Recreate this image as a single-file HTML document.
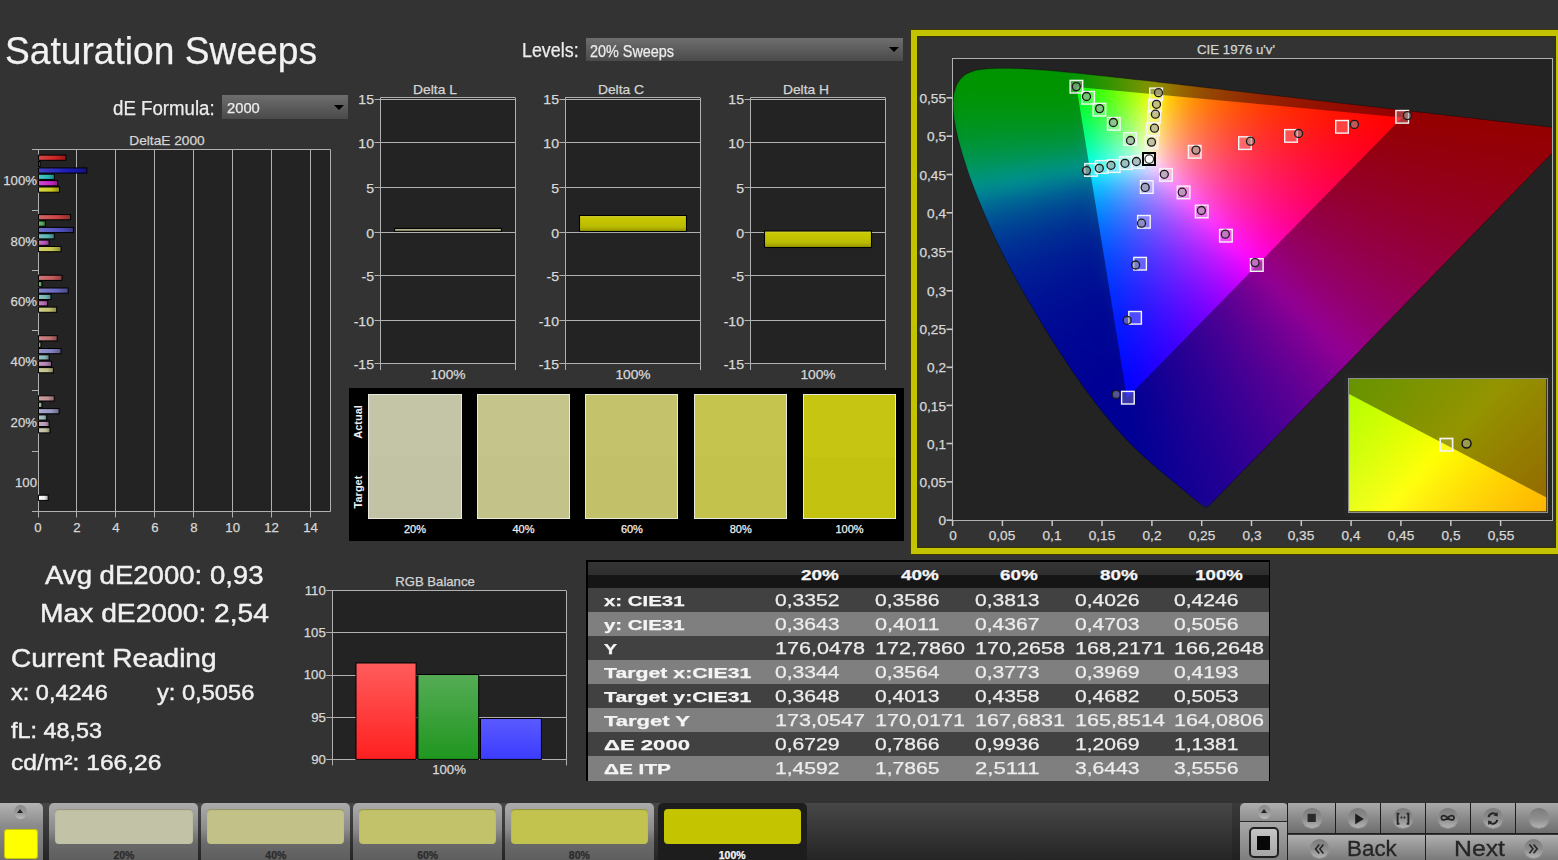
<!DOCTYPE html><html><head><meta charset="utf-8"><style>html,body{margin:0;padding:0}body{width:1558px;height:860px;position:relative;overflow:hidden;background:#333;font-family:"Liberation Sans",sans-serif}.t{position:absolute;line-height:1;white-space:nowrap;-webkit-text-stroke:0.25px currentColor}svg{overflow:visible}</style></head><body><span class="t" style="left:5.0px;top:30.6px;font-size:39.00px;color:#f2f2f2;transform:scaleX(0.9530);transform-origin:0 0;">Saturation Sweeps</span><span class="t" style="left:113.3px;top:98.8px;font-size:19.50px;color:#ececec;transform:scaleX(0.9567);transform-origin:0 0;">dE Formula:</span><div style="position:absolute;left:222.0px;top:95.0px;width:126.0px;height:24.0px;background:linear-gradient(#6e6e6e,#4a4a4a);"></div><div style="position:absolute;left:334px;top:105px;width:0;height:0;border-left:5px solid transparent;border-right:5px solid transparent;border-top:5px solid #000"></div><span class="t" style="left:226.5px;top:101.4px;font-size:14.60px;color:#ececec;transform:scaleX(1.0102);transform-origin:0 0;">2000</span><span class="t" style="left:522.2px;top:41.3px;font-size:19.50px;color:#ececec;transform:scaleX(0.9159);transform-origin:0 0;">Levels:</span><div style="position:absolute;left:586.0px;top:38.0px;width:317.0px;height:23.0px;background:linear-gradient(#6e6e6e,#4a4a4a);"></div><div style="position:absolute;left:889px;top:47px;width:0;height:0;border-left:5px solid transparent;border-right:5px solid transparent;border-top:5px solid #000"></div><span class="t" style="left:590.4px;top:42.9px;font-size:16.40px;color:#ececec;transform:scaleX(0.8780);transform-origin:0 0;">20% Sweeps</span><svg style="position:absolute;left:0;top:0" width="1558" height="860"><defs><linearGradient id="bg00" x1="0" y1="0" x2="1" y2="0"><stop offset="0" stop-color="#d84b4b"/><stop offset="0.6" stop-color="#d02424"/><stop offset="1" stop-color="#911919"/></linearGradient><linearGradient id="bg01" x1="0" y1="0" x2="1" y2="0"><stop offset="0" stop-color="#77b777"/><stop offset="0.6" stop-color="#5aa85a"/><stop offset="1" stop-color="#3e753e"/></linearGradient><linearGradient id="bg02" x1="0" y1="0" x2="1" y2="0"><stop offset="0" stop-color="#4444c4"/><stop offset="0.6" stop-color="#1c1cb8"/><stop offset="1" stop-color="#131380"/></linearGradient><linearGradient id="bg03" x1="0" y1="0" x2="1" y2="0"><stop offset="0" stop-color="#50c4c4"/><stop offset="0.6" stop-color="#2ab8b8"/><stop offset="1" stop-color="#1d8080"/></linearGradient><linearGradient id="bg04" x1="0" y1="0" x2="1" y2="0"><stop offset="0" stop-color="#d14ed1"/><stop offset="0.6" stop-color="#c828c8"/><stop offset="1" stop-color="#8c1c8c"/></linearGradient><linearGradient id="bg05" x1="0" y1="0" x2="1" y2="0"><stop offset="0" stop-color="#d5d549"/><stop offset="0.6" stop-color="#cccc22"/><stop offset="1" stop-color="#8e8e17"/></linearGradient><linearGradient id="bg10" x1="0" y1="0" x2="1" y2="0"><stop offset="0" stop-color="#d16565"/><stop offset="0.6" stop-color="#c84444"/><stop offset="1" stop-color="#8c2f2f"/></linearGradient><linearGradient id="bg11" x1="0" y1="0" x2="1" y2="0"><stop offset="0" stop-color="#71b771"/><stop offset="0.6" stop-color="#52a852"/><stop offset="1" stop-color="#397539"/></linearGradient><linearGradient id="bg12" x1="0" y1="0" x2="1" y2="0"><stop offset="0" stop-color="#6f6fcb"/><stop offset="0.6" stop-color="#5050c0"/><stop offset="1" stop-color="#383886"/></linearGradient><linearGradient id="bg13" x1="0" y1="0" x2="1" y2="0"><stop offset="0" stop-color="#79c1c1"/><stop offset="0.6" stop-color="#5cb4b4"/><stop offset="1" stop-color="#407d7d"/></linearGradient><linearGradient id="bg14" x1="0" y1="0" x2="1" y2="0"><stop offset="0" stop-color="#c472c4"/><stop offset="0.6" stop-color="#b854b8"/><stop offset="1" stop-color="#803a80"/></linearGradient><linearGradient id="bg15" x1="0" y1="0" x2="1" y2="0"><stop offset="0" stop-color="#d1d16f"/><stop offset="0.6" stop-color="#c8c850"/><stop offset="1" stop-color="#8c8c38"/></linearGradient><linearGradient id="bg20" x1="0" y1="0" x2="1" y2="0"><stop offset="0" stop-color="#ce7777"/><stop offset="0.6" stop-color="#c45a5a"/><stop offset="1" stop-color="#893e3e"/></linearGradient><linearGradient id="bg21" x1="0" y1="0" x2="1" y2="0"><stop offset="0" stop-color="#7cb77c"/><stop offset="0.6" stop-color="#60a860"/><stop offset="1" stop-color="#437543"/></linearGradient><linearGradient id="bg22" x1="0" y1="0" x2="1" y2="0"><stop offset="0" stop-color="#8383cb"/><stop offset="0.6" stop-color="#6868c0"/><stop offset="1" stop-color="#484886"/></linearGradient><linearGradient id="bg23" x1="0" y1="0" x2="1" y2="0"><stop offset="0" stop-color="#8dc1c1"/><stop offset="0.6" stop-color="#74b4b4"/><stop offset="1" stop-color="#517d7d"/></linearGradient><linearGradient id="bg24" x1="0" y1="0" x2="1" y2="0"><stop offset="0" stop-color="#c186c1"/><stop offset="0.6" stop-color="#b46cb4"/><stop offset="1" stop-color="#7d4b7d"/></linearGradient><linearGradient id="bg25" x1="0" y1="0" x2="1" y2="0"><stop offset="0" stop-color="#cece89"/><stop offset="0.6" stop-color="#c4c470"/><stop offset="1" stop-color="#89894e"/></linearGradient><linearGradient id="bg30" x1="0" y1="0" x2="1" y2="0"><stop offset="0" stop-color="#cb8989"/><stop offset="0.6" stop-color="#c07070"/><stop offset="1" stop-color="#864e4e"/></linearGradient><linearGradient id="bg31" x1="0" y1="0" x2="1" y2="0"><stop offset="0" stop-color="#8dba8d"/><stop offset="0.6" stop-color="#74ac74"/><stop offset="1" stop-color="#517851"/></linearGradient><linearGradient id="bg32" x1="0" y1="0" x2="1" y2="0"><stop offset="0" stop-color="#9696cb"/><stop offset="0.6" stop-color="#8080c0"/><stop offset="1" stop-color="#595986"/></linearGradient><linearGradient id="bg33" x1="0" y1="0" x2="1" y2="0"><stop offset="0" stop-color="#9dc1c1"/><stop offset="0.6" stop-color="#88b4b4"/><stop offset="1" stop-color="#5f7d7d"/></linearGradient><linearGradient id="bg34" x1="0" y1="0" x2="1" y2="0"><stop offset="0" stop-color="#c19ac1"/><stop offset="0.6" stop-color="#b484b4"/><stop offset="1" stop-color="#7d5c7d"/></linearGradient><linearGradient id="bg35" x1="0" y1="0" x2="1" y2="0"><stop offset="0" stop-color="#cbcb9d"/><stop offset="0.6" stop-color="#c0c088"/><stop offset="1" stop-color="#86865f"/></linearGradient><linearGradient id="bg40" x1="0" y1="0" x2="1" y2="0"><stop offset="0" stop-color="#cba3a3"/><stop offset="0.6" stop-color="#c09090"/><stop offset="1" stop-color="#866464"/></linearGradient><linearGradient id="bg41" x1="0" y1="0" x2="1" y2="0"><stop offset="0" stop-color="#a0c1a0"/><stop offset="0.6" stop-color="#8cb48c"/><stop offset="1" stop-color="#627d62"/></linearGradient><linearGradient id="bg42" x1="0" y1="0" x2="1" y2="0"><stop offset="0" stop-color="#aaaace"/><stop offset="0.6" stop-color="#9898c4"/><stop offset="1" stop-color="#6a6a89"/></linearGradient><linearGradient id="bg43" x1="0" y1="0" x2="1" y2="0"><stop offset="0" stop-color="#adc4c4"/><stop offset="0.6" stop-color="#9cb8b8"/><stop offset="1" stop-color="#6d8080"/></linearGradient><linearGradient id="bg44" x1="0" y1="0" x2="1" y2="0"><stop offset="0" stop-color="#c4adc4"/><stop offset="0.6" stop-color="#b89cb8"/><stop offset="1" stop-color="#806d80"/></linearGradient><linearGradient id="bg45" x1="0" y1="0" x2="1" y2="0"><stop offset="0" stop-color="#cbcbb1"/><stop offset="0.6" stop-color="#c0c0a0"/><stop offset="1" stop-color="#868670"/></linearGradient><linearGradient id="bgw" x1="0" y1="0" x2="1" y2="0"><stop offset="0" stop-color="#fff"/><stop offset="0.6" stop-color="#eee"/><stop offset="1" stop-color="#999"/></linearGradient></defs><rect x="38.0" y="149.7" width="292.6" height="361.8" fill="#232323"/><line x1="76.5" y1="149.7" x2="76.5" y2="517.5" stroke="#b0b0b0" stroke-width="1"/><line x1="115.5" y1="149.7" x2="115.5" y2="517.5" stroke="#b0b0b0" stroke-width="1"/><line x1="154.5" y1="149.7" x2="154.5" y2="517.5" stroke="#b0b0b0" stroke-width="1"/><line x1="193.5" y1="149.7" x2="193.5" y2="517.5" stroke="#b0b0b0" stroke-width="1"/><line x1="232.5" y1="149.7" x2="232.5" y2="517.5" stroke="#b0b0b0" stroke-width="1"/><line x1="271.5" y1="149.7" x2="271.5" y2="517.5" stroke="#b0b0b0" stroke-width="1"/><line x1="310.5" y1="149.7" x2="310.5" y2="517.5" stroke="#b0b0b0" stroke-width="1"/><line x1="38.5" y1="517.5" x2="38.5" y2="149.7" stroke="#b0b0b0" stroke-width="1"/><line x1="330.5" y1="511.5" x2="330.5" y2="149.7" stroke="#b0b0b0" stroke-width="1"/><line x1="32.0" y1="149.5" x2="330.6" y2="149.5" stroke="#b0b0b0" stroke-width="1"/><line x1="32.0" y1="511.5" x2="330.6" y2="511.5" stroke="#b0b0b0" stroke-width="1"/><line x1="32.0" y1="210.5" x2="38.0" y2="210.5" stroke="#b0b0b0" stroke-width="1"/><line x1="32.0" y1="270.5" x2="38.0" y2="270.5" stroke="#b0b0b0" stroke-width="1"/><line x1="32.0" y1="330.5" x2="38.0" y2="330.5" stroke="#b0b0b0" stroke-width="1"/><line x1="32.0" y1="390.5" x2="38.0" y2="390.5" stroke="#b0b0b0" stroke-width="1"/><line x1="32.0" y1="451.5" x2="38.0" y2="451.5" stroke="#b0b0b0" stroke-width="1"/><rect x="38.5" y="155.1" width="27.5" height="5.2" fill="url(#bg00)" stroke="#000" stroke-width="1"/><rect x="38.5" y="161.5" width="1.5" height="5.2" fill="url(#bg01)" stroke="#000" stroke-width="1"/><rect x="38.5" y="167.9" width="48.3" height="5.2" fill="url(#bg02)" stroke="#000" stroke-width="1"/><rect x="38.5" y="174.2" width="15.9" height="5.2" fill="url(#bg03)" stroke="#000" stroke-width="1"/><rect x="38.5" y="180.6" width="19.2" height="5.2" fill="url(#bg04)" stroke="#000" stroke-width="1"/><rect x="38.5" y="187.0" width="21.0" height="5.2" fill="url(#bg05)" stroke="#000" stroke-width="1"/><rect x="38.5" y="214.6" width="32.1" height="5.2" fill="url(#bg10)" stroke="#000" stroke-width="1"/><rect x="38.5" y="221.0" width="6.8" height="5.2" fill="url(#bg11)" stroke="#000" stroke-width="1"/><rect x="38.5" y="227.4" width="34.9" height="5.2" fill="url(#bg12)" stroke="#000" stroke-width="1"/><rect x="38.5" y="233.7" width="15.8" height="5.2" fill="url(#bg13)" stroke="#000" stroke-width="1"/><rect x="38.5" y="240.1" width="10.6" height="5.2" fill="url(#bg14)" stroke="#000" stroke-width="1"/><rect x="38.5" y="246.5" width="22.5" height="5.2" fill="url(#bg15)" stroke="#000" stroke-width="1"/><rect x="38.5" y="275.2" width="23.5" height="5.2" fill="url(#bg20)" stroke="#000" stroke-width="1"/><rect x="38.5" y="281.6" width="3.5" height="5.2" fill="url(#bg21)" stroke="#000" stroke-width="1"/><rect x="38.5" y="288.0" width="29.7" height="5.2" fill="url(#bg22)" stroke="#000" stroke-width="1"/><rect x="38.5" y="294.3" width="12.5" height="5.2" fill="url(#bg23)" stroke="#000" stroke-width="1"/><rect x="38.5" y="300.7" width="9.2" height="5.2" fill="url(#bg24)" stroke="#000" stroke-width="1"/><rect x="38.5" y="307.1" width="18.2" height="5.2" fill="url(#bg25)" stroke="#000" stroke-width="1"/><rect x="38.5" y="335.7" width="18.7" height="5.2" fill="url(#bg30)" stroke="#000" stroke-width="1"/><rect x="38.5" y="342.1" width="2.5" height="5.2" fill="url(#bg31)" stroke="#000" stroke-width="1"/><rect x="38.5" y="348.5" width="22.5" height="5.2" fill="url(#bg32)" stroke="#000" stroke-width="1"/><rect x="38.5" y="354.8" width="10.6" height="5.2" fill="url(#bg33)" stroke="#000" stroke-width="1"/><rect x="38.5" y="361.2" width="13.0" height="5.2" fill="url(#bg34)" stroke="#000" stroke-width="1"/><rect x="38.5" y="367.6" width="14.9" height="5.2" fill="url(#bg35)" stroke="#000" stroke-width="1"/><rect x="38.5" y="395.8" width="15.8" height="5.2" fill="url(#bg40)" stroke="#000" stroke-width="1"/><rect x="38.5" y="402.2" width="3.5" height="5.2" fill="url(#bg41)" stroke="#000" stroke-width="1"/><rect x="38.5" y="408.6" width="20.6" height="5.2" fill="url(#bg42)" stroke="#000" stroke-width="1"/><rect x="38.5" y="414.9" width="8.2" height="5.2" fill="url(#bg43)" stroke="#000" stroke-width="1"/><rect x="38.5" y="421.3" width="10.6" height="5.2" fill="url(#bg44)" stroke="#000" stroke-width="1"/><rect x="38.5" y="427.7" width="11.5" height="5.2" fill="url(#bg45)" stroke="#000" stroke-width="1"/><rect x="38.5" y="495.2" width="9.7" height="5.2" fill="url(#bgw)" stroke="#000" stroke-width="1"/></svg><span class="t" style="left:167.4px;top:133.8px;font-size:13.20px;color:#d4d4d4;transform:translateX(-50%) scaleX(1.0400);transform-origin:50% 0;">DeltaE 2000</span><span class="t" style="left:37.0px;top:174.3px;font-size:13.20px;color:#d8d8d8;transform:translateX(-100%);transform-origin:100% 0;">100%</span><span class="t" style="left:37.0px;top:234.6px;font-size:13.20px;color:#d8d8d8;transform:translateX(-100%);transform-origin:100% 0;">80%</span><span class="t" style="left:37.0px;top:295.0px;font-size:13.20px;color:#d8d8d8;transform:translateX(-100%);transform-origin:100% 0;">60%</span><span class="t" style="left:37.0px;top:355.4px;font-size:13.20px;color:#d8d8d8;transform:translateX(-100%);transform-origin:100% 0;">40%</span><span class="t" style="left:37.0px;top:415.8px;font-size:13.20px;color:#d8d8d8;transform:translateX(-100%);transform-origin:100% 0;">20%</span><span class="t" style="left:37.0px;top:475.8px;font-size:13.20px;color:#d8d8d8;transform:translateX(-100%);transform-origin:100% 0;">100</span><span class="t" style="left:38.0px;top:521.0px;font-size:13.20px;color:#d8d8d8;transform:translateX(-50%);transform-origin:50% 0;">0</span><span class="t" style="left:76.9px;top:521.0px;font-size:13.20px;color:#d8d8d8;transform:translateX(-50%);transform-origin:50% 0;">2</span><span class="t" style="left:115.9px;top:521.0px;font-size:13.20px;color:#d8d8d8;transform:translateX(-50%);transform-origin:50% 0;">4</span><span class="t" style="left:154.8px;top:521.0px;font-size:13.20px;color:#d8d8d8;transform:translateX(-50%);transform-origin:50% 0;">6</span><span class="t" style="left:193.8px;top:521.0px;font-size:13.20px;color:#d8d8d8;transform:translateX(-50%);transform-origin:50% 0;">8</span><span class="t" style="left:232.7px;top:521.0px;font-size:13.20px;color:#d8d8d8;transform:translateX(-50%);transform-origin:50% 0;">10</span><span class="t" style="left:271.6px;top:521.0px;font-size:13.20px;color:#d8d8d8;transform:translateX(-50%);transform-origin:50% 0;">12</span><span class="t" style="left:310.6px;top:521.0px;font-size:13.20px;color:#d8d8d8;transform:translateX(-50%);transform-origin:50% 0;">14</span><svg style="position:absolute;left:0;top:0" width="1558" height="860"><defs><linearGradient id="yb" x1="0" y1="0" x2="0" y2="1"><stop offset="0" stop-color="#dcdc58"/><stop offset="0.14" stop-color="#c8c800"/><stop offset="0.68" stop-color="#bcbc00"/><stop offset="1" stop-color="#949400"/></linearGradient></defs><rect x="380.5" y="98.3" width="134.7" height="265.7" fill="#232323"/><line x1="374.5" y1="99.5" x2="515.2" y2="99.5" stroke="#b0b0b0" stroke-width="1"/><line x1="374.5" y1="142.5" x2="515.2" y2="142.5" stroke="#b0b0b0" stroke-width="1"/><line x1="374.5" y1="187.5" x2="515.2" y2="187.5" stroke="#b0b0b0" stroke-width="1"/><line x1="374.5" y1="232.5" x2="515.2" y2="232.5" stroke="#b0b0b0" stroke-width="1"/><line x1="374.5" y1="275.5" x2="515.2" y2="275.5" stroke="#b0b0b0" stroke-width="1"/><line x1="374.5" y1="320.5" x2="515.2" y2="320.5" stroke="#b0b0b0" stroke-width="1"/><line x1="374.5" y1="363.5" x2="515.2" y2="363.5" stroke="#b0b0b0" stroke-width="1"/><line x1="380.5" y1="97.5" x2="515.2" y2="97.5" stroke="#b0b0b0" stroke-width="1"/><line x1="380.5" y1="97.6" x2="380.5" y2="370.0" stroke="#b0b0b0" stroke-width="1"/><line x1="515.5" y1="97.6" x2="515.5" y2="370.0" stroke="#b0b0b0" stroke-width="1"/><rect x="394.5" y="228.4" width="107.0" height="2.9" fill="#b0b088" stroke="#000" stroke-width="1.1"/></svg><span class="t" style="left:435.0px;top:83.1px;font-size:13.30px;color:#d4d4d4;transform:translateX(-50%) scaleX(1.0400);transform-origin:50% 0;">Delta L</span><span class="t" style="left:374.0px;top:92.9px;font-size:13.00px;color:#d8d8d8;transform:translateX(-100%) scaleX(1.0800);transform-origin:100% 0;">15</span><span class="t" style="left:374.0px;top:137.0px;font-size:13.00px;color:#d8d8d8;transform:translateX(-100%) scaleX(1.0800);transform-origin:100% 0;">10</span><span class="t" style="left:374.0px;top:182.1px;font-size:13.00px;color:#d8d8d8;transform:translateX(-100%) scaleX(1.0800);transform-origin:100% 0;">5</span><span class="t" style="left:374.0px;top:227.0px;font-size:13.00px;color:#d8d8d8;transform:translateX(-100%) scaleX(1.0800);transform-origin:100% 0;">0</span><span class="t" style="left:374.0px;top:269.8px;font-size:13.00px;color:#d8d8d8;transform:translateX(-100%) scaleX(1.0800);transform-origin:100% 0;">-5</span><span class="t" style="left:374.0px;top:315.1px;font-size:13.00px;color:#d8d8d8;transform:translateX(-100%) scaleX(1.0800);transform-origin:100% 0;">-10</span><span class="t" style="left:374.0px;top:358.2px;font-size:13.00px;color:#d8d8d8;transform:translateX(-100%) scaleX(1.0800);transform-origin:100% 0;">-15</span><span class="t" style="left:447.9px;top:367.8px;font-size:13.00px;color:#d8d8d8;transform:translateX(-50%) scaleX(1.0600);transform-origin:50% 0;">100%</span><svg style="position:absolute;left:0;top:0" width="1558" height="860"><defs><linearGradient id="yb" x1="0" y1="0" x2="0" y2="1"><stop offset="0" stop-color="#dcdc58"/><stop offset="0.14" stop-color="#c8c800"/><stop offset="0.68" stop-color="#bcbc00"/><stop offset="1" stop-color="#949400"/></linearGradient></defs><rect x="565.3" y="98.3" width="134.7" height="265.7" fill="#232323"/><line x1="559.3" y1="99.5" x2="700.0" y2="99.5" stroke="#b0b0b0" stroke-width="1"/><line x1="559.3" y1="142.5" x2="700.0" y2="142.5" stroke="#b0b0b0" stroke-width="1"/><line x1="559.3" y1="187.5" x2="700.0" y2="187.5" stroke="#b0b0b0" stroke-width="1"/><line x1="559.3" y1="232.5" x2="700.0" y2="232.5" stroke="#b0b0b0" stroke-width="1"/><line x1="559.3" y1="275.5" x2="700.0" y2="275.5" stroke="#b0b0b0" stroke-width="1"/><line x1="559.3" y1="320.5" x2="700.0" y2="320.5" stroke="#b0b0b0" stroke-width="1"/><line x1="559.3" y1="363.5" x2="700.0" y2="363.5" stroke="#b0b0b0" stroke-width="1"/><line x1="565.3" y1="97.5" x2="700.0" y2="97.5" stroke="#b0b0b0" stroke-width="1"/><line x1="565.5" y1="97.6" x2="565.5" y2="370.0" stroke="#b0b0b0" stroke-width="1"/><line x1="700.5" y1="97.6" x2="700.5" y2="370.0" stroke="#b0b0b0" stroke-width="1"/><rect x="579.5" y="215.5" width="107.0" height="16.0" fill="url(#yb)" stroke="#000" stroke-width="1.1"/></svg><span class="t" style="left:620.7px;top:83.1px;font-size:13.30px;color:#d4d4d4;transform:translateX(-50%) scaleX(1.0400);transform-origin:50% 0;">Delta C</span><span class="t" style="left:559.0px;top:92.9px;font-size:13.00px;color:#d8d8d8;transform:translateX(-100%) scaleX(1.0800);transform-origin:100% 0;">15</span><span class="t" style="left:559.0px;top:137.0px;font-size:13.00px;color:#d8d8d8;transform:translateX(-100%) scaleX(1.0800);transform-origin:100% 0;">10</span><span class="t" style="left:559.0px;top:182.1px;font-size:13.00px;color:#d8d8d8;transform:translateX(-100%) scaleX(1.0800);transform-origin:100% 0;">5</span><span class="t" style="left:559.0px;top:227.0px;font-size:13.00px;color:#d8d8d8;transform:translateX(-100%) scaleX(1.0800);transform-origin:100% 0;">0</span><span class="t" style="left:559.0px;top:269.8px;font-size:13.00px;color:#d8d8d8;transform:translateX(-100%) scaleX(1.0800);transform-origin:100% 0;">-5</span><span class="t" style="left:559.0px;top:315.1px;font-size:13.00px;color:#d8d8d8;transform:translateX(-100%) scaleX(1.0800);transform-origin:100% 0;">-10</span><span class="t" style="left:559.0px;top:358.2px;font-size:13.00px;color:#d8d8d8;transform:translateX(-100%) scaleX(1.0800);transform-origin:100% 0;">-15</span><span class="t" style="left:632.6px;top:367.8px;font-size:13.00px;color:#d8d8d8;transform:translateX(-50%) scaleX(1.0600);transform-origin:50% 0;">100%</span><svg style="position:absolute;left:0;top:0" width="1558" height="860"><defs><linearGradient id="yb" x1="0" y1="0" x2="0" y2="1"><stop offset="0" stop-color="#dcdc58"/><stop offset="0.14" stop-color="#c8c800"/><stop offset="0.68" stop-color="#bcbc00"/><stop offset="1" stop-color="#949400"/></linearGradient></defs><rect x="750.5" y="98.3" width="134.7" height="265.7" fill="#232323"/><line x1="744.5" y1="99.5" x2="885.2" y2="99.5" stroke="#b0b0b0" stroke-width="1"/><line x1="744.5" y1="142.5" x2="885.2" y2="142.5" stroke="#b0b0b0" stroke-width="1"/><line x1="744.5" y1="187.5" x2="885.2" y2="187.5" stroke="#b0b0b0" stroke-width="1"/><line x1="744.5" y1="232.5" x2="885.2" y2="232.5" stroke="#b0b0b0" stroke-width="1"/><line x1="744.5" y1="275.5" x2="885.2" y2="275.5" stroke="#b0b0b0" stroke-width="1"/><line x1="744.5" y1="320.5" x2="885.2" y2="320.5" stroke="#b0b0b0" stroke-width="1"/><line x1="744.5" y1="363.5" x2="885.2" y2="363.5" stroke="#b0b0b0" stroke-width="1"/><line x1="750.5" y1="97.5" x2="885.2" y2="97.5" stroke="#b0b0b0" stroke-width="1"/><line x1="750.5" y1="97.6" x2="750.5" y2="370.0" stroke="#b0b0b0" stroke-width="1"/><line x1="885.5" y1="97.6" x2="885.5" y2="370.0" stroke="#b0b0b0" stroke-width="1"/><rect x="764.5" y="231.0" width="107.0" height="16.5" fill="url(#yb)" stroke="#000" stroke-width="1.1"/></svg><span class="t" style="left:805.7px;top:83.1px;font-size:13.30px;color:#d4d4d4;transform:translateX(-50%) scaleX(1.0400);transform-origin:50% 0;">Delta H</span><span class="t" style="left:744.0px;top:92.9px;font-size:13.00px;color:#d8d8d8;transform:translateX(-100%) scaleX(1.0800);transform-origin:100% 0;">15</span><span class="t" style="left:744.0px;top:137.0px;font-size:13.00px;color:#d8d8d8;transform:translateX(-100%) scaleX(1.0800);transform-origin:100% 0;">10</span><span class="t" style="left:744.0px;top:182.1px;font-size:13.00px;color:#d8d8d8;transform:translateX(-100%) scaleX(1.0800);transform-origin:100% 0;">5</span><span class="t" style="left:744.0px;top:227.0px;font-size:13.00px;color:#d8d8d8;transform:translateX(-100%) scaleX(1.0800);transform-origin:100% 0;">0</span><span class="t" style="left:744.0px;top:269.8px;font-size:13.00px;color:#d8d8d8;transform:translateX(-100%) scaleX(1.0800);transform-origin:100% 0;">-5</span><span class="t" style="left:744.0px;top:315.1px;font-size:13.00px;color:#d8d8d8;transform:translateX(-100%) scaleX(1.0800);transform-origin:100% 0;">-10</span><span class="t" style="left:744.0px;top:358.2px;font-size:13.00px;color:#d8d8d8;transform:translateX(-100%) scaleX(1.0800);transform-origin:100% 0;">-15</span><span class="t" style="left:817.9px;top:367.8px;font-size:13.00px;color:#d8d8d8;transform:translateX(-50%) scaleX(1.0600);transform-origin:50% 0;">100%</span><div style="position:absolute;left:349.2px;top:388.0px;width:554.5px;height:152.6px;background:#000;"></div><div style="position:absolute;left:368.2px;top:393.9px;width:93.6px;height:125.1px;box-sizing:border-box;border:1.3px solid #e8e8dc;background:linear-gradient(#c4c4a6 0,#c4c4a6 50%,#c2c2a4 50%,#c2c2a4 100%);"></div><span class="t" style="left:415.0px;top:523.7px;font-size:11.00px;color:#f0f0f0;transform:translateX(-50%);transform-origin:50% 0;">20%</span><div style="position:absolute;left:477.2px;top:393.9px;width:92.6px;height:125.1px;box-sizing:border-box;border:1.3px solid #e8e8dc;background:linear-gradient(#c5c48a 0,#c5c48a 50%,#c3c288 50%,#c3c288 100%);"></div><span class="t" style="left:523.5px;top:523.7px;font-size:11.00px;color:#f0f0f0;transform:translateX(-50%);transform-origin:50% 0;">40%</span><div style="position:absolute;left:585.2px;top:393.9px;width:93.3px;height:125.1px;box-sizing:border-box;border:1.3px solid #e8e8dc;background:linear-gradient(#c4c36c 0,#c4c36c 50%,#c2c16a 50%,#c2c16a 100%);"></div><span class="t" style="left:631.9px;top:523.7px;font-size:11.00px;color:#f0f0f0;transform:translateX(-50%);transform-origin:50% 0;">60%</span><div style="position:absolute;left:694.2px;top:393.9px;width:92.9px;height:125.1px;box-sizing:border-box;border:1.3px solid #e8e8dc;background:linear-gradient(#c5c44e 0,#c5c44e 50%,#c3c24c 50%,#c3c24c 100%);"></div><span class="t" style="left:740.7px;top:523.7px;font-size:11.00px;color:#f0f0f0;transform:translateX(-50%);transform-origin:50% 0;">80%</span><div style="position:absolute;left:802.9px;top:393.9px;width:93.3px;height:125.1px;box-sizing:border-box;border:1.3px solid #e8e8dc;background:linear-gradient(#c6c512 0,#c6c512 50%,#c3c210 50%,#c3c210 100%);"></div><span class="t" style="left:849.5px;top:523.7px;font-size:11.00px;color:#f0f0f0;transform:translateX(-50%);transform-origin:50% 0;">100%</span><div style="position:absolute;left:357.6px;top:422px;transform:translate(-50%,-50%) rotate(-90deg);font-size:11px;font-weight:bold;color:#eee;line-height:1;white-space:nowrap">Actual</div><div style="position:absolute;left:357.6px;top:492px;transform:translate(-50%,-50%) rotate(-90deg);font-size:11px;font-weight:bold;color:#eee;line-height:1;white-space:nowrap">Target</div><div style="position:absolute;left:911.0px;top:30.0px;width:651.0px;height:523.7px;box-sizing:border-box;border:6.6px solid #c3c300;background:#333;box-shadow:0 0 0 1px #3c3a0a,inset 0 0 0 1.2px #35330a;"></div><div style="position:absolute;left:952.6px;top:58.5px;width:600.2px;height:461.7px;background:#232323;"></div><svg style="position:absolute;left:911px;top:30px" width="647" height="524" viewBox="911 30 647 524"><defs><clipPath id="plotclip"><rect x="953" y="59" width="599.5" height="461"/></clipPath><clipPath id="locclip"><path d="M1208.3 506.4 L1208.2 506.5 L1208.1 506.5 L1208.0 506.6 L1207.8 506.6 L1207.7 506.7 L1207.6 506.7 L1207.4 506.7 L1207.3 506.8 L1207.2 506.8 L1207.0 506.9 L1206.9 506.9 L1206.7 507.0 L1206.5 507.0 L1206.2 507.0 L1206.0 507.0 L1205.7 507.0 L1205.4 507.0 L1205.2 507.0 L1204.9 506.9 L1204.7 506.8 L1204.5 506.7 L1204.3 506.6 L1204.0 506.4 L1203.7 506.2 L1203.3 506.0 L1202.9 505.8 L1202.5 505.5 L1202.1 505.2 L1201.6 504.9 L1201.1 504.5 L1200.6 504.1 L1200.1 503.7 L1199.5 503.3 L1198.9 502.8 L1198.3 502.4 L1197.6 501.8 L1196.9 501.2 L1196.1 500.6 L1195.2 499.9 L1194.4 499.2 L1193.5 498.5 L1192.5 497.7 L1191.6 496.9 L1190.6 496.1 L1189.5 495.2 L1188.5 494.2 L1187.3 493.3 L1186.2 492.3 L1185.0 491.3 L1183.7 490.2 L1182.4 489.2 L1181.1 488.0 L1179.6 486.9 L1178.1 485.6 L1176.5 484.3 L1174.9 483.0 L1173.1 481.6 L1171.3 480.1 L1169.5 478.6 L1167.6 477.0 L1165.6 475.4 L1163.6 473.7 L1161.5 472.0 L1159.4 470.2 L1157.1 468.3 L1154.8 466.3 L1152.4 464.3 L1150.0 462.1 L1147.4 459.8 L1144.8 457.4 L1142.0 454.9 L1139.2 452.3 L1136.4 449.5 L1133.4 446.7 L1130.4 443.7 L1127.3 440.5 L1124.0 437.0 L1120.5 433.2 L1116.7 428.9 L1112.8 424.4 L1108.7 419.5 L1104.5 414.4 L1100.1 408.9 L1095.6 403.2 L1091.0 397.1 L1086.2 390.7 L1081.4 384.0 L1076.4 377.0 L1071.3 369.7 L1066.2 362.1 L1061.1 354.3 L1055.8 346.0 L1050.4 337.5 L1045.0 328.8 L1039.6 319.9 L1034.4 311.1 L1029.1 302.1 L1023.8 292.9 L1018.5 283.6 L1013.4 274.2 L1008.4 265.0 L1003.7 255.8 L999.2 246.8 L994.9 237.7 L990.8 228.7 L986.9 219.8 L983.2 211.2 L979.7 202.8 L976.5 194.8 L973.5 186.9 L970.6 179.2 L968.0 171.9 L965.7 164.8 L963.5 158.1 L961.6 151.8 L959.9 145.8 L958.4 140.2 L957.1 134.8 L956.0 129.7 L955.1 124.9 L954.3 120.4 L953.7 116.2 L953.3 112.3 L953.1 108.6 L953.0 105.1 L953.0 101.8 L953.2 98.6 L953.6 95.7 L954.0 93.0 L954.7 90.5 L955.4 88.1 L956.2 85.9 L957.2 83.8 L958.3 81.9 L959.6 80.2 L960.9 78.6 L962.4 77.1 L963.9 75.8 L965.5 74.6 L967.2 73.6 L969.0 72.7 L970.8 71.9 L972.7 71.3 L974.7 70.7 L976.7 70.1 L978.8 69.7 L980.9 69.4 L983.1 69.2 L985.4 68.9 L987.6 68.7 L989.9 68.6 L992.2 68.5 L994.5 68.4 L996.9 68.3 L999.3 68.3 L1001.6 68.3 L1004.0 68.3 L1006.4 68.3 L1008.7 68.3 L1011.1 68.3 L1013.5 68.4 L1015.9 68.5 L1018.3 68.5 L1020.8 68.6 L1023.2 68.7 L1025.7 68.9 L1028.2 69.0 L1030.8 69.2 L1033.4 69.3 L1036.0 69.5 L1038.6 69.7 L1041.3 69.9 L1044.1 70.1 L1046.8 70.3 L1049.6 70.5 L1052.5 70.8 L1055.3 71.0 L1058.3 71.3 L1061.2 71.6 L1064.2 71.9 L1067.3 72.2 L1070.4 72.5 L1073.6 72.8 L1076.8 73.1 L1080.1 73.5 L1083.4 73.8 L1086.8 74.2 L1090.2 74.5 L1093.7 74.9 L1097.3 75.3 L1100.9 75.7 L1104.6 76.1 L1108.4 76.5 L1112.2 76.9 L1116.1 77.4 L1120.0 77.8 L1124.0 78.3 L1128.1 78.7 L1132.3 79.2 L1136.5 79.7 L1140.8 80.1 L1145.1 80.6 L1149.6 81.1 L1154.1 81.6 L1158.7 82.2 L1163.3 82.7 L1168.1 83.2 L1172.8 83.8 L1177.7 84.3 L1182.7 84.9 L1187.7 85.5 L1192.8 86.1 L1197.9 86.7 L1203.1 87.3 L1208.4 87.9 L1213.8 88.5 L1219.2 89.1 L1224.8 89.8 L1230.3 90.4 L1236.0 91.1 L1241.7 91.7 L1247.4 92.4 L1253.2 93.0 L1259.1 93.7 L1265.0 94.4 L1271.0 95.1 L1277.0 95.7 L1283.0 96.4 L1289.0 97.1 L1295.1 97.8 L1301.2 98.5 L1307.4 99.3 L1313.4 100.0 L1319.5 100.7 L1325.5 101.3 L1331.4 102.0 L1337.3 102.7 L1343.2 103.4 L1349.0 104.1 L1354.9 104.7 L1360.7 105.4 L1366.5 106.1 L1372.4 106.7 L1378.1 107.4 L1383.8 108.0 L1389.3 108.7 L1394.8 109.3 L1400.1 109.9 L1405.4 110.5 L1410.5 111.1 L1415.6 111.7 L1420.5 112.2 L1425.4 112.8 L1430.2 113.3 L1434.8 113.9 L1439.4 114.4 L1443.8 114.9 L1448.1 115.4 L1452.3 115.9 L1456.4 116.4 L1460.4 116.8 L1464.2 117.3 L1468.0 117.7 L1471.6 118.1 L1475.1 118.5 L1478.5 118.9 L1481.9 119.3 L1485.1 119.7 L1488.2 120.0 L1491.2 120.4 L1494.2 120.7 L1497.1 121.0 L1499.9 121.4 L1502.6 121.7 L1505.2 122.0 L1507.8 122.3 L1510.4 122.6 L1512.9 122.9 L1515.3 123.1 L1517.7 123.4 L1520.0 123.7 L1522.2 123.9 L1524.3 124.2 L1526.2 124.4 L1528.1 124.6 L1530.0 124.8 L1532.0 125.1 L1534.3 125.3 L1537.0 125.6 L1540.0 126.0 L1543.2 126.3 L1546.3 126.7 L1549.2 127.0 L1551.8 127.3 L1554.0 127.6 L1555.8 127.8 L1557.5 128.0 L1559.1 128.2 L1560.6 128.3 L1562.2 128.5 L1563.8 128.7 L1565.5 128.9 L1567.1 129.1 L1568.6 129.3 L1570.0 129.4 L1571.2 129.6 L1572.1 129.7 L1572.9 129.8 L1573.5 129.8 L1574.0 129.9 L1574.4 129.9 L1574.7 130.0Z"/></clipPath><clipPath id="triclip"><path d="M1402.1 117.4 L1076.5 86.9 L1127.0 397.9Z"/></clipPath><filter id="bo" color-interpolation-filters="sRGB" x="-5%" y="-5%" width="110%" height="110%"><feGaussianBlur stdDeviation="8"/></filter><filter id="bt" color-interpolation-filters="sRGB" x="-5%" y="-5%" width="110%" height="110%"><feGaussianBlur stdDeviation="5.5"/></filter><style>#og rect{width:10px;height:10px}#tg rect{width:7px;height:7px}</style></defs><g clip-path="url(#plotclip)"><g clip-path="url(#locclip)"><g id="og" filter="url(#bo)"><rect x="944" y="56" width="10" height="10" fill="#009400"/><rect x="954" y="56" width="10" height="10" fill="#009400"/><rect x="964" y="56" width="10" height="10" fill="#009400"/><rect x="974" y="56" width="10" height="10" fill="#009400"/><rect x="984" y="56" width="10" height="10" fill="#009400"/><rect x="994" y="56" width="10" height="10" fill="#009400"/><rect x="1004" y="56" width="10" height="10" fill="#009400"/><rect x="1014" y="56" width="10" height="10" fill="#009400"/><rect x="1024" y="56" width="10" height="10" fill="#009400"/><rect x="1034" y="56" width="10" height="10" fill="#009400"/><rect x="1044" y="56" width="10" height="10" fill="#009400"/><rect x="1054" y="56" width="10" height="10" fill="#009400"/><rect x="1064" y="56" width="10" height="10" fill="#009400"/><rect x="1074" y="56" width="10" height="10" fill="#099400"/><rect x="1084" y="56" width="10" height="10" fill="#179400"/><rect x="1094" y="56" width="10" height="10" fill="#269400"/><rect x="1104" y="56" width="10" height="10" fill="#369400"/><rect x="1114" y="56" width="10" height="10" fill="#479400"/><rect x="1124" y="56" width="10" height="10" fill="#589400"/><rect x="1134" y="56" width="10" height="10" fill="#6b9400"/><rect x="1144" y="56" width="10" height="10" fill="#7f9400"/><rect x="1154" y="56" width="10" height="10" fill="#949300"/><rect x="944" y="66" width="10" height="10" fill="#009400"/><rect x="954" y="66" width="10" height="10" fill="#009400"/><rect x="964" y="66" width="10" height="10" fill="#009400"/><rect x="974" y="66" width="10" height="10" fill="#009400"/><rect x="984" y="66" width="10" height="10" fill="#009400"/><rect x="994" y="66" width="10" height="10" fill="#009400"/><rect x="1004" y="66" width="10" height="10" fill="#009400"/><rect x="1014" y="66" width="10" height="10" fill="#009400"/><rect x="1024" y="66" width="10" height="10" fill="#009400"/><rect x="1034" y="66" width="10" height="10" fill="#009400"/><rect x="1044" y="66" width="10" height="10" fill="#009400"/><rect x="1054" y="66" width="10" height="10" fill="#009400"/><rect x="1064" y="66" width="10" height="10" fill="#009400"/><rect x="1074" y="66" width="10" height="10" fill="#079400"/><rect x="1084" y="66" width="10" height="10" fill="#169400"/><rect x="1094" y="66" width="10" height="10" fill="#259400"/><rect x="1104" y="66" width="10" height="10" fill="#359400"/><rect x="1114" y="66" width="10" height="10" fill="#469400"/><rect x="1124" y="66" width="10" height="10" fill="#599400"/><rect x="1134" y="66" width="10" height="10" fill="#6c9400"/><rect x="1144" y="66" width="10" height="10" fill="#819400"/><rect x="1154" y="66" width="10" height="10" fill="#949100"/><rect x="1164" y="66" width="10" height="10" fill="#947d00"/><rect x="1174" y="66" width="10" height="10" fill="#946d00"/><rect x="1184" y="66" width="10" height="10" fill="#946000"/><rect x="1194" y="66" width="10" height="10" fill="#945500"/><rect x="1204" y="66" width="10" height="10" fill="#944b00"/><rect x="1214" y="66" width="10" height="10" fill="#944300"/><rect x="1224" y="66" width="10" height="10" fill="#943c00"/><rect x="1234" y="66" width="10" height="10" fill="#943600"/><rect x="1244" y="66" width="10" height="10" fill="#943000"/><rect x="944" y="76" width="10" height="10" fill="#009401"/><rect x="954" y="76" width="10" height="10" fill="#009401"/><rect x="964" y="76" width="10" height="10" fill="#009400"/><rect x="974" y="76" width="10" height="10" fill="#009400"/><rect x="984" y="76" width="10" height="10" fill="#009400"/><rect x="994" y="76" width="10" height="10" fill="#009400"/><rect x="1004" y="76" width="10" height="10" fill="#009400"/><rect x="1014" y="76" width="10" height="10" fill="#009400"/><rect x="1024" y="76" width="10" height="10" fill="#009400"/><rect x="1034" y="76" width="10" height="10" fill="#009400"/><rect x="1044" y="76" width="10" height="10" fill="#009400"/><rect x="1054" y="76" width="10" height="10" fill="#009400"/><rect x="1064" y="76" width="10" height="10" fill="#009400"/><rect x="1074" y="76" width="10" height="10" fill="#059400"/><rect x="1084" y="76" width="10" height="10" fill="#149400"/><rect x="1094" y="76" width="10" height="10" fill="#239400"/><rect x="1104" y="76" width="10" height="10" fill="#349400"/><rect x="1114" y="76" width="10" height="10" fill="#469400"/><rect x="1124" y="76" width="10" height="10" fill="#599400"/><rect x="1134" y="76" width="10" height="10" fill="#6d9400"/><rect x="1144" y="76" width="10" height="10" fill="#829400"/><rect x="1154" y="76" width="10" height="10" fill="#948f00"/><rect x="1164" y="76" width="10" height="10" fill="#947b00"/><rect x="1174" y="76" width="10" height="10" fill="#946b00"/><rect x="1184" y="76" width="10" height="10" fill="#945e00"/><rect x="1194" y="76" width="10" height="10" fill="#945300"/><rect x="1204" y="76" width="10" height="10" fill="#944900"/><rect x="1214" y="76" width="10" height="10" fill="#944100"/><rect x="1224" y="76" width="10" height="10" fill="#943a00"/><rect x="1234" y="76" width="10" height="10" fill="#943400"/><rect x="1244" y="76" width="10" height="10" fill="#942e00"/><rect x="1254" y="76" width="10" height="10" fill="#942a00"/><rect x="1264" y="76" width="10" height="10" fill="#942500"/><rect x="1274" y="76" width="10" height="10" fill="#942100"/><rect x="1284" y="76" width="10" height="10" fill="#941e00"/><rect x="1294" y="76" width="10" height="10" fill="#941b00"/><rect x="1304" y="76" width="10" height="10" fill="#941800"/><rect x="1314" y="76" width="10" height="10" fill="#941500"/><rect x="1324" y="76" width="10" height="10" fill="#941200"/><rect x="1334" y="76" width="10" height="10" fill="#941000"/><rect x="944" y="86" width="10" height="10" fill="#009404"/><rect x="954" y="86" width="10" height="10" fill="#009404"/><rect x="964" y="86" width="10" height="10" fill="#009404"/><rect x="974" y="86" width="10" height="10" fill="#009403"/><rect x="984" y="86" width="10" height="10" fill="#009403"/><rect x="994" y="86" width="10" height="10" fill="#009403"/><rect x="1004" y="86" width="10" height="10" fill="#009403"/><rect x="1014" y="86" width="10" height="10" fill="#009402"/><rect x="1024" y="86" width="10" height="10" fill="#009402"/><rect x="1034" y="86" width="10" height="10" fill="#009402"/><rect x="1044" y="86" width="10" height="10" fill="#009401"/><rect x="1054" y="86" width="10" height="10" fill="#009401"/><rect x="1064" y="86" width="10" height="10" fill="#009401"/><rect x="1074" y="86" width="10" height="10" fill="#039405"/><rect x="1084" y="86" width="10" height="10" fill="#129404"/><rect x="1094" y="86" width="10" height="10" fill="#229403"/><rect x="1104" y="86" width="10" height="10" fill="#339402"/><rect x="1114" y="86" width="10" height="10" fill="#459400"/><rect x="1124" y="86" width="10" height="10" fill="#599400"/><rect x="1134" y="86" width="10" height="10" fill="#6e9400"/><rect x="1144" y="86" width="10" height="10" fill="#849400"/><rect x="1154" y="86" width="10" height="10" fill="#948c00"/><rect x="1164" y="86" width="10" height="10" fill="#947800"/><rect x="1174" y="86" width="10" height="10" fill="#946800"/><rect x="1184" y="86" width="10" height="10" fill="#945b00"/><rect x="1194" y="86" width="10" height="10" fill="#945000"/><rect x="1204" y="86" width="10" height="10" fill="#944700"/><rect x="1214" y="86" width="10" height="10" fill="#943f00"/><rect x="1224" y="86" width="10" height="10" fill="#943800"/><rect x="1234" y="86" width="10" height="10" fill="#943200"/><rect x="1244" y="86" width="10" height="10" fill="#942c00"/><rect x="1254" y="86" width="10" height="10" fill="#942800"/><rect x="1264" y="86" width="10" height="10" fill="#942300"/><rect x="1274" y="86" width="10" height="10" fill="#942000"/><rect x="1284" y="86" width="10" height="10" fill="#941c00"/><rect x="1294" y="86" width="10" height="10" fill="#941900"/><rect x="1304" y="86" width="10" height="10" fill="#941600"/><rect x="1314" y="86" width="10" height="10" fill="#941300"/><rect x="1324" y="86" width="10" height="10" fill="#941100"/><rect x="1334" y="86" width="10" height="10" fill="#940f00"/><rect x="1344" y="86" width="10" height="10" fill="#940c00"/><rect x="1354" y="86" width="10" height="10" fill="#940a00"/><rect x="1364" y="86" width="10" height="10" fill="#940900"/><rect x="1374" y="86" width="10" height="10" fill="#940700"/><rect x="1384" y="86" width="10" height="10" fill="#940500"/><rect x="1394" y="86" width="10" height="10" fill="#940400"/><rect x="1404" y="86" width="10" height="10" fill="#940200"/><rect x="1414" y="86" width="10" height="10" fill="#940100"/><rect x="944" y="96" width="10" height="10" fill="#009409"/><rect x="954" y="96" width="10" height="10" fill="#009409"/><rect x="964" y="96" width="10" height="10" fill="#009409"/><rect x="974" y="96" width="10" height="10" fill="#009409"/><rect x="984" y="96" width="10" height="10" fill="#009408"/><rect x="994" y="96" width="10" height="10" fill="#009408"/><rect x="1004" y="96" width="10" height="10" fill="#009408"/><rect x="1014" y="96" width="10" height="10" fill="#009408"/><rect x="1024" y="96" width="10" height="10" fill="#009407"/><rect x="1034" y="96" width="10" height="10" fill="#009407"/><rect x="1044" y="96" width="10" height="10" fill="#009407"/><rect x="1054" y="96" width="10" height="10" fill="#009406"/><rect x="1064" y="96" width="10" height="10" fill="#009406"/><rect x="1074" y="96" width="10" height="10" fill="#009413"/><rect x="1084" y="96" width="10" height="10" fill="#109413"/><rect x="1094" y="96" width="10" height="10" fill="#209412"/><rect x="1104" y="96" width="10" height="10" fill="#329411"/><rect x="1114" y="96" width="10" height="10" fill="#459410"/><rect x="1124" y="96" width="10" height="10" fill="#59940f"/><rect x="1134" y="96" width="10" height="10" fill="#6e940e"/><rect x="1144" y="96" width="10" height="10" fill="#86940d"/><rect x="1154" y="96" width="10" height="10" fill="#948a0b"/><rect x="1164" y="96" width="10" height="10" fill="#947608"/><rect x="1174" y="96" width="10" height="10" fill="#946606"/><rect x="1184" y="96" width="10" height="10" fill="#945904"/><rect x="1194" y="96" width="10" height="10" fill="#944e03"/><rect x="1204" y="96" width="10" height="10" fill="#944502"/><rect x="1214" y="96" width="10" height="10" fill="#943d01"/><rect x="1224" y="96" width="10" height="10" fill="#943600"/><rect x="1234" y="96" width="10" height="10" fill="#943000"/><rect x="1244" y="96" width="10" height="10" fill="#942a00"/><rect x="1254" y="96" width="10" height="10" fill="#942600"/><rect x="1264" y="96" width="10" height="10" fill="#942100"/><rect x="1274" y="96" width="10" height="10" fill="#941e00"/><rect x="1284" y="96" width="10" height="10" fill="#941a00"/><rect x="1294" y="96" width="10" height="10" fill="#941700"/><rect x="1304" y="96" width="10" height="10" fill="#941400"/><rect x="1314" y="96" width="10" height="10" fill="#941200"/><rect x="1324" y="96" width="10" height="10" fill="#940f00"/><rect x="1334" y="96" width="10" height="10" fill="#940d00"/><rect x="1344" y="96" width="10" height="10" fill="#940b00"/><rect x="1354" y="96" width="10" height="10" fill="#940900"/><rect x="1364" y="96" width="10" height="10" fill="#940700"/><rect x="1374" y="96" width="10" height="10" fill="#940600"/><rect x="1384" y="96" width="10" height="10" fill="#940400"/><rect x="1394" y="96" width="10" height="10" fill="#940300"/><rect x="1404" y="96" width="10" height="10" fill="#940100"/><rect x="1414" y="96" width="10" height="10" fill="#940000"/><rect x="1424" y="96" width="10" height="10" fill="#940000"/><rect x="1434" y="96" width="10" height="10" fill="#940000"/><rect x="1444" y="96" width="10" height="10" fill="#940000"/><rect x="1454" y="96" width="10" height="10" fill="#940000"/><rect x="1464" y="96" width="10" height="10" fill="#940000"/><rect x="1474" y="96" width="10" height="10" fill="#940000"/><rect x="1484" y="96" width="10" height="10" fill="#940000"/><rect x="1494" y="96" width="10" height="10" fill="#940000"/><rect x="1504" y="96" width="10" height="10" fill="#940000"/><rect x="944" y="106" width="10" height="10" fill="#009410"/><rect x="954" y="106" width="10" height="10" fill="#009410"/><rect x="964" y="106" width="10" height="10" fill="#009410"/><rect x="974" y="106" width="10" height="10" fill="#009410"/><rect x="984" y="106" width="10" height="10" fill="#009410"/><rect x="994" y="106" width="10" height="10" fill="#009410"/><rect x="1004" y="106" width="10" height="10" fill="#009410"/><rect x="1014" y="106" width="10" height="10" fill="#009410"/><rect x="1024" y="106" width="10" height="10" fill="#00940f"/><rect x="1034" y="106" width="10" height="10" fill="#00940f"/><rect x="1044" y="106" width="10" height="10" fill="#00940f"/><rect x="1054" y="106" width="10" height="10" fill="#00940f"/><rect x="1064" y="106" width="10" height="10" fill="#00940f"/><rect x="1074" y="106" width="10" height="10" fill="#00940e"/><rect x="1084" y="106" width="10" height="10" fill="#0e9422"/><rect x="1094" y="106" width="10" height="10" fill="#1f9422"/><rect x="1104" y="106" width="10" height="10" fill="#319422"/><rect x="1114" y="106" width="10" height="10" fill="#449421"/><rect x="1124" y="106" width="10" height="10" fill="#599421"/><rect x="1134" y="106" width="10" height="10" fill="#6f9420"/><rect x="1144" y="106" width="10" height="10" fill="#879420"/><rect x="1154" y="106" width="10" height="10" fill="#94871d"/><rect x="1164" y="106" width="10" height="10" fill="#947318"/><rect x="1174" y="106" width="10" height="10" fill="#946314"/><rect x="1184" y="106" width="10" height="10" fill="#945611"/><rect x="1194" y="106" width="10" height="10" fill="#944b0f"/><rect x="1204" y="106" width="10" height="10" fill="#94420d"/><rect x="1214" y="106" width="10" height="10" fill="#943a0b"/><rect x="1224" y="106" width="10" height="10" fill="#943409"/><rect x="1234" y="106" width="10" height="10" fill="#942e08"/><rect x="1244" y="106" width="10" height="10" fill="#942807"/><rect x="1254" y="106" width="10" height="10" fill="#942405"/><rect x="1264" y="106" width="10" height="10" fill="#942004"/><rect x="1274" y="106" width="10" height="10" fill="#941c04"/><rect x="1284" y="106" width="10" height="10" fill="#941803"/><rect x="1294" y="106" width="10" height="10" fill="#941502"/><rect x="1304" y="106" width="10" height="10" fill="#941301"/><rect x="1314" y="106" width="10" height="10" fill="#941001"/><rect x="1324" y="106" width="10" height="10" fill="#940e00"/><rect x="1334" y="106" width="10" height="10" fill="#940b00"/><rect x="1344" y="106" width="10" height="10" fill="#940900"/><rect x="1354" y="106" width="10" height="10" fill="#940800"/><rect x="1364" y="106" width="10" height="10" fill="#940600"/><rect x="1374" y="106" width="10" height="10" fill="#940400"/><rect x="1384" y="106" width="10" height="10" fill="#940300"/><rect x="1394" y="106" width="10" height="10" fill="#940100"/><rect x="1404" y="106" width="10" height="10" fill="#940000"/><rect x="1414" y="106" width="10" height="10" fill="#940000"/><rect x="1424" y="106" width="10" height="10" fill="#940000"/><rect x="1434" y="106" width="10" height="10" fill="#940000"/><rect x="1444" y="106" width="10" height="10" fill="#940000"/><rect x="1454" y="106" width="10" height="10" fill="#940000"/><rect x="1464" y="106" width="10" height="10" fill="#940000"/><rect x="1474" y="106" width="10" height="10" fill="#940000"/><rect x="1484" y="106" width="10" height="10" fill="#940000"/><rect x="1494" y="106" width="10" height="10" fill="#940000"/><rect x="1504" y="106" width="10" height="10" fill="#940000"/><rect x="1514" y="106" width="10" height="10" fill="#940000"/><rect x="1524" y="106" width="10" height="10" fill="#940000"/><rect x="1534" y="106" width="10" height="10" fill="#940000"/><rect x="1544" y="106" width="10" height="10" fill="#940000"/><rect x="1554" y="106" width="10" height="10" fill="#940000"/><rect x="1564" y="106" width="10" height="10" fill="#940000"/><rect x="944" y="116" width="10" height="10" fill="#009419"/><rect x="954" y="116" width="10" height="10" fill="#009419"/><rect x="964" y="116" width="10" height="10" fill="#009419"/><rect x="974" y="116" width="10" height="10" fill="#009419"/><rect x="984" y="116" width="10" height="10" fill="#009419"/><rect x="994" y="116" width="10" height="10" fill="#00941a"/><rect x="1004" y="116" width="10" height="10" fill="#00941a"/><rect x="1014" y="116" width="10" height="10" fill="#00941a"/><rect x="1024" y="116" width="10" height="10" fill="#00941a"/><rect x="1034" y="116" width="10" height="10" fill="#00941a"/><rect x="1044" y="116" width="10" height="10" fill="#00941a"/><rect x="1054" y="116" width="10" height="10" fill="#00941a"/><rect x="1064" y="116" width="10" height="10" fill="#00941a"/><rect x="1074" y="116" width="10" height="10" fill="#00941b"/><rect x="1084" y="116" width="10" height="10" fill="#0b9433"/><rect x="1094" y="116" width="10" height="10" fill="#1d9433"/><rect x="1204" y="116" width="10" height="10" fill="#944018"/><rect x="1214" y="116" width="10" height="10" fill="#943815"/><rect x="1224" y="116" width="10" height="10" fill="#943113"/><rect x="1234" y="116" width="10" height="10" fill="#942b11"/><rect x="1244" y="116" width="10" height="10" fill="#94260f"/><rect x="1254" y="116" width="10" height="10" fill="#94220d"/><rect x="1264" y="116" width="10" height="10" fill="#941e0c"/><rect x="1274" y="116" width="10" height="10" fill="#941a0b"/><rect x="1284" y="116" width="10" height="10" fill="#941709"/><rect x="1294" y="116" width="10" height="10" fill="#941408"/><rect x="1304" y="116" width="10" height="10" fill="#941107"/><rect x="1314" y="116" width="10" height="10" fill="#940e07"/><rect x="1324" y="116" width="10" height="10" fill="#940c06"/><rect x="1334" y="116" width="10" height="10" fill="#940a05"/><rect x="1344" y="116" width="10" height="10" fill="#940804"/><rect x="1354" y="116" width="10" height="10" fill="#940604"/><rect x="1364" y="116" width="10" height="10" fill="#940403"/><rect x="1374" y="116" width="10" height="10" fill="#940303"/><rect x="1384" y="116" width="10" height="10" fill="#940102"/><rect x="1394" y="116" width="10" height="10" fill="#940002"/><rect x="1404" y="116" width="10" height="10" fill="#940001"/><rect x="1414" y="116" width="10" height="10" fill="#940001"/><rect x="1424" y="116" width="10" height="10" fill="#940000"/><rect x="1434" y="116" width="10" height="10" fill="#940000"/><rect x="1444" y="116" width="10" height="10" fill="#940000"/><rect x="1454" y="116" width="10" height="10" fill="#940000"/><rect x="1464" y="116" width="10" height="10" fill="#940000"/><rect x="1474" y="116" width="10" height="10" fill="#940000"/><rect x="1484" y="116" width="10" height="10" fill="#940000"/><rect x="1494" y="116" width="10" height="10" fill="#940000"/><rect x="1504" y="116" width="10" height="10" fill="#940000"/><rect x="1514" y="116" width="10" height="10" fill="#940000"/><rect x="1524" y="116" width="10" height="10" fill="#940000"/><rect x="1534" y="116" width="10" height="10" fill="#940000"/><rect x="1544" y="116" width="10" height="10" fill="#940000"/><rect x="1554" y="116" width="10" height="10" fill="#940000"/><rect x="1564" y="116" width="10" height="10" fill="#940000"/><rect x="944" y="126" width="10" height="10" fill="#009424"/><rect x="954" y="126" width="10" height="10" fill="#009424"/><rect x="964" y="126" width="10" height="10" fill="#009424"/><rect x="974" y="126" width="10" height="10" fill="#009425"/><rect x="984" y="126" width="10" height="10" fill="#009425"/><rect x="994" y="126" width="10" height="10" fill="#009426"/><rect x="1004" y="126" width="10" height="10" fill="#009426"/><rect x="1014" y="126" width="10" height="10" fill="#009427"/><rect x="1024" y="126" width="10" height="10" fill="#009427"/><rect x="1034" y="126" width="10" height="10" fill="#009428"/><rect x="1044" y="126" width="10" height="10" fill="#009428"/><rect x="1054" y="126" width="10" height="10" fill="#009429"/><rect x="1064" y="126" width="10" height="10" fill="#00942a"/><rect x="1074" y="126" width="10" height="10" fill="#00942a"/><rect x="1084" y="126" width="10" height="10" fill="#099444"/><rect x="1094" y="126" width="10" height="10" fill="#1b9445"/><rect x="1314" y="126" width="10" height="10" fill="#940d0d"/><rect x="1324" y="126" width="10" height="10" fill="#940a0b"/><rect x="1334" y="126" width="10" height="10" fill="#94080b"/><rect x="1344" y="126" width="10" height="10" fill="#94060a"/><rect x="1354" y="126" width="10" height="10" fill="#940509"/><rect x="1364" y="126" width="10" height="10" fill="#940308"/><rect x="1374" y="126" width="10" height="10" fill="#940107"/><rect x="1384" y="126" width="10" height="10" fill="#940007"/><rect x="1394" y="126" width="10" height="10" fill="#940006"/><rect x="1404" y="126" width="10" height="10" fill="#940006"/><rect x="1414" y="126" width="10" height="10" fill="#940005"/><rect x="1424" y="126" width="10" height="10" fill="#940004"/><rect x="1434" y="126" width="10" height="10" fill="#940004"/><rect x="1444" y="126" width="10" height="10" fill="#940003"/><rect x="1454" y="126" width="10" height="10" fill="#940003"/><rect x="1464" y="126" width="10" height="10" fill="#940003"/><rect x="1474" y="126" width="10" height="10" fill="#940002"/><rect x="1484" y="126" width="10" height="10" fill="#940002"/><rect x="1494" y="126" width="10" height="10" fill="#940002"/><rect x="1504" y="126" width="10" height="10" fill="#940001"/><rect x="1514" y="126" width="10" height="10" fill="#940001"/><rect x="1524" y="126" width="10" height="10" fill="#940001"/><rect x="1534" y="126" width="10" height="10" fill="#940000"/><rect x="1544" y="126" width="10" height="10" fill="#940000"/><rect x="1554" y="126" width="10" height="10" fill="#940000"/><rect x="1564" y="126" width="10" height="10" fill="#940000"/><rect x="944" y="136" width="10" height="10" fill="#009430"/><rect x="954" y="136" width="10" height="10" fill="#009431"/><rect x="964" y="136" width="10" height="10" fill="#009432"/><rect x="974" y="136" width="10" height="10" fill="#009432"/><rect x="984" y="136" width="10" height="10" fill="#009433"/><rect x="994" y="136" width="10" height="10" fill="#009434"/><rect x="1004" y="136" width="10" height="10" fill="#009435"/><rect x="1014" y="136" width="10" height="10" fill="#009436"/><rect x="1024" y="136" width="10" height="10" fill="#009437"/><rect x="1034" y="136" width="10" height="10" fill="#009438"/><rect x="1044" y="136" width="10" height="10" fill="#00943a"/><rect x="1054" y="136" width="10" height="10" fill="#00943b"/><rect x="1064" y="136" width="10" height="10" fill="#00943c"/><rect x="1074" y="136" width="10" height="10" fill="#00943e"/><rect x="1084" y="136" width="10" height="10" fill="#079457"/><rect x="1094" y="136" width="10" height="10" fill="#199459"/><rect x="1344" y="136" width="10" height="10" fill="#94050f"/><rect x="1354" y="136" width="10" height="10" fill="#94030e"/><rect x="1364" y="136" width="10" height="10" fill="#94020d"/><rect x="1374" y="136" width="10" height="10" fill="#94000c"/><rect x="1384" y="136" width="10" height="10" fill="#94000b"/><rect x="1394" y="136" width="10" height="10" fill="#94000b"/><rect x="1404" y="136" width="10" height="10" fill="#94000a"/><rect x="1414" y="136" width="10" height="10" fill="#940009"/><rect x="1424" y="136" width="10" height="10" fill="#940008"/><rect x="1434" y="136" width="10" height="10" fill="#940008"/><rect x="1444" y="136" width="10" height="10" fill="#940007"/><rect x="1454" y="136" width="10" height="10" fill="#940007"/><rect x="1464" y="136" width="10" height="10" fill="#940006"/><rect x="1474" y="136" width="10" height="10" fill="#940006"/><rect x="1484" y="136" width="10" height="10" fill="#940005"/><rect x="1494" y="136" width="10" height="10" fill="#940005"/><rect x="1504" y="136" width="10" height="10" fill="#940004"/><rect x="1514" y="136" width="10" height="10" fill="#940004"/><rect x="1524" y="136" width="10" height="10" fill="#940004"/><rect x="1534" y="136" width="10" height="10" fill="#940003"/><rect x="1544" y="136" width="10" height="10" fill="#940003"/><rect x="1554" y="136" width="10" height="10" fill="#940003"/><rect x="1564" y="136" width="10" height="10" fill="#940002"/><rect x="944" y="146" width="10" height="10" fill="#00943f"/><rect x="954" y="146" width="10" height="10" fill="#009440"/><rect x="964" y="146" width="10" height="10" fill="#009441"/><rect x="974" y="146" width="10" height="10" fill="#009442"/><rect x="984" y="146" width="10" height="10" fill="#009444"/><rect x="994" y="146" width="10" height="10" fill="#009445"/><rect x="1004" y="146" width="10" height="10" fill="#009447"/><rect x="1014" y="146" width="10" height="10" fill="#009448"/><rect x="1024" y="146" width="10" height="10" fill="#00944a"/><rect x="1034" y="146" width="10" height="10" fill="#00944c"/><rect x="1044" y="146" width="10" height="10" fill="#00944e"/><rect x="1054" y="146" width="10" height="10" fill="#009451"/><rect x="1064" y="146" width="10" height="10" fill="#009453"/><rect x="1074" y="146" width="10" height="10" fill="#009456"/><rect x="1084" y="146" width="10" height="10" fill="#04946b"/><rect x="1094" y="146" width="10" height="10" fill="#17946e"/><rect x="1104" y="146" width="10" height="10" fill="#2b9470"/><rect x="1334" y="146" width="10" height="10" fill="#940516"/><rect x="1344" y="146" width="10" height="10" fill="#940314"/><rect x="1354" y="146" width="10" height="10" fill="#940213"/><rect x="1364" y="146" width="10" height="10" fill="#940012"/><rect x="1374" y="146" width="10" height="10" fill="#940011"/><rect x="1384" y="146" width="10" height="10" fill="#940010"/><rect x="1394" y="146" width="10" height="10" fill="#94000f"/><rect x="1404" y="146" width="10" height="10" fill="#94000e"/><rect x="1414" y="146" width="10" height="10" fill="#94000d"/><rect x="1424" y="146" width="10" height="10" fill="#94000d"/><rect x="1434" y="146" width="10" height="10" fill="#94000c"/><rect x="1444" y="146" width="10" height="10" fill="#94000b"/><rect x="1454" y="146" width="10" height="10" fill="#94000a"/><rect x="1464" y="146" width="10" height="10" fill="#94000a"/><rect x="1474" y="146" width="10" height="10" fill="#940009"/><rect x="1484" y="146" width="10" height="10" fill="#940009"/><rect x="1494" y="146" width="10" height="10" fill="#940008"/><rect x="1504" y="146" width="10" height="10" fill="#940008"/><rect x="1514" y="146" width="10" height="10" fill="#940007"/><rect x="1524" y="146" width="10" height="10" fill="#940007"/><rect x="1534" y="146" width="10" height="10" fill="#940006"/><rect x="1544" y="146" width="10" height="10" fill="#940006"/><rect x="1554" y="146" width="10" height="10" fill="#940006"/><rect x="1564" y="146" width="10" height="10" fill="#940005"/><rect x="944" y="156" width="10" height="10" fill="#00944f"/><rect x="954" y="156" width="10" height="10" fill="#009451"/><rect x="964" y="156" width="10" height="10" fill="#009453"/><rect x="974" y="156" width="10" height="10" fill="#009455"/><rect x="984" y="156" width="10" height="10" fill="#009457"/><rect x="994" y="156" width="10" height="10" fill="#009459"/><rect x="1004" y="156" width="10" height="10" fill="#00945c"/><rect x="1014" y="156" width="10" height="10" fill="#00945e"/><rect x="1024" y="156" width="10" height="10" fill="#009461"/><rect x="1034" y="156" width="10" height="10" fill="#009464"/><rect x="1044" y="156" width="10" height="10" fill="#009467"/><rect x="1054" y="156" width="10" height="10" fill="#00946a"/><rect x="1064" y="156" width="10" height="10" fill="#00946e"/><rect x="1074" y="156" width="10" height="10" fill="#009472"/><rect x="1084" y="156" width="10" height="10" fill="#019481"/><rect x="1094" y="156" width="10" height="10" fill="#159484"/><rect x="1104" y="156" width="10" height="10" fill="#2a9488"/><rect x="1324" y="156" width="10" height="10" fill="#94051d"/><rect x="1334" y="156" width="10" height="10" fill="#94031b"/><rect x="1344" y="156" width="10" height="10" fill="#94021a"/><rect x="1354" y="156" width="10" height="10" fill="#940018"/><rect x="1364" y="156" width="10" height="10" fill="#940017"/><rect x="1374" y="156" width="10" height="10" fill="#940016"/><rect x="1384" y="156" width="10" height="10" fill="#940015"/><rect x="1394" y="156" width="10" height="10" fill="#940013"/><rect x="1404" y="156" width="10" height="10" fill="#940012"/><rect x="1414" y="156" width="10" height="10" fill="#940012"/><rect x="1424" y="156" width="10" height="10" fill="#940011"/><rect x="1434" y="156" width="10" height="10" fill="#940010"/><rect x="1444" y="156" width="10" height="10" fill="#94000f"/><rect x="1454" y="156" width="10" height="10" fill="#94000e"/><rect x="1464" y="156" width="10" height="10" fill="#94000e"/><rect x="1474" y="156" width="10" height="10" fill="#94000d"/><rect x="1484" y="156" width="10" height="10" fill="#94000c"/><rect x="1494" y="156" width="10" height="10" fill="#94000c"/><rect x="1504" y="156" width="10" height="10" fill="#94000b"/><rect x="1514" y="156" width="10" height="10" fill="#94000a"/><rect x="1524" y="156" width="10" height="10" fill="#94000a"/><rect x="1534" y="156" width="10" height="10" fill="#940009"/><rect x="1544" y="156" width="10" height="10" fill="#940009"/><rect x="1554" y="156" width="10" height="10" fill="#940008"/><rect x="1564" y="156" width="10" height="10" fill="#940008"/><rect x="944" y="166" width="10" height="10" fill="#009462"/><rect x="954" y="166" width="10" height="10" fill="#009465"/><rect x="964" y="166" width="10" height="10" fill="#009467"/><rect x="974" y="166" width="10" height="10" fill="#00946a"/><rect x="984" y="166" width="10" height="10" fill="#00946d"/><rect x="994" y="166" width="10" height="10" fill="#009470"/><rect x="1004" y="166" width="10" height="10" fill="#009474"/><rect x="1014" y="166" width="10" height="10" fill="#009477"/><rect x="1024" y="166" width="10" height="10" fill="#00947b"/><rect x="1034" y="166" width="10" height="10" fill="#00947f"/><rect x="1044" y="166" width="10" height="10" fill="#009484"/><rect x="1054" y="166" width="10" height="10" fill="#009489"/><rect x="1064" y="166" width="10" height="10" fill="#00948e"/><rect x="1074" y="166" width="10" height="10" fill="#009494"/><rect x="1084" y="166" width="10" height="10" fill="#008e94"/><rect x="1094" y="166" width="10" height="10" fill="#118c94"/><rect x="1104" y="166" width="10" height="10" fill="#258894"/><rect x="1314" y="166" width="10" height="10" fill="#940625"/><rect x="1324" y="166" width="10" height="10" fill="#940423"/><rect x="1334" y="166" width="10" height="10" fill="#940221"/><rect x="1344" y="166" width="10" height="10" fill="#94001f"/><rect x="1354" y="166" width="10" height="10" fill="#94001e"/><rect x="1364" y="166" width="10" height="10" fill="#94001c"/><rect x="1374" y="166" width="10" height="10" fill="#94001b"/><rect x="1384" y="166" width="10" height="10" fill="#940019"/><rect x="1394" y="166" width="10" height="10" fill="#940018"/><rect x="1404" y="166" width="10" height="10" fill="#940017"/><rect x="1414" y="166" width="10" height="10" fill="#940016"/><rect x="1424" y="166" width="10" height="10" fill="#940015"/><rect x="1434" y="166" width="10" height="10" fill="#940014"/><rect x="1444" y="166" width="10" height="10" fill="#940013"/><rect x="1454" y="166" width="10" height="10" fill="#940012"/><rect x="1464" y="166" width="10" height="10" fill="#940011"/><rect x="1474" y="166" width="10" height="10" fill="#940010"/><rect x="1484" y="166" width="10" height="10" fill="#940010"/><rect x="1494" y="166" width="10" height="10" fill="#94000f"/><rect x="1504" y="166" width="10" height="10" fill="#94000e"/><rect x="1514" y="166" width="10" height="10" fill="#94000e"/><rect x="1524" y="166" width="10" height="10" fill="#94000d"/><rect x="1534" y="166" width="10" height="10" fill="#94000d"/><rect x="1544" y="166" width="10" height="10" fill="#94000c"/><rect x="1554" y="166" width="10" height="10" fill="#94000b"/><rect x="944" y="176" width="10" height="10" fill="#009478"/><rect x="954" y="176" width="10" height="10" fill="#00947b"/><rect x="964" y="176" width="10" height="10" fill="#00947e"/><rect x="974" y="176" width="10" height="10" fill="#009482"/><rect x="984" y="176" width="10" height="10" fill="#009486"/><rect x="994" y="176" width="10" height="10" fill="#00948b"/><rect x="1004" y="176" width="10" height="10" fill="#00948f"/><rect x="1014" y="176" width="10" height="10" fill="#009494"/><rect x="1024" y="176" width="10" height="10" fill="#008e94"/><rect x="1034" y="176" width="10" height="10" fill="#008994"/><rect x="1044" y="176" width="10" height="10" fill="#008494"/><rect x="1054" y="176" width="10" height="10" fill="#007f94"/><rect x="1064" y="176" width="10" height="10" fill="#007a94"/><rect x="1074" y="176" width="10" height="10" fill="#007494"/><rect x="1084" y="176" width="10" height="10" fill="#006f94"/><rect x="1094" y="176" width="10" height="10" fill="#0c7894"/><rect x="1104" y="176" width="10" height="10" fill="#1e7494"/><rect x="1304" y="176" width="10" height="10" fill="#94062e"/><rect x="1314" y="176" width="10" height="10" fill="#94042b"/><rect x="1324" y="176" width="10" height="10" fill="#940229"/><rect x="1334" y="176" width="10" height="10" fill="#940027"/><rect x="1344" y="176" width="10" height="10" fill="#940025"/><rect x="1354" y="176" width="10" height="10" fill="#940023"/><rect x="1364" y="176" width="10" height="10" fill="#940021"/><rect x="1374" y="176" width="10" height="10" fill="#940020"/><rect x="1384" y="176" width="10" height="10" fill="#94001e"/><rect x="1394" y="176" width="10" height="10" fill="#94001d"/><rect x="1404" y="176" width="10" height="10" fill="#94001b"/><rect x="1414" y="176" width="10" height="10" fill="#94001a"/><rect x="1424" y="176" width="10" height="10" fill="#940019"/><rect x="1434" y="176" width="10" height="10" fill="#940018"/><rect x="1444" y="176" width="10" height="10" fill="#940017"/><rect x="1454" y="176" width="10" height="10" fill="#940016"/><rect x="1464" y="176" width="10" height="10" fill="#940015"/><rect x="1474" y="176" width="10" height="10" fill="#940014"/><rect x="1484" y="176" width="10" height="10" fill="#940013"/><rect x="1494" y="176" width="10" height="10" fill="#940012"/><rect x="1504" y="176" width="10" height="10" fill="#940012"/><rect x="1514" y="176" width="10" height="10" fill="#940011"/><rect x="1524" y="176" width="10" height="10" fill="#940010"/><rect x="1534" y="176" width="10" height="10" fill="#940010"/><rect x="1544" y="176" width="10" height="10" fill="#94000f"/><rect x="954" y="186" width="10" height="10" fill="#009494"/><rect x="964" y="186" width="10" height="10" fill="#008f94"/><rect x="974" y="186" width="10" height="10" fill="#008b94"/><rect x="984" y="186" width="10" height="10" fill="#008694"/><rect x="994" y="186" width="10" height="10" fill="#008294"/><rect x="1004" y="186" width="10" height="10" fill="#007d94"/><rect x="1014" y="186" width="10" height="10" fill="#007994"/><rect x="1024" y="186" width="10" height="10" fill="#007494"/><rect x="1034" y="186" width="10" height="10" fill="#006f94"/><rect x="1044" y="186" width="10" height="10" fill="#006b94"/><rect x="1054" y="186" width="10" height="10" fill="#006694"/><rect x="1064" y="186" width="10" height="10" fill="#006294"/><rect x="1074" y="186" width="10" height="10" fill="#005d94"/><rect x="1084" y="186" width="10" height="10" fill="#005894"/><rect x="1094" y="186" width="10" height="10" fill="#096894"/><rect x="1104" y="186" width="10" height="10" fill="#186494"/><rect x="1304" y="186" width="10" height="10" fill="#940435"/><rect x="1314" y="186" width="10" height="10" fill="#940232"/><rect x="1324" y="186" width="10" height="10" fill="#94002f"/><rect x="1334" y="186" width="10" height="10" fill="#94002d"/><rect x="1344" y="186" width="10" height="10" fill="#94002a"/><rect x="1354" y="186" width="10" height="10" fill="#940028"/><rect x="1364" y="186" width="10" height="10" fill="#940026"/><rect x="1374" y="186" width="10" height="10" fill="#940025"/><rect x="1384" y="186" width="10" height="10" fill="#940023"/><rect x="1394" y="186" width="10" height="10" fill="#940021"/><rect x="1404" y="186" width="10" height="10" fill="#940020"/><rect x="1414" y="186" width="10" height="10" fill="#94001e"/><rect x="1424" y="186" width="10" height="10" fill="#94001d"/><rect x="1434" y="186" width="10" height="10" fill="#94001c"/><rect x="1444" y="186" width="10" height="10" fill="#94001b"/><rect x="1454" y="186" width="10" height="10" fill="#94001a"/><rect x="1464" y="186" width="10" height="10" fill="#940019"/><rect x="1474" y="186" width="10" height="10" fill="#940018"/><rect x="1484" y="186" width="10" height="10" fill="#940017"/><rect x="1494" y="186" width="10" height="10" fill="#940016"/><rect x="1504" y="186" width="10" height="10" fill="#940015"/><rect x="1514" y="186" width="10" height="10" fill="#940014"/><rect x="1524" y="186" width="10" height="10" fill="#940014"/><rect x="1534" y="186" width="10" height="10" fill="#940013"/><rect x="954" y="196" width="10" height="10" fill="#007c94"/><rect x="964" y="196" width="10" height="10" fill="#007894"/><rect x="974" y="196" width="10" height="10" fill="#007494"/><rect x="984" y="196" width="10" height="10" fill="#007094"/><rect x="994" y="196" width="10" height="10" fill="#006c94"/><rect x="1004" y="196" width="10" height="10" fill="#006894"/><rect x="1014" y="196" width="10" height="10" fill="#006494"/><rect x="1024" y="196" width="10" height="10" fill="#005f94"/><rect x="1034" y="196" width="10" height="10" fill="#005b94"/><rect x="1044" y="196" width="10" height="10" fill="#005794"/><rect x="1054" y="196" width="10" height="10" fill="#005394"/><rect x="1064" y="196" width="10" height="10" fill="#004f94"/><rect x="1074" y="196" width="10" height="10" fill="#004b94"/><rect x="1084" y="196" width="10" height="10" fill="#004794"/><rect x="1094" y="196" width="10" height="10" fill="#065a94"/><rect x="1104" y="196" width="10" height="10" fill="#145794"/><rect x="1294" y="196" width="10" height="10" fill="#94043f"/><rect x="1304" y="196" width="10" height="10" fill="#94023b"/><rect x="1314" y="196" width="10" height="10" fill="#940038"/><rect x="1324" y="196" width="10" height="10" fill="#940035"/><rect x="1334" y="196" width="10" height="10" fill="#940033"/><rect x="1344" y="196" width="10" height="10" fill="#940030"/><rect x="1354" y="196" width="10" height="10" fill="#94002e"/><rect x="1364" y="196" width="10" height="10" fill="#94002c"/><rect x="1374" y="196" width="10" height="10" fill="#94002a"/><rect x="1384" y="196" width="10" height="10" fill="#940028"/><rect x="1394" y="196" width="10" height="10" fill="#940026"/><rect x="1404" y="196" width="10" height="10" fill="#940024"/><rect x="1414" y="196" width="10" height="10" fill="#940023"/><rect x="1424" y="196" width="10" height="10" fill="#940021"/><rect x="1434" y="196" width="10" height="10" fill="#940020"/><rect x="1444" y="196" width="10" height="10" fill="#94001f"/><rect x="1454" y="196" width="10" height="10" fill="#94001e"/><rect x="1464" y="196" width="10" height="10" fill="#94001d"/><rect x="1474" y="196" width="10" height="10" fill="#94001b"/><rect x="1484" y="196" width="10" height="10" fill="#94001a"/><rect x="1494" y="196" width="10" height="10" fill="#940019"/><rect x="1504" y="196" width="10" height="10" fill="#940019"/><rect x="1514" y="196" width="10" height="10" fill="#940018"/><rect x="1524" y="196" width="10" height="10" fill="#940017"/><rect x="964" y="206" width="10" height="10" fill="#006594"/><rect x="974" y="206" width="10" height="10" fill="#006194"/><rect x="984" y="206" width="10" height="10" fill="#005e94"/><rect x="994" y="206" width="10" height="10" fill="#005a94"/><rect x="1004" y="206" width="10" height="10" fill="#005794"/><rect x="1014" y="206" width="10" height="10" fill="#005394"/><rect x="1024" y="206" width="10" height="10" fill="#004f94"/><rect x="1034" y="206" width="10" height="10" fill="#004c94"/><rect x="1044" y="206" width="10" height="10" fill="#004894"/><rect x="1054" y="206" width="10" height="10" fill="#004594"/><rect x="1064" y="206" width="10" height="10" fill="#004194"/><rect x="1074" y="206" width="10" height="10" fill="#003e94"/><rect x="1084" y="206" width="10" height="10" fill="#003a94"/><rect x="1094" y="206" width="10" height="10" fill="#034f94"/><rect x="1104" y="206" width="10" height="10" fill="#104c94"/><rect x="1284" y="206" width="10" height="10" fill="#94054b"/><rect x="1294" y="206" width="10" height="10" fill="#940246"/><rect x="1304" y="206" width="10" height="10" fill="#940042"/><rect x="1314" y="206" width="10" height="10" fill="#94003f"/><rect x="1324" y="206" width="10" height="10" fill="#94003c"/><rect x="1334" y="206" width="10" height="10" fill="#940039"/><rect x="1344" y="206" width="10" height="10" fill="#940036"/><rect x="1354" y="206" width="10" height="10" fill="#940033"/><rect x="1364" y="206" width="10" height="10" fill="#940031"/><rect x="1374" y="206" width="10" height="10" fill="#94002f"/><rect x="1384" y="206" width="10" height="10" fill="#94002d"/><rect x="1394" y="206" width="10" height="10" fill="#94002b"/><rect x="1404" y="206" width="10" height="10" fill="#940029"/><rect x="1414" y="206" width="10" height="10" fill="#940027"/><rect x="1424" y="206" width="10" height="10" fill="#940026"/><rect x="1434" y="206" width="10" height="10" fill="#940024"/><rect x="1444" y="206" width="10" height="10" fill="#940023"/><rect x="1454" y="206" width="10" height="10" fill="#940022"/><rect x="1464" y="206" width="10" height="10" fill="#940020"/><rect x="1474" y="206" width="10" height="10" fill="#94001f"/><rect x="1484" y="206" width="10" height="10" fill="#94001e"/><rect x="1494" y="206" width="10" height="10" fill="#94001d"/><rect x="1504" y="206" width="10" height="10" fill="#94001c"/><rect x="1514" y="206" width="10" height="10" fill="#94001b"/><rect x="964" y="216" width="10" height="10" fill="#005694"/><rect x="974" y="216" width="10" height="10" fill="#005394"/><rect x="984" y="216" width="10" height="10" fill="#004f94"/><rect x="994" y="216" width="10" height="10" fill="#004c94"/><rect x="1004" y="216" width="10" height="10" fill="#004994"/><rect x="1014" y="216" width="10" height="10" fill="#004694"/><rect x="1024" y="216" width="10" height="10" fill="#004394"/><rect x="1034" y="216" width="10" height="10" fill="#003f94"/><rect x="1044" y="216" width="10" height="10" fill="#003c94"/><rect x="1054" y="216" width="10" height="10" fill="#003994"/><rect x="1064" y="216" width="10" height="10" fill="#003694"/><rect x="1074" y="216" width="10" height="10" fill="#003394"/><rect x="1084" y="216" width="10" height="10" fill="#003094"/><rect x="1094" y="216" width="10" height="10" fill="#014694"/><rect x="1104" y="216" width="10" height="10" fill="#0d4394"/><rect x="1114" y="216" width="10" height="10" fill="#194094"/><rect x="1274" y="216" width="10" height="10" fill="#940558"/><rect x="1284" y="216" width="10" height="10" fill="#940352"/><rect x="1294" y="216" width="10" height="10" fill="#94004e"/><rect x="1304" y="216" width="10" height="10" fill="#940049"/><rect x="1314" y="216" width="10" height="10" fill="#940046"/><rect x="1324" y="216" width="10" height="10" fill="#940042"/><rect x="1334" y="216" width="10" height="10" fill="#94003f"/><rect x="1344" y="216" width="10" height="10" fill="#94003c"/><rect x="1354" y="216" width="10" height="10" fill="#940039"/><rect x="1364" y="216" width="10" height="10" fill="#940036"/><rect x="1374" y="216" width="10" height="10" fill="#940034"/><rect x="1384" y="216" width="10" height="10" fill="#940032"/><rect x="1394" y="216" width="10" height="10" fill="#940030"/><rect x="1404" y="216" width="10" height="10" fill="#94002e"/><rect x="1414" y="216" width="10" height="10" fill="#94002c"/><rect x="1424" y="216" width="10" height="10" fill="#94002a"/><rect x="1434" y="216" width="10" height="10" fill="#940029"/><rect x="1444" y="216" width="10" height="10" fill="#940027"/><rect x="1454" y="216" width="10" height="10" fill="#940026"/><rect x="1464" y="216" width="10" height="10" fill="#940024"/><rect x="1474" y="216" width="10" height="10" fill="#940023"/><rect x="1484" y="216" width="10" height="10" fill="#940022"/><rect x="1494" y="216" width="10" height="10" fill="#940021"/><rect x="1504" y="216" width="10" height="10" fill="#94001f"/><rect x="964" y="226" width="10" height="10" fill="#004a94"/><rect x="974" y="226" width="10" height="10" fill="#004794"/><rect x="984" y="226" width="10" height="10" fill="#004494"/><rect x="994" y="226" width="10" height="10" fill="#004194"/><rect x="1004" y="226" width="10" height="10" fill="#003e94"/><rect x="1014" y="226" width="10" height="10" fill="#003b94"/><rect x="1024" y="226" width="10" height="10" fill="#003894"/><rect x="1034" y="226" width="10" height="10" fill="#003594"/><rect x="1044" y="226" width="10" height="10" fill="#003294"/><rect x="1054" y="226" width="10" height="10" fill="#003094"/><rect x="1064" y="226" width="10" height="10" fill="#002d94"/><rect x="1074" y="226" width="10" height="10" fill="#002a94"/><rect x="1084" y="226" width="10" height="10" fill="#002794"/><rect x="1094" y="226" width="10" height="10" fill="#002594"/><rect x="1104" y="226" width="10" height="10" fill="#0a3b94"/><rect x="1114" y="226" width="10" height="10" fill="#163894"/><rect x="1264" y="226" width="10" height="10" fill="#940567"/><rect x="1274" y="226" width="10" height="10" fill="#940360"/><rect x="1284" y="226" width="10" height="10" fill="#94005a"/><rect x="1294" y="226" width="10" height="10" fill="#940055"/><rect x="1304" y="226" width="10" height="10" fill="#940051"/><rect x="1314" y="226" width="10" height="10" fill="#94004c"/><rect x="1324" y="226" width="10" height="10" fill="#940048"/><rect x="1334" y="226" width="10" height="10" fill="#940045"/><rect x="1344" y="226" width="10" height="10" fill="#940042"/><rect x="1354" y="226" width="10" height="10" fill="#94003f"/><rect x="1364" y="226" width="10" height="10" fill="#94003c"/><rect x="1374" y="226" width="10" height="10" fill="#940039"/><rect x="1384" y="226" width="10" height="10" fill="#940037"/><rect x="1394" y="226" width="10" height="10" fill="#940034"/><rect x="1404" y="226" width="10" height="10" fill="#940032"/><rect x="1414" y="226" width="10" height="10" fill="#940030"/><rect x="1424" y="226" width="10" height="10" fill="#94002f"/><rect x="1434" y="226" width="10" height="10" fill="#94002d"/><rect x="1444" y="226" width="10" height="10" fill="#94002b"/><rect x="1454" y="226" width="10" height="10" fill="#94002a"/><rect x="1464" y="226" width="10" height="10" fill="#940028"/><rect x="1474" y="226" width="10" height="10" fill="#940027"/><rect x="1484" y="226" width="10" height="10" fill="#940025"/><rect x="1494" y="226" width="10" height="10" fill="#940024"/><rect x="974" y="236" width="10" height="10" fill="#003d94"/><rect x="984" y="236" width="10" height="10" fill="#003a94"/><rect x="994" y="236" width="10" height="10" fill="#003794"/><rect x="1004" y="236" width="10" height="10" fill="#003594"/><rect x="1014" y="236" width="10" height="10" fill="#003294"/><rect x="1024" y="236" width="10" height="10" fill="#003094"/><rect x="1034" y="236" width="10" height="10" fill="#002d94"/><rect x="1044" y="236" width="10" height="10" fill="#002a94"/><rect x="1054" y="236" width="10" height="10" fill="#002894"/><rect x="1064" y="236" width="10" height="10" fill="#002594"/><rect x="1074" y="236" width="10" height="10" fill="#002394"/><rect x="1084" y="236" width="10" height="10" fill="#002194"/><rect x="1094" y="236" width="10" height="10" fill="#001e94"/><rect x="1104" y="236" width="10" height="10" fill="#083494"/><rect x="1114" y="236" width="10" height="10" fill="#123194"/><rect x="1254" y="236" width="10" height="10" fill="#940678"/><rect x="1264" y="236" width="10" height="10" fill="#940370"/><rect x="1274" y="236" width="10" height="10" fill="#940069"/><rect x="1284" y="236" width="10" height="10" fill="#940063"/><rect x="1294" y="236" width="10" height="10" fill="#94005d"/><rect x="1304" y="236" width="10" height="10" fill="#940058"/><rect x="1314" y="236" width="10" height="10" fill="#940053"/><rect x="1324" y="236" width="10" height="10" fill="#94004f"/><rect x="1334" y="236" width="10" height="10" fill="#94004b"/><rect x="1344" y="236" width="10" height="10" fill="#940048"/><rect x="1354" y="236" width="10" height="10" fill="#940044"/><rect x="1364" y="236" width="10" height="10" fill="#940041"/><rect x="1374" y="236" width="10" height="10" fill="#94003e"/><rect x="1384" y="236" width="10" height="10" fill="#94003c"/><rect x="1394" y="236" width="10" height="10" fill="#940039"/><rect x="1404" y="236" width="10" height="10" fill="#940037"/><rect x="1414" y="236" width="10" height="10" fill="#940035"/><rect x="1424" y="236" width="10" height="10" fill="#940033"/><rect x="1434" y="236" width="10" height="10" fill="#940031"/><rect x="1444" y="236" width="10" height="10" fill="#94002f"/><rect x="1454" y="236" width="10" height="10" fill="#94002e"/><rect x="1464" y="236" width="10" height="10" fill="#94002c"/><rect x="1474" y="236" width="10" height="10" fill="#94002a"/><rect x="1484" y="236" width="10" height="10" fill="#940029"/><rect x="974" y="246" width="10" height="10" fill="#003494"/><rect x="984" y="246" width="10" height="10" fill="#003294"/><rect x="994" y="246" width="10" height="10" fill="#003094"/><rect x="1004" y="246" width="10" height="10" fill="#002d94"/><rect x="1014" y="246" width="10" height="10" fill="#002b94"/><rect x="1024" y="246" width="10" height="10" fill="#002894"/><rect x="1034" y="246" width="10" height="10" fill="#002694"/><rect x="1044" y="246" width="10" height="10" fill="#002494"/><rect x="1054" y="246" width="10" height="10" fill="#002294"/><rect x="1064" y="246" width="10" height="10" fill="#001f94"/><rect x="1074" y="246" width="10" height="10" fill="#001d94"/><rect x="1084" y="246" width="10" height="10" fill="#001b94"/><rect x="1094" y="246" width="10" height="10" fill="#001994"/><rect x="1104" y="246" width="10" height="10" fill="#062e94"/><rect x="1114" y="246" width="10" height="10" fill="#102c94"/><rect x="1244" y="246" width="10" height="10" fill="#94068c"/><rect x="1254" y="246" width="10" height="10" fill="#940382"/><rect x="1264" y="246" width="10" height="10" fill="#940179"/><rect x="1274" y="246" width="10" height="10" fill="#940072"/><rect x="1284" y="246" width="10" height="10" fill="#94006b"/><rect x="1294" y="246" width="10" height="10" fill="#940065"/><rect x="1304" y="246" width="10" height="10" fill="#94005f"/><rect x="1314" y="246" width="10" height="10" fill="#94005a"/><rect x="1324" y="246" width="10" height="10" fill="#940056"/><rect x="1334" y="246" width="10" height="10" fill="#940051"/><rect x="1344" y="246" width="10" height="10" fill="#94004e"/><rect x="1354" y="246" width="10" height="10" fill="#94004a"/><rect x="1364" y="246" width="10" height="10" fill="#940047"/><rect x="1374" y="246" width="10" height="10" fill="#940044"/><rect x="1384" y="246" width="10" height="10" fill="#940041"/><rect x="1394" y="246" width="10" height="10" fill="#94003e"/><rect x="1404" y="246" width="10" height="10" fill="#94003c"/><rect x="1414" y="246" width="10" height="10" fill="#94003a"/><rect x="1424" y="246" width="10" height="10" fill="#940037"/><rect x="1434" y="246" width="10" height="10" fill="#940035"/><rect x="1444" y="246" width="10" height="10" fill="#940033"/><rect x="1454" y="246" width="10" height="10" fill="#940032"/><rect x="1464" y="246" width="10" height="10" fill="#940030"/><rect x="1474" y="246" width="10" height="10" fill="#94002e"/><rect x="984" y="256" width="10" height="10" fill="#002b94"/><rect x="994" y="256" width="10" height="10" fill="#002994"/><rect x="1004" y="256" width="10" height="10" fill="#002794"/><rect x="1014" y="256" width="10" height="10" fill="#002594"/><rect x="1024" y="256" width="10" height="10" fill="#002394"/><rect x="1034" y="256" width="10" height="10" fill="#002094"/><rect x="1044" y="256" width="10" height="10" fill="#001e94"/><rect x="1054" y="256" width="10" height="10" fill="#001c94"/><rect x="1064" y="256" width="10" height="10" fill="#001a94"/><rect x="1074" y="256" width="10" height="10" fill="#001894"/><rect x="1084" y="256" width="10" height="10" fill="#001794"/><rect x="1094" y="256" width="10" height="10" fill="#001594"/><rect x="1104" y="256" width="10" height="10" fill="#042994"/><rect x="1114" y="256" width="10" height="10" fill="#0d2694"/><rect x="1234" y="256" width="10" height="10" fill="#860694"/><rect x="1244" y="256" width="10" height="10" fill="#910494"/><rect x="1254" y="256" width="10" height="10" fill="#94018c"/><rect x="1264" y="256" width="10" height="10" fill="#940083"/><rect x="1274" y="256" width="10" height="10" fill="#94007b"/><rect x="1284" y="256" width="10" height="10" fill="#940073"/><rect x="1294" y="256" width="10" height="10" fill="#94006d"/><rect x="1304" y="256" width="10" height="10" fill="#940067"/><rect x="1314" y="256" width="10" height="10" fill="#940061"/><rect x="1324" y="256" width="10" height="10" fill="#94005c"/><rect x="1334" y="256" width="10" height="10" fill="#940058"/><rect x="1344" y="256" width="10" height="10" fill="#940054"/><rect x="1354" y="256" width="10" height="10" fill="#940050"/><rect x="1364" y="256" width="10" height="10" fill="#94004c"/><rect x="1374" y="256" width="10" height="10" fill="#940049"/><rect x="1384" y="256" width="10" height="10" fill="#940046"/><rect x="1394" y="256" width="10" height="10" fill="#940043"/><rect x="1404" y="256" width="10" height="10" fill="#940041"/><rect x="1414" y="256" width="10" height="10" fill="#94003e"/><rect x="1424" y="256" width="10" height="10" fill="#94003c"/><rect x="1434" y="256" width="10" height="10" fill="#94003a"/><rect x="1444" y="256" width="10" height="10" fill="#940038"/><rect x="1454" y="256" width="10" height="10" fill="#940036"/><rect x="1464" y="256" width="10" height="10" fill="#940034"/><rect x="984" y="266" width="10" height="10" fill="#002594"/><rect x="994" y="266" width="10" height="10" fill="#002394"/><rect x="1004" y="266" width="10" height="10" fill="#002194"/><rect x="1014" y="266" width="10" height="10" fill="#001f94"/><rect x="1024" y="266" width="10" height="10" fill="#001e94"/><rect x="1034" y="266" width="10" height="10" fill="#001c94"/><rect x="1044" y="266" width="10" height="10" fill="#001a94"/><rect x="1054" y="266" width="10" height="10" fill="#001894"/><rect x="1064" y="266" width="10" height="10" fill="#001694"/><rect x="1074" y="266" width="10" height="10" fill="#001494"/><rect x="1084" y="266" width="10" height="10" fill="#001394"/><rect x="1094" y="266" width="10" height="10" fill="#001194"/><rect x="1104" y="266" width="10" height="10" fill="#022494"/><rect x="1114" y="266" width="10" height="10" fill="#0b2294"/><rect x="1224" y="266" width="10" height="10" fill="#730694"/><rect x="1234" y="266" width="10" height="10" fill="#7d0394"/><rect x="1244" y="266" width="10" height="10" fill="#870194"/><rect x="1254" y="266" width="10" height="10" fill="#910094"/><rect x="1264" y="266" width="10" height="10" fill="#94008d"/><rect x="1274" y="266" width="10" height="10" fill="#940084"/><rect x="1284" y="266" width="10" height="10" fill="#94007c"/><rect x="1294" y="266" width="10" height="10" fill="#940075"/><rect x="1304" y="266" width="10" height="10" fill="#94006e"/><rect x="1314" y="266" width="10" height="10" fill="#940069"/><rect x="1324" y="266" width="10" height="10" fill="#940063"/><rect x="1334" y="266" width="10" height="10" fill="#94005e"/><rect x="1344" y="266" width="10" height="10" fill="#94005a"/><rect x="1354" y="266" width="10" height="10" fill="#940056"/><rect x="1364" y="266" width="10" height="10" fill="#940052"/><rect x="1374" y="266" width="10" height="10" fill="#94004f"/><rect x="1384" y="266" width="10" height="10" fill="#94004b"/><rect x="1394" y="266" width="10" height="10" fill="#940048"/><rect x="1404" y="266" width="10" height="10" fill="#940046"/><rect x="1414" y="266" width="10" height="10" fill="#940043"/><rect x="1424" y="266" width="10" height="10" fill="#940041"/><rect x="1434" y="266" width="10" height="10" fill="#94003e"/><rect x="1444" y="266" width="10" height="10" fill="#94003c"/><rect x="1454" y="266" width="10" height="10" fill="#94003a"/><rect x="994" y="276" width="10" height="10" fill="#001f94"/><rect x="1004" y="276" width="10" height="10" fill="#001d94"/><rect x="1014" y="276" width="10" height="10" fill="#001b94"/><rect x="1024" y="276" width="10" height="10" fill="#001994"/><rect x="1034" y="276" width="10" height="10" fill="#001894"/><rect x="1044" y="276" width="10" height="10" fill="#001694"/><rect x="1054" y="276" width="10" height="10" fill="#001494"/><rect x="1064" y="276" width="10" height="10" fill="#001394"/><rect x="1074" y="276" width="10" height="10" fill="#001194"/><rect x="1084" y="276" width="10" height="10" fill="#001094"/><rect x="1094" y="276" width="10" height="10" fill="#000e94"/><rect x="1104" y="276" width="10" height="10" fill="#012094"/><rect x="1114" y="276" width="10" height="10" fill="#091e94"/><rect x="1124" y="276" width="10" height="10" fill="#121b94"/><rect x="1214" y="276" width="10" height="10" fill="#620694"/><rect x="1224" y="276" width="10" height="10" fill="#6b0394"/><rect x="1234" y="276" width="10" height="10" fill="#740194"/><rect x="1244" y="276" width="10" height="10" fill="#7e0094"/><rect x="1254" y="276" width="10" height="10" fill="#870094"/><rect x="1264" y="276" width="10" height="10" fill="#910094"/><rect x="1274" y="276" width="10" height="10" fill="#94008d"/><rect x="1284" y="276" width="10" height="10" fill="#940085"/><rect x="1294" y="276" width="10" height="10" fill="#94007d"/><rect x="1304" y="276" width="10" height="10" fill="#940076"/><rect x="1314" y="276" width="10" height="10" fill="#940070"/><rect x="1324" y="276" width="10" height="10" fill="#94006a"/><rect x="1334" y="276" width="10" height="10" fill="#940065"/><rect x="1344" y="276" width="10" height="10" fill="#940060"/><rect x="1354" y="276" width="10" height="10" fill="#94005c"/><rect x="1364" y="276" width="10" height="10" fill="#940058"/><rect x="1374" y="276" width="10" height="10" fill="#940054"/><rect x="1384" y="276" width="10" height="10" fill="#940051"/><rect x="1394" y="276" width="10" height="10" fill="#94004e"/><rect x="1404" y="276" width="10" height="10" fill="#94004b"/><rect x="1414" y="276" width="10" height="10" fill="#940048"/><rect x="1424" y="276" width="10" height="10" fill="#940045"/><rect x="1434" y="276" width="10" height="10" fill="#940043"/><rect x="1444" y="276" width="10" height="10" fill="#940040"/><rect x="994" y="286" width="10" height="10" fill="#001a94"/><rect x="1004" y="286" width="10" height="10" fill="#001994"/><rect x="1014" y="286" width="10" height="10" fill="#001794"/><rect x="1024" y="286" width="10" height="10" fill="#001694"/><rect x="1034" y="286" width="10" height="10" fill="#001494"/><rect x="1044" y="286" width="10" height="10" fill="#001394"/><rect x="1054" y="286" width="10" height="10" fill="#001194"/><rect x="1064" y="286" width="10" height="10" fill="#001094"/><rect x="1074" y="286" width="10" height="10" fill="#000e94"/><rect x="1084" y="286" width="10" height="10" fill="#000d94"/><rect x="1094" y="286" width="10" height="10" fill="#000c94"/><rect x="1104" y="286" width="10" height="10" fill="#000a94"/><rect x="1114" y="286" width="10" height="10" fill="#071a94"/><rect x="1124" y="286" width="10" height="10" fill="#0f1894"/><rect x="1204" y="286" width="10" height="10" fill="#520594"/><rect x="1214" y="286" width="10" height="10" fill="#5b0394"/><rect x="1224" y="286" width="10" height="10" fill="#640194"/><rect x="1234" y="286" width="10" height="10" fill="#6d0094"/><rect x="1244" y="286" width="10" height="10" fill="#760094"/><rect x="1254" y="286" width="10" height="10" fill="#7f0094"/><rect x="1264" y="286" width="10" height="10" fill="#880094"/><rect x="1274" y="286" width="10" height="10" fill="#910094"/><rect x="1284" y="286" width="10" height="10" fill="#94008d"/><rect x="1294" y="286" width="10" height="10" fill="#940085"/><rect x="1304" y="286" width="10" height="10" fill="#94007e"/><rect x="1314" y="286" width="10" height="10" fill="#940077"/><rect x="1324" y="286" width="10" height="10" fill="#940071"/><rect x="1334" y="286" width="10" height="10" fill="#94006c"/><rect x="1344" y="286" width="10" height="10" fill="#940067"/><rect x="1354" y="286" width="10" height="10" fill="#940062"/><rect x="1364" y="286" width="10" height="10" fill="#94005e"/><rect x="1374" y="286" width="10" height="10" fill="#94005a"/><rect x="1384" y="286" width="10" height="10" fill="#940056"/><rect x="1394" y="286" width="10" height="10" fill="#940053"/><rect x="1404" y="286" width="10" height="10" fill="#940050"/><rect x="1414" y="286" width="10" height="10" fill="#94004d"/><rect x="1424" y="286" width="10" height="10" fill="#94004a"/><rect x="1434" y="286" width="10" height="10" fill="#940047"/><rect x="1004" y="296" width="10" height="10" fill="#001594"/><rect x="1014" y="296" width="10" height="10" fill="#001494"/><rect x="1024" y="296" width="10" height="10" fill="#001394"/><rect x="1034" y="296" width="10" height="10" fill="#001194"/><rect x="1044" y="296" width="10" height="10" fill="#001094"/><rect x="1054" y="296" width="10" height="10" fill="#000e94"/><rect x="1064" y="296" width="10" height="10" fill="#000d94"/><rect x="1074" y="296" width="10" height="10" fill="#000c94"/><rect x="1084" y="296" width="10" height="10" fill="#000b94"/><rect x="1094" y="296" width="10" height="10" fill="#000994"/><rect x="1104" y="296" width="10" height="10" fill="#000894"/><rect x="1114" y="296" width="10" height="10" fill="#061694"/><rect x="1124" y="296" width="10" height="10" fill="#0d1494"/><rect x="1194" y="296" width="10" height="10" fill="#450594"/><rect x="1204" y="296" width="10" height="10" fill="#4d0394"/><rect x="1214" y="296" width="10" height="10" fill="#550194"/><rect x="1224" y="296" width="10" height="10" fill="#5e0094"/><rect x="1234" y="296" width="10" height="10" fill="#660094"/><rect x="1244" y="296" width="10" height="10" fill="#6f0094"/><rect x="1254" y="296" width="10" height="10" fill="#770094"/><rect x="1264" y="296" width="10" height="10" fill="#800094"/><rect x="1274" y="296" width="10" height="10" fill="#890094"/><rect x="1284" y="296" width="10" height="10" fill="#910094"/><rect x="1294" y="296" width="10" height="10" fill="#94008e"/><rect x="1304" y="296" width="10" height="10" fill="#940086"/><rect x="1314" y="296" width="10" height="10" fill="#94007f"/><rect x="1324" y="296" width="10" height="10" fill="#940078"/><rect x="1334" y="296" width="10" height="10" fill="#940073"/><rect x="1344" y="296" width="10" height="10" fill="#94006d"/><rect x="1354" y="296" width="10" height="10" fill="#940068"/><rect x="1364" y="296" width="10" height="10" fill="#940064"/><rect x="1374" y="296" width="10" height="10" fill="#940060"/><rect x="1384" y="296" width="10" height="10" fill="#94005c"/><rect x="1394" y="296" width="10" height="10" fill="#940058"/><rect x="1404" y="296" width="10" height="10" fill="#940055"/><rect x="1414" y="296" width="10" height="10" fill="#940051"/><rect x="1424" y="296" width="10" height="10" fill="#94004f"/><rect x="1004" y="306" width="10" height="10" fill="#001394"/><rect x="1014" y="306" width="10" height="10" fill="#001194"/><rect x="1024" y="306" width="10" height="10" fill="#001094"/><rect x="1034" y="306" width="10" height="10" fill="#000f94"/><rect x="1044" y="306" width="10" height="10" fill="#000d94"/><rect x="1054" y="306" width="10" height="10" fill="#000c94"/><rect x="1064" y="306" width="10" height="10" fill="#000b94"/><rect x="1074" y="306" width="10" height="10" fill="#000a94"/><rect x="1084" y="306" width="10" height="10" fill="#000994"/><rect x="1094" y="306" width="10" height="10" fill="#000894"/><rect x="1104" y="306" width="10" height="10" fill="#000794"/><rect x="1114" y="306" width="10" height="10" fill="#041394"/><rect x="1124" y="306" width="10" height="10" fill="#0c1194"/><rect x="1184" y="306" width="10" height="10" fill="#390594"/><rect x="1194" y="306" width="10" height="10" fill="#400394"/><rect x="1204" y="306" width="10" height="10" fill="#480194"/><rect x="1214" y="306" width="10" height="10" fill="#500094"/><rect x="1224" y="306" width="10" height="10" fill="#580094"/><rect x="1234" y="306" width="10" height="10" fill="#600094"/><rect x="1244" y="306" width="10" height="10" fill="#680094"/><rect x="1254" y="306" width="10" height="10" fill="#700094"/><rect x="1264" y="306" width="10" height="10" fill="#780094"/><rect x="1274" y="306" width="10" height="10" fill="#810094"/><rect x="1284" y="306" width="10" height="10" fill="#890094"/><rect x="1294" y="306" width="10" height="10" fill="#910094"/><rect x="1304" y="306" width="10" height="10" fill="#94008e"/><rect x="1314" y="306" width="10" height="10" fill="#940087"/><rect x="1324" y="306" width="10" height="10" fill="#940080"/><rect x="1334" y="306" width="10" height="10" fill="#94007a"/><rect x="1344" y="306" width="10" height="10" fill="#940074"/><rect x="1354" y="306" width="10" height="10" fill="#94006f"/><rect x="1364" y="306" width="10" height="10" fill="#94006a"/><rect x="1374" y="306" width="10" height="10" fill="#940065"/><rect x="1384" y="306" width="10" height="10" fill="#940061"/><rect x="1394" y="306" width="10" height="10" fill="#94005d"/><rect x="1404" y="306" width="10" height="10" fill="#94005a"/><rect x="1414" y="306" width="10" height="10" fill="#940056"/><rect x="1424" y="306" width="10" height="10" fill="#940053"/><rect x="1014" y="316" width="10" height="10" fill="#000f94"/><rect x="1024" y="316" width="10" height="10" fill="#000e94"/><rect x="1034" y="316" width="10" height="10" fill="#000c94"/><rect x="1044" y="316" width="10" height="10" fill="#000b94"/><rect x="1054" y="316" width="10" height="10" fill="#000a94"/><rect x="1064" y="316" width="10" height="10" fill="#000994"/><rect x="1074" y="316" width="10" height="10" fill="#000894"/><rect x="1084" y="316" width="10" height="10" fill="#000794"/><rect x="1094" y="316" width="10" height="10" fill="#000694"/><rect x="1104" y="316" width="10" height="10" fill="#000594"/><rect x="1114" y="316" width="10" height="10" fill="#031194"/><rect x="1124" y="316" width="10" height="10" fill="#0a0f94"/><rect x="1174" y="316" width="10" height="10" fill="#2e0594"/><rect x="1184" y="316" width="10" height="10" fill="#350394"/><rect x="1194" y="316" width="10" height="10" fill="#3c0194"/><rect x="1204" y="316" width="10" height="10" fill="#440094"/><rect x="1214" y="316" width="10" height="10" fill="#4b0094"/><rect x="1224" y="316" width="10" height="10" fill="#530094"/><rect x="1234" y="316" width="10" height="10" fill="#5a0094"/><rect x="1244" y="316" width="10" height="10" fill="#620094"/><rect x="1254" y="316" width="10" height="10" fill="#6a0094"/><rect x="1264" y="316" width="10" height="10" fill="#720094"/><rect x="1274" y="316" width="10" height="10" fill="#790094"/><rect x="1284" y="316" width="10" height="10" fill="#810094"/><rect x="1294" y="316" width="10" height="10" fill="#890094"/><rect x="1304" y="316" width="10" height="10" fill="#910094"/><rect x="1314" y="316" width="10" height="10" fill="#94008e"/><rect x="1324" y="316" width="10" height="10" fill="#940087"/><rect x="1334" y="316" width="10" height="10" fill="#940081"/><rect x="1344" y="316" width="10" height="10" fill="#94007b"/><rect x="1354" y="316" width="10" height="10" fill="#940075"/><rect x="1364" y="316" width="10" height="10" fill="#940070"/><rect x="1374" y="316" width="10" height="10" fill="#94006b"/><rect x="1384" y="316" width="10" height="10" fill="#940067"/><rect x="1394" y="316" width="10" height="10" fill="#940063"/><rect x="1404" y="316" width="10" height="10" fill="#94005f"/><rect x="1414" y="316" width="10" height="10" fill="#94005b"/><rect x="1024" y="326" width="10" height="10" fill="#000c94"/><rect x="1034" y="326" width="10" height="10" fill="#000b94"/><rect x="1044" y="326" width="10" height="10" fill="#000a94"/><rect x="1054" y="326" width="10" height="10" fill="#000994"/><rect x="1064" y="326" width="10" height="10" fill="#000894"/><rect x="1074" y="326" width="10" height="10" fill="#000794"/><rect x="1084" y="326" width="10" height="10" fill="#000694"/><rect x="1094" y="326" width="10" height="10" fill="#000594"/><rect x="1104" y="326" width="10" height="10" fill="#000494"/><rect x="1114" y="326" width="10" height="10" fill="#020e94"/><rect x="1124" y="326" width="10" height="10" fill="#090c94"/><rect x="1164" y="326" width="10" height="10" fill="#240594"/><rect x="1174" y="326" width="10" height="10" fill="#2b0394"/><rect x="1184" y="326" width="10" height="10" fill="#320194"/><rect x="1194" y="326" width="10" height="10" fill="#390094"/><rect x="1204" y="326" width="10" height="10" fill="#400094"/><rect x="1214" y="326" width="10" height="10" fill="#470094"/><rect x="1224" y="326" width="10" height="10" fill="#4e0094"/><rect x="1234" y="326" width="10" height="10" fill="#550094"/><rect x="1244" y="326" width="10" height="10" fill="#5d0094"/><rect x="1254" y="326" width="10" height="10" fill="#640094"/><rect x="1264" y="326" width="10" height="10" fill="#6b0094"/><rect x="1274" y="326" width="10" height="10" fill="#730094"/><rect x="1284" y="326" width="10" height="10" fill="#7a0094"/><rect x="1294" y="326" width="10" height="10" fill="#820094"/><rect x="1304" y="326" width="10" height="10" fill="#8a0094"/><rect x="1314" y="326" width="10" height="10" fill="#920094"/><rect x="1324" y="326" width="10" height="10" fill="#94008f"/><rect x="1334" y="326" width="10" height="10" fill="#940088"/><rect x="1344" y="326" width="10" height="10" fill="#940081"/><rect x="1354" y="326" width="10" height="10" fill="#94007b"/><rect x="1364" y="326" width="10" height="10" fill="#940076"/><rect x="1374" y="326" width="10" height="10" fill="#940071"/><rect x="1384" y="326" width="10" height="10" fill="#94006c"/><rect x="1394" y="326" width="10" height="10" fill="#940068"/><rect x="1404" y="326" width="10" height="10" fill="#940064"/><rect x="1024" y="336" width="10" height="10" fill="#000a94"/><rect x="1034" y="336" width="10" height="10" fill="#000994"/><rect x="1044" y="336" width="10" height="10" fill="#000894"/><rect x="1054" y="336" width="10" height="10" fill="#000794"/><rect x="1064" y="336" width="10" height="10" fill="#000694"/><rect x="1074" y="336" width="10" height="10" fill="#000594"/><rect x="1084" y="336" width="10" height="10" fill="#000594"/><rect x="1094" y="336" width="10" height="10" fill="#000494"/><rect x="1104" y="336" width="10" height="10" fill="#000394"/><rect x="1114" y="336" width="10" height="10" fill="#010c94"/><rect x="1124" y="336" width="10" height="10" fill="#070a94"/><rect x="1134" y="336" width="10" height="10" fill="#0e0894"/><rect x="1154" y="336" width="10" height="10" fill="#1b0494"/><rect x="1164" y="336" width="10" height="10" fill="#210394"/><rect x="1174" y="336" width="10" height="10" fill="#280194"/><rect x="1184" y="336" width="10" height="10" fill="#2e0094"/><rect x="1194" y="336" width="10" height="10" fill="#350094"/><rect x="1204" y="336" width="10" height="10" fill="#3c0094"/><rect x="1214" y="336" width="10" height="10" fill="#430094"/><rect x="1224" y="336" width="10" height="10" fill="#4a0094"/><rect x="1234" y="336" width="10" height="10" fill="#510094"/><rect x="1244" y="336" width="10" height="10" fill="#580094"/><rect x="1254" y="336" width="10" height="10" fill="#5f0094"/><rect x="1264" y="336" width="10" height="10" fill="#660094"/><rect x="1274" y="336" width="10" height="10" fill="#6d0094"/><rect x="1284" y="336" width="10" height="10" fill="#740094"/><rect x="1294" y="336" width="10" height="10" fill="#7b0094"/><rect x="1304" y="336" width="10" height="10" fill="#830094"/><rect x="1314" y="336" width="10" height="10" fill="#8a0094"/><rect x="1324" y="336" width="10" height="10" fill="#920094"/><rect x="1334" y="336" width="10" height="10" fill="#94008f"/><rect x="1344" y="336" width="10" height="10" fill="#940088"/><rect x="1354" y="336" width="10" height="10" fill="#940082"/><rect x="1364" y="336" width="10" height="10" fill="#94007c"/><rect x="1374" y="336" width="10" height="10" fill="#940077"/><rect x="1384" y="336" width="10" height="10" fill="#940072"/><rect x="1394" y="336" width="10" height="10" fill="#94006e"/><rect x="1034" y="346" width="10" height="10" fill="#000794"/><rect x="1044" y="346" width="10" height="10" fill="#000794"/><rect x="1054" y="346" width="10" height="10" fill="#000694"/><rect x="1064" y="346" width="10" height="10" fill="#000594"/><rect x="1074" y="346" width="10" height="10" fill="#000494"/><rect x="1084" y="346" width="10" height="10" fill="#000494"/><rect x="1094" y="346" width="10" height="10" fill="#000394"/><rect x="1104" y="346" width="10" height="10" fill="#000294"/><rect x="1114" y="346" width="10" height="10" fill="#000294"/><rect x="1124" y="346" width="10" height="10" fill="#060894"/><rect x="1134" y="346" width="10" height="10" fill="#0c0694"/><rect x="1144" y="346" width="10" height="10" fill="#120494"/><rect x="1154" y="346" width="10" height="10" fill="#190294"/><rect x="1164" y="346" width="10" height="10" fill="#1f0194"/><rect x="1174" y="346" width="10" height="10" fill="#250094"/><rect x="1184" y="346" width="10" height="10" fill="#2c0094"/><rect x="1194" y="346" width="10" height="10" fill="#320094"/><rect x="1204" y="346" width="10" height="10" fill="#390094"/><rect x="1214" y="346" width="10" height="10" fill="#3f0094"/><rect x="1224" y="346" width="10" height="10" fill="#460094"/><rect x="1234" y="346" width="10" height="10" fill="#4c0094"/><rect x="1244" y="346" width="10" height="10" fill="#530094"/><rect x="1254" y="346" width="10" height="10" fill="#5a0094"/><rect x="1264" y="346" width="10" height="10" fill="#610094"/><rect x="1274" y="346" width="10" height="10" fill="#670094"/><rect x="1284" y="346" width="10" height="10" fill="#6e0094"/><rect x="1294" y="346" width="10" height="10" fill="#750094"/><rect x="1304" y="346" width="10" height="10" fill="#7c0094"/><rect x="1314" y="346" width="10" height="10" fill="#830094"/><rect x="1324" y="346" width="10" height="10" fill="#8a0094"/><rect x="1334" y="346" width="10" height="10" fill="#920094"/><rect x="1344" y="346" width="10" height="10" fill="#94008f"/><rect x="1354" y="346" width="10" height="10" fill="#940089"/><rect x="1364" y="346" width="10" height="10" fill="#940083"/><rect x="1374" y="346" width="10" height="10" fill="#94007d"/><rect x="1384" y="346" width="10" height="10" fill="#940078"/><rect x="1044" y="356" width="10" height="10" fill="#000594"/><rect x="1054" y="356" width="10" height="10" fill="#000594"/><rect x="1064" y="356" width="10" height="10" fill="#000494"/><rect x="1074" y="356" width="10" height="10" fill="#000394"/><rect x="1084" y="356" width="10" height="10" fill="#000394"/><rect x="1094" y="356" width="10" height="10" fill="#000294"/><rect x="1104" y="356" width="10" height="10" fill="#000294"/><rect x="1114" y="356" width="10" height="10" fill="#000194"/><rect x="1124" y="356" width="10" height="10" fill="#050694"/><rect x="1134" y="356" width="10" height="10" fill="#0b0494"/><rect x="1144" y="356" width="10" height="10" fill="#110294"/><rect x="1154" y="356" width="10" height="10" fill="#170194"/><rect x="1164" y="356" width="10" height="10" fill="#1d0094"/><rect x="1174" y="356" width="10" height="10" fill="#230094"/><rect x="1184" y="356" width="10" height="10" fill="#290094"/><rect x="1194" y="356" width="10" height="10" fill="#2f0094"/><rect x="1204" y="356" width="10" height="10" fill="#350094"/><rect x="1214" y="356" width="10" height="10" fill="#3c0094"/><rect x="1224" y="356" width="10" height="10" fill="#420094"/><rect x="1234" y="356" width="10" height="10" fill="#480094"/><rect x="1244" y="356" width="10" height="10" fill="#4f0094"/><rect x="1254" y="356" width="10" height="10" fill="#550094"/><rect x="1264" y="356" width="10" height="10" fill="#5c0094"/><rect x="1274" y="356" width="10" height="10" fill="#620094"/><rect x="1284" y="356" width="10" height="10" fill="#690094"/><rect x="1294" y="356" width="10" height="10" fill="#700094"/><rect x="1304" y="356" width="10" height="10" fill="#760094"/><rect x="1314" y="356" width="10" height="10" fill="#7d0094"/><rect x="1324" y="356" width="10" height="10" fill="#840094"/><rect x="1334" y="356" width="10" height="10" fill="#8b0094"/><rect x="1344" y="356" width="10" height="10" fill="#920094"/><rect x="1354" y="356" width="10" height="10" fill="#94008f"/><rect x="1364" y="356" width="10" height="10" fill="#940089"/><rect x="1374" y="356" width="10" height="10" fill="#940083"/><rect x="1044" y="366" width="10" height="10" fill="#000494"/><rect x="1054" y="366" width="10" height="10" fill="#000494"/><rect x="1064" y="366" width="10" height="10" fill="#000394"/><rect x="1074" y="366" width="10" height="10" fill="#000394"/><rect x="1084" y="366" width="10" height="10" fill="#000294"/><rect x="1094" y="366" width="10" height="10" fill="#000294"/><rect x="1104" y="366" width="10" height="10" fill="#000194"/><rect x="1114" y="366" width="10" height="10" fill="#000194"/><rect x="1124" y="366" width="10" height="10" fill="#040494"/><rect x="1134" y="366" width="10" height="10" fill="#090294"/><rect x="1144" y="366" width="10" height="10" fill="#0f0194"/><rect x="1154" y="366" width="10" height="10" fill="#150094"/><rect x="1164" y="366" width="10" height="10" fill="#1b0094"/><rect x="1174" y="366" width="10" height="10" fill="#210094"/><rect x="1184" y="366" width="10" height="10" fill="#270094"/><rect x="1194" y="366" width="10" height="10" fill="#2c0094"/><rect x="1204" y="366" width="10" height="10" fill="#320094"/><rect x="1214" y="366" width="10" height="10" fill="#390094"/><rect x="1224" y="366" width="10" height="10" fill="#3f0094"/><rect x="1234" y="366" width="10" height="10" fill="#450094"/><rect x="1244" y="366" width="10" height="10" fill="#4b0094"/><rect x="1254" y="366" width="10" height="10" fill="#510094"/><rect x="1264" y="366" width="10" height="10" fill="#570094"/><rect x="1274" y="366" width="10" height="10" fill="#5e0094"/><rect x="1284" y="366" width="10" height="10" fill="#640094"/><rect x="1294" y="366" width="10" height="10" fill="#6a0094"/><rect x="1304" y="366" width="10" height="10" fill="#710094"/><rect x="1314" y="366" width="10" height="10" fill="#770094"/><rect x="1324" y="366" width="10" height="10" fill="#7e0094"/><rect x="1334" y="366" width="10" height="10" fill="#840094"/><rect x="1344" y="366" width="10" height="10" fill="#8b0094"/><rect x="1354" y="366" width="10" height="10" fill="#920094"/><rect x="1364" y="366" width="10" height="10" fill="#940090"/><rect x="1054" y="376" width="10" height="10" fill="#000394"/><rect x="1064" y="376" width="10" height="10" fill="#000394"/><rect x="1074" y="376" width="10" height="10" fill="#000294"/><rect x="1084" y="376" width="10" height="10" fill="#000294"/><rect x="1094" y="376" width="10" height="10" fill="#000194"/><rect x="1104" y="376" width="10" height="10" fill="#000194"/><rect x="1114" y="376" width="10" height="10" fill="#000094"/><rect x="1124" y="376" width="10" height="10" fill="#030294"/><rect x="1134" y="376" width="10" height="10" fill="#080194"/><rect x="1144" y="376" width="10" height="10" fill="#0e0094"/><rect x="1154" y="376" width="10" height="10" fill="#130094"/><rect x="1164" y="376" width="10" height="10" fill="#190094"/><rect x="1174" y="376" width="10" height="10" fill="#1f0094"/><rect x="1184" y="376" width="10" height="10" fill="#240094"/><rect x="1194" y="376" width="10" height="10" fill="#2a0094"/><rect x="1204" y="376" width="10" height="10" fill="#300094"/><rect x="1214" y="376" width="10" height="10" fill="#360094"/><rect x="1224" y="376" width="10" height="10" fill="#3b0094"/><rect x="1234" y="376" width="10" height="10" fill="#410094"/><rect x="1244" y="376" width="10" height="10" fill="#470094"/><rect x="1254" y="376" width="10" height="10" fill="#4d0094"/><rect x="1264" y="376" width="10" height="10" fill="#530094"/><rect x="1274" y="376" width="10" height="10" fill="#590094"/><rect x="1284" y="376" width="10" height="10" fill="#5f0094"/><rect x="1294" y="376" width="10" height="10" fill="#660094"/><rect x="1304" y="376" width="10" height="10" fill="#6c0094"/><rect x="1314" y="376" width="10" height="10" fill="#720094"/><rect x="1324" y="376" width="10" height="10" fill="#780094"/><rect x="1334" y="376" width="10" height="10" fill="#7f0094"/><rect x="1344" y="376" width="10" height="10" fill="#850094"/><rect x="1354" y="376" width="10" height="10" fill="#8b0094"/><rect x="1064" y="386" width="10" height="10" fill="#000294"/><rect x="1074" y="386" width="10" height="10" fill="#000194"/><rect x="1084" y="386" width="10" height="10" fill="#000194"/><rect x="1094" y="386" width="10" height="10" fill="#000194"/><rect x="1104" y="386" width="10" height="10" fill="#000094"/><rect x="1114" y="386" width="10" height="10" fill="#000094"/><rect x="1124" y="386" width="10" height="10" fill="#020194"/><rect x="1134" y="386" width="10" height="10" fill="#070094"/><rect x="1144" y="386" width="10" height="10" fill="#0c0094"/><rect x="1154" y="386" width="10" height="10" fill="#120094"/><rect x="1164" y="386" width="10" height="10" fill="#170094"/><rect x="1174" y="386" width="10" height="10" fill="#1d0094"/><rect x="1184" y="386" width="10" height="10" fill="#220094"/><rect x="1194" y="386" width="10" height="10" fill="#280094"/><rect x="1204" y="386" width="10" height="10" fill="#2d0094"/><rect x="1214" y="386" width="10" height="10" fill="#330094"/><rect x="1224" y="386" width="10" height="10" fill="#390094"/><rect x="1234" y="386" width="10" height="10" fill="#3e0094"/><rect x="1244" y="386" width="10" height="10" fill="#440094"/><rect x="1254" y="386" width="10" height="10" fill="#4a0094"/><rect x="1264" y="386" width="10" height="10" fill="#4f0094"/><rect x="1274" y="386" width="10" height="10" fill="#550094"/><rect x="1284" y="386" width="10" height="10" fill="#5b0094"/><rect x="1294" y="386" width="10" height="10" fill="#610094"/><rect x="1304" y="386" width="10" height="10" fill="#670094"/><rect x="1314" y="386" width="10" height="10" fill="#6d0094"/><rect x="1324" y="386" width="10" height="10" fill="#730094"/><rect x="1334" y="386" width="10" height="10" fill="#790094"/><rect x="1344" y="386" width="10" height="10" fill="#7f0094"/><rect x="1064" y="396" width="10" height="10" fill="#000194"/><rect x="1074" y="396" width="10" height="10" fill="#000194"/><rect x="1084" y="396" width="10" height="10" fill="#000194"/><rect x="1094" y="396" width="10" height="10" fill="#000094"/><rect x="1104" y="396" width="10" height="10" fill="#000094"/><rect x="1114" y="396" width="10" height="10" fill="#000094"/><rect x="1124" y="396" width="10" height="10" fill="#010094"/><rect x="1134" y="396" width="10" height="10" fill="#060094"/><rect x="1144" y="396" width="10" height="10" fill="#0b0094"/><rect x="1154" y="396" width="10" height="10" fill="#100094"/><rect x="1164" y="396" width="10" height="10" fill="#160094"/><rect x="1174" y="396" width="10" height="10" fill="#1b0094"/><rect x="1184" y="396" width="10" height="10" fill="#200094"/><rect x="1194" y="396" width="10" height="10" fill="#260094"/><rect x="1204" y="396" width="10" height="10" fill="#2b0094"/><rect x="1214" y="396" width="10" height="10" fill="#300094"/><rect x="1224" y="396" width="10" height="10" fill="#360094"/><rect x="1234" y="396" width="10" height="10" fill="#3b0094"/><rect x="1244" y="396" width="10" height="10" fill="#410094"/><rect x="1254" y="396" width="10" height="10" fill="#460094"/><rect x="1264" y="396" width="10" height="10" fill="#4c0094"/><rect x="1274" y="396" width="10" height="10" fill="#520094"/><rect x="1284" y="396" width="10" height="10" fill="#570094"/><rect x="1294" y="396" width="10" height="10" fill="#5d0094"/><rect x="1304" y="396" width="10" height="10" fill="#630094"/><rect x="1314" y="396" width="10" height="10" fill="#680094"/><rect x="1324" y="396" width="10" height="10" fill="#6e0094"/><rect x="1334" y="396" width="10" height="10" fill="#740094"/><rect x="1074" y="406" width="10" height="10" fill="#000194"/><rect x="1084" y="406" width="10" height="10" fill="#000094"/><rect x="1094" y="406" width="10" height="10" fill="#000094"/><rect x="1104" y="406" width="10" height="10" fill="#000094"/><rect x="1114" y="406" width="10" height="10" fill="#000094"/><rect x="1124" y="406" width="10" height="10" fill="#000094"/><rect x="1134" y="406" width="10" height="10" fill="#050094"/><rect x="1144" y="406" width="10" height="10" fill="#0a0094"/><rect x="1154" y="406" width="10" height="10" fill="#0f0094"/><rect x="1164" y="406" width="10" height="10" fill="#140094"/><rect x="1174" y="406" width="10" height="10" fill="#190094"/><rect x="1184" y="406" width="10" height="10" fill="#1e0094"/><rect x="1194" y="406" width="10" height="10" fill="#240094"/><rect x="1204" y="406" width="10" height="10" fill="#290094"/><rect x="1214" y="406" width="10" height="10" fill="#2e0094"/><rect x="1224" y="406" width="10" height="10" fill="#330094"/><rect x="1234" y="406" width="10" height="10" fill="#390094"/><rect x="1244" y="406" width="10" height="10" fill="#3e0094"/><rect x="1254" y="406" width="10" height="10" fill="#430094"/><rect x="1264" y="406" width="10" height="10" fill="#490094"/><rect x="1274" y="406" width="10" height="10" fill="#4e0094"/><rect x="1284" y="406" width="10" height="10" fill="#530094"/><rect x="1294" y="406" width="10" height="10" fill="#590094"/><rect x="1304" y="406" width="10" height="10" fill="#5e0094"/><rect x="1314" y="406" width="10" height="10" fill="#640094"/><rect x="1324" y="406" width="10" height="10" fill="#6a0094"/><rect x="1084" y="416" width="10" height="10" fill="#000094"/><rect x="1094" y="416" width="10" height="10" fill="#000094"/><rect x="1104" y="416" width="10" height="10" fill="#000094"/><rect x="1114" y="416" width="10" height="10" fill="#000094"/><rect x="1124" y="416" width="10" height="10" fill="#000094"/><rect x="1134" y="416" width="10" height="10" fill="#040094"/><rect x="1144" y="416" width="10" height="10" fill="#090094"/><rect x="1154" y="416" width="10" height="10" fill="#0e0094"/><rect x="1164" y="416" width="10" height="10" fill="#130094"/><rect x="1174" y="416" width="10" height="10" fill="#180094"/><rect x="1184" y="416" width="10" height="10" fill="#1d0094"/><rect x="1194" y="416" width="10" height="10" fill="#220094"/><rect x="1204" y="416" width="10" height="10" fill="#270094"/><rect x="1214" y="416" width="10" height="10" fill="#2c0094"/><rect x="1224" y="416" width="10" height="10" fill="#310094"/><rect x="1234" y="416" width="10" height="10" fill="#360094"/><rect x="1244" y="416" width="10" height="10" fill="#3b0094"/><rect x="1254" y="416" width="10" height="10" fill="#400094"/><rect x="1264" y="416" width="10" height="10" fill="#450094"/><rect x="1274" y="416" width="10" height="10" fill="#4b0094"/><rect x="1284" y="416" width="10" height="10" fill="#500094"/><rect x="1294" y="416" width="10" height="10" fill="#550094"/><rect x="1304" y="416" width="10" height="10" fill="#5b0094"/><rect x="1314" y="416" width="10" height="10" fill="#600094"/><rect x="1094" y="426" width="10" height="10" fill="#000094"/><rect x="1104" y="426" width="10" height="10" fill="#000094"/><rect x="1114" y="426" width="10" height="10" fill="#000094"/><rect x="1124" y="426" width="10" height="10" fill="#000094"/><rect x="1134" y="426" width="10" height="10" fill="#030094"/><rect x="1144" y="426" width="10" height="10" fill="#080094"/><rect x="1154" y="426" width="10" height="10" fill="#0d0094"/><rect x="1164" y="426" width="10" height="10" fill="#110094"/><rect x="1174" y="426" width="10" height="10" fill="#160094"/><rect x="1184" y="426" width="10" height="10" fill="#1b0094"/><rect x="1194" y="426" width="10" height="10" fill="#200094"/><rect x="1204" y="426" width="10" height="10" fill="#250094"/><rect x="1214" y="426" width="10" height="10" fill="#2a0094"/><rect x="1224" y="426" width="10" height="10" fill="#2f0094"/><rect x="1234" y="426" width="10" height="10" fill="#340094"/><rect x="1244" y="426" width="10" height="10" fill="#380094"/><rect x="1254" y="426" width="10" height="10" fill="#3e0094"/><rect x="1264" y="426" width="10" height="10" fill="#430094"/><rect x="1274" y="426" width="10" height="10" fill="#480094"/><rect x="1284" y="426" width="10" height="10" fill="#4d0094"/><rect x="1294" y="426" width="10" height="10" fill="#520094"/><rect x="1304" y="426" width="10" height="10" fill="#570094"/><rect x="1094" y="436" width="10" height="10" fill="#000094"/><rect x="1104" y="436" width="10" height="10" fill="#000094"/><rect x="1114" y="436" width="10" height="10" fill="#000094"/><rect x="1124" y="436" width="10" height="10" fill="#000094"/><rect x="1134" y="436" width="10" height="10" fill="#020094"/><rect x="1144" y="436" width="10" height="10" fill="#070094"/><rect x="1154" y="436" width="10" height="10" fill="#0b0094"/><rect x="1164" y="436" width="10" height="10" fill="#100094"/><rect x="1174" y="436" width="10" height="10" fill="#150094"/><rect x="1184" y="436" width="10" height="10" fill="#190094"/><rect x="1194" y="436" width="10" height="10" fill="#1e0094"/><rect x="1204" y="436" width="10" height="10" fill="#230094"/><rect x="1214" y="436" width="10" height="10" fill="#280094"/><rect x="1224" y="436" width="10" height="10" fill="#2c0094"/><rect x="1234" y="436" width="10" height="10" fill="#310094"/><rect x="1244" y="436" width="10" height="10" fill="#360094"/><rect x="1254" y="436" width="10" height="10" fill="#3b0094"/><rect x="1264" y="436" width="10" height="10" fill="#400094"/><rect x="1274" y="436" width="10" height="10" fill="#450094"/><rect x="1284" y="436" width="10" height="10" fill="#4a0094"/><rect x="1294" y="436" width="10" height="10" fill="#4f0094"/><rect x="1104" y="446" width="10" height="10" fill="#000094"/><rect x="1114" y="446" width="10" height="10" fill="#000094"/><rect x="1124" y="446" width="10" height="10" fill="#000094"/><rect x="1134" y="446" width="10" height="10" fill="#020094"/><rect x="1144" y="446" width="10" height="10" fill="#060094"/><rect x="1154" y="446" width="10" height="10" fill="#0a0094"/><rect x="1164" y="446" width="10" height="10" fill="#0f0094"/><rect x="1174" y="446" width="10" height="10" fill="#130094"/><rect x="1184" y="446" width="10" height="10" fill="#180094"/><rect x="1194" y="446" width="10" height="10" fill="#1d0094"/><rect x="1204" y="446" width="10" height="10" fill="#210094"/><rect x="1214" y="446" width="10" height="10" fill="#260094"/><rect x="1224" y="446" width="10" height="10" fill="#2a0094"/><rect x="1234" y="446" width="10" height="10" fill="#2f0094"/><rect x="1244" y="446" width="10" height="10" fill="#340094"/><rect x="1254" y="446" width="10" height="10" fill="#380094"/><rect x="1264" y="446" width="10" height="10" fill="#3d0094"/><rect x="1274" y="446" width="10" height="10" fill="#420094"/><rect x="1284" y="446" width="10" height="10" fill="#470094"/><rect x="1114" y="456" width="10" height="10" fill="#000094"/><rect x="1124" y="456" width="10" height="10" fill="#000094"/><rect x="1134" y="456" width="10" height="10" fill="#010094"/><rect x="1144" y="456" width="10" height="10" fill="#050094"/><rect x="1154" y="456" width="10" height="10" fill="#090094"/><rect x="1164" y="456" width="10" height="10" fill="#0e0094"/><rect x="1174" y="456" width="10" height="10" fill="#120094"/><rect x="1184" y="456" width="10" height="10" fill="#170094"/><rect x="1194" y="456" width="10" height="10" fill="#1b0094"/><rect x="1204" y="456" width="10" height="10" fill="#200094"/><rect x="1214" y="456" width="10" height="10" fill="#240094"/><rect x="1224" y="456" width="10" height="10" fill="#290094"/><rect x="1234" y="456" width="10" height="10" fill="#2d0094"/><rect x="1244" y="456" width="10" height="10" fill="#320094"/><rect x="1254" y="456" width="10" height="10" fill="#360094"/><rect x="1264" y="456" width="10" height="10" fill="#3b0094"/><rect x="1274" y="456" width="10" height="10" fill="#3f0094"/><rect x="1124" y="466" width="10" height="10" fill="#000094"/><rect x="1134" y="466" width="10" height="10" fill="#000094"/><rect x="1144" y="466" width="10" height="10" fill="#040094"/><rect x="1154" y="466" width="10" height="10" fill="#090094"/><rect x="1164" y="466" width="10" height="10" fill="#0d0094"/><rect x="1174" y="466" width="10" height="10" fill="#110094"/><rect x="1184" y="466" width="10" height="10" fill="#150094"/><rect x="1194" y="466" width="10" height="10" fill="#1a0094"/><rect x="1204" y="466" width="10" height="10" fill="#1e0094"/><rect x="1214" y="466" width="10" height="10" fill="#220094"/><rect x="1224" y="466" width="10" height="10" fill="#270094"/><rect x="1234" y="466" width="10" height="10" fill="#2b0094"/><rect x="1244" y="466" width="10" height="10" fill="#300094"/><rect x="1254" y="466" width="10" height="10" fill="#340094"/><rect x="1264" y="466" width="10" height="10" fill="#380094"/><rect x="1134" y="476" width="10" height="10" fill="#000094"/><rect x="1144" y="476" width="10" height="10" fill="#040094"/><rect x="1154" y="476" width="10" height="10" fill="#080094"/><rect x="1164" y="476" width="10" height="10" fill="#0c0094"/><rect x="1174" y="476" width="10" height="10" fill="#100094"/><rect x="1184" y="476" width="10" height="10" fill="#140094"/><rect x="1194" y="476" width="10" height="10" fill="#180094"/><rect x="1204" y="476" width="10" height="10" fill="#1d0094"/><rect x="1214" y="476" width="10" height="10" fill="#210094"/><rect x="1224" y="476" width="10" height="10" fill="#250094"/><rect x="1234" y="476" width="10" height="10" fill="#290094"/><rect x="1244" y="476" width="10" height="10" fill="#2e0094"/><rect x="1254" y="476" width="10" height="10" fill="#320094"/><rect x="1154" y="486" width="10" height="10" fill="#070094"/><rect x="1164" y="486" width="10" height="10" fill="#0b0094"/><rect x="1174" y="486" width="10" height="10" fill="#0f0094"/><rect x="1184" y="486" width="10" height="10" fill="#130094"/><rect x="1194" y="486" width="10" height="10" fill="#170094"/><rect x="1204" y="486" width="10" height="10" fill="#1b0094"/><rect x="1214" y="486" width="10" height="10" fill="#1f0094"/><rect x="1224" y="486" width="10" height="10" fill="#230094"/><rect x="1234" y="486" width="10" height="10" fill="#280094"/><rect x="1244" y="486" width="10" height="10" fill="#2c0094"/><rect x="1164" y="496" width="10" height="10" fill="#0a0094"/><rect x="1174" y="496" width="10" height="10" fill="#0e0094"/><rect x="1184" y="496" width="10" height="10" fill="#120094"/><rect x="1194" y="496" width="10" height="10" fill="#160094"/><rect x="1204" y="496" width="10" height="10" fill="#1a0094"/><rect x="1214" y="496" width="10" height="10" fill="#1e0094"/><rect x="1224" y="496" width="10" height="10" fill="#220094"/><rect x="1234" y="496" width="10" height="10" fill="#260094"/><rect x="1174" y="506" width="10" height="10" fill="#0d0094"/><rect x="1184" y="506" width="10" height="10" fill="#110094"/><rect x="1194" y="506" width="10" height="10" fill="#150094"/><rect x="1204" y="506" width="10" height="10" fill="#190094"/><rect x="1214" y="506" width="10" height="10" fill="#1c0094"/><rect x="1224" y="506" width="10" height="10" fill="#200094"/><rect x="1184" y="516" width="10" height="10" fill="#009400"/><rect x="1194" y="516" width="10" height="10" fill="#009400"/><rect x="1204" y="516" width="10" height="10" fill="#009400"/><rect x="1214" y="516" width="10" height="10" fill="#009400"/></g></g><g clip-path="url(#triclip)"><g id="tg" filter="url(#bt)"><rect x="1067" y="70" width="7" height="7" fill="#00ff00"/><rect x="1074" y="70" width="7" height="7" fill="#08ff00"/><rect x="1081" y="70" width="7" height="7" fill="#19ff00"/><rect x="1088" y="70" width="7" height="7" fill="#2bff00"/><rect x="1095" y="70" width="7" height="7" fill="#3eff00"/><rect x="1102" y="70" width="7" height="7" fill="#51ff00"/><rect x="1109" y="70" width="7" height="7" fill="#65ff00"/><rect x="1116" y="70" width="7" height="7" fill="#7aff00"/><rect x="1060" y="77" width="7" height="7" fill="#00ff00"/><rect x="1067" y="77" width="7" height="7" fill="#00ff00"/><rect x="1074" y="77" width="7" height="7" fill="#05ff00"/><rect x="1081" y="77" width="7" height="7" fill="#16ff00"/><rect x="1088" y="77" width="7" height="7" fill="#29ff00"/><rect x="1095" y="77" width="7" height="7" fill="#3cff00"/><rect x="1102" y="77" width="7" height="7" fill="#50ff00"/><rect x="1109" y="77" width="7" height="7" fill="#64ff00"/><rect x="1116" y="77" width="7" height="7" fill="#7aff00"/><rect x="1123" y="77" width="7" height="7" fill="#91ff00"/><rect x="1130" y="77" width="7" height="7" fill="#a8ff00"/><rect x="1137" y="77" width="7" height="7" fill="#c1ff00"/><rect x="1144" y="77" width="7" height="7" fill="#dbff00"/><rect x="1151" y="77" width="7" height="7" fill="#f6ff00"/><rect x="1158" y="77" width="7" height="7" fill="#ffed00"/><rect x="1165" y="77" width="7" height="7" fill="#ffd500"/><rect x="1172" y="77" width="7" height="7" fill="#ffc100"/><rect x="1179" y="77" width="7" height="7" fill="#ffb000"/><rect x="1186" y="77" width="7" height="7" fill="#ffa100"/><rect x="1060" y="84" width="7" height="7" fill="#00ff04"/><rect x="1067" y="84" width="7" height="7" fill="#00ff03"/><rect x="1074" y="84" width="7" height="7" fill="#02ff01"/><rect x="1081" y="84" width="7" height="7" fill="#14ff00"/><rect x="1088" y="84" width="7" height="7" fill="#27ff00"/><rect x="1095" y="84" width="7" height="7" fill="#3aff00"/><rect x="1102" y="84" width="7" height="7" fill="#4eff00"/><rect x="1109" y="84" width="7" height="7" fill="#63ff00"/><rect x="1116" y="84" width="7" height="7" fill="#79ff00"/><rect x="1123" y="84" width="7" height="7" fill="#91ff00"/><rect x="1130" y="84" width="7" height="7" fill="#a9ff00"/><rect x="1137" y="84" width="7" height="7" fill="#c2ff00"/><rect x="1144" y="84" width="7" height="7" fill="#ddff00"/><rect x="1151" y="84" width="7" height="7" fill="#f9ff00"/><rect x="1158" y="84" width="7" height="7" fill="#ffea00"/><rect x="1165" y="84" width="7" height="7" fill="#ffd300"/><rect x="1172" y="84" width="7" height="7" fill="#ffbe00"/><rect x="1179" y="84" width="7" height="7" fill="#ffad00"/><rect x="1186" y="84" width="7" height="7" fill="#ff9e00"/><rect x="1193" y="84" width="7" height="7" fill="#ff9000"/><rect x="1200" y="84" width="7" height="7" fill="#ff8400"/><rect x="1207" y="84" width="7" height="7" fill="#ff7900"/><rect x="1214" y="84" width="7" height="7" fill="#ff7000"/><rect x="1221" y="84" width="7" height="7" fill="#ff6700"/><rect x="1228" y="84" width="7" height="7" fill="#ff5f00"/><rect x="1235" y="84" width="7" height="7" fill="#ff5800"/><rect x="1242" y="84" width="7" height="7" fill="#ff5100"/><rect x="1249" y="84" width="7" height="7" fill="#ff4b00"/><rect x="1256" y="84" width="7" height="7" fill="#ff4500"/><rect x="1263" y="84" width="7" height="7" fill="#ff4000"/><rect x="1060" y="91" width="7" height="7" fill="#00ff14"/><rect x="1067" y="91" width="7" height="7" fill="#00ff13"/><rect x="1074" y="91" width="7" height="7" fill="#00ff12"/><rect x="1081" y="91" width="7" height="7" fill="#11ff11"/><rect x="1088" y="91" width="7" height="7" fill="#24ff0f"/><rect x="1095" y="91" width="7" height="7" fill="#38ff0e"/><rect x="1102" y="91" width="7" height="7" fill="#4dff0d"/><rect x="1109" y="91" width="7" height="7" fill="#62ff0b"/><rect x="1116" y="91" width="7" height="7" fill="#79ff0a"/><rect x="1123" y="91" width="7" height="7" fill="#91ff08"/><rect x="1130" y="91" width="7" height="7" fill="#a9ff06"/><rect x="1137" y="91" width="7" height="7" fill="#c3ff05"/><rect x="1144" y="91" width="7" height="7" fill="#deff03"/><rect x="1151" y="91" width="7" height="7" fill="#fbff01"/><rect x="1158" y="91" width="7" height="7" fill="#ffe700"/><rect x="1165" y="91" width="7" height="7" fill="#ffd000"/><rect x="1172" y="91" width="7" height="7" fill="#ffbc00"/><rect x="1179" y="91" width="7" height="7" fill="#ffaa00"/><rect x="1186" y="91" width="7" height="7" fill="#ff9b00"/><rect x="1193" y="91" width="7" height="7" fill="#ff8d00"/><rect x="1200" y="91" width="7" height="7" fill="#ff8100"/><rect x="1207" y="91" width="7" height="7" fill="#ff7700"/><rect x="1214" y="91" width="7" height="7" fill="#ff6d00"/><rect x="1221" y="91" width="7" height="7" fill="#ff6400"/><rect x="1228" y="91" width="7" height="7" fill="#ff5c00"/><rect x="1235" y="91" width="7" height="7" fill="#ff5500"/><rect x="1242" y="91" width="7" height="7" fill="#ff4f00"/><rect x="1249" y="91" width="7" height="7" fill="#ff4800"/><rect x="1256" y="91" width="7" height="7" fill="#ff4300"/><rect x="1263" y="91" width="7" height="7" fill="#ff3e00"/><rect x="1270" y="91" width="7" height="7" fill="#ff3900"/><rect x="1277" y="91" width="7" height="7" fill="#ff3400"/><rect x="1284" y="91" width="7" height="7" fill="#ff3000"/><rect x="1291" y="91" width="7" height="7" fill="#ff2c00"/><rect x="1298" y="91" width="7" height="7" fill="#ff2800"/><rect x="1305" y="91" width="7" height="7" fill="#ff2500"/><rect x="1312" y="91" width="7" height="7" fill="#ff2200"/><rect x="1319" y="91" width="7" height="7" fill="#ff1f00"/><rect x="1326" y="91" width="7" height="7" fill="#ff1c00"/><rect x="1333" y="91" width="7" height="7" fill="#ff1900"/><rect x="1340" y="91" width="7" height="7" fill="#ff1600"/><rect x="1060" y="98" width="7" height="7" fill="#00ff25"/><rect x="1067" y="98" width="7" height="7" fill="#00ff24"/><rect x="1074" y="98" width="7" height="7" fill="#00ff23"/><rect x="1081" y="98" width="7" height="7" fill="#0fff22"/><rect x="1088" y="98" width="7" height="7" fill="#22ff21"/><rect x="1095" y="98" width="7" height="7" fill="#36ff20"/><rect x="1102" y="98" width="7" height="7" fill="#4bff1f"/><rect x="1109" y="98" width="7" height="7" fill="#61ff1e"/><rect x="1116" y="98" width="7" height="7" fill="#78ff1d"/><rect x="1123" y="98" width="7" height="7" fill="#90ff1c"/><rect x="1130" y="98" width="7" height="7" fill="#aaff1b"/><rect x="1137" y="98" width="7" height="7" fill="#c4ff1a"/><rect x="1144" y="98" width="7" height="7" fill="#e0ff18"/><rect x="1151" y="98" width="7" height="7" fill="#feff17"/><rect x="1158" y="98" width="7" height="7" fill="#ffe413"/><rect x="1165" y="98" width="7" height="7" fill="#ffcd10"/><rect x="1172" y="98" width="7" height="7" fill="#ffb80d"/><rect x="1179" y="98" width="7" height="7" fill="#ffa70b"/><rect x="1186" y="98" width="7" height="7" fill="#ff9809"/><rect x="1193" y="98" width="7" height="7" fill="#ff8a07"/><rect x="1200" y="98" width="7" height="7" fill="#ff7e05"/><rect x="1207" y="98" width="7" height="7" fill="#ff7404"/><rect x="1214" y="98" width="7" height="7" fill="#ff6a02"/><rect x="1221" y="98" width="7" height="7" fill="#ff6201"/><rect x="1228" y="98" width="7" height="7" fill="#ff5a00"/><rect x="1235" y="98" width="7" height="7" fill="#ff5300"/><rect x="1242" y="98" width="7" height="7" fill="#ff4c00"/><rect x="1249" y="98" width="7" height="7" fill="#ff4600"/><rect x="1256" y="98" width="7" height="7" fill="#ff4000"/><rect x="1263" y="98" width="7" height="7" fill="#ff3b00"/><rect x="1270" y="98" width="7" height="7" fill="#ff3700"/><rect x="1277" y="98" width="7" height="7" fill="#ff3200"/><rect x="1284" y="98" width="7" height="7" fill="#ff2e00"/><rect x="1291" y="98" width="7" height="7" fill="#ff2a00"/><rect x="1298" y="98" width="7" height="7" fill="#ff2600"/><rect x="1305" y="98" width="7" height="7" fill="#ff2300"/><rect x="1312" y="98" width="7" height="7" fill="#ff2000"/><rect x="1319" y="98" width="7" height="7" fill="#ff1d00"/><rect x="1326" y="98" width="7" height="7" fill="#ff1a00"/><rect x="1333" y="98" width="7" height="7" fill="#ff1700"/><rect x="1340" y="98" width="7" height="7" fill="#ff1500"/><rect x="1347" y="98" width="7" height="7" fill="#ff1200"/><rect x="1354" y="98" width="7" height="7" fill="#ff1000"/><rect x="1361" y="98" width="7" height="7" fill="#ff0e00"/><rect x="1368" y="98" width="7" height="7" fill="#ff0c00"/><rect x="1375" y="98" width="7" height="7" fill="#ff0a00"/><rect x="1382" y="98" width="7" height="7" fill="#ff0800"/><rect x="1389" y="98" width="7" height="7" fill="#ff0600"/><rect x="1396" y="98" width="7" height="7" fill="#ff0400"/><rect x="1403" y="98" width="7" height="7" fill="#ff0300"/><rect x="1060" y="105" width="7" height="7" fill="#00ff36"/><rect x="1067" y="105" width="7" height="7" fill="#00ff36"/><rect x="1074" y="105" width="7" height="7" fill="#00ff35"/><rect x="1081" y="105" width="7" height="7" fill="#0cff35"/><rect x="1088" y="105" width="7" height="7" fill="#20ff34"/><rect x="1095" y="105" width="7" height="7" fill="#34ff33"/><rect x="1102" y="105" width="7" height="7" fill="#4aff33"/><rect x="1109" y="105" width="7" height="7" fill="#60ff32"/><rect x="1116" y="105" width="7" height="7" fill="#78ff32"/><rect x="1123" y="105" width="7" height="7" fill="#90ff31"/><rect x="1130" y="105" width="7" height="7" fill="#aaff30"/><rect x="1137" y="105" width="7" height="7" fill="#c6ff30"/><rect x="1144" y="105" width="7" height="7" fill="#e2ff2f"/><rect x="1151" y="105" width="7" height="7" fill="#fffd2e"/><rect x="1158" y="105" width="7" height="7" fill="#ffe128"/><rect x="1165" y="105" width="7" height="7" fill="#ffca23"/><rect x="1172" y="105" width="7" height="7" fill="#ffb51f"/><rect x="1179" y="105" width="7" height="7" fill="#ffa41b"/><rect x="1186" y="105" width="7" height="7" fill="#ff9518"/><rect x="1193" y="105" width="7" height="7" fill="#ff8715"/><rect x="1200" y="105" width="7" height="7" fill="#ff7c13"/><rect x="1207" y="105" width="7" height="7" fill="#ff7110"/><rect x="1214" y="105" width="7" height="7" fill="#ff670f"/><rect x="1221" y="105" width="7" height="7" fill="#ff5f0d"/><rect x="1228" y="105" width="7" height="7" fill="#ff570b"/><rect x="1235" y="105" width="7" height="7" fill="#ff500a"/><rect x="1242" y="105" width="7" height="7" fill="#ff4a08"/><rect x="1249" y="105" width="7" height="7" fill="#ff4407"/><rect x="1256" y="105" width="7" height="7" fill="#ff3e06"/><rect x="1263" y="105" width="7" height="7" fill="#ff3905"/><rect x="1270" y="105" width="7" height="7" fill="#ff3404"/><rect x="1277" y="105" width="7" height="7" fill="#ff3003"/><rect x="1284" y="105" width="7" height="7" fill="#ff2c02"/><rect x="1291" y="105" width="7" height="7" fill="#ff2801"/><rect x="1298" y="105" width="7" height="7" fill="#ff2401"/><rect x="1305" y="105" width="7" height="7" fill="#ff2100"/><rect x="1312" y="105" width="7" height="7" fill="#ff1e00"/><rect x="1319" y="105" width="7" height="7" fill="#ff1b00"/><rect x="1326" y="105" width="7" height="7" fill="#ff1800"/><rect x="1333" y="105" width="7" height="7" fill="#ff1500"/><rect x="1340" y="105" width="7" height="7" fill="#ff1300"/><rect x="1347" y="105" width="7" height="7" fill="#ff1000"/><rect x="1354" y="105" width="7" height="7" fill="#ff0e00"/><rect x="1361" y="105" width="7" height="7" fill="#ff0c00"/><rect x="1368" y="105" width="7" height="7" fill="#ff0a00"/><rect x="1375" y="105" width="7" height="7" fill="#ff0800"/><rect x="1382" y="105" width="7" height="7" fill="#ff0600"/><rect x="1389" y="105" width="7" height="7" fill="#ff0400"/><rect x="1396" y="105" width="7" height="7" fill="#ff0300"/><rect x="1403" y="105" width="7" height="7" fill="#ff0100"/><rect x="1410" y="105" width="7" height="7" fill="#ff0000"/><rect x="1060" y="112" width="7" height="7" fill="#00ff48"/><rect x="1067" y="112" width="7" height="7" fill="#00ff48"/><rect x="1074" y="112" width="7" height="7" fill="#00ff48"/><rect x="1081" y="112" width="7" height="7" fill="#09ff48"/><rect x="1088" y="112" width="7" height="7" fill="#1dff48"/><rect x="1095" y="112" width="7" height="7" fill="#32ff47"/><rect x="1102" y="112" width="7" height="7" fill="#48ff47"/><rect x="1109" y="112" width="7" height="7" fill="#5fff47"/><rect x="1116" y="112" width="7" height="7" fill="#77ff47"/><rect x="1123" y="112" width="7" height="7" fill="#90ff47"/><rect x="1130" y="112" width="7" height="7" fill="#abff47"/><rect x="1137" y="112" width="7" height="7" fill="#c7ff47"/><rect x="1144" y="112" width="7" height="7" fill="#e5ff46"/><rect x="1151" y="112" width="7" height="7" fill="#fffa45"/><rect x="1158" y="112" width="7" height="7" fill="#ffde3d"/><rect x="1165" y="112" width="7" height="7" fill="#ffc636"/><rect x="1172" y="112" width="7" height="7" fill="#ffb231"/><rect x="1179" y="112" width="7" height="7" fill="#ffa12c"/><rect x="1186" y="112" width="7" height="7" fill="#ff9228"/><rect x="1193" y="112" width="7" height="7" fill="#ff8424"/><rect x="1200" y="112" width="7" height="7" fill="#ff7920"/><rect x="1207" y="112" width="7" height="7" fill="#ff6e1d"/><rect x="1214" y="112" width="7" height="7" fill="#ff651b"/><rect x="1221" y="112" width="7" height="7" fill="#ff5c18"/><rect x="1228" y="112" width="7" height="7" fill="#ff5416"/><rect x="1235" y="112" width="7" height="7" fill="#ff4d14"/><rect x="1242" y="112" width="7" height="7" fill="#ff4712"/><rect x="1249" y="112" width="7" height="7" fill="#ff4111"/><rect x="1256" y="112" width="7" height="7" fill="#ff3c0f"/><rect x="1263" y="112" width="7" height="7" fill="#ff370e"/><rect x="1270" y="112" width="7" height="7" fill="#ff320d"/><rect x="1277" y="112" width="7" height="7" fill="#ff2e0b"/><rect x="1284" y="112" width="7" height="7" fill="#ff2a0a"/><rect x="1291" y="112" width="7" height="7" fill="#ff2609"/><rect x="1298" y="112" width="7" height="7" fill="#ff2208"/><rect x="1305" y="112" width="7" height="7" fill="#ff1f07"/><rect x="1312" y="112" width="7" height="7" fill="#ff1c06"/><rect x="1319" y="112" width="7" height="7" fill="#ff1905"/><rect x="1326" y="112" width="7" height="7" fill="#ff1605"/><rect x="1333" y="112" width="7" height="7" fill="#ff1304"/><rect x="1340" y="112" width="7" height="7" fill="#ff1103"/><rect x="1347" y="112" width="7" height="7" fill="#ff0f03"/><rect x="1354" y="112" width="7" height="7" fill="#ff0c02"/><rect x="1361" y="112" width="7" height="7" fill="#ff0a01"/><rect x="1368" y="112" width="7" height="7" fill="#ff0801"/><rect x="1375" y="112" width="7" height="7" fill="#ff0600"/><rect x="1382" y="112" width="7" height="7" fill="#ff0400"/><rect x="1389" y="112" width="7" height="7" fill="#ff0300"/><rect x="1396" y="112" width="7" height="7" fill="#ff0100"/><rect x="1403" y="112" width="7" height="7" fill="#ff0000"/><rect x="1410" y="112" width="7" height="7" fill="#ff0000"/><rect x="1067" y="119" width="7" height="7" fill="#00ff5b"/><rect x="1074" y="119" width="7" height="7" fill="#00ff5b"/><rect x="1081" y="119" width="7" height="7" fill="#06ff5c"/><rect x="1088" y="119" width="7" height="7" fill="#1bff5c"/><rect x="1095" y="119" width="7" height="7" fill="#30ff5c"/><rect x="1102" y="119" width="7" height="7" fill="#46ff5d"/><rect x="1109" y="119" width="7" height="7" fill="#5eff5d"/><rect x="1116" y="119" width="7" height="7" fill="#76ff5e"/><rect x="1123" y="119" width="7" height="7" fill="#90ff5e"/><rect x="1130" y="119" width="7" height="7" fill="#acff5e"/><rect x="1137" y="119" width="7" height="7" fill="#c8ff5f"/><rect x="1144" y="119" width="7" height="7" fill="#e7ff5f"/><rect x="1151" y="119" width="7" height="7" fill="#fff75d"/><rect x="1158" y="119" width="7" height="7" fill="#ffdb53"/><rect x="1165" y="119" width="7" height="7" fill="#ffc34a"/><rect x="1172" y="119" width="7" height="7" fill="#ffaf43"/><rect x="1179" y="119" width="7" height="7" fill="#ff9e3d"/><rect x="1186" y="119" width="7" height="7" fill="#ff8e37"/><rect x="1193" y="119" width="7" height="7" fill="#ff8133"/><rect x="1200" y="119" width="7" height="7" fill="#ff762e"/><rect x="1207" y="119" width="7" height="7" fill="#ff6b2b"/><rect x="1214" y="119" width="7" height="7" fill="#ff6227"/><rect x="1221" y="119" width="7" height="7" fill="#ff5924"/><rect x="1228" y="119" width="7" height="7" fill="#ff5222"/><rect x="1235" y="119" width="7" height="7" fill="#ff4b1f"/><rect x="1242" y="119" width="7" height="7" fill="#ff441d"/><rect x="1249" y="119" width="7" height="7" fill="#ff3f1b"/><rect x="1256" y="119" width="7" height="7" fill="#ff3919"/><rect x="1263" y="119" width="7" height="7" fill="#ff3417"/><rect x="1270" y="119" width="7" height="7" fill="#ff3015"/><rect x="1277" y="119" width="7" height="7" fill="#ff2b14"/><rect x="1284" y="119" width="7" height="7" fill="#ff2712"/><rect x="1291" y="119" width="7" height="7" fill="#ff2411"/><rect x="1298" y="119" width="7" height="7" fill="#ff2010"/><rect x="1305" y="119" width="7" height="7" fill="#ff1d0f"/><rect x="1312" y="119" width="7" height="7" fill="#ff1a0d"/><rect x="1319" y="119" width="7" height="7" fill="#ff170c"/><rect x="1326" y="119" width="7" height="7" fill="#ff140b"/><rect x="1333" y="119" width="7" height="7" fill="#ff120b"/><rect x="1340" y="119" width="7" height="7" fill="#ff0f0a"/><rect x="1347" y="119" width="7" height="7" fill="#ff0d09"/><rect x="1354" y="119" width="7" height="7" fill="#ff0b08"/><rect x="1361" y="119" width="7" height="7" fill="#ff0907"/><rect x="1368" y="119" width="7" height="7" fill="#ff0707"/><rect x="1375" y="119" width="7" height="7" fill="#ff0506"/><rect x="1382" y="119" width="7" height="7" fill="#ff0305"/><rect x="1389" y="119" width="7" height="7" fill="#ff0105"/><rect x="1396" y="119" width="7" height="7" fill="#ff0004"/><rect x="1403" y="119" width="7" height="7" fill="#ff0003"/><rect x="1410" y="119" width="7" height="7" fill="#ff0003"/><rect x="1067" y="126" width="7" height="7" fill="#00ff6f"/><rect x="1074" y="126" width="7" height="7" fill="#00ff70"/><rect x="1081" y="126" width="7" height="7" fill="#03ff71"/><rect x="1088" y="126" width="7" height="7" fill="#18ff71"/><rect x="1095" y="126" width="7" height="7" fill="#2eff72"/><rect x="1102" y="126" width="7" height="7" fill="#44ff73"/><rect x="1109" y="126" width="7" height="7" fill="#5cff74"/><rect x="1116" y="126" width="7" height="7" fill="#76ff75"/><rect x="1123" y="126" width="7" height="7" fill="#90ff76"/><rect x="1130" y="126" width="7" height="7" fill="#acff77"/><rect x="1137" y="126" width="7" height="7" fill="#caff79"/><rect x="1144" y="126" width="7" height="7" fill="#e9ff7a"/><rect x="1151" y="126" width="7" height="7" fill="#fff476"/><rect x="1158" y="126" width="7" height="7" fill="#ffd869"/><rect x="1165" y="126" width="7" height="7" fill="#ffc05f"/><rect x="1172" y="126" width="7" height="7" fill="#ffac56"/><rect x="1179" y="126" width="7" height="7" fill="#ff9a4e"/><rect x="1186" y="126" width="7" height="7" fill="#ff8b48"/><rect x="1193" y="126" width="7" height="7" fill="#ff7e42"/><rect x="1200" y="126" width="7" height="7" fill="#ff723d"/><rect x="1207" y="126" width="7" height="7" fill="#ff6838"/><rect x="1214" y="126" width="7" height="7" fill="#ff5f34"/><rect x="1221" y="126" width="7" height="7" fill="#ff5630"/><rect x="1228" y="126" width="7" height="7" fill="#ff4f2d"/><rect x="1235" y="126" width="7" height="7" fill="#ff482a"/><rect x="1242" y="126" width="7" height="7" fill="#ff4227"/><rect x="1249" y="126" width="7" height="7" fill="#ff3c25"/><rect x="1256" y="126" width="7" height="7" fill="#ff3722"/><rect x="1263" y="126" width="7" height="7" fill="#ff3220"/><rect x="1270" y="126" width="7" height="7" fill="#ff2d1e"/><rect x="1277" y="126" width="7" height="7" fill="#ff291c"/><rect x="1284" y="126" width="7" height="7" fill="#ff251b"/><rect x="1291" y="126" width="7" height="7" fill="#ff2119"/><rect x="1298" y="126" width="7" height="7" fill="#ff1e17"/><rect x="1305" y="126" width="7" height="7" fill="#ff1b16"/><rect x="1312" y="126" width="7" height="7" fill="#ff1815"/><rect x="1319" y="126" width="7" height="7" fill="#ff1513"/><rect x="1326" y="126" width="7" height="7" fill="#ff1212"/><rect x="1333" y="126" width="7" height="7" fill="#ff1011"/><rect x="1340" y="126" width="7" height="7" fill="#ff0d10"/><rect x="1347" y="126" width="7" height="7" fill="#ff0b0f"/><rect x="1354" y="126" width="7" height="7" fill="#ff090e"/><rect x="1361" y="126" width="7" height="7" fill="#ff070d"/><rect x="1368" y="126" width="7" height="7" fill="#ff050c"/><rect x="1375" y="126" width="7" height="7" fill="#ff030c"/><rect x="1382" y="126" width="7" height="7" fill="#ff010b"/><rect x="1389" y="126" width="7" height="7" fill="#ff000a"/><rect x="1396" y="126" width="7" height="7" fill="#ff0009"/><rect x="1403" y="126" width="7" height="7" fill="#ff0009"/><rect x="1410" y="126" width="7" height="7" fill="#ff0008"/><rect x="1067" y="133" width="7" height="7" fill="#00ff84"/><rect x="1074" y="133" width="7" height="7" fill="#00ff85"/><rect x="1081" y="133" width="7" height="7" fill="#00ff87"/><rect x="1088" y="133" width="7" height="7" fill="#15ff88"/><rect x="1095" y="133" width="7" height="7" fill="#2bff89"/><rect x="1102" y="133" width="7" height="7" fill="#43ff8b"/><rect x="1109" y="133" width="7" height="7" fill="#5bff8c"/><rect x="1116" y="133" width="7" height="7" fill="#75ff8e"/><rect x="1123" y="133" width="7" height="7" fill="#90ff90"/><rect x="1130" y="133" width="7" height="7" fill="#adff92"/><rect x="1137" y="133" width="7" height="7" fill="#ccff94"/><rect x="1144" y="133" width="7" height="7" fill="#ecff96"/><rect x="1151" y="133" width="7" height="7" fill="#fff190"/><rect x="1158" y="133" width="7" height="7" fill="#ffd481"/><rect x="1165" y="133" width="7" height="7" fill="#ffbc74"/><rect x="1172" y="133" width="7" height="7" fill="#ffa869"/><rect x="1179" y="133" width="7" height="7" fill="#ff9760"/><rect x="1186" y="133" width="7" height="7" fill="#ff8858"/><rect x="1193" y="133" width="7" height="7" fill="#ff7b51"/><rect x="1200" y="133" width="7" height="7" fill="#ff6f4b"/><rect x="1207" y="133" width="7" height="7" fill="#ff6546"/><rect x="1214" y="133" width="7" height="7" fill="#ff5c41"/><rect x="1221" y="133" width="7" height="7" fill="#ff543d"/><rect x="1228" y="133" width="7" height="7" fill="#ff4c39"/><rect x="1235" y="133" width="7" height="7" fill="#ff4535"/><rect x="1242" y="133" width="7" height="7" fill="#ff3f32"/><rect x="1249" y="133" width="7" height="7" fill="#ff392f"/><rect x="1256" y="133" width="7" height="7" fill="#ff342c"/><rect x="1263" y="133" width="7" height="7" fill="#ff2f2a"/><rect x="1270" y="133" width="7" height="7" fill="#ff2b27"/><rect x="1277" y="133" width="7" height="7" fill="#ff2725"/><rect x="1284" y="133" width="7" height="7" fill="#ff2323"/><rect x="1291" y="133" width="7" height="7" fill="#ff1f21"/><rect x="1298" y="133" width="7" height="7" fill="#ff1c1f"/><rect x="1305" y="133" width="7" height="7" fill="#ff191e"/><rect x="1312" y="133" width="7" height="7" fill="#ff161c"/><rect x="1319" y="133" width="7" height="7" fill="#ff131b"/><rect x="1326" y="133" width="7" height="7" fill="#ff1019"/><rect x="1333" y="133" width="7" height="7" fill="#ff0e18"/><rect x="1340" y="133" width="7" height="7" fill="#ff0b17"/><rect x="1347" y="133" width="7" height="7" fill="#ff0915"/><rect x="1354" y="133" width="7" height="7" fill="#ff0714"/><rect x="1361" y="133" width="7" height="7" fill="#ff0513"/><rect x="1368" y="133" width="7" height="7" fill="#ff0312"/><rect x="1375" y="133" width="7" height="7" fill="#ff0111"/><rect x="1382" y="133" width="7" height="7" fill="#ff0010"/><rect x="1389" y="133" width="7" height="7" fill="#ff000f"/><rect x="1396" y="133" width="7" height="7" fill="#ff000f"/><rect x="1403" y="133" width="7" height="7" fill="#ff000e"/><rect x="1067" y="140" width="7" height="7" fill="#00ff9a"/><rect x="1074" y="140" width="7" height="7" fill="#00ff9c"/><rect x="1081" y="140" width="7" height="7" fill="#00ff9d"/><rect x="1088" y="140" width="7" height="7" fill="#12ff9f"/><rect x="1095" y="140" width="7" height="7" fill="#29ffa1"/><rect x="1102" y="140" width="7" height="7" fill="#41ffa4"/><rect x="1109" y="140" width="7" height="7" fill="#5affa6"/><rect x="1116" y="140" width="7" height="7" fill="#74ffa8"/><rect x="1123" y="140" width="7" height="7" fill="#90ffab"/><rect x="1130" y="140" width="7" height="7" fill="#aeffae"/><rect x="1137" y="140" width="7" height="7" fill="#cdffb0"/><rect x="1144" y="140" width="7" height="7" fill="#eeffb4"/><rect x="1151" y="140" width="7" height="7" fill="#ffedaa"/><rect x="1158" y="140" width="7" height="7" fill="#ffd198"/><rect x="1165" y="140" width="7" height="7" fill="#ffb98a"/><rect x="1172" y="140" width="7" height="7" fill="#ffa57d"/><rect x="1179" y="140" width="7" height="7" fill="#ff9373"/><rect x="1186" y="140" width="7" height="7" fill="#ff8569"/><rect x="1193" y="140" width="7" height="7" fill="#ff7861"/><rect x="1200" y="140" width="7" height="7" fill="#ff6c5a"/><rect x="1207" y="140" width="7" height="7" fill="#ff6254"/><rect x="1214" y="140" width="7" height="7" fill="#ff594e"/><rect x="1221" y="140" width="7" height="7" fill="#ff5149"/><rect x="1228" y="140" width="7" height="7" fill="#ff4945"/><rect x="1235" y="140" width="7" height="7" fill="#ff4240"/><rect x="1242" y="140" width="7" height="7" fill="#ff3c3d"/><rect x="1249" y="140" width="7" height="7" fill="#ff3739"/><rect x="1256" y="140" width="7" height="7" fill="#ff3236"/><rect x="1263" y="140" width="7" height="7" fill="#ff2d33"/><rect x="1270" y="140" width="7" height="7" fill="#ff2830"/><rect x="1277" y="140" width="7" height="7" fill="#ff242e"/><rect x="1284" y="140" width="7" height="7" fill="#ff202b"/><rect x="1291" y="140" width="7" height="7" fill="#ff1d29"/><rect x="1298" y="140" width="7" height="7" fill="#ff1a27"/><rect x="1305" y="140" width="7" height="7" fill="#ff1625"/><rect x="1312" y="140" width="7" height="7" fill="#ff1423"/><rect x="1319" y="140" width="7" height="7" fill="#ff1122"/><rect x="1326" y="140" width="7" height="7" fill="#ff0e20"/><rect x="1333" y="140" width="7" height="7" fill="#ff0c1f"/><rect x="1340" y="140" width="7" height="7" fill="#ff091d"/><rect x="1347" y="140" width="7" height="7" fill="#ff071c"/><rect x="1354" y="140" width="7" height="7" fill="#ff051a"/><rect x="1361" y="140" width="7" height="7" fill="#ff0319"/><rect x="1368" y="140" width="7" height="7" fill="#ff0118"/><rect x="1375" y="140" width="7" height="7" fill="#ff0017"/><rect x="1382" y="140" width="7" height="7" fill="#ff0016"/><rect x="1389" y="140" width="7" height="7" fill="#ff0015"/><rect x="1396" y="140" width="7" height="7" fill="#ff0014"/><rect x="1067" y="147" width="7" height="7" fill="#00ffb1"/><rect x="1074" y="147" width="7" height="7" fill="#00ffb3"/><rect x="1081" y="147" width="7" height="7" fill="#00ffb5"/><rect x="1088" y="147" width="7" height="7" fill="#0fffb8"/><rect x="1095" y="147" width="7" height="7" fill="#26ffbb"/><rect x="1102" y="147" width="7" height="7" fill="#3effbe"/><rect x="1109" y="147" width="7" height="7" fill="#58ffc1"/><rect x="1116" y="147" width="7" height="7" fill="#73ffc4"/><rect x="1123" y="147" width="7" height="7" fill="#90ffc7"/><rect x="1130" y="147" width="7" height="7" fill="#afffcb"/><rect x="1137" y="147" width="7" height="7" fill="#cfffcf"/><rect x="1144" y="147" width="7" height="7" fill="#f1ffd3"/><rect x="1151" y="147" width="7" height="7" fill="#ffeac6"/><rect x="1158" y="147" width="7" height="7" fill="#ffcdb1"/><rect x="1165" y="147" width="7" height="7" fill="#ffb5a0"/><rect x="1172" y="147" width="7" height="7" fill="#ffa192"/><rect x="1179" y="147" width="7" height="7" fill="#ff9085"/><rect x="1186" y="147" width="7" height="7" fill="#ff817b"/><rect x="1193" y="147" width="7" height="7" fill="#ff7471"/><rect x="1200" y="147" width="7" height="7" fill="#ff6969"/><rect x="1207" y="147" width="7" height="7" fill="#ff5f62"/><rect x="1214" y="147" width="7" height="7" fill="#ff565c"/><rect x="1221" y="147" width="7" height="7" fill="#ff4e56"/><rect x="1228" y="147" width="7" height="7" fill="#ff4651"/><rect x="1235" y="147" width="7" height="7" fill="#ff404c"/><rect x="1242" y="147" width="7" height="7" fill="#ff3a48"/><rect x="1249" y="147" width="7" height="7" fill="#ff3444"/><rect x="1256" y="147" width="7" height="7" fill="#ff2f40"/><rect x="1263" y="147" width="7" height="7" fill="#ff2a3d"/><rect x="1270" y="147" width="7" height="7" fill="#ff2639"/><rect x="1277" y="147" width="7" height="7" fill="#ff2237"/><rect x="1284" y="147" width="7" height="7" fill="#ff1e34"/><rect x="1291" y="147" width="7" height="7" fill="#ff1b31"/><rect x="1298" y="147" width="7" height="7" fill="#ff172f"/><rect x="1305" y="147" width="7" height="7" fill="#ff142d"/><rect x="1312" y="147" width="7" height="7" fill="#ff112b"/><rect x="1319" y="147" width="7" height="7" fill="#ff0f29"/><rect x="1326" y="147" width="7" height="7" fill="#ff0c27"/><rect x="1333" y="147" width="7" height="7" fill="#ff0a25"/><rect x="1340" y="147" width="7" height="7" fill="#ff0824"/><rect x="1347" y="147" width="7" height="7" fill="#ff0522"/><rect x="1354" y="147" width="7" height="7" fill="#ff0321"/><rect x="1361" y="147" width="7" height="7" fill="#ff011f"/><rect x="1368" y="147" width="7" height="7" fill="#ff001e"/><rect x="1375" y="147" width="7" height="7" fill="#ff001d"/><rect x="1382" y="147" width="7" height="7" fill="#ff001c"/><rect x="1389" y="147" width="7" height="7" fill="#ff001a"/><rect x="1067" y="154" width="7" height="7" fill="#00ffc8"/><rect x="1074" y="154" width="7" height="7" fill="#00ffcb"/><rect x="1081" y="154" width="7" height="7" fill="#00ffcf"/><rect x="1088" y="154" width="7" height="7" fill="#0bffd2"/><rect x="1095" y="154" width="7" height="7" fill="#23ffd5"/><rect x="1102" y="154" width="7" height="7" fill="#3cffd9"/><rect x="1109" y="154" width="7" height="7" fill="#57ffdd"/><rect x="1116" y="154" width="7" height="7" fill="#73ffe1"/><rect x="1123" y="154" width="7" height="7" fill="#90ffe6"/><rect x="1130" y="154" width="7" height="7" fill="#afffea"/><rect x="1137" y="154" width="7" height="7" fill="#d1ffef"/><rect x="1144" y="154" width="7" height="7" fill="#f4fff5"/><rect x="1151" y="154" width="7" height="7" fill="#ffe6e2"/><rect x="1158" y="154" width="7" height="7" fill="#ffc9ca"/><rect x="1165" y="154" width="7" height="7" fill="#ffb2b7"/><rect x="1172" y="154" width="7" height="7" fill="#ff9da6"/><rect x="1179" y="154" width="7" height="7" fill="#ff8c98"/><rect x="1186" y="154" width="7" height="7" fill="#ff7e8c"/><rect x="1193" y="154" width="7" height="7" fill="#ff7182"/><rect x="1200" y="154" width="7" height="7" fill="#ff6579"/><rect x="1207" y="154" width="7" height="7" fill="#ff5b71"/><rect x="1214" y="154" width="7" height="7" fill="#ff5369"/><rect x="1221" y="154" width="7" height="7" fill="#ff4b63"/><rect x="1228" y="154" width="7" height="7" fill="#ff435d"/><rect x="1235" y="154" width="7" height="7" fill="#ff3d57"/><rect x="1242" y="154" width="7" height="7" fill="#ff3753"/><rect x="1249" y="154" width="7" height="7" fill="#ff314e"/><rect x="1256" y="154" width="7" height="7" fill="#ff2c4a"/><rect x="1263" y="154" width="7" height="7" fill="#ff2846"/><rect x="1270" y="154" width="7" height="7" fill="#ff2343"/><rect x="1277" y="154" width="7" height="7" fill="#ff1f40"/><rect x="1284" y="154" width="7" height="7" fill="#ff1c3d"/><rect x="1291" y="154" width="7" height="7" fill="#ff183a"/><rect x="1298" y="154" width="7" height="7" fill="#ff1537"/><rect x="1305" y="154" width="7" height="7" fill="#ff1235"/><rect x="1312" y="154" width="7" height="7" fill="#ff0f32"/><rect x="1319" y="154" width="7" height="7" fill="#ff0d30"/><rect x="1326" y="154" width="7" height="7" fill="#ff0a2e"/><rect x="1333" y="154" width="7" height="7" fill="#ff082c"/><rect x="1340" y="154" width="7" height="7" fill="#ff062a"/><rect x="1347" y="154" width="7" height="7" fill="#ff0329"/><rect x="1354" y="154" width="7" height="7" fill="#ff0127"/><rect x="1361" y="154" width="7" height="7" fill="#ff0025"/><rect x="1368" y="154" width="7" height="7" fill="#ff0024"/><rect x="1375" y="154" width="7" height="7" fill="#ff0023"/><rect x="1382" y="154" width="7" height="7" fill="#ff0021"/><rect x="1074" y="161" width="7" height="7" fill="#00ffe5"/><rect x="1081" y="161" width="7" height="7" fill="#00ffe9"/><rect x="1088" y="161" width="7" height="7" fill="#08ffed"/><rect x="1095" y="161" width="7" height="7" fill="#20fff2"/><rect x="1102" y="161" width="7" height="7" fill="#3afff6"/><rect x="1109" y="161" width="7" height="7" fill="#55fffb"/><rect x="1116" y="161" width="7" height="7" fill="#71feff"/><rect x="1123" y="161" width="7" height="7" fill="#8cf9ff"/><rect x="1130" y="161" width="7" height="7" fill="#a8f3ff"/><rect x="1137" y="161" width="7" height="7" fill="#c4eeff"/><rect x="1144" y="161" width="7" height="7" fill="#e1e8ff"/><rect x="1151" y="161" width="7" height="7" fill="#ffe2ff"/><rect x="1158" y="161" width="7" height="7" fill="#ffc6e4"/><rect x="1165" y="161" width="7" height="7" fill="#ffaece"/><rect x="1172" y="161" width="7" height="7" fill="#ff9abc"/><rect x="1179" y="161" width="7" height="7" fill="#ff89ac"/><rect x="1186" y="161" width="7" height="7" fill="#ff7a9f"/><rect x="1193" y="161" width="7" height="7" fill="#ff6d93"/><rect x="1200" y="161" width="7" height="7" fill="#ff6288"/><rect x="1207" y="161" width="7" height="7" fill="#ff587f"/><rect x="1214" y="161" width="7" height="7" fill="#ff4f77"/><rect x="1221" y="161" width="7" height="7" fill="#ff4770"/><rect x="1228" y="161" width="7" height="7" fill="#ff4069"/><rect x="1235" y="161" width="7" height="7" fill="#ff3a63"/><rect x="1242" y="161" width="7" height="7" fill="#ff345e"/><rect x="1249" y="161" width="7" height="7" fill="#ff2f59"/><rect x="1256" y="161" width="7" height="7" fill="#ff2a54"/><rect x="1263" y="161" width="7" height="7" fill="#ff2550"/><rect x="1270" y="161" width="7" height="7" fill="#ff214c"/><rect x="1277" y="161" width="7" height="7" fill="#ff1d49"/><rect x="1284" y="161" width="7" height="7" fill="#ff1945"/><rect x="1291" y="161" width="7" height="7" fill="#ff1642"/><rect x="1298" y="161" width="7" height="7" fill="#ff133f"/><rect x="1305" y="161" width="7" height="7" fill="#ff103d"/><rect x="1312" y="161" width="7" height="7" fill="#ff0d3a"/><rect x="1319" y="161" width="7" height="7" fill="#ff0b38"/><rect x="1326" y="161" width="7" height="7" fill="#ff0835"/><rect x="1333" y="161" width="7" height="7" fill="#ff0633"/><rect x="1340" y="161" width="7" height="7" fill="#ff0431"/><rect x="1347" y="161" width="7" height="7" fill="#ff022f"/><rect x="1354" y="161" width="7" height="7" fill="#ff002d"/><rect x="1361" y="161" width="7" height="7" fill="#ff002c"/><rect x="1368" y="161" width="7" height="7" fill="#ff002a"/><rect x="1375" y="161" width="7" height="7" fill="#ff0029"/><rect x="1074" y="168" width="7" height="7" fill="#00feff"/><rect x="1081" y="168" width="7" height="7" fill="#00f9ff"/><rect x="1088" y="168" width="7" height="7" fill="#04f5ff"/><rect x="1095" y="168" width="7" height="7" fill="#1bf0ff"/><rect x="1102" y="168" width="7" height="7" fill="#33ebff"/><rect x="1109" y="168" width="7" height="7" fill="#4be6ff"/><rect x="1116" y="168" width="7" height="7" fill="#63e1ff"/><rect x="1123" y="168" width="7" height="7" fill="#7cdcff"/><rect x="1130" y="168" width="7" height="7" fill="#95d7ff"/><rect x="1137" y="168" width="7" height="7" fill="#afd2ff"/><rect x="1144" y="168" width="7" height="7" fill="#c9ccff"/><rect x="1151" y="168" width="7" height="7" fill="#e4c7ff"/><rect x="1158" y="168" width="7" height="7" fill="#ffc1ff"/><rect x="1165" y="168" width="7" height="7" fill="#ffaae7"/><rect x="1172" y="168" width="7" height="7" fill="#ff96d2"/><rect x="1179" y="168" width="7" height="7" fill="#ff85c0"/><rect x="1186" y="168" width="7" height="7" fill="#ff76b1"/><rect x="1193" y="168" width="7" height="7" fill="#ff6aa4"/><rect x="1200" y="168" width="7" height="7" fill="#ff5f98"/><rect x="1207" y="168" width="7" height="7" fill="#ff558e"/><rect x="1214" y="168" width="7" height="7" fill="#ff4c85"/><rect x="1221" y="168" width="7" height="7" fill="#ff447d"/><rect x="1228" y="168" width="7" height="7" fill="#ff3d76"/><rect x="1235" y="168" width="7" height="7" fill="#ff376f"/><rect x="1242" y="168" width="7" height="7" fill="#ff3169"/><rect x="1249" y="168" width="7" height="7" fill="#ff2c64"/><rect x="1256" y="168" width="7" height="7" fill="#ff275f"/><rect x="1263" y="168" width="7" height="7" fill="#ff225a"/><rect x="1270" y="168" width="7" height="7" fill="#ff1e56"/><rect x="1277" y="168" width="7" height="7" fill="#ff1b52"/><rect x="1284" y="168" width="7" height="7" fill="#ff174e"/><rect x="1291" y="168" width="7" height="7" fill="#ff144b"/><rect x="1298" y="168" width="7" height="7" fill="#ff1147"/><rect x="1305" y="168" width="7" height="7" fill="#ff0e44"/><rect x="1312" y="168" width="7" height="7" fill="#ff0b42"/><rect x="1319" y="168" width="7" height="7" fill="#ff083f"/><rect x="1326" y="168" width="7" height="7" fill="#ff063c"/><rect x="1333" y="168" width="7" height="7" fill="#ff043a"/><rect x="1340" y="168" width="7" height="7" fill="#ff0238"/><rect x="1347" y="168" width="7" height="7" fill="#ff0036"/><rect x="1354" y="168" width="7" height="7" fill="#ff0034"/><rect x="1361" y="168" width="7" height="7" fill="#ff0032"/><rect x="1368" y="168" width="7" height="7" fill="#ff0030"/><rect x="1074" y="175" width="7" height="7" fill="#00e5ff"/><rect x="1081" y="175" width="7" height="7" fill="#00e0ff"/><rect x="1088" y="175" width="7" height="7" fill="#00dcff"/><rect x="1095" y="175" width="7" height="7" fill="#16d7ff"/><rect x="1102" y="175" width="7" height="7" fill="#2bd2ff"/><rect x="1109" y="175" width="7" height="7" fill="#42ceff"/><rect x="1116" y="175" width="7" height="7" fill="#58c9ff"/><rect x="1123" y="175" width="7" height="7" fill="#6fc4ff"/><rect x="1130" y="175" width="7" height="7" fill="#86bfff"/><rect x="1137" y="175" width="7" height="7" fill="#9dbaff"/><rect x="1144" y="175" width="7" height="7" fill="#b5b5ff"/><rect x="1151" y="175" width="7" height="7" fill="#cdb0ff"/><rect x="1158" y="175" width="7" height="7" fill="#e6abff"/><rect x="1165" y="175" width="7" height="7" fill="#fea5ff"/><rect x="1172" y="175" width="7" height="7" fill="#ff92e8"/><rect x="1179" y="175" width="7" height="7" fill="#ff81d5"/><rect x="1186" y="175" width="7" height="7" fill="#ff72c4"/><rect x="1193" y="175" width="7" height="7" fill="#ff66b6"/><rect x="1200" y="175" width="7" height="7" fill="#ff5ba9"/><rect x="1207" y="175" width="7" height="7" fill="#ff519e"/><rect x="1214" y="175" width="7" height="7" fill="#ff4994"/><rect x="1221" y="175" width="7" height="7" fill="#ff418b"/><rect x="1228" y="175" width="7" height="7" fill="#ff3a83"/><rect x="1235" y="175" width="7" height="7" fill="#ff347b"/><rect x="1242" y="175" width="7" height="7" fill="#ff2e75"/><rect x="1249" y="175" width="7" height="7" fill="#ff296f"/><rect x="1256" y="175" width="7" height="7" fill="#ff2469"/><rect x="1263" y="175" width="7" height="7" fill="#ff2064"/><rect x="1270" y="175" width="7" height="7" fill="#ff1c5f"/><rect x="1277" y="175" width="7" height="7" fill="#ff185b"/><rect x="1284" y="175" width="7" height="7" fill="#ff1557"/><rect x="1291" y="175" width="7" height="7" fill="#ff1153"/><rect x="1298" y="175" width="7" height="7" fill="#ff0e50"/><rect x="1305" y="175" width="7" height="7" fill="#ff0b4c"/><rect x="1312" y="175" width="7" height="7" fill="#ff0949"/><rect x="1319" y="175" width="7" height="7" fill="#ff0646"/><rect x="1326" y="175" width="7" height="7" fill="#ff0444"/><rect x="1333" y="175" width="7" height="7" fill="#ff0241"/><rect x="1340" y="175" width="7" height="7" fill="#ff003f"/><rect x="1347" y="175" width="7" height="7" fill="#ff003c"/><rect x="1354" y="175" width="7" height="7" fill="#ff003a"/><rect x="1361" y="175" width="7" height="7" fill="#ff0038"/><rect x="1074" y="182" width="7" height="7" fill="#00cfff"/><rect x="1081" y="182" width="7" height="7" fill="#00caff"/><rect x="1088" y="182" width="7" height="7" fill="#00c6ff"/><rect x="1095" y="182" width="7" height="7" fill="#11c2ff"/><rect x="1102" y="182" width="7" height="7" fill="#25bdff"/><rect x="1109" y="182" width="7" height="7" fill="#39b9ff"/><rect x="1116" y="182" width="7" height="7" fill="#4eb4ff"/><rect x="1123" y="182" width="7" height="7" fill="#63b0ff"/><rect x="1130" y="182" width="7" height="7" fill="#78abff"/><rect x="1137" y="182" width="7" height="7" fill="#8ea6ff"/><rect x="1144" y="182" width="7" height="7" fill="#a4a1ff"/><rect x="1151" y="182" width="7" height="7" fill="#ba9cff"/><rect x="1158" y="182" width="7" height="7" fill="#d097ff"/><rect x="1165" y="182" width="7" height="7" fill="#e792ff"/><rect x="1172" y="182" width="7" height="7" fill="#fe8dff"/><rect x="1179" y="182" width="7" height="7" fill="#ff7dea"/><rect x="1186" y="182" width="7" height="7" fill="#ff6fd8"/><rect x="1193" y="182" width="7" height="7" fill="#ff62c8"/><rect x="1200" y="182" width="7" height="7" fill="#ff57ba"/><rect x="1207" y="182" width="7" height="7" fill="#ff4ead"/><rect x="1214" y="182" width="7" height="7" fill="#ff45a2"/><rect x="1221" y="182" width="7" height="7" fill="#ff3e99"/><rect x="1228" y="182" width="7" height="7" fill="#ff3790"/><rect x="1235" y="182" width="7" height="7" fill="#ff3188"/><rect x="1242" y="182" width="7" height="7" fill="#ff2b81"/><rect x="1249" y="182" width="7" height="7" fill="#ff267a"/><rect x="1256" y="182" width="7" height="7" fill="#ff2174"/><rect x="1263" y="182" width="7" height="7" fill="#ff1d6e"/><rect x="1270" y="182" width="7" height="7" fill="#ff1969"/><rect x="1277" y="182" width="7" height="7" fill="#ff1564"/><rect x="1284" y="182" width="7" height="7" fill="#ff1260"/><rect x="1291" y="182" width="7" height="7" fill="#ff0f5c"/><rect x="1298" y="182" width="7" height="7" fill="#ff0c58"/><rect x="1305" y="182" width="7" height="7" fill="#ff0955"/><rect x="1312" y="182" width="7" height="7" fill="#ff0751"/><rect x="1319" y="182" width="7" height="7" fill="#ff044e"/><rect x="1326" y="182" width="7" height="7" fill="#ff024b"/><rect x="1333" y="182" width="7" height="7" fill="#ff0048"/><rect x="1340" y="182" width="7" height="7" fill="#ff0046"/><rect x="1347" y="182" width="7" height="7" fill="#ff0043"/><rect x="1354" y="182" width="7" height="7" fill="#ff0041"/><rect x="1074" y="189" width="7" height="7" fill="#00bcff"/><rect x="1081" y="189" width="7" height="7" fill="#00b8ff"/><rect x="1088" y="189" width="7" height="7" fill="#00b4ff"/><rect x="1095" y="189" width="7" height="7" fill="#0dafff"/><rect x="1102" y="189" width="7" height="7" fill="#20abff"/><rect x="1109" y="189" width="7" height="7" fill="#32a7ff"/><rect x="1116" y="189" width="7" height="7" fill="#46a2ff"/><rect x="1123" y="189" width="7" height="7" fill="#599eff"/><rect x="1130" y="189" width="7" height="7" fill="#6d9aff"/><rect x="1137" y="189" width="7" height="7" fill="#8195ff"/><rect x="1144" y="189" width="7" height="7" fill="#9590ff"/><rect x="1151" y="189" width="7" height="7" fill="#a98cff"/><rect x="1158" y="189" width="7" height="7" fill="#be87ff"/><rect x="1165" y="189" width="7" height="7" fill="#d382ff"/><rect x="1172" y="189" width="7" height="7" fill="#e97dff"/><rect x="1179" y="189" width="7" height="7" fill="#fe78ff"/><rect x="1186" y="189" width="7" height="7" fill="#ff6beb"/><rect x="1193" y="189" width="7" height="7" fill="#ff5eda"/><rect x="1200" y="189" width="7" height="7" fill="#ff54cb"/><rect x="1207" y="189" width="7" height="7" fill="#ff4abd"/><rect x="1214" y="189" width="7" height="7" fill="#ff42b1"/><rect x="1221" y="189" width="7" height="7" fill="#ff3aa7"/><rect x="1228" y="189" width="7" height="7" fill="#ff349d"/><rect x="1235" y="189" width="7" height="7" fill="#ff2e94"/><rect x="1242" y="189" width="7" height="7" fill="#ff288c"/><rect x="1249" y="189" width="7" height="7" fill="#ff2385"/><rect x="1256" y="189" width="7" height="7" fill="#ff1f7f"/><rect x="1263" y="189" width="7" height="7" fill="#ff1a79"/><rect x="1270" y="189" width="7" height="7" fill="#ff1673"/><rect x="1277" y="189" width="7" height="7" fill="#ff136e"/><rect x="1284" y="189" width="7" height="7" fill="#ff1069"/><rect x="1291" y="189" width="7" height="7" fill="#ff0c65"/><rect x="1298" y="189" width="7" height="7" fill="#ff0a61"/><rect x="1305" y="189" width="7" height="7" fill="#ff075d"/><rect x="1312" y="189" width="7" height="7" fill="#ff0459"/><rect x="1319" y="189" width="7" height="7" fill="#ff0256"/><rect x="1326" y="189" width="7" height="7" fill="#ff0053"/><rect x="1333" y="189" width="7" height="7" fill="#ff004f"/><rect x="1340" y="189" width="7" height="7" fill="#ff004d"/><rect x="1347" y="189" width="7" height="7" fill="#ff004a"/><rect x="1074" y="196" width="7" height="7" fill="#00abff"/><rect x="1081" y="196" width="7" height="7" fill="#00a7ff"/><rect x="1088" y="196" width="7" height="7" fill="#00a3ff"/><rect x="1095" y="196" width="7" height="7" fill="#099fff"/><rect x="1102" y="196" width="7" height="7" fill="#1b9bff"/><rect x="1109" y="196" width="7" height="7" fill="#2c97ff"/><rect x="1116" y="196" width="7" height="7" fill="#3e93ff"/><rect x="1123" y="196" width="7" height="7" fill="#508fff"/><rect x="1130" y="196" width="7" height="7" fill="#638bff"/><rect x="1137" y="196" width="7" height="7" fill="#7586ff"/><rect x="1144" y="196" width="7" height="7" fill="#8882ff"/><rect x="1151" y="196" width="7" height="7" fill="#9b7dff"/><rect x="1158" y="196" width="7" height="7" fill="#af79ff"/><rect x="1165" y="196" width="7" height="7" fill="#c274ff"/><rect x="1172" y="196" width="7" height="7" fill="#d670ff"/><rect x="1179" y="196" width="7" height="7" fill="#ea6bff"/><rect x="1186" y="196" width="7" height="7" fill="#fe66ff"/><rect x="1193" y="196" width="7" height="7" fill="#ff5aed"/><rect x="1200" y="196" width="7" height="7" fill="#ff50dc"/><rect x="1207" y="196" width="7" height="7" fill="#ff47cd"/><rect x="1214" y="196" width="7" height="7" fill="#ff3ec0"/><rect x="1221" y="196" width="7" height="7" fill="#ff37b5"/><rect x="1228" y="196" width="7" height="7" fill="#ff30aa"/><rect x="1235" y="196" width="7" height="7" fill="#ff2ba1"/><rect x="1242" y="196" width="7" height="7" fill="#ff2599"/><rect x="1249" y="196" width="7" height="7" fill="#ff2091"/><rect x="1256" y="196" width="7" height="7" fill="#ff1c8a"/><rect x="1263" y="196" width="7" height="7" fill="#ff1883"/><rect x="1270" y="196" width="7" height="7" fill="#ff147d"/><rect x="1277" y="196" width="7" height="7" fill="#ff1078"/><rect x="1284" y="196" width="7" height="7" fill="#ff0d72"/><rect x="1291" y="196" width="7" height="7" fill="#ff0a6e"/><rect x="1298" y="196" width="7" height="7" fill="#ff0769"/><rect x="1305" y="196" width="7" height="7" fill="#ff0565"/><rect x="1312" y="196" width="7" height="7" fill="#ff0261"/><rect x="1319" y="196" width="7" height="7" fill="#ff005d"/><rect x="1326" y="196" width="7" height="7" fill="#ff005a"/><rect x="1333" y="196" width="7" height="7" fill="#ff0057"/><rect x="1340" y="196" width="7" height="7" fill="#ff0054"/><rect x="1081" y="203" width="7" height="7" fill="#0099ff"/><rect x="1088" y="203" width="7" height="7" fill="#0095ff"/><rect x="1095" y="203" width="7" height="7" fill="#0691ff"/><rect x="1102" y="203" width="7" height="7" fill="#168dff"/><rect x="1109" y="203" width="7" height="7" fill="#2789ff"/><rect x="1116" y="203" width="7" height="7" fill="#3885ff"/><rect x="1123" y="203" width="7" height="7" fill="#4981ff"/><rect x="1130" y="203" width="7" height="7" fill="#5a7dff"/><rect x="1137" y="203" width="7" height="7" fill="#6b79ff"/><rect x="1144" y="203" width="7" height="7" fill="#7d75ff"/><rect x="1151" y="203" width="7" height="7" fill="#8f71ff"/><rect x="1158" y="203" width="7" height="7" fill="#a16cff"/><rect x="1165" y="203" width="7" height="7" fill="#b368ff"/><rect x="1172" y="203" width="7" height="7" fill="#c564ff"/><rect x="1179" y="203" width="7" height="7" fill="#d85fff"/><rect x="1186" y="203" width="7" height="7" fill="#eb5bff"/><rect x="1193" y="203" width="7" height="7" fill="#fe56ff"/><rect x="1200" y="203" width="7" height="7" fill="#ff4cee"/><rect x="1207" y="203" width="7" height="7" fill="#ff43de"/><rect x="1214" y="203" width="7" height="7" fill="#ff3bd0"/><rect x="1221" y="203" width="7" height="7" fill="#ff34c3"/><rect x="1228" y="203" width="7" height="7" fill="#ff2db8"/><rect x="1235" y="203" width="7" height="7" fill="#ff27ae"/><rect x="1242" y="203" width="7" height="7" fill="#ff22a5"/><rect x="1249" y="203" width="7" height="7" fill="#ff1d9c"/><rect x="1256" y="203" width="7" height="7" fill="#ff1995"/><rect x="1263" y="203" width="7" height="7" fill="#ff158e"/><rect x="1270" y="203" width="7" height="7" fill="#ff1187"/><rect x="1277" y="203" width="7" height="7" fill="#ff0e81"/><rect x="1284" y="203" width="7" height="7" fill="#ff0a7c"/><rect x="1291" y="203" width="7" height="7" fill="#ff0777"/><rect x="1298" y="203" width="7" height="7" fill="#ff0572"/><rect x="1305" y="203" width="7" height="7" fill="#ff026d"/><rect x="1312" y="203" width="7" height="7" fill="#ff0069"/><rect x="1319" y="203" width="7" height="7" fill="#ff0065"/><rect x="1326" y="203" width="7" height="7" fill="#ff0062"/><rect x="1333" y="203" width="7" height="7" fill="#ff005e"/><rect x="1081" y="210" width="7" height="7" fill="#008cff"/><rect x="1088" y="210" width="7" height="7" fill="#0089ff"/><rect x="1095" y="210" width="7" height="7" fill="#0385ff"/><rect x="1102" y="210" width="7" height="7" fill="#1381ff"/><rect x="1109" y="210" width="7" height="7" fill="#227dff"/><rect x="1116" y="210" width="7" height="7" fill="#3279ff"/><rect x="1123" y="210" width="7" height="7" fill="#4275ff"/><rect x="1130" y="210" width="7" height="7" fill="#5272ff"/><rect x="1137" y="210" width="7" height="7" fill="#636eff"/><rect x="1144" y="210" width="7" height="7" fill="#736aff"/><rect x="1151" y="210" width="7" height="7" fill="#8466ff"/><rect x="1158" y="210" width="7" height="7" fill="#9561ff"/><rect x="1165" y="210" width="7" height="7" fill="#a65dff"/><rect x="1172" y="210" width="7" height="7" fill="#b759ff"/><rect x="1179" y="210" width="7" height="7" fill="#c855ff"/><rect x="1186" y="210" width="7" height="7" fill="#da51ff"/><rect x="1193" y="210" width="7" height="7" fill="#ec4cff"/><rect x="1200" y="210" width="7" height="7" fill="#fe48ff"/><rect x="1207" y="210" width="7" height="7" fill="#ff3fef"/><rect x="1214" y="210" width="7" height="7" fill="#ff37e0"/><rect x="1221" y="210" width="7" height="7" fill="#ff30d2"/><rect x="1228" y="210" width="7" height="7" fill="#ff2ac6"/><rect x="1235" y="210" width="7" height="7" fill="#ff24bb"/><rect x="1242" y="210" width="7" height="7" fill="#ff1fb1"/><rect x="1249" y="210" width="7" height="7" fill="#ff1aa8"/><rect x="1256" y="210" width="7" height="7" fill="#ff16a0"/><rect x="1263" y="210" width="7" height="7" fill="#ff1299"/><rect x="1270" y="210" width="7" height="7" fill="#ff0e92"/><rect x="1277" y="210" width="7" height="7" fill="#ff0b8b"/><rect x="1284" y="210" width="7" height="7" fill="#ff0885"/><rect x="1291" y="210" width="7" height="7" fill="#ff0580"/><rect x="1298" y="210" width="7" height="7" fill="#ff027b"/><rect x="1305" y="210" width="7" height="7" fill="#ff0076"/><rect x="1312" y="210" width="7" height="7" fill="#ff0071"/><rect x="1319" y="210" width="7" height="7" fill="#ff006d"/><rect x="1326" y="210" width="7" height="7" fill="#ff0069"/><rect x="1081" y="217" width="7" height="7" fill="#0081ff"/><rect x="1088" y="217" width="7" height="7" fill="#007dff"/><rect x="1095" y="217" width="7" height="7" fill="#017aff"/><rect x="1102" y="217" width="7" height="7" fill="#0f76ff"/><rect x="1109" y="217" width="7" height="7" fill="#1e72ff"/><rect x="1116" y="217" width="7" height="7" fill="#2d6fff"/><rect x="1123" y="217" width="7" height="7" fill="#3c6bff"/><rect x="1130" y="217" width="7" height="7" fill="#4b67ff"/><rect x="1137" y="217" width="7" height="7" fill="#5b63ff"/><rect x="1144" y="217" width="7" height="7" fill="#6a5fff"/><rect x="1151" y="217" width="7" height="7" fill="#7a5cff"/><rect x="1158" y="217" width="7" height="7" fill="#8a58ff"/><rect x="1165" y="217" width="7" height="7" fill="#9a54ff"/><rect x="1172" y="217" width="7" height="7" fill="#aa50ff"/><rect x="1179" y="217" width="7" height="7" fill="#bb4cff"/><rect x="1186" y="217" width="7" height="7" fill="#cb48ff"/><rect x="1193" y="217" width="7" height="7" fill="#dc43ff"/><rect x="1200" y="217" width="7" height="7" fill="#ed3fff"/><rect x="1207" y="217" width="7" height="7" fill="#fe3bff"/><rect x="1214" y="217" width="7" height="7" fill="#ff33f0"/><rect x="1221" y="217" width="7" height="7" fill="#ff2de1"/><rect x="1228" y="217" width="7" height="7" fill="#ff26d4"/><rect x="1235" y="217" width="7" height="7" fill="#ff21c8"/><rect x="1242" y="217" width="7" height="7" fill="#ff1cbe"/><rect x="1249" y="217" width="7" height="7" fill="#ff17b4"/><rect x="1256" y="217" width="7" height="7" fill="#ff13ab"/><rect x="1263" y="217" width="7" height="7" fill="#ff0fa3"/><rect x="1270" y="217" width="7" height="7" fill="#ff0c9c"/><rect x="1277" y="217" width="7" height="7" fill="#ff0895"/><rect x="1284" y="217" width="7" height="7" fill="#ff058f"/><rect x="1291" y="217" width="7" height="7" fill="#ff0289"/><rect x="1298" y="217" width="7" height="7" fill="#ff0083"/><rect x="1305" y="217" width="7" height="7" fill="#ff007e"/><rect x="1312" y="217" width="7" height="7" fill="#ff007a"/><rect x="1319" y="217" width="7" height="7" fill="#ff0075"/><rect x="1081" y="224" width="7" height="7" fill="#0076ff"/><rect x="1088" y="224" width="7" height="7" fill="#0073ff"/><rect x="1095" y="224" width="7" height="7" fill="#0070ff"/><rect x="1102" y="224" width="7" height="7" fill="#0c6cff"/><rect x="1109" y="224" width="7" height="7" fill="#1a69ff"/><rect x="1116" y="224" width="7" height="7" fill="#2865ff"/><rect x="1123" y="224" width="7" height="7" fill="#3761ff"/><rect x="1130" y="224" width="7" height="7" fill="#455eff"/><rect x="1137" y="224" width="7" height="7" fill="#545aff"/><rect x="1144" y="224" width="7" height="7" fill="#6256ff"/><rect x="1151" y="224" width="7" height="7" fill="#7153ff"/><rect x="1158" y="224" width="7" height="7" fill="#804fff"/><rect x="1165" y="224" width="7" height="7" fill="#8f4bff"/><rect x="1172" y="224" width="7" height="7" fill="#9f47ff"/><rect x="1179" y="224" width="7" height="7" fill="#ae43ff"/><rect x="1186" y="224" width="7" height="7" fill="#be40ff"/><rect x="1193" y="224" width="7" height="7" fill="#ce3cff"/><rect x="1200" y="224" width="7" height="7" fill="#de38ff"/><rect x="1207" y="224" width="7" height="7" fill="#ee34ff"/><rect x="1214" y="224" width="7" height="7" fill="#fe2fff"/><rect x="1221" y="224" width="7" height="7" fill="#ff29f0"/><rect x="1228" y="224" width="7" height="7" fill="#ff23e3"/><rect x="1235" y="224" width="7" height="7" fill="#ff1dd6"/><rect x="1242" y="224" width="7" height="7" fill="#ff18cb"/><rect x="1249" y="224" width="7" height="7" fill="#ff14c0"/><rect x="1256" y="224" width="7" height="7" fill="#ff10b7"/><rect x="1263" y="224" width="7" height="7" fill="#ff0cae"/><rect x="1270" y="224" width="7" height="7" fill="#ff09a7"/><rect x="1277" y="224" width="7" height="7" fill="#ff069f"/><rect x="1284" y="224" width="7" height="7" fill="#ff0399"/><rect x="1291" y="224" width="7" height="7" fill="#ff0092"/><rect x="1298" y="224" width="7" height="7" fill="#ff008c"/><rect x="1305" y="224" width="7" height="7" fill="#ff0087"/><rect x="1312" y="224" width="7" height="7" fill="#ff0082"/><rect x="1081" y="231" width="7" height="7" fill="#006dff"/><rect x="1088" y="231" width="7" height="7" fill="#006aff"/><rect x="1095" y="231" width="7" height="7" fill="#0066ff"/><rect x="1102" y="231" width="7" height="7" fill="#0a63ff"/><rect x="1109" y="231" width="7" height="7" fill="#1760ff"/><rect x="1116" y="231" width="7" height="7" fill="#245cff"/><rect x="1123" y="231" width="7" height="7" fill="#3259ff"/><rect x="1130" y="231" width="7" height="7" fill="#4055ff"/><rect x="1137" y="231" width="7" height="7" fill="#4d52ff"/><rect x="1144" y="231" width="7" height="7" fill="#5b4eff"/><rect x="1151" y="231" width="7" height="7" fill="#694bff"/><rect x="1158" y="231" width="7" height="7" fill="#7847ff"/><rect x="1165" y="231" width="7" height="7" fill="#8643ff"/><rect x="1172" y="231" width="7" height="7" fill="#9540ff"/><rect x="1179" y="231" width="7" height="7" fill="#a33cff"/><rect x="1186" y="231" width="7" height="7" fill="#b238ff"/><rect x="1193" y="231" width="7" height="7" fill="#c135ff"/><rect x="1200" y="231" width="7" height="7" fill="#d031ff"/><rect x="1207" y="231" width="7" height="7" fill="#df2dff"/><rect x="1214" y="231" width="7" height="7" fill="#ee29ff"/><rect x="1221" y="231" width="7" height="7" fill="#fe25ff"/><rect x="1228" y="231" width="7" height="7" fill="#ff1ff1"/><rect x="1235" y="231" width="7" height="7" fill="#ff1ae4"/><rect x="1242" y="231" width="7" height="7" fill="#ff15d8"/><rect x="1249" y="231" width="7" height="7" fill="#ff11cd"/><rect x="1256" y="231" width="7" height="7" fill="#ff0dc3"/><rect x="1263" y="231" width="7" height="7" fill="#ff09ba"/><rect x="1270" y="231" width="7" height="7" fill="#ff06b1"/><rect x="1277" y="231" width="7" height="7" fill="#ff03aa"/><rect x="1284" y="231" width="7" height="7" fill="#ff00a2"/><rect x="1291" y="231" width="7" height="7" fill="#ff009c"/><rect x="1298" y="231" width="7" height="7" fill="#ff0096"/><rect x="1305" y="231" width="7" height="7" fill="#ff0090"/><rect x="1081" y="238" width="7" height="7" fill="#0065ff"/><rect x="1088" y="238" width="7" height="7" fill="#0061ff"/><rect x="1095" y="238" width="7" height="7" fill="#005eff"/><rect x="1102" y="238" width="7" height="7" fill="#075bff"/><rect x="1109" y="238" width="7" height="7" fill="#1458ff"/><rect x="1116" y="238" width="7" height="7" fill="#2154ff"/><rect x="1123" y="238" width="7" height="7" fill="#2d51ff"/><rect x="1130" y="238" width="7" height="7" fill="#3b4eff"/><rect x="1137" y="238" width="7" height="7" fill="#484aff"/><rect x="1144" y="238" width="7" height="7" fill="#5547ff"/><rect x="1151" y="238" width="7" height="7" fill="#6243ff"/><rect x="1158" y="238" width="7" height="7" fill="#7040ff"/><rect x="1165" y="238" width="7" height="7" fill="#7d3dff"/><rect x="1172" y="238" width="7" height="7" fill="#8b39ff"/><rect x="1179" y="238" width="7" height="7" fill="#9935ff"/><rect x="1186" y="238" width="7" height="7" fill="#a732ff"/><rect x="1193" y="238" width="7" height="7" fill="#b52eff"/><rect x="1200" y="238" width="7" height="7" fill="#c32bff"/><rect x="1207" y="238" width="7" height="7" fill="#d227ff"/><rect x="1214" y="238" width="7" height="7" fill="#e023ff"/><rect x="1221" y="238" width="7" height="7" fill="#ef1fff"/><rect x="1228" y="238" width="7" height="7" fill="#fe1cff"/><rect x="1235" y="238" width="7" height="7" fill="#ff17f2"/><rect x="1242" y="238" width="7" height="7" fill="#ff12e5"/><rect x="1249" y="238" width="7" height="7" fill="#ff0ed9"/><rect x="1256" y="238" width="7" height="7" fill="#ff0acf"/><rect x="1263" y="238" width="7" height="7" fill="#ff06c5"/><rect x="1270" y="238" width="7" height="7" fill="#ff03bc"/><rect x="1277" y="238" width="7" height="7" fill="#ff00b4"/><rect x="1284" y="238" width="7" height="7" fill="#ff00ac"/><rect x="1291" y="238" width="7" height="7" fill="#ff00a5"/><rect x="1298" y="238" width="7" height="7" fill="#ff009f"/><rect x="1088" y="245" width="7" height="7" fill="#005aff"/><rect x="1095" y="245" width="7" height="7" fill="#0057ff"/><rect x="1102" y="245" width="7" height="7" fill="#0554ff"/><rect x="1109" y="245" width="7" height="7" fill="#1150ff"/><rect x="1116" y="245" width="7" height="7" fill="#1d4dff"/><rect x="1123" y="245" width="7" height="7" fill="#294aff"/><rect x="1130" y="245" width="7" height="7" fill="#3647ff"/><rect x="1137" y="245" width="7" height="7" fill="#4244ff"/><rect x="1144" y="245" width="7" height="7" fill="#4f40ff"/><rect x="1151" y="245" width="7" height="7" fill="#5c3dff"/><rect x="1158" y="245" width="7" height="7" fill="#693aff"/><rect x="1165" y="245" width="7" height="7" fill="#7636ff"/><rect x="1172" y="245" width="7" height="7" fill="#8333ff"/><rect x="1179" y="245" width="7" height="7" fill="#902fff"/><rect x="1186" y="245" width="7" height="7" fill="#9d2cff"/><rect x="1193" y="245" width="7" height="7" fill="#ab28ff"/><rect x="1200" y="245" width="7" height="7" fill="#b825ff"/><rect x="1207" y="245" width="7" height="7" fill="#c621ff"/><rect x="1214" y="245" width="7" height="7" fill="#d41eff"/><rect x="1221" y="245" width="7" height="7" fill="#e21aff"/><rect x="1228" y="245" width="7" height="7" fill="#f017ff"/><rect x="1235" y="245" width="7" height="7" fill="#fe13ff"/><rect x="1242" y="245" width="7" height="7" fill="#ff0ef3"/><rect x="1249" y="245" width="7" height="7" fill="#ff0ae6"/><rect x="1256" y="245" width="7" height="7" fill="#ff07db"/><rect x="1263" y="245" width="7" height="7" fill="#ff03d1"/><rect x="1270" y="245" width="7" height="7" fill="#ff00c7"/><rect x="1277" y="245" width="7" height="7" fill="#ff00be"/><rect x="1284" y="245" width="7" height="7" fill="#ff00b6"/><rect x="1291" y="245" width="7" height="7" fill="#ff00af"/><rect x="1088" y="252" width="7" height="7" fill="#0053ff"/><rect x="1095" y="252" width="7" height="7" fill="#0050ff"/><rect x="1102" y="252" width="7" height="7" fill="#034dff"/><rect x="1109" y="252" width="7" height="7" fill="#0e4aff"/><rect x="1116" y="252" width="7" height="7" fill="#1a47ff"/><rect x="1123" y="252" width="7" height="7" fill="#2644ff"/><rect x="1130" y="252" width="7" height="7" fill="#3240ff"/><rect x="1137" y="252" width="7" height="7" fill="#3e3dff"/><rect x="1144" y="252" width="7" height="7" fill="#4a3aff"/><rect x="1151" y="252" width="7" height="7" fill="#5637ff"/><rect x="1158" y="252" width="7" height="7" fill="#6234ff"/><rect x="1165" y="252" width="7" height="7" fill="#6f30ff"/><rect x="1172" y="252" width="7" height="7" fill="#7b2dff"/><rect x="1179" y="252" width="7" height="7" fill="#882aff"/><rect x="1186" y="252" width="7" height="7" fill="#9427ff"/><rect x="1193" y="252" width="7" height="7" fill="#a123ff"/><rect x="1200" y="252" width="7" height="7" fill="#ae20ff"/><rect x="1207" y="252" width="7" height="7" fill="#bb1cff"/><rect x="1214" y="252" width="7" height="7" fill="#c819ff"/><rect x="1221" y="252" width="7" height="7" fill="#d516ff"/><rect x="1228" y="252" width="7" height="7" fill="#e312ff"/><rect x="1235" y="252" width="7" height="7" fill="#f00eff"/><rect x="1242" y="252" width="7" height="7" fill="#fe0bff"/><rect x="1249" y="252" width="7" height="7" fill="#ff07f3"/><rect x="1256" y="252" width="7" height="7" fill="#ff03e7"/><rect x="1263" y="252" width="7" height="7" fill="#ff00dc"/><rect x="1270" y="252" width="7" height="7" fill="#ff00d2"/><rect x="1277" y="252" width="7" height="7" fill="#ff00c9"/><rect x="1284" y="252" width="7" height="7" fill="#ff00c1"/><rect x="1088" y="259" width="7" height="7" fill="#004cff"/><rect x="1095" y="259" width="7" height="7" fill="#0049ff"/><rect x="1102" y="259" width="7" height="7" fill="#0146ff"/><rect x="1109" y="259" width="7" height="7" fill="#0c44ff"/><rect x="1116" y="259" width="7" height="7" fill="#1741ff"/><rect x="1123" y="259" width="7" height="7" fill="#223eff"/><rect x="1130" y="259" width="7" height="7" fill="#2e3bff"/><rect x="1137" y="259" width="7" height="7" fill="#3938ff"/><rect x="1144" y="259" width="7" height="7" fill="#4534ff"/><rect x="1151" y="259" width="7" height="7" fill="#5131ff"/><rect x="1158" y="259" width="7" height="7" fill="#5c2eff"/><rect x="1165" y="259" width="7" height="7" fill="#682bff"/><rect x="1172" y="259" width="7" height="7" fill="#7428ff"/><rect x="1179" y="259" width="7" height="7" fill="#8025ff"/><rect x="1186" y="259" width="7" height="7" fill="#8c22ff"/><rect x="1193" y="259" width="7" height="7" fill="#981eff"/><rect x="1200" y="259" width="7" height="7" fill="#a51bff"/><rect x="1207" y="259" width="7" height="7" fill="#b118ff"/><rect x="1214" y="259" width="7" height="7" fill="#be15ff"/><rect x="1221" y="259" width="7" height="7" fill="#ca11ff"/><rect x="1228" y="259" width="7" height="7" fill="#d70eff"/><rect x="1235" y="259" width="7" height="7" fill="#e40aff"/><rect x="1242" y="259" width="7" height="7" fill="#f107ff"/><rect x="1249" y="259" width="7" height="7" fill="#fe04ff"/><rect x="1256" y="259" width="7" height="7" fill="#ff00f4"/><rect x="1263" y="259" width="7" height="7" fill="#ff00e8"/><rect x="1270" y="259" width="7" height="7" fill="#ff00de"/><rect x="1277" y="259" width="7" height="7" fill="#ff00d4"/><rect x="1088" y="266" width="7" height="7" fill="#0046ff"/><rect x="1095" y="266" width="7" height="7" fill="#0044ff"/><rect x="1102" y="266" width="7" height="7" fill="#0041ff"/><rect x="1109" y="266" width="7" height="7" fill="#0a3eff"/><rect x="1116" y="266" width="7" height="7" fill="#143bff"/><rect x="1123" y="266" width="7" height="7" fill="#1f38ff"/><rect x="1130" y="266" width="7" height="7" fill="#2a35ff"/><rect x="1137" y="266" width="7" height="7" fill="#3532ff"/><rect x="1144" y="266" width="7" height="7" fill="#402fff"/><rect x="1151" y="266" width="7" height="7" fill="#4c2cff"/><rect x="1158" y="266" width="7" height="7" fill="#5729ff"/><rect x="1165" y="266" width="7" height="7" fill="#6226ff"/><rect x="1172" y="266" width="7" height="7" fill="#6e23ff"/><rect x="1179" y="266" width="7" height="7" fill="#7920ff"/><rect x="1186" y="266" width="7" height="7" fill="#851dff"/><rect x="1193" y="266" width="7" height="7" fill="#901aff"/><rect x="1200" y="266" width="7" height="7" fill="#9c17ff"/><rect x="1207" y="266" width="7" height="7" fill="#a814ff"/><rect x="1214" y="266" width="7" height="7" fill="#b411ff"/><rect x="1221" y="266" width="7" height="7" fill="#c00dff"/><rect x="1228" y="266" width="7" height="7" fill="#cc0aff"/><rect x="1235" y="266" width="7" height="7" fill="#d807ff"/><rect x="1242" y="266" width="7" height="7" fill="#e504ff"/><rect x="1249" y="266" width="7" height="7" fill="#f100ff"/><rect x="1256" y="266" width="7" height="7" fill="#fe00ff"/><rect x="1263" y="266" width="7" height="7" fill="#ff00f4"/><rect x="1270" y="266" width="7" height="7" fill="#ff00e9"/><rect x="1088" y="273" width="7" height="7" fill="#0041ff"/><rect x="1095" y="273" width="7" height="7" fill="#003eff"/><rect x="1102" y="273" width="7" height="7" fill="#003bff"/><rect x="1109" y="273" width="7" height="7" fill="#0839ff"/><rect x="1116" y="273" width="7" height="7" fill="#1236ff"/><rect x="1123" y="273" width="7" height="7" fill="#1c33ff"/><rect x="1130" y="273" width="7" height="7" fill="#2730ff"/><rect x="1137" y="273" width="7" height="7" fill="#322dff"/><rect x="1144" y="273" width="7" height="7" fill="#3c2bff"/><rect x="1151" y="273" width="7" height="7" fill="#4728ff"/><rect x="1158" y="273" width="7" height="7" fill="#5225ff"/><rect x="1165" y="273" width="7" height="7" fill="#5d22ff"/><rect x="1172" y="273" width="7" height="7" fill="#681fff"/><rect x="1179" y="273" width="7" height="7" fill="#731cff"/><rect x="1186" y="273" width="7" height="7" fill="#7e19ff"/><rect x="1193" y="273" width="7" height="7" fill="#8916ff"/><rect x="1200" y="273" width="7" height="7" fill="#9413ff"/><rect x="1207" y="273" width="7" height="7" fill="#a010ff"/><rect x="1214" y="273" width="7" height="7" fill="#ab0dff"/><rect x="1221" y="273" width="7" height="7" fill="#b70aff"/><rect x="1228" y="273" width="7" height="7" fill="#c207ff"/><rect x="1235" y="273" width="7" height="7" fill="#ce03ff"/><rect x="1242" y="273" width="7" height="7" fill="#da00ff"/><rect x="1249" y="273" width="7" height="7" fill="#e600ff"/><rect x="1256" y="273" width="7" height="7" fill="#f200ff"/><rect x="1263" y="273" width="7" height="7" fill="#fe00ff"/><rect x="1088" y="280" width="7" height="7" fill="#003cff"/><rect x="1095" y="280" width="7" height="7" fill="#0039ff"/><rect x="1102" y="280" width="7" height="7" fill="#0036ff"/><rect x="1109" y="280" width="7" height="7" fill="#0634ff"/><rect x="1116" y="280" width="7" height="7" fill="#1031ff"/><rect x="1123" y="280" width="7" height="7" fill="#1a2eff"/><rect x="1130" y="280" width="7" height="7" fill="#242cff"/><rect x="1137" y="280" width="7" height="7" fill="#2e29ff"/><rect x="1144" y="280" width="7" height="7" fill="#3826ff"/><rect x="1151" y="280" width="7" height="7" fill="#4323ff"/><rect x="1158" y="280" width="7" height="7" fill="#4d21ff"/><rect x="1165" y="280" width="7" height="7" fill="#581eff"/><rect x="1172" y="280" width="7" height="7" fill="#621bff"/><rect x="1179" y="280" width="7" height="7" fill="#6d18ff"/><rect x="1186" y="280" width="7" height="7" fill="#7715ff"/><rect x="1193" y="280" width="7" height="7" fill="#8212ff"/><rect x="1200" y="280" width="7" height="7" fill="#8d0fff"/><rect x="1207" y="280" width="7" height="7" fill="#980cff"/><rect x="1214" y="280" width="7" height="7" fill="#a309ff"/><rect x="1221" y="280" width="7" height="7" fill="#ae06ff"/><rect x="1228" y="280" width="7" height="7" fill="#b903ff"/><rect x="1235" y="280" width="7" height="7" fill="#c400ff"/><rect x="1242" y="280" width="7" height="7" fill="#d000ff"/><rect x="1249" y="280" width="7" height="7" fill="#db00ff"/><rect x="1256" y="280" width="7" height="7" fill="#e600ff"/><rect x="1095" y="287" width="7" height="7" fill="#0034ff"/><rect x="1102" y="287" width="7" height="7" fill="#0032ff"/><rect x="1109" y="287" width="7" height="7" fill="#042fff"/><rect x="1116" y="287" width="7" height="7" fill="#0e2dff"/><rect x="1123" y="287" width="7" height="7" fill="#172aff"/><rect x="1130" y="287" width="7" height="7" fill="#2127ff"/><rect x="1137" y="287" width="7" height="7" fill="#2b25ff"/><rect x="1144" y="287" width="7" height="7" fill="#3522ff"/><rect x="1151" y="287" width="7" height="7" fill="#3f1fff"/><rect x="1158" y="287" width="7" height="7" fill="#491dff"/><rect x="1165" y="287" width="7" height="7" fill="#531aff"/><rect x="1172" y="287" width="7" height="7" fill="#5d17ff"/><rect x="1179" y="287" width="7" height="7" fill="#6714ff"/><rect x="1186" y="287" width="7" height="7" fill="#7112ff"/><rect x="1193" y="287" width="7" height="7" fill="#7c0fff"/><rect x="1200" y="287" width="7" height="7" fill="#860cff"/><rect x="1207" y="287" width="7" height="7" fill="#9109ff"/><rect x="1214" y="287" width="7" height="7" fill="#9b06ff"/><rect x="1221" y="287" width="7" height="7" fill="#a603ff"/><rect x="1228" y="287" width="7" height="7" fill="#b100ff"/><rect x="1235" y="287" width="7" height="7" fill="#bb00ff"/><rect x="1242" y="287" width="7" height="7" fill="#c600ff"/><rect x="1249" y="287" width="7" height="7" fill="#d100ff"/><rect x="1095" y="294" width="7" height="7" fill="#0030ff"/><rect x="1102" y="294" width="7" height="7" fill="#002eff"/><rect x="1109" y="294" width="7" height="7" fill="#022bff"/><rect x="1116" y="294" width="7" height="7" fill="#0c29ff"/><rect x="1123" y="294" width="7" height="7" fill="#1526ff"/><rect x="1130" y="294" width="7" height="7" fill="#1e23ff"/><rect x="1137" y="294" width="7" height="7" fill="#2821ff"/><rect x="1144" y="294" width="7" height="7" fill="#311eff"/><rect x="1151" y="294" width="7" height="7" fill="#3b1cff"/><rect x="1158" y="294" width="7" height="7" fill="#4519ff"/><rect x="1165" y="294" width="7" height="7" fill="#4e16ff"/><rect x="1172" y="294" width="7" height="7" fill="#5814ff"/><rect x="1179" y="294" width="7" height="7" fill="#6211ff"/><rect x="1186" y="294" width="7" height="7" fill="#6c0eff"/><rect x="1193" y="294" width="7" height="7" fill="#760bff"/><rect x="1200" y="294" width="7" height="7" fill="#8009ff"/><rect x="1207" y="294" width="7" height="7" fill="#8a06ff"/><rect x="1214" y="294" width="7" height="7" fill="#9403ff"/><rect x="1221" y="294" width="7" height="7" fill="#9e00ff"/><rect x="1228" y="294" width="7" height="7" fill="#a900ff"/><rect x="1235" y="294" width="7" height="7" fill="#b300ff"/><rect x="1242" y="294" width="7" height="7" fill="#bd00ff"/><rect x="1095" y="301" width="7" height="7" fill="#002cff"/><rect x="1102" y="301" width="7" height="7" fill="#002aff"/><rect x="1109" y="301" width="7" height="7" fill="#0127ff"/><rect x="1116" y="301" width="7" height="7" fill="#0a25ff"/><rect x="1123" y="301" width="7" height="7" fill="#1322ff"/><rect x="1130" y="301" width="7" height="7" fill="#1c20ff"/><rect x="1137" y="301" width="7" height="7" fill="#251dff"/><rect x="1144" y="301" width="7" height="7" fill="#2e1bff"/><rect x="1151" y="301" width="7" height="7" fill="#3818ff"/><rect x="1158" y="301" width="7" height="7" fill="#4115ff"/><rect x="1165" y="301" width="7" height="7" fill="#4a13ff"/><rect x="1172" y="301" width="7" height="7" fill="#5410ff"/><rect x="1179" y="301" width="7" height="7" fill="#5d0eff"/><rect x="1186" y="301" width="7" height="7" fill="#670bff"/><rect x="1193" y="301" width="7" height="7" fill="#7008ff"/><rect x="1200" y="301" width="7" height="7" fill="#7a06ff"/><rect x="1207" y="301" width="7" height="7" fill="#8403ff"/><rect x="1214" y="301" width="7" height="7" fill="#8e00ff"/><rect x="1221" y="301" width="7" height="7" fill="#9700ff"/><rect x="1228" y="301" width="7" height="7" fill="#a100ff"/><rect x="1235" y="301" width="7" height="7" fill="#ab00ff"/><rect x="1095" y="308" width="7" height="7" fill="#0028ff"/><rect x="1102" y="308" width="7" height="7" fill="#0026ff"/><rect x="1109" y="308" width="7" height="7" fill="#0023ff"/><rect x="1116" y="308" width="7" height="7" fill="#0821ff"/><rect x="1123" y="308" width="7" height="7" fill="#111fff"/><rect x="1130" y="308" width="7" height="7" fill="#1a1cff"/><rect x="1137" y="308" width="7" height="7" fill="#221aff"/><rect x="1144" y="308" width="7" height="7" fill="#2b17ff"/><rect x="1151" y="308" width="7" height="7" fill="#3415ff"/><rect x="1158" y="308" width="7" height="7" fill="#3d12ff"/><rect x="1165" y="308" width="7" height="7" fill="#4610ff"/><rect x="1172" y="308" width="7" height="7" fill="#500dff"/><rect x="1179" y="308" width="7" height="7" fill="#590bff"/><rect x="1186" y="308" width="7" height="7" fill="#6208ff"/><rect x="1193" y="308" width="7" height="7" fill="#6b06ff"/><rect x="1200" y="308" width="7" height="7" fill="#7503ff"/><rect x="1207" y="308" width="7" height="7" fill="#7e00ff"/><rect x="1214" y="308" width="7" height="7" fill="#8700ff"/><rect x="1221" y="308" width="7" height="7" fill="#9100ff"/><rect x="1228" y="308" width="7" height="7" fill="#9a00ff"/><rect x="1095" y="315" width="7" height="7" fill="#0025ff"/><rect x="1102" y="315" width="7" height="7" fill="#0022ff"/><rect x="1109" y="315" width="7" height="7" fill="#0020ff"/><rect x="1116" y="315" width="7" height="7" fill="#071eff"/><rect x="1123" y="315" width="7" height="7" fill="#0f1bff"/><rect x="1130" y="315" width="7" height="7" fill="#1719ff"/><rect x="1137" y="315" width="7" height="7" fill="#2017ff"/><rect x="1144" y="315" width="7" height="7" fill="#2914ff"/><rect x="1151" y="315" width="7" height="7" fill="#3112ff"/><rect x="1158" y="315" width="7" height="7" fill="#3a0fff"/><rect x="1165" y="315" width="7" height="7" fill="#430dff"/><rect x="1172" y="315" width="7" height="7" fill="#4c0aff"/><rect x="1179" y="315" width="7" height="7" fill="#5408ff"/><rect x="1186" y="315" width="7" height="7" fill="#5d05ff"/><rect x="1193" y="315" width="7" height="7" fill="#6603ff"/><rect x="1200" y="315" width="7" height="7" fill="#6f00ff"/><rect x="1207" y="315" width="7" height="7" fill="#7800ff"/><rect x="1214" y="315" width="7" height="7" fill="#8200ff"/><rect x="1221" y="315" width="7" height="7" fill="#8b00ff"/><rect x="1095" y="322" width="7" height="7" fill="#0021ff"/><rect x="1102" y="322" width="7" height="7" fill="#001fff"/><rect x="1109" y="322" width="7" height="7" fill="#001dff"/><rect x="1116" y="322" width="7" height="7" fill="#051aff"/><rect x="1123" y="322" width="7" height="7" fill="#0d18ff"/><rect x="1130" y="322" width="7" height="7" fill="#1516ff"/><rect x="1137" y="322" width="7" height="7" fill="#1e14ff"/><rect x="1144" y="322" width="7" height="7" fill="#2611ff"/><rect x="1151" y="322" width="7" height="7" fill="#2e0fff"/><rect x="1158" y="322" width="7" height="7" fill="#370cff"/><rect x="1165" y="322" width="7" height="7" fill="#3f0aff"/><rect x="1172" y="322" width="7" height="7" fill="#4808ff"/><rect x="1179" y="322" width="7" height="7" fill="#5105ff"/><rect x="1186" y="322" width="7" height="7" fill="#5903ff"/><rect x="1193" y="322" width="7" height="7" fill="#6201ff"/><rect x="1200" y="322" width="7" height="7" fill="#6b00ff"/><rect x="1207" y="322" width="7" height="7" fill="#7300ff"/><rect x="1214" y="322" width="7" height="7" fill="#7c00ff"/><rect x="1102" y="329" width="7" height="7" fill="#001cff"/><rect x="1109" y="329" width="7" height="7" fill="#001aff"/><rect x="1116" y="329" width="7" height="7" fill="#0417ff"/><rect x="1123" y="329" width="7" height="7" fill="#0c15ff"/><rect x="1130" y="329" width="7" height="7" fill="#1413ff"/><rect x="1137" y="329" width="7" height="7" fill="#1c11ff"/><rect x="1144" y="329" width="7" height="7" fill="#240eff"/><rect x="1151" y="329" width="7" height="7" fill="#2c0cff"/><rect x="1158" y="329" width="7" height="7" fill="#340aff"/><rect x="1165" y="329" width="7" height="7" fill="#3c08ff"/><rect x="1172" y="329" width="7" height="7" fill="#4505ff"/><rect x="1179" y="329" width="7" height="7" fill="#4d03ff"/><rect x="1186" y="329" width="7" height="7" fill="#5501ff"/><rect x="1193" y="329" width="7" height="7" fill="#5e00ff"/><rect x="1200" y="329" width="7" height="7" fill="#6600ff"/><rect x="1207" y="329" width="7" height="7" fill="#6f00ff"/><rect x="1102" y="336" width="7" height="7" fill="#0019ff"/><rect x="1109" y="336" width="7" height="7" fill="#0017ff"/><rect x="1116" y="336" width="7" height="7" fill="#0215ff"/><rect x="1123" y="336" width="7" height="7" fill="#0a12ff"/><rect x="1130" y="336" width="7" height="7" fill="#1210ff"/><rect x="1137" y="336" width="7" height="7" fill="#1a0eff"/><rect x="1144" y="336" width="7" height="7" fill="#210cff"/><rect x="1151" y="336" width="7" height="7" fill="#290aff"/><rect x="1158" y="336" width="7" height="7" fill="#3107ff"/><rect x="1165" y="336" width="7" height="7" fill="#3905ff"/><rect x="1172" y="336" width="7" height="7" fill="#4103ff"/><rect x="1179" y="336" width="7" height="7" fill="#4901ff"/><rect x="1186" y="336" width="7" height="7" fill="#5100ff"/><rect x="1193" y="336" width="7" height="7" fill="#5a00ff"/><rect x="1200" y="336" width="7" height="7" fill="#6200ff"/><rect x="1102" y="343" width="7" height="7" fill="#0016ff"/><rect x="1109" y="343" width="7" height="7" fill="#0014ff"/><rect x="1116" y="343" width="7" height="7" fill="#0112ff"/><rect x="1123" y="343" width="7" height="7" fill="#0810ff"/><rect x="1130" y="343" width="7" height="7" fill="#100eff"/><rect x="1137" y="343" width="7" height="7" fill="#180bff"/><rect x="1144" y="343" width="7" height="7" fill="#1f09ff"/><rect x="1151" y="343" width="7" height="7" fill="#2707ff"/><rect x="1158" y="343" width="7" height="7" fill="#2f05ff"/><rect x="1165" y="343" width="7" height="7" fill="#3603ff"/><rect x="1172" y="343" width="7" height="7" fill="#3e01ff"/><rect x="1179" y="343" width="7" height="7" fill="#4600ff"/><rect x="1186" y="343" width="7" height="7" fill="#4e00ff"/><rect x="1193" y="343" width="7" height="7" fill="#5600ff"/><rect x="1102" y="350" width="7" height="7" fill="#0013ff"/><rect x="1109" y="350" width="7" height="7" fill="#0011ff"/><rect x="1116" y="350" width="7" height="7" fill="#000fff"/><rect x="1123" y="350" width="7" height="7" fill="#070dff"/><rect x="1130" y="350" width="7" height="7" fill="#0e0bff"/><rect x="1137" y="350" width="7" height="7" fill="#1609ff"/><rect x="1144" y="350" width="7" height="7" fill="#1d07ff"/><rect x="1151" y="350" width="7" height="7" fill="#2505ff"/><rect x="1158" y="350" width="7" height="7" fill="#2c03ff"/><rect x="1165" y="350" width="7" height="7" fill="#3401ff"/><rect x="1172" y="350" width="7" height="7" fill="#3b00ff"/><rect x="1179" y="350" width="7" height="7" fill="#4300ff"/><rect x="1186" y="350" width="7" height="7" fill="#4b00ff"/><rect x="1102" y="357" width="7" height="7" fill="#0011ff"/><rect x="1109" y="357" width="7" height="7" fill="#000fff"/><rect x="1116" y="357" width="7" height="7" fill="#000dff"/><rect x="1123" y="357" width="7" height="7" fill="#060bff"/><rect x="1130" y="357" width="7" height="7" fill="#0d09ff"/><rect x="1137" y="357" width="7" height="7" fill="#1407ff"/><rect x="1144" y="357" width="7" height="7" fill="#1b05ff"/><rect x="1151" y="357" width="7" height="7" fill="#2303ff"/><rect x="1158" y="357" width="7" height="7" fill="#2a01ff"/><rect x="1165" y="357" width="7" height="7" fill="#3100ff"/><rect x="1172" y="357" width="7" height="7" fill="#3900ff"/><rect x="1179" y="357" width="7" height="7" fill="#4000ff"/><rect x="1102" y="364" width="7" height="7" fill="#000fff"/><rect x="1109" y="364" width="7" height="7" fill="#000dff"/><rect x="1116" y="364" width="7" height="7" fill="#000bff"/><rect x="1123" y="364" width="7" height="7" fill="#0409ff"/><rect x="1130" y="364" width="7" height="7" fill="#0b07ff"/><rect x="1137" y="364" width="7" height="7" fill="#1205ff"/><rect x="1144" y="364" width="7" height="7" fill="#1903ff"/><rect x="1151" y="364" width="7" height="7" fill="#2101ff"/><rect x="1158" y="364" width="7" height="7" fill="#2800ff"/><rect x="1165" y="364" width="7" height="7" fill="#2f00ff"/><rect x="1172" y="364" width="7" height="7" fill="#3600ff"/><rect x="1102" y="371" width="7" height="7" fill="#000cff"/><rect x="1109" y="371" width="7" height="7" fill="#000aff"/><rect x="1116" y="371" width="7" height="7" fill="#0008ff"/><rect x="1123" y="371" width="7" height="7" fill="#0307ff"/><rect x="1130" y="371" width="7" height="7" fill="#0a05ff"/><rect x="1137" y="371" width="7" height="7" fill="#1103ff"/><rect x="1144" y="371" width="7" height="7" fill="#1801ff"/><rect x="1151" y="371" width="7" height="7" fill="#1f00ff"/><rect x="1158" y="371" width="7" height="7" fill="#2600ff"/><rect x="1165" y="371" width="7" height="7" fill="#2c00ff"/><rect x="1109" y="378" width="7" height="7" fill="#0008ff"/><rect x="1116" y="378" width="7" height="7" fill="#0006ff"/><rect x="1123" y="378" width="7" height="7" fill="#0204ff"/><rect x="1130" y="378" width="7" height="7" fill="#0903ff"/><rect x="1137" y="378" width="7" height="7" fill="#0f01ff"/><rect x="1144" y="378" width="7" height="7" fill="#1600ff"/><rect x="1151" y="378" width="7" height="7" fill="#1d00ff"/><rect x="1158" y="378" width="7" height="7" fill="#2400ff"/><rect x="1109" y="385" width="7" height="7" fill="#0006ff"/><rect x="1116" y="385" width="7" height="7" fill="#0004ff"/><rect x="1123" y="385" width="7" height="7" fill="#0103ff"/><rect x="1130" y="385" width="7" height="7" fill="#0701ff"/><rect x="1137" y="385" width="7" height="7" fill="#0e00ff"/><rect x="1144" y="385" width="7" height="7" fill="#1400ff"/><rect x="1151" y="385" width="7" height="7" fill="#1b00ff"/><rect x="1109" y="392" width="7" height="7" fill="#0004ff"/><rect x="1116" y="392" width="7" height="7" fill="#0003ff"/><rect x="1123" y="392" width="7" height="7" fill="#0001ff"/><rect x="1130" y="392" width="7" height="7" fill="#0600ff"/><rect x="1137" y="392" width="7" height="7" fill="#0d00ff"/><rect x="1144" y="392" width="7" height="7" fill="#1300ff"/><rect x="1109" y="399" width="7" height="7" fill="#0003ff"/><rect x="1116" y="399" width="7" height="7" fill="#0001ff"/><rect x="1123" y="399" width="7" height="7" fill="#0000ff"/><rect x="1130" y="399" width="7" height="7" fill="#0500ff"/><rect x="1137" y="399" width="7" height="7" fill="#0b00ff"/><rect x="1116" y="406" width="7" height="7" fill="#0000ff"/><rect x="1123" y="406" width="7" height="7" fill="#0000ff"/><rect x="1130" y="406" width="7" height="7" fill="#0400ff"/></g></g><path d="M1208.3 506.4 L1208.2 506.5 L1208.1 506.5 L1208.0 506.6 L1207.8 506.6 L1207.7 506.7 L1207.6 506.7 L1207.4 506.7 L1207.3 506.8 L1207.2 506.8 L1207.0 506.9 L1206.9 506.9 L1206.7 507.0 L1206.5 507.0 L1206.2 507.0 L1206.0 507.0 L1205.7 507.0 L1205.4 507.0 L1205.2 507.0 L1204.9 506.9 L1204.7 506.8 L1204.5 506.7 L1204.3 506.6 L1204.0 506.4 L1203.7 506.2 L1203.3 506.0 L1202.9 505.8 L1202.5 505.5 L1202.1 505.2 L1201.6 504.9 L1201.1 504.5 L1200.6 504.1 L1200.1 503.7 L1199.5 503.3 L1198.9 502.8 L1198.3 502.4 L1197.6 501.8 L1196.9 501.2 L1196.1 500.6 L1195.2 499.9 L1194.4 499.2 L1193.5 498.5 L1192.5 497.7 L1191.6 496.9 L1190.6 496.1 L1189.5 495.2 L1188.5 494.2 L1187.3 493.3 L1186.2 492.3 L1185.0 491.3 L1183.7 490.2 L1182.4 489.2 L1181.1 488.0 L1179.6 486.9 L1178.1 485.6 L1176.5 484.3 L1174.9 483.0 L1173.1 481.6 L1171.3 480.1 L1169.5 478.6 L1167.6 477.0 L1165.6 475.4 L1163.6 473.7 L1161.5 472.0 L1159.4 470.2 L1157.1 468.3 L1154.8 466.3 L1152.4 464.3 L1150.0 462.1 L1147.4 459.8 L1144.8 457.4 L1142.0 454.9 L1139.2 452.3 L1136.4 449.5 L1133.4 446.7 L1130.4 443.7 L1127.3 440.5 L1124.0 437.0 L1120.5 433.2 L1116.7 428.9 L1112.8 424.4 L1108.7 419.5 L1104.5 414.4 L1100.1 408.9 L1095.6 403.2 L1091.0 397.1 L1086.2 390.7 L1081.4 384.0 L1076.4 377.0 L1071.3 369.7 L1066.2 362.1 L1061.1 354.3 L1055.8 346.0 L1050.4 337.5 L1045.0 328.8 L1039.6 319.9 L1034.4 311.1 L1029.1 302.1 L1023.8 292.9 L1018.5 283.6 L1013.4 274.2 L1008.4 265.0 L1003.7 255.8 L999.2 246.8 L994.9 237.7 L990.8 228.7 L986.9 219.8 L983.2 211.2 L979.7 202.8 L976.5 194.8 L973.5 186.9 L970.6 179.2 L968.0 171.9 L965.7 164.8 L963.5 158.1 L961.6 151.8 L959.9 145.8 L958.4 140.2 L957.1 134.8 L956.0 129.7 L955.1 124.9 L954.3 120.4 L953.7 116.2 L953.3 112.3 L953.1 108.6 L953.0 105.1 L953.0 101.8 L953.2 98.6 L953.6 95.7 L954.0 93.0 L954.7 90.5 L955.4 88.1 L956.2 85.9 L957.2 83.8 L958.3 81.9 L959.6 80.2 L960.9 78.6 L962.4 77.1 L963.9 75.8 L965.5 74.6 L967.2 73.6 L969.0 72.7 L970.8 71.9 L972.7 71.3 L974.7 70.7 L976.7 70.1 L978.8 69.7 L980.9 69.4 L983.1 69.2 L985.4 68.9 L987.6 68.7 L989.9 68.6 L992.2 68.5 L994.5 68.4 L996.9 68.3 L999.3 68.3 L1001.6 68.3 L1004.0 68.3 L1006.4 68.3 L1008.7 68.3 L1011.1 68.3 L1013.5 68.4 L1015.9 68.5 L1018.3 68.5 L1020.8 68.6 L1023.2 68.7 L1025.7 68.9 L1028.2 69.0 L1030.8 69.2 L1033.4 69.3 L1036.0 69.5 L1038.6 69.7 L1041.3 69.9 L1044.1 70.1 L1046.8 70.3 L1049.6 70.5 L1052.5 70.8 L1055.3 71.0 L1058.3 71.3 L1061.2 71.6 L1064.2 71.9 L1067.3 72.2 L1070.4 72.5 L1073.6 72.8 L1076.8 73.1 L1080.1 73.5 L1083.4 73.8 L1086.8 74.2 L1090.2 74.5 L1093.7 74.9 L1097.3 75.3 L1100.9 75.7 L1104.6 76.1 L1108.4 76.5 L1112.2 76.9 L1116.1 77.4 L1120.0 77.8 L1124.0 78.3 L1128.1 78.7 L1132.3 79.2 L1136.5 79.7 L1140.8 80.1 L1145.1 80.6 L1149.6 81.1 L1154.1 81.6 L1158.7 82.2 L1163.3 82.7 L1168.1 83.2 L1172.8 83.8 L1177.7 84.3 L1182.7 84.9 L1187.7 85.5 L1192.8 86.1 L1197.9 86.7 L1203.1 87.3 L1208.4 87.9 L1213.8 88.5 L1219.2 89.1 L1224.8 89.8 L1230.3 90.4 L1236.0 91.1 L1241.7 91.7 L1247.4 92.4 L1253.2 93.0 L1259.1 93.7 L1265.0 94.4 L1271.0 95.1 L1277.0 95.7 L1283.0 96.4 L1289.0 97.1 L1295.1 97.8 L1301.2 98.5 L1307.4 99.3 L1313.4 100.0 L1319.5 100.7 L1325.5 101.3 L1331.4 102.0 L1337.3 102.7 L1343.2 103.4 L1349.0 104.1 L1354.9 104.7 L1360.7 105.4 L1366.5 106.1 L1372.4 106.7 L1378.1 107.4 L1383.8 108.0 L1389.3 108.7 L1394.8 109.3 L1400.1 109.9 L1405.4 110.5 L1410.5 111.1 L1415.6 111.7 L1420.5 112.2 L1425.4 112.8 L1430.2 113.3 L1434.8 113.9 L1439.4 114.4 L1443.8 114.9 L1448.1 115.4 L1452.3 115.9 L1456.4 116.4 L1460.4 116.8 L1464.2 117.3 L1468.0 117.7 L1471.6 118.1 L1475.1 118.5 L1478.5 118.9 L1481.9 119.3 L1485.1 119.7 L1488.2 120.0 L1491.2 120.4 L1494.2 120.7 L1497.1 121.0 L1499.9 121.4 L1502.6 121.7 L1505.2 122.0 L1507.8 122.3 L1510.4 122.6 L1512.9 122.9 L1515.3 123.1 L1517.7 123.4 L1520.0 123.7 L1522.2 123.9 L1524.3 124.2 L1526.2 124.4 L1528.1 124.6 L1530.0 124.8 L1532.0 125.1 L1534.3 125.3 L1537.0 125.6 L1540.0 126.0 L1543.2 126.3 L1546.3 126.7 L1549.2 127.0 L1551.8 127.3 L1554.0 127.6 L1555.8 127.8 L1557.5 128.0 L1559.1 128.2 L1560.6 128.3 L1562.2 128.5 L1563.8 128.7 L1565.5 128.9 L1567.1 129.1 L1568.6 129.3 L1570.0 129.4 L1571.2 129.6 L1572.1 129.7 L1572.9 129.8 L1573.5 129.8 L1574.0 129.9 L1574.4 129.9 L1574.7 130.0Z" fill="none" stroke="rgba(0,0,0,0.35)" stroke-width="1"/></g></svg><svg style="position:absolute;left:0;top:0" width="1558" height="860"><rect x="952.5" y="58.5" width="600" height="462" fill="none" stroke="#b0b0b0" stroke-width="1"/><line x1="952.6" y1="520.2" x2="952.6" y2="526" stroke="#c8c8c8" stroke-width="1.5"/><line x1="946.5" y1="520.2" x2="952.6" y2="520.2" stroke="#c8c8c8" stroke-width="1.6"/><line x1="1002.4" y1="520.2" x2="1002.4" y2="526" stroke="#c8c8c8" stroke-width="1.5"/><line x1="946.5" y1="481.9" x2="952.6" y2="481.9" stroke="#c8c8c8" stroke-width="1.6"/><line x1="1052.2" y1="520.2" x2="1052.2" y2="526" stroke="#c8c8c8" stroke-width="1.5"/><line x1="946.5" y1="443.5" x2="952.6" y2="443.5" stroke="#c8c8c8" stroke-width="1.6"/><line x1="1102.0" y1="520.2" x2="1102.0" y2="526" stroke="#c8c8c8" stroke-width="1.5"/><line x1="946.5" y1="405.4" x2="952.6" y2="405.4" stroke="#c8c8c8" stroke-width="1.6"/><line x1="1151.9" y1="520.2" x2="1151.9" y2="526" stroke="#c8c8c8" stroke-width="1.5"/><line x1="946.5" y1="367.3" x2="952.6" y2="367.3" stroke="#c8c8c8" stroke-width="1.6"/><line x1="1201.7" y1="520.2" x2="1201.7" y2="526" stroke="#c8c8c8" stroke-width="1.5"/><line x1="946.5" y1="329.3" x2="952.6" y2="329.3" stroke="#c8c8c8" stroke-width="1.6"/><line x1="1251.5" y1="520.2" x2="1251.5" y2="526" stroke="#c8c8c8" stroke-width="1.5"/><line x1="946.5" y1="290.8" x2="952.6" y2="290.8" stroke="#c8c8c8" stroke-width="1.6"/><line x1="1301.3" y1="520.2" x2="1301.3" y2="526" stroke="#c8c8c8" stroke-width="1.5"/><line x1="946.5" y1="251.6" x2="952.6" y2="251.6" stroke="#c8c8c8" stroke-width="1.6"/><line x1="1351.1" y1="520.2" x2="1351.1" y2="526" stroke="#c8c8c8" stroke-width="1.5"/><line x1="946.5" y1="212.8" x2="952.6" y2="212.8" stroke="#c8c8c8" stroke-width="1.6"/><line x1="1400.9" y1="520.2" x2="1400.9" y2="526" stroke="#c8c8c8" stroke-width="1.5"/><line x1="946.5" y1="174.5" x2="952.6" y2="174.5" stroke="#c8c8c8" stroke-width="1.6"/><line x1="1450.8" y1="520.2" x2="1450.8" y2="526" stroke="#c8c8c8" stroke-width="1.5"/><line x1="946.5" y1="136.2" x2="952.6" y2="136.2" stroke="#c8c8c8" stroke-width="1.6"/><line x1="1500.6" y1="520.2" x2="1500.6" y2="526" stroke="#c8c8c8" stroke-width="1.5"/><line x1="946.5" y1="97.8" x2="952.6" y2="97.8" stroke="#c8c8c8" stroke-width="1.6"/></svg><span class="t" style="left:952.6px;top:529.8px;font-size:12.60px;color:#d8d8d8;transform:translateX(-50%) scaleX(1.0800);transform-origin:50% 0;">0</span><span class="t" style="left:946.0px;top:515.3px;font-size:12.60px;color:#d8d8d8;transform:translateX(-100%) scaleX(1.0800);transform-origin:100% 0;">0</span><span class="t" style="left:1002.4px;top:529.8px;font-size:12.60px;color:#d8d8d8;transform:translateX(-50%) scaleX(1.0800);transform-origin:50% 0;">0,05</span><span class="t" style="left:946.0px;top:477.0px;font-size:12.60px;color:#d8d8d8;transform:translateX(-100%) scaleX(1.0800);transform-origin:100% 0;">0,05</span><span class="t" style="left:1052.2px;top:529.8px;font-size:12.60px;color:#d8d8d8;transform:translateX(-50%) scaleX(1.0800);transform-origin:50% 0;">0,1</span><span class="t" style="left:946.0px;top:438.6px;font-size:12.60px;color:#d8d8d8;transform:translateX(-100%) scaleX(1.0800);transform-origin:100% 0;">0,1</span><span class="t" style="left:1102.0px;top:529.8px;font-size:12.60px;color:#d8d8d8;transform:translateX(-50%) scaleX(1.0800);transform-origin:50% 0;">0,15</span><span class="t" style="left:946.0px;top:400.5px;font-size:12.60px;color:#d8d8d8;transform:translateX(-100%) scaleX(1.0800);transform-origin:100% 0;">0,15</span><span class="t" style="left:1151.9px;top:529.8px;font-size:12.60px;color:#d8d8d8;transform:translateX(-50%) scaleX(1.0800);transform-origin:50% 0;">0,2</span><span class="t" style="left:946.0px;top:362.4px;font-size:12.60px;color:#d8d8d8;transform:translateX(-100%) scaleX(1.0800);transform-origin:100% 0;">0,2</span><span class="t" style="left:1201.7px;top:529.8px;font-size:12.60px;color:#d8d8d8;transform:translateX(-50%) scaleX(1.0800);transform-origin:50% 0;">0,25</span><span class="t" style="left:946.0px;top:324.4px;font-size:12.60px;color:#d8d8d8;transform:translateX(-100%) scaleX(1.0800);transform-origin:100% 0;">0,25</span><span class="t" style="left:1251.5px;top:529.8px;font-size:12.60px;color:#d8d8d8;transform:translateX(-50%) scaleX(1.0800);transform-origin:50% 0;">0,3</span><span class="t" style="left:946.0px;top:285.9px;font-size:12.60px;color:#d8d8d8;transform:translateX(-100%) scaleX(1.0800);transform-origin:100% 0;">0,3</span><span class="t" style="left:1301.3px;top:529.8px;font-size:12.60px;color:#d8d8d8;transform:translateX(-50%) scaleX(1.0800);transform-origin:50% 0;">0,35</span><span class="t" style="left:946.0px;top:246.7px;font-size:12.60px;color:#d8d8d8;transform:translateX(-100%) scaleX(1.0800);transform-origin:100% 0;">0,35</span><span class="t" style="left:1351.1px;top:529.8px;font-size:12.60px;color:#d8d8d8;transform:translateX(-50%) scaleX(1.0800);transform-origin:50% 0;">0,4</span><span class="t" style="left:946.0px;top:207.9px;font-size:12.60px;color:#d8d8d8;transform:translateX(-100%) scaleX(1.0800);transform-origin:100% 0;">0,4</span><span class="t" style="left:1400.9px;top:529.8px;font-size:12.60px;color:#d8d8d8;transform:translateX(-50%) scaleX(1.0800);transform-origin:50% 0;">0,45</span><span class="t" style="left:946.0px;top:169.6px;font-size:12.60px;color:#d8d8d8;transform:translateX(-100%) scaleX(1.0800);transform-origin:100% 0;">0,45</span><span class="t" style="left:1450.8px;top:529.8px;font-size:12.60px;color:#d8d8d8;transform:translateX(-50%) scaleX(1.0800);transform-origin:50% 0;">0,5</span><span class="t" style="left:946.0px;top:131.3px;font-size:12.60px;color:#d8d8d8;transform:translateX(-100%) scaleX(1.0800);transform-origin:100% 0;">0,5</span><span class="t" style="left:1500.6px;top:529.8px;font-size:12.60px;color:#d8d8d8;transform:translateX(-50%) scaleX(1.0800);transform-origin:50% 0;">0,55</span><span class="t" style="left:946.0px;top:92.9px;font-size:12.60px;color:#d8d8d8;transform:translateX(-100%) scaleX(1.0800);transform-origin:100% 0;">0,55</span><span class="t" style="left:1236.4px;top:43.0px;font-size:13.00px;color:#d4d4d4;transform:translateX(-50%) scaleX(1.0194);transform-origin:50% 0;">CIE 1976 u'v'</span><svg style="position:absolute;left:0;top:0" width="1558" height="860"><rect x="1070.1" y="80.4" width="12.6" height="12.6" fill="rgba(255,255,255,0.22)" stroke="#f4f4f4" stroke-width="1.4"/><rect x="1081.8" y="91.5" width="12.6" height="12.6" fill="rgba(255,255,255,0.22)" stroke="#f4f4f4" stroke-width="1.4"/><rect x="1093.1" y="103.4" width="12.6" height="12.6" fill="rgba(255,255,255,0.22)" stroke="#f4f4f4" stroke-width="1.4"/><rect x="1107.5" y="117.5" width="12.6" height="12.6" fill="rgba(255,255,255,0.22)" stroke="#f4f4f4" stroke-width="1.4"/><rect x="1123.8" y="132.6" width="12.6" height="12.6" fill="rgba(255,255,255,0.22)" stroke="#f4f4f4" stroke-width="1.4"/><rect x="1149.8" y="88.1" width="12.6" height="12.6" fill="rgba(255,255,255,0.22)" stroke="#f4f4f4" stroke-width="1.4"/><rect x="1148.8" y="99.3" width="12.6" height="12.6" fill="rgba(255,255,255,0.22)" stroke="#f4f4f4" stroke-width="1.4"/><rect x="1147.8" y="110.3" width="12.6" height="12.6" fill="rgba(255,255,255,0.22)" stroke="#f4f4f4" stroke-width="1.4"/><rect x="1146.8" y="123.3" width="12.6" height="12.6" fill="rgba(255,255,255,0.22)" stroke="#f4f4f4" stroke-width="1.4"/><rect x="1145.3" y="135.8" width="12.6" height="12.6" fill="rgba(255,255,255,0.22)" stroke="#f4f4f4" stroke-width="1.4"/><rect x="1084.8" y="163.6" width="12.6" height="12.6" fill="rgba(255,255,255,0.22)" stroke="#f4f4f4" stroke-width="1.4"/><rect x="1095.4" y="160.6" width="12.6" height="12.6" fill="rgba(255,255,255,0.22)" stroke="#f4f4f4" stroke-width="1.4"/><rect x="1107.5" y="159.8" width="12.6" height="12.6" fill="rgba(255,255,255,0.22)" stroke="#f4f4f4" stroke-width="1.4"/><rect x="1119.6" y="156.8" width="12.6" height="12.6" fill="rgba(255,255,255,0.22)" stroke="#f4f4f4" stroke-width="1.4"/><rect x="1131.7" y="155.7" width="12.6" height="12.6" fill="rgba(255,255,255,0.22)" stroke="#f4f4f4" stroke-width="1.4"/><rect x="1159.7" y="168.6" width="12.6" height="12.6" fill="rgba(255,255,255,0.22)" stroke="#f4f4f4" stroke-width="1.4"/><rect x="1177.3" y="186.1" width="12.6" height="12.6" fill="rgba(255,255,255,0.22)" stroke="#f4f4f4" stroke-width="1.4"/><rect x="1195.4" y="205.2" width="12.6" height="12.6" fill="rgba(255,255,255,0.22)" stroke="#f4f4f4" stroke-width="1.4"/><rect x="1219.6" y="229.4" width="12.6" height="12.6" fill="rgba(255,255,255,0.22)" stroke="#f4f4f4" stroke-width="1.4"/><rect x="1250.5" y="258.7" width="12.6" height="12.6" fill="rgba(255,255,255,0.22)" stroke="#f4f4f4" stroke-width="1.4"/><rect x="1140.5" y="180.7" width="12.6" height="12.6" fill="rgba(255,255,255,0.22)" stroke="#f4f4f4" stroke-width="1.4"/><rect x="1137.6" y="215.5" width="12.6" height="12.6" fill="rgba(255,255,255,0.22)" stroke="#f4f4f4" stroke-width="1.4"/><rect x="1133.8" y="257.4" width="12.6" height="12.6" fill="rgba(255,255,255,0.22)" stroke="#f4f4f4" stroke-width="1.4"/><rect x="1128.8" y="311.5" width="12.6" height="12.6" fill="rgba(255,255,255,0.22)" stroke="#f4f4f4" stroke-width="1.4"/><rect x="1121.6" y="391.4" width="12.6" height="12.6" fill="rgba(255,255,255,0.22)" stroke="#f4f4f4" stroke-width="1.4"/><rect x="1188.4" y="145.5" width="12.6" height="12.6" fill="rgba(255,255,255,0.22)" stroke="#f4f4f4" stroke-width="1.4"/><rect x="1238.7" y="136.8" width="12.6" height="12.6" fill="rgba(255,255,255,0.22)" stroke="#f4f4f4" stroke-width="1.4"/><rect x="1284.7" y="129.6" width="12.6" height="12.6" fill="rgba(255,255,255,0.22)" stroke="#f4f4f4" stroke-width="1.4"/><rect x="1335.7" y="120.5" width="12.6" height="12.6" fill="rgba(255,255,255,0.22)" stroke="#f4f4f4" stroke-width="1.4"/><rect x="1395.9" y="110.5" width="12.6" height="12.6" fill="rgba(255,255,255,0.22)" stroke="#f4f4f4" stroke-width="1.4"/><circle cx="1076.3" cy="86.6" r="4.0" fill="rgba(150,150,150,0.55)" stroke="#1a1a1a" stroke-width="1.3"/><circle cx="1086.5" cy="96.5" r="4.0" fill="rgba(150,150,150,0.55)" stroke="#1a1a1a" stroke-width="1.3"/><circle cx="1099.6" cy="108.6" r="4.0" fill="rgba(150,150,150,0.55)" stroke="#1a1a1a" stroke-width="1.3"/><circle cx="1113.4" cy="122.5" r="4.0" fill="rgba(150,150,150,0.55)" stroke="#1a1a1a" stroke-width="1.3"/><circle cx="1130.5" cy="140.5" r="4.0" fill="rgba(150,150,150,0.55)" stroke="#1a1a1a" stroke-width="1.3"/><circle cx="1158.5" cy="92.7" r="4.0" fill="rgba(150,150,150,0.55)" stroke="#1a1a1a" stroke-width="1.3"/><circle cx="1156.5" cy="104.3" r="4.0" fill="rgba(150,150,150,0.55)" stroke="#1a1a1a" stroke-width="1.3"/><circle cx="1155.4" cy="114.2" r="4.0" fill="rgba(150,150,150,0.55)" stroke="#1a1a1a" stroke-width="1.3"/><circle cx="1154.5" cy="128.2" r="4.0" fill="rgba(150,150,150,0.55)" stroke="#1a1a1a" stroke-width="1.3"/><circle cx="1151.5" cy="142.1" r="4.0" fill="rgba(150,150,150,0.55)" stroke="#1a1a1a" stroke-width="1.3"/><circle cx="1086.5" cy="170.6" r="4.0" fill="rgba(150,150,150,0.55)" stroke="#1a1a1a" stroke-width="1.3"/><circle cx="1099.3" cy="168.3" r="4.0" fill="rgba(150,150,150,0.55)" stroke="#1a1a1a" stroke-width="1.3"/><circle cx="1111.0" cy="165.3" r="4.0" fill="rgba(150,150,150,0.55)" stroke="#1a1a1a" stroke-width="1.3"/><circle cx="1125.0" cy="163.3" r="4.0" fill="rgba(150,150,150,0.55)" stroke="#1a1a1a" stroke-width="1.3"/><circle cx="1136.4" cy="161.5" r="4.0" fill="rgba(150,150,150,0.55)" stroke="#1a1a1a" stroke-width="1.3"/><circle cx="1164.3" cy="174.3" r="4.0" fill="rgba(150,150,150,0.55)" stroke="#1a1a1a" stroke-width="1.3"/><circle cx="1182.2" cy="192.2" r="4.0" fill="rgba(150,150,150,0.55)" stroke="#1a1a1a" stroke-width="1.3"/><circle cx="1201.4" cy="210.5" r="4.0" fill="rgba(150,150,150,0.55)" stroke="#1a1a1a" stroke-width="1.3"/><circle cx="1225.3" cy="234.2" r="4.0" fill="rgba(150,150,150,0.55)" stroke="#1a1a1a" stroke-width="1.3"/><circle cx="1255.1" cy="262.6" r="4.0" fill="rgba(150,150,150,0.55)" stroke="#1a1a1a" stroke-width="1.3"/><circle cx="1145.2" cy="187.4" r="4.0" fill="rgba(150,150,150,0.55)" stroke="#1a1a1a" stroke-width="1.3"/><circle cx="1141.5" cy="223.2" r="4.0" fill="rgba(150,150,150,0.55)" stroke="#1a1a1a" stroke-width="1.3"/><circle cx="1135.6" cy="265.0" r="4.0" fill="rgba(150,150,150,0.55)" stroke="#1a1a1a" stroke-width="1.3"/><circle cx="1127.2" cy="320.3" r="4.0" fill="rgba(150,150,150,0.55)" stroke="#1a1a1a" stroke-width="1.3"/><circle cx="1116.2" cy="394.4" r="4.0" fill="rgba(150,150,150,0.55)" stroke="#1a1a1a" stroke-width="1.3"/><circle cx="1196.0" cy="150.1" r="4.0" fill="rgba(150,150,150,0.55)" stroke="#1a1a1a" stroke-width="1.3"/><circle cx="1250.5" cy="141.2" r="4.0" fill="rgba(150,150,150,0.55)" stroke="#1a1a1a" stroke-width="1.3"/><circle cx="1298.6" cy="133.5" r="4.0" fill="rgba(150,150,150,0.55)" stroke="#1a1a1a" stroke-width="1.3"/><circle cx="1354.4" cy="124.4" r="4.0" fill="rgba(150,150,150,0.55)" stroke="#1a1a1a" stroke-width="1.3"/><circle cx="1407.4" cy="115.6" r="4.0" fill="rgba(150,150,150,0.55)" stroke="#1a1a1a" stroke-width="1.3"/><rect x="1143" y="153" width="12" height="12" fill="none" stroke="#000" stroke-width="2"/><circle cx="1149.3" cy="159.1" r="4.3" fill="#fff" stroke="#333" stroke-width="1.2"/></svg><div style="position:absolute;left:1344.0px;top:374.0px;width:207.0px;height:142.5px;background:#262626;"></div><div style="position:absolute;left:1347.6px;top:377.6px;width:200.2px;height:135.3px;box-sizing:border-box;border:1.6px solid #8f8f8f;"></div><svg style="position:absolute;left:0;top:0" width="1558" height="860"><defs><clipPath id="insclip"><rect x="1349.1" y="379.1" width="197.1" height="132.2"/></clipPath><clipPath id="insbelow"><path d="M989.7 205.4 L2290.9 888.0 L2290.9 2888.0 L989.7 2205.4 Z"/></clipPath><filter id="bi" color-interpolation-filters="sRGB" x="-5%" y="-5%" width="110%" height="110%"><feGaussianBlur stdDeviation="4"/></filter><style>.ic rect{width:6px;height:6px}</style></defs><g clip-path="url(#insclip)"><g class="ic" filter="url(#bi)"><rect x="1337" y="367" width="6" height="6" fill="#619400"/><rect x="1343" y="367" width="6" height="6" fill="#639400"/><rect x="1349" y="367" width="6" height="6" fill="#659400"/><rect x="1355" y="367" width="6" height="6" fill="#679400"/><rect x="1361" y="367" width="6" height="6" fill="#689400"/><rect x="1367" y="367" width="6" height="6" fill="#6a9400"/><rect x="1373" y="367" width="6" height="6" fill="#6c9400"/><rect x="1379" y="367" width="6" height="6" fill="#6e9400"/><rect x="1385" y="367" width="6" height="6" fill="#6f9400"/><rect x="1391" y="367" width="6" height="6" fill="#719400"/><rect x="1397" y="367" width="6" height="6" fill="#739400"/><rect x="1403" y="367" width="6" height="6" fill="#749400"/><rect x="1409" y="367" width="6" height="6" fill="#769400"/><rect x="1415" y="367" width="6" height="6" fill="#789400"/><rect x="1421" y="367" width="6" height="6" fill="#7a9400"/><rect x="1427" y="367" width="6" height="6" fill="#7b9400"/><rect x="1433" y="367" width="6" height="6" fill="#7d9400"/><rect x="1439" y="367" width="6" height="6" fill="#7f9400"/><rect x="1445" y="367" width="6" height="6" fill="#819400"/><rect x="1451" y="367" width="6" height="6" fill="#829400"/><rect x="1457" y="367" width="6" height="6" fill="#849400"/><rect x="1463" y="367" width="6" height="6" fill="#869400"/><rect x="1469" y="367" width="6" height="6" fill="#879400"/><rect x="1475" y="367" width="6" height="6" fill="#899400"/><rect x="1481" y="367" width="6" height="6" fill="#8b9400"/><rect x="1487" y="367" width="6" height="6" fill="#8d9400"/><rect x="1493" y="367" width="6" height="6" fill="#8e9400"/><rect x="1499" y="367" width="6" height="6" fill="#909400"/><rect x="1505" y="367" width="6" height="6" fill="#929400"/><rect x="1511" y="367" width="6" height="6" fill="#949400"/><rect x="1517" y="367" width="6" height="6" fill="#949200"/><rect x="1523" y="367" width="6" height="6" fill="#949100"/><rect x="1529" y="367" width="6" height="6" fill="#948f00"/><rect x="1535" y="367" width="6" height="6" fill="#948e00"/><rect x="1541" y="367" width="6" height="6" fill="#948c00"/><rect x="1547" y="367" width="6" height="6" fill="#948a00"/><rect x="1553" y="367" width="6" height="6" fill="#948900"/><rect x="1337" y="373" width="6" height="6" fill="#629400"/><rect x="1343" y="373" width="6" height="6" fill="#649400"/><rect x="1349" y="373" width="6" height="6" fill="#669400"/><rect x="1355" y="373" width="6" height="6" fill="#689400"/><rect x="1361" y="373" width="6" height="6" fill="#699400"/><rect x="1367" y="373" width="6" height="6" fill="#6b9400"/><rect x="1373" y="373" width="6" height="6" fill="#6d9400"/><rect x="1379" y="373" width="6" height="6" fill="#6f9400"/><rect x="1385" y="373" width="6" height="6" fill="#709400"/><rect x="1391" y="373" width="6" height="6" fill="#729400"/><rect x="1397" y="373" width="6" height="6" fill="#749400"/><rect x="1403" y="373" width="6" height="6" fill="#769400"/><rect x="1409" y="373" width="6" height="6" fill="#779400"/><rect x="1415" y="373" width="6" height="6" fill="#799400"/><rect x="1421" y="373" width="6" height="6" fill="#7b9400"/><rect x="1427" y="373" width="6" height="6" fill="#7d9400"/><rect x="1433" y="373" width="6" height="6" fill="#7e9400"/><rect x="1439" y="373" width="6" height="6" fill="#809400"/><rect x="1445" y="373" width="6" height="6" fill="#829400"/><rect x="1451" y="373" width="6" height="6" fill="#849400"/><rect x="1457" y="373" width="6" height="6" fill="#859400"/><rect x="1463" y="373" width="6" height="6" fill="#879400"/><rect x="1469" y="373" width="6" height="6" fill="#899400"/><rect x="1475" y="373" width="6" height="6" fill="#8b9400"/><rect x="1481" y="373" width="6" height="6" fill="#8c9400"/><rect x="1487" y="373" width="6" height="6" fill="#8e9400"/><rect x="1493" y="373" width="6" height="6" fill="#909400"/><rect x="1499" y="373" width="6" height="6" fill="#929400"/><rect x="1505" y="373" width="6" height="6" fill="#939400"/><rect x="1511" y="373" width="6" height="6" fill="#949300"/><rect x="1517" y="373" width="6" height="6" fill="#949100"/><rect x="1523" y="373" width="6" height="6" fill="#948f00"/><rect x="1529" y="373" width="6" height="6" fill="#948e00"/><rect x="1535" y="373" width="6" height="6" fill="#948c00"/><rect x="1541" y="373" width="6" height="6" fill="#948a00"/><rect x="1547" y="373" width="6" height="6" fill="#948900"/><rect x="1553" y="373" width="6" height="6" fill="#948700"/><rect x="1337" y="379" width="6" height="6" fill="#639400"/><rect x="1343" y="379" width="6" height="6" fill="#659400"/><rect x="1349" y="379" width="6" height="6" fill="#679400"/><rect x="1355" y="379" width="6" height="6" fill="#699400"/><rect x="1361" y="379" width="6" height="6" fill="#6b9400"/><rect x="1367" y="379" width="6" height="6" fill="#6c9400"/><rect x="1373" y="379" width="6" height="6" fill="#6e9400"/><rect x="1379" y="379" width="6" height="6" fill="#709400"/><rect x="1385" y="379" width="6" height="6" fill="#729400"/><rect x="1391" y="379" width="6" height="6" fill="#739400"/><rect x="1397" y="379" width="6" height="6" fill="#759400"/><rect x="1403" y="379" width="6" height="6" fill="#779400"/><rect x="1409" y="379" width="6" height="6" fill="#799400"/><rect x="1415" y="379" width="6" height="6" fill="#7b9400"/><rect x="1421" y="379" width="6" height="6" fill="#7c9400"/><rect x="1427" y="379" width="6" height="6" fill="#7e9400"/><rect x="1433" y="379" width="6" height="6" fill="#809400"/><rect x="1439" y="379" width="6" height="6" fill="#829400"/><rect x="1445" y="379" width="6" height="6" fill="#839400"/><rect x="1451" y="379" width="6" height="6" fill="#859400"/><rect x="1457" y="379" width="6" height="6" fill="#879400"/><rect x="1463" y="379" width="6" height="6" fill="#899400"/><rect x="1469" y="379" width="6" height="6" fill="#8a9400"/><rect x="1475" y="379" width="6" height="6" fill="#8c9400"/><rect x="1481" y="379" width="6" height="6" fill="#8e9400"/><rect x="1487" y="379" width="6" height="6" fill="#909400"/><rect x="1493" y="379" width="6" height="6" fill="#929400"/><rect x="1499" y="379" width="6" height="6" fill="#939400"/><rect x="1505" y="379" width="6" height="6" fill="#949300"/><rect x="1511" y="379" width="6" height="6" fill="#949100"/><rect x="1517" y="379" width="6" height="6" fill="#948f00"/><rect x="1523" y="379" width="6" height="6" fill="#948e00"/><rect x="1529" y="379" width="6" height="6" fill="#948c00"/><rect x="1535" y="379" width="6" height="6" fill="#948b00"/><rect x="1541" y="379" width="6" height="6" fill="#948900"/><rect x="1547" y="379" width="6" height="6" fill="#948700"/><rect x="1553" y="379" width="6" height="6" fill="#948600"/><rect x="1337" y="385" width="6" height="6" fill="#659400"/><rect x="1343" y="385" width="6" height="6" fill="#669400"/><rect x="1349" y="385" width="6" height="6" fill="#689400"/><rect x="1355" y="385" width="6" height="6" fill="#6a9400"/><rect x="1361" y="385" width="6" height="6" fill="#6c9400"/><rect x="1367" y="385" width="6" height="6" fill="#6e9400"/><rect x="1373" y="385" width="6" height="6" fill="#6f9400"/><rect x="1379" y="385" width="6" height="6" fill="#719400"/><rect x="1385" y="385" width="6" height="6" fill="#739400"/><rect x="1391" y="385" width="6" height="6" fill="#759400"/><rect x="1397" y="385" width="6" height="6" fill="#769400"/><rect x="1403" y="385" width="6" height="6" fill="#789400"/><rect x="1409" y="385" width="6" height="6" fill="#7a9400"/><rect x="1415" y="385" width="6" height="6" fill="#7c9400"/><rect x="1421" y="385" width="6" height="6" fill="#7e9400"/><rect x="1427" y="385" width="6" height="6" fill="#7f9400"/><rect x="1433" y="385" width="6" height="6" fill="#819400"/><rect x="1439" y="385" width="6" height="6" fill="#839400"/><rect x="1445" y="385" width="6" height="6" fill="#859400"/><rect x="1451" y="385" width="6" height="6" fill="#879400"/><rect x="1457" y="385" width="6" height="6" fill="#889400"/><rect x="1463" y="385" width="6" height="6" fill="#8a9400"/><rect x="1469" y="385" width="6" height="6" fill="#8c9400"/><rect x="1475" y="385" width="6" height="6" fill="#8e9400"/><rect x="1481" y="385" width="6" height="6" fill="#909400"/><rect x="1487" y="385" width="6" height="6" fill="#919400"/><rect x="1493" y="385" width="6" height="6" fill="#939400"/><rect x="1499" y="385" width="6" height="6" fill="#949300"/><rect x="1505" y="385" width="6" height="6" fill="#949100"/><rect x="1511" y="385" width="6" height="6" fill="#948f00"/><rect x="1517" y="385" width="6" height="6" fill="#948e00"/><rect x="1523" y="385" width="6" height="6" fill="#948c00"/><rect x="1529" y="385" width="6" height="6" fill="#948b00"/><rect x="1535" y="385" width="6" height="6" fill="#948900"/><rect x="1541" y="385" width="6" height="6" fill="#948700"/><rect x="1547" y="385" width="6" height="6" fill="#948600"/><rect x="1553" y="385" width="6" height="6" fill="#948500"/><rect x="1337" y="391" width="6" height="6" fill="#669401"/><rect x="1343" y="391" width="6" height="6" fill="#689400"/><rect x="1349" y="391" width="6" height="6" fill="#699400"/><rect x="1355" y="391" width="6" height="6" fill="#6b9400"/><rect x="1361" y="391" width="6" height="6" fill="#6d9400"/><rect x="1367" y="391" width="6" height="6" fill="#6f9400"/><rect x="1373" y="391" width="6" height="6" fill="#719400"/><rect x="1379" y="391" width="6" height="6" fill="#729400"/><rect x="1385" y="391" width="6" height="6" fill="#749400"/><rect x="1391" y="391" width="6" height="6" fill="#769400"/><rect x="1397" y="391" width="6" height="6" fill="#789400"/><rect x="1403" y="391" width="6" height="6" fill="#7a9400"/><rect x="1409" y="391" width="6" height="6" fill="#7b9400"/><rect x="1415" y="391" width="6" height="6" fill="#7d9400"/><rect x="1421" y="391" width="6" height="6" fill="#7f9400"/><rect x="1427" y="391" width="6" height="6" fill="#819400"/><rect x="1433" y="391" width="6" height="6" fill="#839400"/><rect x="1439" y="391" width="6" height="6" fill="#849400"/><rect x="1445" y="391" width="6" height="6" fill="#869400"/><rect x="1451" y="391" width="6" height="6" fill="#889400"/><rect x="1457" y="391" width="6" height="6" fill="#8a9400"/><rect x="1463" y="391" width="6" height="6" fill="#8c9400"/><rect x="1469" y="391" width="6" height="6" fill="#8e9400"/><rect x="1475" y="391" width="6" height="6" fill="#8f9400"/><rect x="1481" y="391" width="6" height="6" fill="#919400"/><rect x="1487" y="391" width="6" height="6" fill="#939400"/><rect x="1493" y="391" width="6" height="6" fill="#949300"/><rect x="1499" y="391" width="6" height="6" fill="#949100"/><rect x="1505" y="391" width="6" height="6" fill="#949000"/><rect x="1511" y="391" width="6" height="6" fill="#948e00"/><rect x="1517" y="391" width="6" height="6" fill="#948c00"/><rect x="1523" y="391" width="6" height="6" fill="#948b00"/><rect x="1529" y="391" width="6" height="6" fill="#948900"/><rect x="1535" y="391" width="6" height="6" fill="#948700"/><rect x="1541" y="391" width="6" height="6" fill="#948600"/><rect x="1547" y="391" width="6" height="6" fill="#948400"/><rect x="1553" y="391" width="6" height="6" fill="#948300"/><rect x="1337" y="397" width="6" height="6" fill="#679401"/><rect x="1343" y="397" width="6" height="6" fill="#699401"/><rect x="1349" y="397" width="6" height="6" fill="#6b9401"/><rect x="1355" y="397" width="6" height="6" fill="#6c9400"/><rect x="1361" y="397" width="6" height="6" fill="#6e9400"/><rect x="1367" y="397" width="6" height="6" fill="#709400"/><rect x="1373" y="397" width="6" height="6" fill="#729400"/><rect x="1379" y="397" width="6" height="6" fill="#749400"/><rect x="1385" y="397" width="6" height="6" fill="#759400"/><rect x="1391" y="397" width="6" height="6" fill="#779400"/><rect x="1397" y="397" width="6" height="6" fill="#799400"/><rect x="1403" y="397" width="6" height="6" fill="#7b9400"/><rect x="1409" y="397" width="6" height="6" fill="#7d9400"/><rect x="1415" y="397" width="6" height="6" fill="#7f9400"/><rect x="1421" y="397" width="6" height="6" fill="#809400"/><rect x="1427" y="397" width="6" height="6" fill="#829400"/><rect x="1433" y="397" width="6" height="6" fill="#849400"/><rect x="1439" y="397" width="6" height="6" fill="#869400"/><rect x="1445" y="397" width="6" height="6" fill="#889400"/><rect x="1451" y="397" width="6" height="6" fill="#8a9400"/><rect x="1457" y="397" width="6" height="6" fill="#8b9400"/><rect x="1463" y="397" width="6" height="6" fill="#8d9400"/><rect x="1469" y="397" width="6" height="6" fill="#8f9400"/><rect x="1475" y="397" width="6" height="6" fill="#919400"/><rect x="1481" y="397" width="6" height="6" fill="#939400"/><rect x="1487" y="397" width="6" height="6" fill="#949300"/><rect x="1493" y="397" width="6" height="6" fill="#949100"/><rect x="1499" y="397" width="6" height="6" fill="#949000"/><rect x="1505" y="397" width="6" height="6" fill="#948e00"/><rect x="1511" y="397" width="6" height="6" fill="#948c00"/><rect x="1517" y="397" width="6" height="6" fill="#948b00"/><rect x="1523" y="397" width="6" height="6" fill="#948900"/><rect x="1529" y="397" width="6" height="6" fill="#948700"/><rect x="1535" y="397" width="6" height="6" fill="#948600"/><rect x="1541" y="397" width="6" height="6" fill="#948400"/><rect x="1547" y="397" width="6" height="6" fill="#948300"/><rect x="1553" y="397" width="6" height="6" fill="#948200"/><rect x="1337" y="403" width="6" height="6" fill="#699402"/><rect x="1343" y="403" width="6" height="6" fill="#6a9402"/><rect x="1349" y="403" width="6" height="6" fill="#6c9401"/><rect x="1355" y="403" width="6" height="6" fill="#6e9401"/><rect x="1361" y="403" width="6" height="6" fill="#6f9401"/><rect x="1367" y="403" width="6" height="6" fill="#719400"/><rect x="1373" y="403" width="6" height="6" fill="#739400"/><rect x="1379" y="403" width="6" height="6" fill="#759400"/><rect x="1385" y="403" width="6" height="6" fill="#779400"/><rect x="1391" y="403" width="6" height="6" fill="#799400"/><rect x="1397" y="403" width="6" height="6" fill="#7a9400"/><rect x="1403" y="403" width="6" height="6" fill="#7c9400"/><rect x="1409" y="403" width="6" height="6" fill="#7e9400"/><rect x="1415" y="403" width="6" height="6" fill="#809400"/><rect x="1421" y="403" width="6" height="6" fill="#829400"/><rect x="1427" y="403" width="6" height="6" fill="#849400"/><rect x="1433" y="403" width="6" height="6" fill="#869400"/><rect x="1439" y="403" width="6" height="6" fill="#879400"/><rect x="1445" y="403" width="6" height="6" fill="#899400"/><rect x="1451" y="403" width="6" height="6" fill="#8b9400"/><rect x="1457" y="403" width="6" height="6" fill="#8d9400"/><rect x="1463" y="403" width="6" height="6" fill="#8f9400"/><rect x="1469" y="403" width="6" height="6" fill="#919400"/><rect x="1475" y="403" width="6" height="6" fill="#939400"/><rect x="1481" y="403" width="6" height="6" fill="#949300"/><rect x="1487" y="403" width="6" height="6" fill="#949100"/><rect x="1493" y="403" width="6" height="6" fill="#949000"/><rect x="1499" y="403" width="6" height="6" fill="#948e00"/><rect x="1505" y="403" width="6" height="6" fill="#948c00"/><rect x="1511" y="403" width="6" height="6" fill="#948b00"/><rect x="1517" y="403" width="6" height="6" fill="#948900"/><rect x="1523" y="403" width="6" height="6" fill="#948700"/><rect x="1529" y="403" width="6" height="6" fill="#948600"/><rect x="1535" y="403" width="6" height="6" fill="#948400"/><rect x="1541" y="403" width="6" height="6" fill="#948300"/><rect x="1547" y="403" width="6" height="6" fill="#948100"/><rect x="1553" y="403" width="6" height="6" fill="#948000"/><rect x="1337" y="409" width="6" height="6" fill="#6a9403"/><rect x="1343" y="409" width="6" height="6" fill="#6c9402"/><rect x="1349" y="409" width="6" height="6" fill="#6d9402"/><rect x="1355" y="409" width="6" height="6" fill="#6f9402"/><rect x="1361" y="409" width="6" height="6" fill="#719401"/><rect x="1367" y="409" width="6" height="6" fill="#739401"/><rect x="1373" y="409" width="6" height="6" fill="#749401"/><rect x="1379" y="409" width="6" height="6" fill="#769400"/><rect x="1385" y="409" width="6" height="6" fill="#789400"/><rect x="1391" y="409" width="6" height="6" fill="#7a9400"/><rect x="1397" y="409" width="6" height="6" fill="#7c9400"/><rect x="1403" y="409" width="6" height="6" fill="#7e9400"/><rect x="1409" y="409" width="6" height="6" fill="#809400"/><rect x="1415" y="409" width="6" height="6" fill="#829400"/><rect x="1421" y="409" width="6" height="6" fill="#839400"/><rect x="1427" y="409" width="6" height="6" fill="#859400"/><rect x="1433" y="409" width="6" height="6" fill="#879400"/><rect x="1439" y="409" width="6" height="6" fill="#899400"/><rect x="1445" y="409" width="6" height="6" fill="#8b9400"/><rect x="1451" y="409" width="6" height="6" fill="#8d9400"/><rect x="1457" y="409" width="6" height="6" fill="#8f9400"/><rect x="1463" y="409" width="6" height="6" fill="#919400"/><rect x="1469" y="409" width="6" height="6" fill="#929400"/><rect x="1475" y="409" width="6" height="6" fill="#949300"/><rect x="1481" y="409" width="6" height="6" fill="#949200"/><rect x="1487" y="409" width="6" height="6" fill="#949000"/><rect x="1493" y="409" width="6" height="6" fill="#948e00"/><rect x="1499" y="409" width="6" height="6" fill="#948c00"/><rect x="1505" y="409" width="6" height="6" fill="#948b00"/><rect x="1511" y="409" width="6" height="6" fill="#948900"/><rect x="1517" y="409" width="6" height="6" fill="#948700"/><rect x="1523" y="409" width="6" height="6" fill="#948600"/><rect x="1529" y="409" width="6" height="6" fill="#948400"/><rect x="1535" y="409" width="6" height="6" fill="#948300"/><rect x="1541" y="409" width="6" height="6" fill="#948100"/><rect x="1547" y="409" width="6" height="6" fill="#948000"/><rect x="1553" y="409" width="6" height="6" fill="#947f00"/><rect x="1337" y="415" width="6" height="6" fill="#6b9404"/><rect x="1343" y="415" width="6" height="6" fill="#6d9403"/><rect x="1349" y="415" width="6" height="6" fill="#6f9403"/><rect x="1355" y="415" width="6" height="6" fill="#719402"/><rect x="1361" y="415" width="6" height="6" fill="#729402"/><rect x="1367" y="415" width="6" height="6" fill="#749402"/><rect x="1373" y="415" width="6" height="6" fill="#769401"/><rect x="1379" y="415" width="6" height="6" fill="#789401"/><rect x="1385" y="415" width="6" height="6" fill="#7a9400"/><rect x="1391" y="415" width="6" height="6" fill="#7b9400"/><rect x="1397" y="415" width="6" height="6" fill="#7d9400"/><rect x="1403" y="415" width="6" height="6" fill="#7f9400"/><rect x="1409" y="415" width="6" height="6" fill="#819400"/><rect x="1415" y="415" width="6" height="6" fill="#839400"/><rect x="1421" y="415" width="6" height="6" fill="#859400"/><rect x="1427" y="415" width="6" height="6" fill="#879400"/><rect x="1433" y="415" width="6" height="6" fill="#899400"/><rect x="1439" y="415" width="6" height="6" fill="#8b9400"/><rect x="1445" y="415" width="6" height="6" fill="#8d9400"/><rect x="1451" y="415" width="6" height="6" fill="#8e9400"/><rect x="1457" y="415" width="6" height="6" fill="#909400"/><rect x="1463" y="415" width="6" height="6" fill="#929400"/><rect x="1469" y="415" width="6" height="6" fill="#949400"/><rect x="1475" y="415" width="6" height="6" fill="#949200"/><rect x="1481" y="415" width="6" height="6" fill="#949000"/><rect x="1487" y="415" width="6" height="6" fill="#948e00"/><rect x="1493" y="415" width="6" height="6" fill="#948c00"/><rect x="1499" y="415" width="6" height="6" fill="#948b00"/><rect x="1505" y="415" width="6" height="6" fill="#948900"/><rect x="1511" y="415" width="6" height="6" fill="#948700"/><rect x="1517" y="415" width="6" height="6" fill="#948600"/><rect x="1523" y="415" width="6" height="6" fill="#948400"/><rect x="1529" y="415" width="6" height="6" fill="#948300"/><rect x="1535" y="415" width="6" height="6" fill="#948100"/><rect x="1541" y="415" width="6" height="6" fill="#948000"/><rect x="1547" y="415" width="6" height="6" fill="#947e00"/><rect x="1553" y="415" width="6" height="6" fill="#947d00"/><rect x="1337" y="421" width="6" height="6" fill="#6d9404"/><rect x="1343" y="421" width="6" height="6" fill="#6e9404"/><rect x="1349" y="421" width="6" height="6" fill="#709404"/><rect x="1355" y="421" width="6" height="6" fill="#729403"/><rect x="1361" y="421" width="6" height="6" fill="#749403"/><rect x="1367" y="421" width="6" height="6" fill="#769402"/><rect x="1373" y="421" width="6" height="6" fill="#779402"/><rect x="1379" y="421" width="6" height="6" fill="#799402"/><rect x="1385" y="421" width="6" height="6" fill="#7b9401"/><rect x="1391" y="421" width="6" height="6" fill="#7d9401"/><rect x="1397" y="421" width="6" height="6" fill="#7f9400"/><rect x="1403" y="421" width="6" height="6" fill="#819400"/><rect x="1409" y="421" width="6" height="6" fill="#839400"/><rect x="1415" y="421" width="6" height="6" fill="#859400"/><rect x="1421" y="421" width="6" height="6" fill="#879400"/><rect x="1427" y="421" width="6" height="6" fill="#889400"/><rect x="1433" y="421" width="6" height="6" fill="#8a9400"/><rect x="1439" y="421" width="6" height="6" fill="#8c9400"/><rect x="1445" y="421" width="6" height="6" fill="#8e9400"/><rect x="1451" y="421" width="6" height="6" fill="#909400"/><rect x="1457" y="421" width="6" height="6" fill="#929400"/><rect x="1463" y="421" width="6" height="6" fill="#949400"/><rect x="1469" y="421" width="6" height="6" fill="#949200"/><rect x="1475" y="421" width="6" height="6" fill="#949000"/><rect x="1481" y="421" width="6" height="6" fill="#948e00"/><rect x="1487" y="421" width="6" height="6" fill="#948c00"/><rect x="1493" y="421" width="6" height="6" fill="#948b00"/><rect x="1499" y="421" width="6" height="6" fill="#948900"/><rect x="1505" y="421" width="6" height="6" fill="#948700"/><rect x="1511" y="421" width="6" height="6" fill="#948600"/><rect x="1517" y="421" width="6" height="6" fill="#948400"/><rect x="1523" y="421" width="6" height="6" fill="#948300"/><rect x="1529" y="421" width="6" height="6" fill="#948100"/><rect x="1535" y="421" width="6" height="6" fill="#948000"/><rect x="1541" y="421" width="6" height="6" fill="#947e00"/><rect x="1547" y="421" width="6" height="6" fill="#947d00"/><rect x="1553" y="421" width="6" height="6" fill="#947c00"/><rect x="1337" y="427" width="6" height="6" fill="#6e9405"/><rect x="1343" y="427" width="6" height="6" fill="#709405"/><rect x="1349" y="427" width="6" height="6" fill="#729404"/><rect x="1355" y="427" width="6" height="6" fill="#749404"/><rect x="1361" y="427" width="6" height="6" fill="#759404"/><rect x="1367" y="427" width="6" height="6" fill="#779403"/><rect x="1373" y="427" width="6" height="6" fill="#799403"/><rect x="1379" y="427" width="6" height="6" fill="#7b9402"/><rect x="1385" y="427" width="6" height="6" fill="#7d9402"/><rect x="1391" y="427" width="6" height="6" fill="#7f9402"/><rect x="1397" y="427" width="6" height="6" fill="#809401"/><rect x="1403" y="427" width="6" height="6" fill="#829401"/><rect x="1409" y="427" width="6" height="6" fill="#849400"/><rect x="1415" y="427" width="6" height="6" fill="#869400"/><rect x="1421" y="427" width="6" height="6" fill="#889400"/><rect x="1427" y="427" width="6" height="6" fill="#8a9400"/><rect x="1433" y="427" width="6" height="6" fill="#8c9400"/><rect x="1439" y="427" width="6" height="6" fill="#8e9400"/><rect x="1445" y="427" width="6" height="6" fill="#909400"/><rect x="1451" y="427" width="6" height="6" fill="#929400"/><rect x="1457" y="427" width="6" height="6" fill="#949400"/><rect x="1463" y="427" width="6" height="6" fill="#949200"/><rect x="1469" y="427" width="6" height="6" fill="#949000"/><rect x="1475" y="427" width="6" height="6" fill="#948e00"/><rect x="1481" y="427" width="6" height="6" fill="#948c00"/><rect x="1487" y="427" width="6" height="6" fill="#948b00"/><rect x="1493" y="427" width="6" height="6" fill="#948900"/><rect x="1499" y="427" width="6" height="6" fill="#948700"/><rect x="1505" y="427" width="6" height="6" fill="#948600"/><rect x="1511" y="427" width="6" height="6" fill="#948400"/><rect x="1517" y="427" width="6" height="6" fill="#948300"/><rect x="1523" y="427" width="6" height="6" fill="#948100"/><rect x="1529" y="427" width="6" height="6" fill="#948000"/><rect x="1535" y="427" width="6" height="6" fill="#947e00"/><rect x="1541" y="427" width="6" height="6" fill="#947d00"/><rect x="1547" y="427" width="6" height="6" fill="#947b00"/><rect x="1553" y="427" width="6" height="6" fill="#947a00"/><rect x="1337" y="433" width="6" height="6" fill="#709406"/><rect x="1343" y="433" width="6" height="6" fill="#719406"/><rect x="1349" y="433" width="6" height="6" fill="#739405"/><rect x="1355" y="433" width="6" height="6" fill="#759405"/><rect x="1361" y="433" width="6" height="6" fill="#779404"/><rect x="1367" y="433" width="6" height="6" fill="#799404"/><rect x="1373" y="433" width="6" height="6" fill="#7b9404"/><rect x="1379" y="433" width="6" height="6" fill="#7c9403"/><rect x="1385" y="433" width="6" height="6" fill="#7e9403"/><rect x="1391" y="433" width="6" height="6" fill="#809402"/><rect x="1397" y="433" width="6" height="6" fill="#829402"/><rect x="1403" y="433" width="6" height="6" fill="#849402"/><rect x="1409" y="433" width="6" height="6" fill="#869401"/><rect x="1415" y="433" width="6" height="6" fill="#889401"/><rect x="1421" y="433" width="6" height="6" fill="#8a9400"/><rect x="1427" y="433" width="6" height="6" fill="#8c9400"/><rect x="1433" y="433" width="6" height="6" fill="#8e9400"/><rect x="1439" y="433" width="6" height="6" fill="#909400"/><rect x="1445" y="433" width="6" height="6" fill="#929400"/><rect x="1451" y="433" width="6" height="6" fill="#949400"/><rect x="1457" y="433" width="6" height="6" fill="#949200"/><rect x="1463" y="433" width="6" height="6" fill="#949000"/><rect x="1469" y="433" width="6" height="6" fill="#948e00"/><rect x="1475" y="433" width="6" height="6" fill="#948d00"/><rect x="1481" y="433" width="6" height="6" fill="#948b00"/><rect x="1487" y="433" width="6" height="6" fill="#948900"/><rect x="1493" y="433" width="6" height="6" fill="#948700"/><rect x="1499" y="433" width="6" height="6" fill="#948600"/><rect x="1505" y="433" width="6" height="6" fill="#948400"/><rect x="1511" y="433" width="6" height="6" fill="#948300"/><rect x="1517" y="433" width="6" height="6" fill="#948100"/><rect x="1523" y="433" width="6" height="6" fill="#948000"/><rect x="1529" y="433" width="6" height="6" fill="#947e00"/><rect x="1535" y="433" width="6" height="6" fill="#947d00"/><rect x="1541" y="433" width="6" height="6" fill="#947b00"/><rect x="1547" y="433" width="6" height="6" fill="#947a00"/><rect x="1553" y="433" width="6" height="6" fill="#947900"/><rect x="1337" y="439" width="6" height="6" fill="#719407"/><rect x="1343" y="439" width="6" height="6" fill="#739406"/><rect x="1349" y="439" width="6" height="6" fill="#759406"/><rect x="1355" y="439" width="6" height="6" fill="#779406"/><rect x="1361" y="439" width="6" height="6" fill="#789405"/><rect x="1367" y="439" width="6" height="6" fill="#7a9405"/><rect x="1373" y="439" width="6" height="6" fill="#7c9404"/><rect x="1379" y="439" width="6" height="6" fill="#7e9404"/><rect x="1385" y="439" width="6" height="6" fill="#809404"/><rect x="1391" y="439" width="6" height="6" fill="#829403"/><rect x="1397" y="439" width="6" height="6" fill="#849403"/><rect x="1403" y="439" width="6" height="6" fill="#869402"/><rect x="1409" y="439" width="6" height="6" fill="#889402"/><rect x="1415" y="439" width="6" height="6" fill="#8a9402"/><rect x="1421" y="439" width="6" height="6" fill="#8c9401"/><rect x="1427" y="439" width="6" height="6" fill="#8e9401"/><rect x="1433" y="439" width="6" height="6" fill="#909400"/><rect x="1439" y="439" width="6" height="6" fill="#929400"/><rect x="1445" y="439" width="6" height="6" fill="#949400"/><rect x="1451" y="439" width="6" height="6" fill="#949200"/><rect x="1457" y="439" width="6" height="6" fill="#949000"/><rect x="1463" y="439" width="6" height="6" fill="#948e00"/><rect x="1469" y="439" width="6" height="6" fill="#948d00"/><rect x="1475" y="439" width="6" height="6" fill="#948b00"/><rect x="1481" y="439" width="6" height="6" fill="#948900"/><rect x="1487" y="439" width="6" height="6" fill="#948700"/><rect x="1493" y="439" width="6" height="6" fill="#948600"/><rect x="1499" y="439" width="6" height="6" fill="#948400"/><rect x="1505" y="439" width="6" height="6" fill="#948200"/><rect x="1511" y="439" width="6" height="6" fill="#948100"/><rect x="1517" y="439" width="6" height="6" fill="#947f00"/><rect x="1523" y="439" width="6" height="6" fill="#947e00"/><rect x="1529" y="439" width="6" height="6" fill="#947d00"/><rect x="1535" y="439" width="6" height="6" fill="#947b00"/><rect x="1541" y="439" width="6" height="6" fill="#947a00"/><rect x="1547" y="439" width="6" height="6" fill="#947800"/><rect x="1553" y="439" width="6" height="6" fill="#947700"/><rect x="1337" y="445" width="6" height="6" fill="#739408"/><rect x="1343" y="445" width="6" height="6" fill="#749407"/><rect x="1349" y="445" width="6" height="6" fill="#769407"/><rect x="1355" y="445" width="6" height="6" fill="#789406"/><rect x="1361" y="445" width="6" height="6" fill="#7a9406"/><rect x="1367" y="445" width="6" height="6" fill="#7c9406"/><rect x="1373" y="445" width="6" height="6" fill="#7e9405"/><rect x="1379" y="445" width="6" height="6" fill="#809405"/><rect x="1385" y="445" width="6" height="6" fill="#829404"/><rect x="1391" y="445" width="6" height="6" fill="#849404"/><rect x="1397" y="445" width="6" height="6" fill="#859404"/><rect x="1403" y="445" width="6" height="6" fill="#879403"/><rect x="1409" y="445" width="6" height="6" fill="#899403"/><rect x="1415" y="445" width="6" height="6" fill="#8b9402"/><rect x="1421" y="445" width="6" height="6" fill="#8d9402"/><rect x="1427" y="445" width="6" height="6" fill="#8f9402"/><rect x="1433" y="445" width="6" height="6" fill="#919401"/><rect x="1439" y="445" width="6" height="6" fill="#939401"/><rect x="1445" y="445" width="6" height="6" fill="#949200"/><rect x="1451" y="445" width="6" height="6" fill="#949000"/><rect x="1457" y="445" width="6" height="6" fill="#948f00"/><rect x="1463" y="445" width="6" height="6" fill="#948d00"/><rect x="1469" y="445" width="6" height="6" fill="#948b00"/><rect x="1475" y="445" width="6" height="6" fill="#948900"/><rect x="1481" y="445" width="6" height="6" fill="#948700"/><rect x="1487" y="445" width="6" height="6" fill="#948600"/><rect x="1493" y="445" width="6" height="6" fill="#948400"/><rect x="1499" y="445" width="6" height="6" fill="#948200"/><rect x="1505" y="445" width="6" height="6" fill="#948100"/><rect x="1511" y="445" width="6" height="6" fill="#947f00"/><rect x="1517" y="445" width="6" height="6" fill="#947e00"/><rect x="1523" y="445" width="6" height="6" fill="#947c00"/><rect x="1529" y="445" width="6" height="6" fill="#947b00"/><rect x="1535" y="445" width="6" height="6" fill="#947a00"/><rect x="1541" y="445" width="6" height="6" fill="#947800"/><rect x="1547" y="445" width="6" height="6" fill="#947700"/><rect x="1553" y="445" width="6" height="6" fill="#947600"/><rect x="1337" y="451" width="6" height="6" fill="#749408"/><rect x="1343" y="451" width="6" height="6" fill="#769408"/><rect x="1349" y="451" width="6" height="6" fill="#789408"/><rect x="1355" y="451" width="6" height="6" fill="#7a9407"/><rect x="1361" y="451" width="6" height="6" fill="#7c9407"/><rect x="1367" y="451" width="6" height="6" fill="#7e9406"/><rect x="1373" y="451" width="6" height="6" fill="#7f9406"/><rect x="1379" y="451" width="6" height="6" fill="#819406"/><rect x="1385" y="451" width="6" height="6" fill="#839405"/><rect x="1391" y="451" width="6" height="6" fill="#859405"/><rect x="1397" y="451" width="6" height="6" fill="#879404"/><rect x="1403" y="451" width="6" height="6" fill="#899404"/><rect x="1409" y="451" width="6" height="6" fill="#8b9404"/><rect x="1415" y="451" width="6" height="6" fill="#8d9403"/><rect x="1421" y="451" width="6" height="6" fill="#8f9403"/><rect x="1427" y="451" width="6" height="6" fill="#919402"/><rect x="1433" y="451" width="6" height="6" fill="#939402"/><rect x="1439" y="451" width="6" height="6" fill="#949302"/><rect x="1445" y="451" width="6" height="6" fill="#949101"/><rect x="1451" y="451" width="6" height="6" fill="#948f01"/><rect x="1457" y="451" width="6" height="6" fill="#948d00"/><rect x="1463" y="451" width="6" height="6" fill="#948b00"/><rect x="1469" y="451" width="6" height="6" fill="#948900"/><rect x="1475" y="451" width="6" height="6" fill="#948700"/><rect x="1481" y="451" width="6" height="6" fill="#948600"/><rect x="1487" y="451" width="6" height="6" fill="#948400"/><rect x="1493" y="451" width="6" height="6" fill="#948200"/><rect x="1499" y="451" width="6" height="6" fill="#948100"/><rect x="1505" y="451" width="6" height="6" fill="#947f00"/><rect x="1511" y="451" width="6" height="6" fill="#947e00"/><rect x="1517" y="451" width="6" height="6" fill="#947c00"/><rect x="1523" y="451" width="6" height="6" fill="#947b00"/><rect x="1529" y="451" width="6" height="6" fill="#947900"/><rect x="1535" y="451" width="6" height="6" fill="#947800"/><rect x="1541" y="451" width="6" height="6" fill="#947700"/><rect x="1547" y="451" width="6" height="6" fill="#947500"/><rect x="1553" y="451" width="6" height="6" fill="#947400"/><rect x="1337" y="457" width="6" height="6" fill="#769409"/><rect x="1343" y="457" width="6" height="6" fill="#789409"/><rect x="1349" y="457" width="6" height="6" fill="#799409"/><rect x="1355" y="457" width="6" height="6" fill="#7b9408"/><rect x="1361" y="457" width="6" height="6" fill="#7d9408"/><rect x="1367" y="457" width="6" height="6" fill="#7f9407"/><rect x="1373" y="457" width="6" height="6" fill="#819407"/><rect x="1379" y="457" width="6" height="6" fill="#839407"/><rect x="1385" y="457" width="6" height="6" fill="#859406"/><rect x="1391" y="457" width="6" height="6" fill="#879406"/><rect x="1397" y="457" width="6" height="6" fill="#899405"/><rect x="1403" y="457" width="6" height="6" fill="#8b9405"/><rect x="1409" y="457" width="6" height="6" fill="#8d9405"/><rect x="1415" y="457" width="6" height="6" fill="#8f9404"/><rect x="1421" y="457" width="6" height="6" fill="#919404"/><rect x="1427" y="457" width="6" height="6" fill="#939403"/><rect x="1433" y="457" width="6" height="6" fill="#949303"/><rect x="1439" y="457" width="6" height="6" fill="#949102"/><rect x="1445" y="457" width="6" height="6" fill="#948f02"/><rect x="1451" y="457" width="6" height="6" fill="#948d01"/><rect x="1457" y="457" width="6" height="6" fill="#948b01"/><rect x="1463" y="457" width="6" height="6" fill="#948901"/><rect x="1469" y="457" width="6" height="6" fill="#948700"/><rect x="1475" y="457" width="6" height="6" fill="#948600"/><rect x="1481" y="457" width="6" height="6" fill="#948400"/><rect x="1487" y="457" width="6" height="6" fill="#948200"/><rect x="1493" y="457" width="6" height="6" fill="#948100"/><rect x="1499" y="457" width="6" height="6" fill="#947f00"/><rect x="1505" y="457" width="6" height="6" fill="#947e00"/><rect x="1511" y="457" width="6" height="6" fill="#947c00"/><rect x="1517" y="457" width="6" height="6" fill="#947b00"/><rect x="1523" y="457" width="6" height="6" fill="#947900"/><rect x="1529" y="457" width="6" height="6" fill="#947800"/><rect x="1535" y="457" width="6" height="6" fill="#947600"/><rect x="1541" y="457" width="6" height="6" fill="#947500"/><rect x="1547" y="457" width="6" height="6" fill="#947400"/><rect x="1553" y="457" width="6" height="6" fill="#947300"/><rect x="1337" y="463" width="6" height="6" fill="#77940a"/><rect x="1343" y="463" width="6" height="6" fill="#79940a"/><rect x="1349" y="463" width="6" height="6" fill="#7b9409"/><rect x="1355" y="463" width="6" height="6" fill="#7d9409"/><rect x="1361" y="463" width="6" height="6" fill="#7f9409"/><rect x="1367" y="463" width="6" height="6" fill="#819408"/><rect x="1373" y="463" width="6" height="6" fill="#839408"/><rect x="1379" y="463" width="6" height="6" fill="#859407"/><rect x="1385" y="463" width="6" height="6" fill="#879407"/><rect x="1391" y="463" width="6" height="6" fill="#899407"/><rect x="1397" y="463" width="6" height="6" fill="#8b9406"/><rect x="1403" y="463" width="6" height="6" fill="#8d9406"/><rect x="1409" y="463" width="6" height="6" fill="#8f9405"/><rect x="1415" y="463" width="6" height="6" fill="#919405"/><rect x="1421" y="463" width="6" height="6" fill="#939405"/><rect x="1427" y="463" width="6" height="6" fill="#949304"/><rect x="1433" y="463" width="6" height="6" fill="#949104"/><rect x="1439" y="463" width="6" height="6" fill="#948f03"/><rect x="1445" y="463" width="6" height="6" fill="#948d03"/><rect x="1451" y="463" width="6" height="6" fill="#948b02"/><rect x="1457" y="463" width="6" height="6" fill="#948902"/><rect x="1463" y="463" width="6" height="6" fill="#948701"/><rect x="1469" y="463" width="6" height="6" fill="#948601"/><rect x="1475" y="463" width="6" height="6" fill="#948401"/><rect x="1481" y="463" width="6" height="6" fill="#948200"/><rect x="1487" y="463" width="6" height="6" fill="#948100"/><rect x="1493" y="463" width="6" height="6" fill="#947f00"/><rect x="1499" y="463" width="6" height="6" fill="#947d00"/><rect x="1505" y="463" width="6" height="6" fill="#947c00"/><rect x="1511" y="463" width="6" height="6" fill="#947a00"/><rect x="1517" y="463" width="6" height="6" fill="#947900"/><rect x="1523" y="463" width="6" height="6" fill="#947800"/><rect x="1529" y="463" width="6" height="6" fill="#947600"/><rect x="1535" y="463" width="6" height="6" fill="#947500"/><rect x="1541" y="463" width="6" height="6" fill="#947400"/><rect x="1547" y="463" width="6" height="6" fill="#947200"/><rect x="1553" y="463" width="6" height="6" fill="#947100"/><rect x="1337" y="469" width="6" height="6" fill="#79940b"/><rect x="1343" y="469" width="6" height="6" fill="#7b940b"/><rect x="1349" y="469" width="6" height="6" fill="#7d940a"/><rect x="1355" y="469" width="6" height="6" fill="#7f940a"/><rect x="1361" y="469" width="6" height="6" fill="#819409"/><rect x="1367" y="469" width="6" height="6" fill="#839409"/><rect x="1373" y="469" width="6" height="6" fill="#849409"/><rect x="1379" y="469" width="6" height="6" fill="#869408"/><rect x="1385" y="469" width="6" height="6" fill="#889408"/><rect x="1391" y="469" width="6" height="6" fill="#8a9407"/><rect x="1397" y="469" width="6" height="6" fill="#8d9407"/><rect x="1403" y="469" width="6" height="6" fill="#8f9407"/><rect x="1409" y="469" width="6" height="6" fill="#919406"/><rect x="1415" y="469" width="6" height="6" fill="#939406"/><rect x="1421" y="469" width="6" height="6" fill="#949305"/><rect x="1427" y="469" width="6" height="6" fill="#949105"/><rect x="1433" y="469" width="6" height="6" fill="#948f04"/><rect x="1439" y="469" width="6" height="6" fill="#948d04"/><rect x="1445" y="469" width="6" height="6" fill="#948b03"/><rect x="1451" y="469" width="6" height="6" fill="#948903"/><rect x="1457" y="469" width="6" height="6" fill="#948803"/><rect x="1463" y="469" width="6" height="6" fill="#948602"/><rect x="1469" y="469" width="6" height="6" fill="#948402"/><rect x="1475" y="469" width="6" height="6" fill="#948201"/><rect x="1481" y="469" width="6" height="6" fill="#948101"/><rect x="1487" y="469" width="6" height="6" fill="#947f01"/><rect x="1493" y="469" width="6" height="6" fill="#947d00"/><rect x="1499" y="469" width="6" height="6" fill="#947c00"/><rect x="1505" y="469" width="6" height="6" fill="#947a00"/><rect x="1511" y="469" width="6" height="6" fill="#947900"/><rect x="1517" y="469" width="6" height="6" fill="#947700"/><rect x="1523" y="469" width="6" height="6" fill="#947600"/><rect x="1529" y="469" width="6" height="6" fill="#947500"/><rect x="1535" y="469" width="6" height="6" fill="#947300"/><rect x="1541" y="469" width="6" height="6" fill="#947200"/><rect x="1547" y="469" width="6" height="6" fill="#947100"/><rect x="1553" y="469" width="6" height="6" fill="#947000"/><rect x="1337" y="475" width="6" height="6" fill="#7a940c"/><rect x="1343" y="475" width="6" height="6" fill="#7c940c"/><rect x="1349" y="475" width="6" height="6" fill="#7e940b"/><rect x="1355" y="475" width="6" height="6" fill="#80940b"/><rect x="1361" y="475" width="6" height="6" fill="#82940a"/><rect x="1367" y="475" width="6" height="6" fill="#84940a"/><rect x="1373" y="475" width="6" height="6" fill="#86940a"/><rect x="1379" y="475" width="6" height="6" fill="#889409"/><rect x="1385" y="475" width="6" height="6" fill="#8a9409"/><rect x="1391" y="475" width="6" height="6" fill="#8c9408"/><rect x="1397" y="475" width="6" height="6" fill="#8e9408"/><rect x="1403" y="475" width="6" height="6" fill="#909408"/><rect x="1409" y="475" width="6" height="6" fill="#929407"/><rect x="1415" y="475" width="6" height="6" fill="#949307"/><rect x="1421" y="475" width="6" height="6" fill="#949106"/><rect x="1427" y="475" width="6" height="6" fill="#948f06"/><rect x="1433" y="475" width="6" height="6" fill="#948d05"/><rect x="1439" y="475" width="6" height="6" fill="#948b05"/><rect x="1445" y="475" width="6" height="6" fill="#948904"/><rect x="1451" y="475" width="6" height="6" fill="#948804"/><rect x="1457" y="475" width="6" height="6" fill="#948603"/><rect x="1463" y="475" width="6" height="6" fill="#948403"/><rect x="1469" y="475" width="6" height="6" fill="#948202"/><rect x="1475" y="475" width="6" height="6" fill="#948102"/><rect x="1481" y="475" width="6" height="6" fill="#947f02"/><rect x="1487" y="475" width="6" height="6" fill="#947d01"/><rect x="1493" y="475" width="6" height="6" fill="#947c01"/><rect x="1499" y="475" width="6" height="6" fill="#947a00"/><rect x="1505" y="475" width="6" height="6" fill="#947900"/><rect x="1511" y="475" width="6" height="6" fill="#947700"/><rect x="1517" y="475" width="6" height="6" fill="#947600"/><rect x="1523" y="475" width="6" height="6" fill="#947400"/><rect x="1529" y="475" width="6" height="6" fill="#947300"/><rect x="1535" y="475" width="6" height="6" fill="#947200"/><rect x="1541" y="475" width="6" height="6" fill="#947000"/><rect x="1547" y="475" width="6" height="6" fill="#946f00"/><rect x="1553" y="475" width="6" height="6" fill="#946e00"/><rect x="1337" y="481" width="6" height="6" fill="#7c940d"/><rect x="1343" y="481" width="6" height="6" fill="#7e940c"/><rect x="1349" y="481" width="6" height="6" fill="#80940c"/><rect x="1355" y="481" width="6" height="6" fill="#82940c"/><rect x="1361" y="481" width="6" height="6" fill="#84940b"/><rect x="1367" y="481" width="6" height="6" fill="#86940b"/><rect x="1373" y="481" width="6" height="6" fill="#88940a"/><rect x="1379" y="481" width="6" height="6" fill="#8a940a"/><rect x="1385" y="481" width="6" height="6" fill="#8c940a"/><rect x="1391" y="481" width="6" height="6" fill="#8e9409"/><rect x="1397" y="481" width="6" height="6" fill="#909409"/><rect x="1403" y="481" width="6" height="6" fill="#929408"/><rect x="1409" y="481" width="6" height="6" fill="#949308"/><rect x="1415" y="481" width="6" height="6" fill="#949107"/><rect x="1421" y="481" width="6" height="6" fill="#948f07"/><rect x="1427" y="481" width="6" height="6" fill="#948d06"/><rect x="1433" y="481" width="6" height="6" fill="#948b06"/><rect x="1439" y="481" width="6" height="6" fill="#948a05"/><rect x="1445" y="481" width="6" height="6" fill="#948805"/><rect x="1451" y="481" width="6" height="6" fill="#948605"/><rect x="1457" y="481" width="6" height="6" fill="#948404"/><rect x="1463" y="481" width="6" height="6" fill="#948204"/><rect x="1469" y="481" width="6" height="6" fill="#948103"/><rect x="1475" y="481" width="6" height="6" fill="#947f03"/><rect x="1481" y="481" width="6" height="6" fill="#947d02"/><rect x="1487" y="481" width="6" height="6" fill="#947c02"/><rect x="1493" y="481" width="6" height="6" fill="#947a02"/><rect x="1499" y="481" width="6" height="6" fill="#947901"/><rect x="1505" y="481" width="6" height="6" fill="#947701"/><rect x="1511" y="481" width="6" height="6" fill="#947600"/><rect x="1517" y="481" width="6" height="6" fill="#947400"/><rect x="1523" y="481" width="6" height="6" fill="#947300"/><rect x="1529" y="481" width="6" height="6" fill="#947100"/><rect x="1535" y="481" width="6" height="6" fill="#947000"/><rect x="1541" y="481" width="6" height="6" fill="#946f00"/><rect x="1547" y="481" width="6" height="6" fill="#946e00"/><rect x="1553" y="481" width="6" height="6" fill="#946c00"/><rect x="1337" y="487" width="6" height="6" fill="#7e940e"/><rect x="1343" y="487" width="6" height="6" fill="#80940d"/><rect x="1349" y="487" width="6" height="6" fill="#82940d"/><rect x="1355" y="487" width="6" height="6" fill="#84940d"/><rect x="1361" y="487" width="6" height="6" fill="#86940c"/><rect x="1367" y="487" width="6" height="6" fill="#88940c"/><rect x="1373" y="487" width="6" height="6" fill="#8a940b"/><rect x="1379" y="487" width="6" height="6" fill="#8c940b"/><rect x="1385" y="487" width="6" height="6" fill="#8e940b"/><rect x="1391" y="487" width="6" height="6" fill="#90940a"/><rect x="1397" y="487" width="6" height="6" fill="#92940a"/><rect x="1403" y="487" width="6" height="6" fill="#949409"/><rect x="1409" y="487" width="6" height="6" fill="#949209"/><rect x="1415" y="487" width="6" height="6" fill="#948f08"/><rect x="1421" y="487" width="6" height="6" fill="#948d08"/><rect x="1427" y="487" width="6" height="6" fill="#948c07"/><rect x="1433" y="487" width="6" height="6" fill="#948a07"/><rect x="1439" y="487" width="6" height="6" fill="#948806"/><rect x="1445" y="487" width="6" height="6" fill="#948606"/><rect x="1451" y="487" width="6" height="6" fill="#948405"/><rect x="1457" y="487" width="6" height="6" fill="#948205"/><rect x="1463" y="487" width="6" height="6" fill="#948104"/><rect x="1469" y="487" width="6" height="6" fill="#947f04"/><rect x="1475" y="487" width="6" height="6" fill="#947d04"/><rect x="1481" y="487" width="6" height="6" fill="#947c03"/><rect x="1487" y="487" width="6" height="6" fill="#947a03"/><rect x="1493" y="487" width="6" height="6" fill="#947902"/><rect x="1499" y="487" width="6" height="6" fill="#947702"/><rect x="1505" y="487" width="6" height="6" fill="#947602"/><rect x="1511" y="487" width="6" height="6" fill="#947401"/><rect x="1517" y="487" width="6" height="6" fill="#947301"/><rect x="1523" y="487" width="6" height="6" fill="#947100"/><rect x="1529" y="487" width="6" height="6" fill="#947000"/><rect x="1535" y="487" width="6" height="6" fill="#946f00"/><rect x="1541" y="487" width="6" height="6" fill="#946d00"/><rect x="1547" y="487" width="6" height="6" fill="#946c00"/><rect x="1553" y="487" width="6" height="6" fill="#946b00"/><rect x="1337" y="493" width="6" height="6" fill="#7f940f"/><rect x="1343" y="493" width="6" height="6" fill="#81940e"/><rect x="1349" y="493" width="6" height="6" fill="#83940e"/><rect x="1355" y="493" width="6" height="6" fill="#86940e"/><rect x="1361" y="493" width="6" height="6" fill="#88940d"/><rect x="1367" y="493" width="6" height="6" fill="#8a940d"/><rect x="1373" y="493" width="6" height="6" fill="#8c940c"/><rect x="1379" y="493" width="6" height="6" fill="#8e940c"/><rect x="1385" y="493" width="6" height="6" fill="#90940c"/><rect x="1391" y="493" width="6" height="6" fill="#92940b"/><rect x="1397" y="493" width="6" height="6" fill="#94940b"/><rect x="1403" y="493" width="6" height="6" fill="#94920a"/><rect x="1409" y="493" width="6" height="6" fill="#94900a"/><rect x="1415" y="493" width="6" height="6" fill="#948e09"/><rect x="1421" y="493" width="6" height="6" fill="#948c09"/><rect x="1427" y="493" width="6" height="6" fill="#948a08"/><rect x="1433" y="493" width="6" height="6" fill="#948808"/><rect x="1439" y="493" width="6" height="6" fill="#948607"/><rect x="1445" y="493" width="6" height="6" fill="#948407"/><rect x="1451" y="493" width="6" height="6" fill="#948206"/><rect x="1457" y="493" width="6" height="6" fill="#948106"/><rect x="1463" y="493" width="6" height="6" fill="#947f05"/><rect x="1469" y="493" width="6" height="6" fill="#947d05"/><rect x="1475" y="493" width="6" height="6" fill="#947c04"/><rect x="1481" y="493" width="6" height="6" fill="#947a04"/><rect x="1487" y="493" width="6" height="6" fill="#947903"/><rect x="1493" y="493" width="6" height="6" fill="#947703"/><rect x="1499" y="493" width="6" height="6" fill="#947603"/><rect x="1505" y="493" width="6" height="6" fill="#947402"/><rect x="1511" y="493" width="6" height="6" fill="#947302"/><rect x="1517" y="493" width="6" height="6" fill="#947101"/><rect x="1523" y="493" width="6" height="6" fill="#947001"/><rect x="1529" y="493" width="6" height="6" fill="#946e01"/><rect x="1535" y="493" width="6" height="6" fill="#946d00"/><rect x="1541" y="493" width="6" height="6" fill="#946c00"/><rect x="1547" y="493" width="6" height="6" fill="#946b00"/><rect x="1553" y="493" width="6" height="6" fill="#946900"/><rect x="1337" y="499" width="6" height="6" fill="#819410"/><rect x="1343" y="499" width="6" height="6" fill="#83940f"/><rect x="1349" y="499" width="6" height="6" fill="#85940f"/><rect x="1355" y="499" width="6" height="6" fill="#87940e"/><rect x="1361" y="499" width="6" height="6" fill="#89940e"/><rect x="1367" y="499" width="6" height="6" fill="#8b940e"/><rect x="1373" y="499" width="6" height="6" fill="#8e940d"/><rect x="1379" y="499" width="6" height="6" fill="#90940d"/><rect x="1385" y="499" width="6" height="6" fill="#92940c"/><rect x="1391" y="499" width="6" height="6" fill="#94940c"/><rect x="1397" y="499" width="6" height="6" fill="#94920b"/><rect x="1403" y="499" width="6" height="6" fill="#94900b"/><rect x="1409" y="499" width="6" height="6" fill="#948e0a"/><rect x="1415" y="499" width="6" height="6" fill="#948c0a"/><rect x="1421" y="499" width="6" height="6" fill="#948a09"/><rect x="1427" y="499" width="6" height="6" fill="#948809"/><rect x="1433" y="499" width="6" height="6" fill="#948608"/><rect x="1439" y="499" width="6" height="6" fill="#948408"/><rect x="1445" y="499" width="6" height="6" fill="#948307"/><rect x="1451" y="499" width="6" height="6" fill="#948107"/><rect x="1457" y="499" width="6" height="6" fill="#947f06"/><rect x="1463" y="499" width="6" height="6" fill="#947d06"/><rect x="1469" y="499" width="6" height="6" fill="#947c05"/><rect x="1475" y="499" width="6" height="6" fill="#947a05"/><rect x="1481" y="499" width="6" height="6" fill="#947905"/><rect x="1487" y="499" width="6" height="6" fill="#947704"/><rect x="1493" y="499" width="6" height="6" fill="#947604"/><rect x="1499" y="499" width="6" height="6" fill="#947403"/><rect x="1505" y="499" width="6" height="6" fill="#947303"/><rect x="1511" y="499" width="6" height="6" fill="#947103"/><rect x="1517" y="499" width="6" height="6" fill="#947002"/><rect x="1523" y="499" width="6" height="6" fill="#946e02"/><rect x="1529" y="499" width="6" height="6" fill="#946d01"/><rect x="1535" y="499" width="6" height="6" fill="#946c01"/><rect x="1541" y="499" width="6" height="6" fill="#946a01"/><rect x="1547" y="499" width="6" height="6" fill="#946900"/><rect x="1553" y="499" width="6" height="6" fill="#946800"/><rect x="1337" y="505" width="6" height="6" fill="#839411"/><rect x="1343" y="505" width="6" height="6" fill="#859410"/><rect x="1349" y="505" width="6" height="6" fill="#879410"/><rect x="1355" y="505" width="6" height="6" fill="#89940f"/><rect x="1361" y="505" width="6" height="6" fill="#8b940f"/><rect x="1367" y="505" width="6" height="6" fill="#8d940f"/><rect x="1373" y="505" width="6" height="6" fill="#8f940e"/><rect x="1379" y="505" width="6" height="6" fill="#92940e"/><rect x="1385" y="505" width="6" height="6" fill="#94940d"/><rect x="1391" y="505" width="6" height="6" fill="#94920d"/><rect x="1397" y="505" width="6" height="6" fill="#94900c"/><rect x="1403" y="505" width="6" height="6" fill="#948e0c"/><rect x="1409" y="505" width="6" height="6" fill="#948c0b"/><rect x="1415" y="505" width="6" height="6" fill="#948a0b"/><rect x="1421" y="505" width="6" height="6" fill="#94880a"/><rect x="1427" y="505" width="6" height="6" fill="#94860a"/><rect x="1433" y="505" width="6" height="6" fill="#948409"/><rect x="1439" y="505" width="6" height="6" fill="#948309"/><rect x="1445" y="505" width="6" height="6" fill="#948108"/><rect x="1451" y="505" width="6" height="6" fill="#947f08"/><rect x="1457" y="505" width="6" height="6" fill="#947d07"/><rect x="1463" y="505" width="6" height="6" fill="#947c07"/><rect x="1469" y="505" width="6" height="6" fill="#947a06"/><rect x="1475" y="505" width="6" height="6" fill="#947906"/><rect x="1481" y="505" width="6" height="6" fill="#947705"/><rect x="1487" y="505" width="6" height="6" fill="#947605"/><rect x="1493" y="505" width="6" height="6" fill="#947404"/><rect x="1499" y="505" width="6" height="6" fill="#947304"/><rect x="1505" y="505" width="6" height="6" fill="#947104"/><rect x="1511" y="505" width="6" height="6" fill="#947003"/><rect x="1517" y="505" width="6" height="6" fill="#946e03"/><rect x="1523" y="505" width="6" height="6" fill="#946d02"/><rect x="1529" y="505" width="6" height="6" fill="#946c02"/><rect x="1535" y="505" width="6" height="6" fill="#946a02"/><rect x="1541" y="505" width="6" height="6" fill="#946901"/><rect x="1547" y="505" width="6" height="6" fill="#946801"/><rect x="1553" y="505" width="6" height="6" fill="#946701"/><rect x="1337" y="511" width="6" height="6" fill="#859412"/><rect x="1343" y="511" width="6" height="6" fill="#879411"/><rect x="1349" y="511" width="6" height="6" fill="#899411"/><rect x="1355" y="511" width="6" height="6" fill="#8b9410"/><rect x="1361" y="511" width="6" height="6" fill="#8d9410"/><rect x="1367" y="511" width="6" height="6" fill="#8f9410"/><rect x="1373" y="511" width="6" height="6" fill="#91940f"/><rect x="1379" y="511" width="6" height="6" fill="#93940f"/><rect x="1385" y="511" width="6" height="6" fill="#94920e"/><rect x="1391" y="511" width="6" height="6" fill="#94900e"/><rect x="1397" y="511" width="6" height="6" fill="#948e0d"/><rect x="1403" y="511" width="6" height="6" fill="#948c0c"/><rect x="1409" y="511" width="6" height="6" fill="#948a0c"/><rect x="1415" y="511" width="6" height="6" fill="#94880b"/><rect x="1421" y="511" width="6" height="6" fill="#94860b"/><rect x="1427" y="511" width="6" height="6" fill="#94840a"/><rect x="1433" y="511" width="6" height="6" fill="#94830a"/><rect x="1439" y="511" width="6" height="6" fill="#948109"/><rect x="1445" y="511" width="6" height="6" fill="#947f09"/><rect x="1451" y="511" width="6" height="6" fill="#947d08"/><rect x="1457" y="511" width="6" height="6" fill="#947c08"/><rect x="1463" y="511" width="6" height="6" fill="#947a07"/><rect x="1469" y="511" width="6" height="6" fill="#947907"/><rect x="1475" y="511" width="6" height="6" fill="#947706"/><rect x="1481" y="511" width="6" height="6" fill="#947606"/><rect x="1487" y="511" width="6" height="6" fill="#947406"/><rect x="1493" y="511" width="6" height="6" fill="#947305"/><rect x="1499" y="511" width="6" height="6" fill="#947105"/><rect x="1505" y="511" width="6" height="6" fill="#947004"/><rect x="1511" y="511" width="6" height="6" fill="#946e04"/><rect x="1517" y="511" width="6" height="6" fill="#946d03"/><rect x="1523" y="511" width="6" height="6" fill="#946c03"/><rect x="1529" y="511" width="6" height="6" fill="#946a03"/><rect x="1535" y="511" width="6" height="6" fill="#946902"/><rect x="1541" y="511" width="6" height="6" fill="#946802"/><rect x="1547" y="511" width="6" height="6" fill="#946602"/><rect x="1553" y="511" width="6" height="6" fill="#946501"/><rect x="1337" y="517" width="6" height="6" fill="#879413"/><rect x="1343" y="517" width="6" height="6" fill="#899412"/><rect x="1349" y="517" width="6" height="6" fill="#8b9412"/><rect x="1355" y="517" width="6" height="6" fill="#8d9411"/><rect x="1361" y="517" width="6" height="6" fill="#8f9411"/><rect x="1367" y="517" width="6" height="6" fill="#919411"/><rect x="1373" y="517" width="6" height="6" fill="#939410"/><rect x="1379" y="517" width="6" height="6" fill="#949210"/><rect x="1385" y="517" width="6" height="6" fill="#94900f"/><rect x="1391" y="517" width="6" height="6" fill="#948e0e"/><rect x="1397" y="517" width="6" height="6" fill="#948c0e"/><rect x="1403" y="517" width="6" height="6" fill="#948a0d"/><rect x="1409" y="517" width="6" height="6" fill="#94880d"/><rect x="1415" y="517" width="6" height="6" fill="#94860c"/><rect x="1421" y="517" width="6" height="6" fill="#94850c"/><rect x="1427" y="517" width="6" height="6" fill="#94830b"/><rect x="1433" y="517" width="6" height="6" fill="#94810b"/><rect x="1439" y="517" width="6" height="6" fill="#947f0a"/><rect x="1445" y="517" width="6" height="6" fill="#947e09"/><rect x="1451" y="517" width="6" height="6" fill="#947c09"/><rect x="1457" y="517" width="6" height="6" fill="#947a09"/><rect x="1463" y="517" width="6" height="6" fill="#947908"/><rect x="1469" y="517" width="6" height="6" fill="#947708"/><rect x="1475" y="517" width="6" height="6" fill="#947607"/><rect x="1481" y="517" width="6" height="6" fill="#947407"/><rect x="1487" y="517" width="6" height="6" fill="#947306"/><rect x="1493" y="517" width="6" height="6" fill="#947106"/><rect x="1499" y="517" width="6" height="6" fill="#947005"/><rect x="1505" y="517" width="6" height="6" fill="#946e05"/><rect x="1511" y="517" width="6" height="6" fill="#946d05"/><rect x="1517" y="517" width="6" height="6" fill="#946c04"/><rect x="1523" y="517" width="6" height="6" fill="#946a04"/><rect x="1529" y="517" width="6" height="6" fill="#946903"/><rect x="1535" y="517" width="6" height="6" fill="#946803"/><rect x="1541" y="517" width="6" height="6" fill="#946603"/><rect x="1547" y="517" width="6" height="6" fill="#946502"/><rect x="1553" y="517" width="6" height="6" fill="#946402"/></g><g clip-path="url(#insbelow)"><g class="ic" filter="url(#bi)"><rect x="1337" y="367" width="6" height="6" fill="#a8ff00"/><rect x="1343" y="367" width="6" height="6" fill="#abff00"/><rect x="1349" y="367" width="6" height="6" fill="#aeff00"/><rect x="1355" y="367" width="6" height="6" fill="#b1ff00"/><rect x="1361" y="367" width="6" height="6" fill="#b4ff00"/><rect x="1367" y="367" width="6" height="6" fill="#b7ff00"/><rect x="1373" y="367" width="6" height="6" fill="#baff00"/><rect x="1379" y="367" width="6" height="6" fill="#bdff00"/><rect x="1385" y="367" width="6" height="6" fill="#c0ff00"/><rect x="1391" y="367" width="6" height="6" fill="#c3ff00"/><rect x="1397" y="367" width="6" height="6" fill="#c6ff00"/><rect x="1403" y="367" width="6" height="6" fill="#c9ff00"/><rect x="1409" y="367" width="6" height="6" fill="#ccff00"/><rect x="1415" y="367" width="6" height="6" fill="#cfff00"/><rect x="1421" y="367" width="6" height="6" fill="#d2ff00"/><rect x="1427" y="367" width="6" height="6" fill="#d5ff00"/><rect x="1433" y="367" width="6" height="6" fill="#d8ff00"/><rect x="1439" y="367" width="6" height="6" fill="#dbff00"/><rect x="1445" y="367" width="6" height="6" fill="#deff00"/><rect x="1451" y="367" width="6" height="6" fill="#e1ff00"/><rect x="1457" y="367" width="6" height="6" fill="#e4ff00"/><rect x="1463" y="367" width="6" height="6" fill="#e7ff00"/><rect x="1469" y="367" width="6" height="6" fill="#eaff00"/><rect x="1475" y="367" width="6" height="6" fill="#edff00"/><rect x="1481" y="367" width="6" height="6" fill="#f0ff00"/><rect x="1487" y="367" width="6" height="6" fill="#f3ff00"/><rect x="1493" y="367" width="6" height="6" fill="#f6ff00"/><rect x="1499" y="367" width="6" height="6" fill="#f9ff00"/><rect x="1505" y="367" width="6" height="6" fill="#fcff00"/><rect x="1511" y="367" width="6" height="6" fill="#feff00"/><rect x="1517" y="367" width="6" height="6" fill="#fffd00"/><rect x="1523" y="367" width="6" height="6" fill="#fffa00"/><rect x="1529" y="367" width="6" height="6" fill="#fff700"/><rect x="1535" y="367" width="6" height="6" fill="#fff400"/><rect x="1541" y="367" width="6" height="6" fill="#fff100"/><rect x="1547" y="367" width="6" height="6" fill="#ffef00"/><rect x="1553" y="367" width="6" height="6" fill="#ffec00"/><rect x="1337" y="373" width="6" height="6" fill="#aaff00"/><rect x="1343" y="373" width="6" height="6" fill="#adff00"/><rect x="1349" y="373" width="6" height="6" fill="#b0ff00"/><rect x="1355" y="373" width="6" height="6" fill="#b3ff00"/><rect x="1361" y="373" width="6" height="6" fill="#b6ff00"/><rect x="1367" y="373" width="6" height="6" fill="#b9ff00"/><rect x="1373" y="373" width="6" height="6" fill="#bcff00"/><rect x="1379" y="373" width="6" height="6" fill="#bfff00"/><rect x="1385" y="373" width="6" height="6" fill="#c2ff00"/><rect x="1391" y="373" width="6" height="6" fill="#c5ff00"/><rect x="1397" y="373" width="6" height="6" fill="#c8ff00"/><rect x="1403" y="373" width="6" height="6" fill="#cbff00"/><rect x="1409" y="373" width="6" height="6" fill="#ceff00"/><rect x="1415" y="373" width="6" height="6" fill="#d1ff00"/><rect x="1421" y="373" width="6" height="6" fill="#d4ff00"/><rect x="1427" y="373" width="6" height="6" fill="#d7ff00"/><rect x="1433" y="373" width="6" height="6" fill="#daff00"/><rect x="1439" y="373" width="6" height="6" fill="#ddff00"/><rect x="1445" y="373" width="6" height="6" fill="#e0ff00"/><rect x="1451" y="373" width="6" height="6" fill="#e3ff00"/><rect x="1457" y="373" width="6" height="6" fill="#e6ff00"/><rect x="1463" y="373" width="6" height="6" fill="#e9ff00"/><rect x="1469" y="373" width="6" height="6" fill="#ecff00"/><rect x="1475" y="373" width="6" height="6" fill="#efff00"/><rect x="1481" y="373" width="6" height="6" fill="#f2ff00"/><rect x="1487" y="373" width="6" height="6" fill="#f5ff00"/><rect x="1493" y="373" width="6" height="6" fill="#f8ff00"/><rect x="1499" y="373" width="6" height="6" fill="#fbff00"/><rect x="1505" y="373" width="6" height="6" fill="#feff00"/><rect x="1511" y="373" width="6" height="6" fill="#fffd00"/><rect x="1517" y="373" width="6" height="6" fill="#fffa00"/><rect x="1523" y="373" width="6" height="6" fill="#fff700"/><rect x="1529" y="373" width="6" height="6" fill="#fff400"/><rect x="1535" y="373" width="6" height="6" fill="#fff100"/><rect x="1541" y="373" width="6" height="6" fill="#ffef00"/><rect x="1547" y="373" width="6" height="6" fill="#ffec00"/><rect x="1553" y="373" width="6" height="6" fill="#ffea00"/><rect x="1337" y="379" width="6" height="6" fill="#acff00"/><rect x="1343" y="379" width="6" height="6" fill="#afff00"/><rect x="1349" y="379" width="6" height="6" fill="#b2ff00"/><rect x="1355" y="379" width="6" height="6" fill="#b5ff00"/><rect x="1361" y="379" width="6" height="6" fill="#b8ff00"/><rect x="1367" y="379" width="6" height="6" fill="#bbff00"/><rect x="1373" y="379" width="6" height="6" fill="#beff00"/><rect x="1379" y="379" width="6" height="6" fill="#c1ff00"/><rect x="1385" y="379" width="6" height="6" fill="#c4ff00"/><rect x="1391" y="379" width="6" height="6" fill="#c7ff00"/><rect x="1397" y="379" width="6" height="6" fill="#caff00"/><rect x="1403" y="379" width="6" height="6" fill="#cdff00"/><rect x="1409" y="379" width="6" height="6" fill="#d0ff00"/><rect x="1415" y="379" width="6" height="6" fill="#d3ff00"/><rect x="1421" y="379" width="6" height="6" fill="#d6ff00"/><rect x="1427" y="379" width="6" height="6" fill="#d9ff00"/><rect x="1433" y="379" width="6" height="6" fill="#dcff00"/><rect x="1439" y="379" width="6" height="6" fill="#dfff00"/><rect x="1445" y="379" width="6" height="6" fill="#e2ff00"/><rect x="1451" y="379" width="6" height="6" fill="#e6ff00"/><rect x="1457" y="379" width="6" height="6" fill="#e9ff00"/><rect x="1463" y="379" width="6" height="6" fill="#ecff00"/><rect x="1469" y="379" width="6" height="6" fill="#efff00"/><rect x="1475" y="379" width="6" height="6" fill="#f2ff00"/><rect x="1481" y="379" width="6" height="6" fill="#f5ff00"/><rect x="1487" y="379" width="6" height="6" fill="#f8ff00"/><rect x="1493" y="379" width="6" height="6" fill="#fbff00"/><rect x="1499" y="379" width="6" height="6" fill="#feff00"/><rect x="1505" y="379" width="6" height="6" fill="#fffd00"/><rect x="1511" y="379" width="6" height="6" fill="#fffa00"/><rect x="1517" y="379" width="6" height="6" fill="#fff700"/><rect x="1523" y="379" width="6" height="6" fill="#fff400"/><rect x="1529" y="379" width="6" height="6" fill="#fff200"/><rect x="1535" y="379" width="6" height="6" fill="#ffef00"/><rect x="1541" y="379" width="6" height="6" fill="#ffec00"/><rect x="1547" y="379" width="6" height="6" fill="#ffea00"/><rect x="1553" y="379" width="6" height="6" fill="#ffe700"/><rect x="1337" y="385" width="6" height="6" fill="#adff00"/><rect x="1343" y="385" width="6" height="6" fill="#b0ff00"/><rect x="1349" y="385" width="6" height="6" fill="#b4ff00"/><rect x="1355" y="385" width="6" height="6" fill="#b7ff00"/><rect x="1361" y="385" width="6" height="6" fill="#baff00"/><rect x="1367" y="385" width="6" height="6" fill="#bdff00"/><rect x="1373" y="385" width="6" height="6" fill="#c0ff00"/><rect x="1379" y="385" width="6" height="6" fill="#c3ff00"/><rect x="1385" y="385" width="6" height="6" fill="#c6ff00"/><rect x="1391" y="385" width="6" height="6" fill="#c9ff00"/><rect x="1397" y="385" width="6" height="6" fill="#ccff00"/><rect x="1403" y="385" width="6" height="6" fill="#cfff00"/><rect x="1409" y="385" width="6" height="6" fill="#d2ff00"/><rect x="1415" y="385" width="6" height="6" fill="#d6ff00"/><rect x="1421" y="385" width="6" height="6" fill="#d9ff00"/><rect x="1427" y="385" width="6" height="6" fill="#dcff00"/><rect x="1433" y="385" width="6" height="6" fill="#dfff00"/><rect x="1439" y="385" width="6" height="6" fill="#e2ff00"/><rect x="1445" y="385" width="6" height="6" fill="#e5ff00"/><rect x="1451" y="385" width="6" height="6" fill="#e8ff00"/><rect x="1457" y="385" width="6" height="6" fill="#ebff00"/><rect x="1463" y="385" width="6" height="6" fill="#eeff00"/><rect x="1469" y="385" width="6" height="6" fill="#f1ff00"/><rect x="1475" y="385" width="6" height="6" fill="#f4ff00"/><rect x="1481" y="385" width="6" height="6" fill="#f8ff00"/><rect x="1487" y="385" width="6" height="6" fill="#fbff00"/><rect x="1493" y="385" width="6" height="6" fill="#feff00"/><rect x="1499" y="385" width="6" height="6" fill="#fffd00"/><rect x="1505" y="385" width="6" height="6" fill="#fffa00"/><rect x="1511" y="385" width="6" height="6" fill="#fff700"/><rect x="1517" y="385" width="6" height="6" fill="#fff400"/><rect x="1523" y="385" width="6" height="6" fill="#fff200"/><rect x="1529" y="385" width="6" height="6" fill="#ffef00"/><rect x="1535" y="385" width="6" height="6" fill="#ffec00"/><rect x="1541" y="385" width="6" height="6" fill="#ffea00"/><rect x="1547" y="385" width="6" height="6" fill="#ffe700"/><rect x="1553" y="385" width="6" height="6" fill="#ffe400"/><rect x="1337" y="391" width="6" height="6" fill="#b0ff01"/><rect x="1343" y="391" width="6" height="6" fill="#b2ff00"/><rect x="1349" y="391" width="6" height="6" fill="#b5ff00"/><rect x="1355" y="391" width="6" height="6" fill="#b9ff00"/><rect x="1361" y="391" width="6" height="6" fill="#bcff00"/><rect x="1367" y="391" width="6" height="6" fill="#bfff00"/><rect x="1373" y="391" width="6" height="6" fill="#c2ff00"/><rect x="1379" y="391" width="6" height="6" fill="#c5ff00"/><rect x="1385" y="391" width="6" height="6" fill="#c8ff00"/><rect x="1391" y="391" width="6" height="6" fill="#cbff00"/><rect x="1397" y="391" width="6" height="6" fill="#ceff00"/><rect x="1403" y="391" width="6" height="6" fill="#d2ff00"/><rect x="1409" y="391" width="6" height="6" fill="#d5ff00"/><rect x="1415" y="391" width="6" height="6" fill="#d8ff00"/><rect x="1421" y="391" width="6" height="6" fill="#dbff00"/><rect x="1427" y="391" width="6" height="6" fill="#deff00"/><rect x="1433" y="391" width="6" height="6" fill="#e1ff00"/><rect x="1439" y="391" width="6" height="6" fill="#e4ff00"/><rect x="1445" y="391" width="6" height="6" fill="#e8ff00"/><rect x="1451" y="391" width="6" height="6" fill="#ebff00"/><rect x="1457" y="391" width="6" height="6" fill="#eeff00"/><rect x="1463" y="391" width="6" height="6" fill="#f1ff00"/><rect x="1469" y="391" width="6" height="6" fill="#f4ff00"/><rect x="1475" y="391" width="6" height="6" fill="#f7ff00"/><rect x="1481" y="391" width="6" height="6" fill="#faff00"/><rect x="1487" y="391" width="6" height="6" fill="#fdff00"/><rect x="1493" y="391" width="6" height="6" fill="#fffd00"/><rect x="1499" y="391" width="6" height="6" fill="#fffa00"/><rect x="1505" y="391" width="6" height="6" fill="#fff700"/><rect x="1511" y="391" width="6" height="6" fill="#fff500"/><rect x="1517" y="391" width="6" height="6" fill="#fff200"/><rect x="1523" y="391" width="6" height="6" fill="#ffef00"/><rect x="1529" y="391" width="6" height="6" fill="#ffec00"/><rect x="1535" y="391" width="6" height="6" fill="#ffea00"/><rect x="1541" y="391" width="6" height="6" fill="#ffe700"/><rect x="1547" y="391" width="6" height="6" fill="#ffe400"/><rect x="1553" y="391" width="6" height="6" fill="#ffe200"/><rect x="1337" y="397" width="6" height="6" fill="#b2ff02"/><rect x="1343" y="397" width="6" height="6" fill="#b5ff02"/><rect x="1349" y="397" width="6" height="6" fill="#b8ff01"/><rect x="1355" y="397" width="6" height="6" fill="#bbff00"/><rect x="1361" y="397" width="6" height="6" fill="#beff00"/><rect x="1367" y="397" width="6" height="6" fill="#c1ff00"/><rect x="1373" y="397" width="6" height="6" fill="#c4ff00"/><rect x="1379" y="397" width="6" height="6" fill="#c7ff00"/><rect x="1385" y="397" width="6" height="6" fill="#caff00"/><rect x="1391" y="397" width="6" height="6" fill="#ceff00"/><rect x="1397" y="397" width="6" height="6" fill="#d1ff00"/><rect x="1403" y="397" width="6" height="6" fill="#d4ff00"/><rect x="1409" y="397" width="6" height="6" fill="#d7ff00"/><rect x="1415" y="397" width="6" height="6" fill="#daff00"/><rect x="1421" y="397" width="6" height="6" fill="#ddff00"/><rect x="1427" y="397" width="6" height="6" fill="#e1ff00"/><rect x="1433" y="397" width="6" height="6" fill="#e4ff00"/><rect x="1439" y="397" width="6" height="6" fill="#e7ff00"/><rect x="1445" y="397" width="6" height="6" fill="#eaff00"/><rect x="1451" y="397" width="6" height="6" fill="#edff00"/><rect x="1457" y="397" width="6" height="6" fill="#f0ff00"/><rect x="1463" y="397" width="6" height="6" fill="#f4ff00"/><rect x="1469" y="397" width="6" height="6" fill="#f7ff00"/><rect x="1475" y="397" width="6" height="6" fill="#faff00"/><rect x="1481" y="397" width="6" height="6" fill="#fdff00"/><rect x="1487" y="397" width="6" height="6" fill="#fffe00"/><rect x="1493" y="397" width="6" height="6" fill="#fffb00"/><rect x="1499" y="397" width="6" height="6" fill="#fff800"/><rect x="1505" y="397" width="6" height="6" fill="#fff500"/><rect x="1511" y="397" width="6" height="6" fill="#fff200"/><rect x="1517" y="397" width="6" height="6" fill="#ffef00"/><rect x="1523" y="397" width="6" height="6" fill="#ffec00"/><rect x="1529" y="397" width="6" height="6" fill="#ffea00"/><rect x="1535" y="397" width="6" height="6" fill="#ffe700"/><rect x="1541" y="397" width="6" height="6" fill="#ffe400"/><rect x="1547" y="397" width="6" height="6" fill="#ffe200"/><rect x="1553" y="397" width="6" height="6" fill="#ffdf00"/><rect x="1337" y="403" width="6" height="6" fill="#b4ff04"/><rect x="1343" y="403" width="6" height="6" fill="#b7ff03"/><rect x="1349" y="403" width="6" height="6" fill="#baff02"/><rect x="1355" y="403" width="6" height="6" fill="#bdff02"/><rect x="1361" y="403" width="6" height="6" fill="#c0ff01"/><rect x="1367" y="403" width="6" height="6" fill="#c3ff00"/><rect x="1373" y="403" width="6" height="6" fill="#c6ff00"/><rect x="1379" y="403" width="6" height="6" fill="#caff00"/><rect x="1385" y="403" width="6" height="6" fill="#cdff00"/><rect x="1391" y="403" width="6" height="6" fill="#d0ff00"/><rect x="1397" y="403" width="6" height="6" fill="#d3ff00"/><rect x="1403" y="403" width="6" height="6" fill="#d6ff00"/><rect x="1409" y="403" width="6" height="6" fill="#daff00"/><rect x="1415" y="403" width="6" height="6" fill="#ddff00"/><rect x="1421" y="403" width="6" height="6" fill="#e0ff00"/><rect x="1427" y="403" width="6" height="6" fill="#e3ff00"/><rect x="1433" y="403" width="6" height="6" fill="#e6ff00"/><rect x="1439" y="403" width="6" height="6" fill="#eaff00"/><rect x="1445" y="403" width="6" height="6" fill="#edff00"/><rect x="1451" y="403" width="6" height="6" fill="#f0ff00"/><rect x="1457" y="403" width="6" height="6" fill="#f3ff00"/><rect x="1463" y="403" width="6" height="6" fill="#f6ff00"/><rect x="1469" y="403" width="6" height="6" fill="#faff00"/><rect x="1475" y="403" width="6" height="6" fill="#fdff00"/><rect x="1481" y="403" width="6" height="6" fill="#fffe00"/><rect x="1487" y="403" width="6" height="6" fill="#fffb00"/><rect x="1493" y="403" width="6" height="6" fill="#fff800"/><rect x="1499" y="403" width="6" height="6" fill="#fff500"/><rect x="1505" y="403" width="6" height="6" fill="#fff200"/><rect x="1511" y="403" width="6" height="6" fill="#ffef00"/><rect x="1517" y="403" width="6" height="6" fill="#ffec00"/><rect x="1523" y="403" width="6" height="6" fill="#ffe900"/><rect x="1529" y="403" width="6" height="6" fill="#ffe700"/><rect x="1535" y="403" width="6" height="6" fill="#ffe400"/><rect x="1541" y="403" width="6" height="6" fill="#ffe200"/><rect x="1547" y="403" width="6" height="6" fill="#ffdf00"/><rect x="1553" y="403" width="6" height="6" fill="#ffdd00"/><rect x="1337" y="409" width="6" height="6" fill="#b7ff05"/><rect x="1343" y="409" width="6" height="6" fill="#baff04"/><rect x="1349" y="409" width="6" height="6" fill="#bdff04"/><rect x="1355" y="409" width="6" height="6" fill="#c0ff03"/><rect x="1361" y="409" width="6" height="6" fill="#c3ff02"/><rect x="1367" y="409" width="6" height="6" fill="#c6ff02"/><rect x="1373" y="409" width="6" height="6" fill="#c9ff01"/><rect x="1379" y="409" width="6" height="6" fill="#ccff00"/><rect x="1385" y="409" width="6" height="6" fill="#cfff00"/><rect x="1391" y="409" width="6" height="6" fill="#d2ff00"/><rect x="1397" y="409" width="6" height="6" fill="#d6ff00"/><rect x="1403" y="409" width="6" height="6" fill="#d9ff00"/><rect x="1409" y="409" width="6" height="6" fill="#dcff00"/><rect x="1415" y="409" width="6" height="6" fill="#dfff00"/><rect x="1421" y="409" width="6" height="6" fill="#e3ff00"/><rect x="1427" y="409" width="6" height="6" fill="#e6ff00"/><rect x="1433" y="409" width="6" height="6" fill="#e9ff00"/><rect x="1439" y="409" width="6" height="6" fill="#ecff00"/><rect x="1445" y="409" width="6" height="6" fill="#f0ff00"/><rect x="1451" y="409" width="6" height="6" fill="#f3ff00"/><rect x="1457" y="409" width="6" height="6" fill="#f6ff00"/><rect x="1463" y="409" width="6" height="6" fill="#f9ff00"/><rect x="1469" y="409" width="6" height="6" fill="#fdff00"/><rect x="1475" y="409" width="6" height="6" fill="#fffe00"/><rect x="1481" y="409" width="6" height="6" fill="#fffb00"/><rect x="1487" y="409" width="6" height="6" fill="#fff800"/><rect x="1493" y="409" width="6" height="6" fill="#fff500"/><rect x="1499" y="409" width="6" height="6" fill="#fff200"/><rect x="1505" y="409" width="6" height="6" fill="#ffef00"/><rect x="1511" y="409" width="6" height="6" fill="#ffec00"/><rect x="1517" y="409" width="6" height="6" fill="#ffe900"/><rect x="1523" y="409" width="6" height="6" fill="#ffe700"/><rect x="1529" y="409" width="6" height="6" fill="#ffe400"/><rect x="1535" y="409" width="6" height="6" fill="#ffe200"/><rect x="1541" y="409" width="6" height="6" fill="#ffdf00"/><rect x="1547" y="409" width="6" height="6" fill="#ffdd00"/><rect x="1553" y="409" width="6" height="6" fill="#ffda00"/><rect x="1337" y="415" width="6" height="6" fill="#b9ff06"/><rect x="1343" y="415" width="6" height="6" fill="#bcff06"/><rect x="1349" y="415" width="6" height="6" fill="#bfff05"/><rect x="1355" y="415" width="6" height="6" fill="#c2ff04"/><rect x="1361" y="415" width="6" height="6" fill="#c5ff04"/><rect x="1367" y="415" width="6" height="6" fill="#c8ff03"/><rect x="1373" y="415" width="6" height="6" fill="#cbff02"/><rect x="1379" y="415" width="6" height="6" fill="#cfff02"/><rect x="1385" y="415" width="6" height="6" fill="#d2ff01"/><rect x="1391" y="415" width="6" height="6" fill="#d5ff00"/><rect x="1397" y="415" width="6" height="6" fill="#d8ff00"/><rect x="1403" y="415" width="6" height="6" fill="#dbff00"/><rect x="1409" y="415" width="6" height="6" fill="#dfff00"/><rect x="1415" y="415" width="6" height="6" fill="#e2ff00"/><rect x="1421" y="415" width="6" height="6" fill="#e5ff00"/><rect x="1427" y="415" width="6" height="6" fill="#e9ff00"/><rect x="1433" y="415" width="6" height="6" fill="#ecff00"/><rect x="1439" y="415" width="6" height="6" fill="#efff00"/><rect x="1445" y="415" width="6" height="6" fill="#f2ff00"/><rect x="1451" y="415" width="6" height="6" fill="#f6ff00"/><rect x="1457" y="415" width="6" height="6" fill="#f9ff00"/><rect x="1463" y="415" width="6" height="6" fill="#fcff00"/><rect x="1469" y="415" width="6" height="6" fill="#fffe00"/><rect x="1475" y="415" width="6" height="6" fill="#fffb00"/><rect x="1481" y="415" width="6" height="6" fill="#fff800"/><rect x="1487" y="415" width="6" height="6" fill="#fff500"/><rect x="1493" y="415" width="6" height="6" fill="#fff200"/><rect x="1499" y="415" width="6" height="6" fill="#ffef00"/><rect x="1505" y="415" width="6" height="6" fill="#ffec00"/><rect x="1511" y="415" width="6" height="6" fill="#ffe900"/><rect x="1517" y="415" width="6" height="6" fill="#ffe700"/><rect x="1523" y="415" width="6" height="6" fill="#ffe400"/><rect x="1529" y="415" width="6" height="6" fill="#ffe100"/><rect x="1535" y="415" width="6" height="6" fill="#ffdf00"/><rect x="1541" y="415" width="6" height="6" fill="#ffdc00"/><rect x="1547" y="415" width="6" height="6" fill="#ffda00"/><rect x="1553" y="415" width="6" height="6" fill="#ffd800"/><rect x="1337" y="421" width="6" height="6" fill="#bbff08"/><rect x="1343" y="421" width="6" height="6" fill="#beff07"/><rect x="1349" y="421" width="6" height="6" fill="#c2ff06"/><rect x="1355" y="421" width="6" height="6" fill="#c5ff06"/><rect x="1361" y="421" width="6" height="6" fill="#c8ff05"/><rect x="1367" y="421" width="6" height="6" fill="#cbff04"/><rect x="1373" y="421" width="6" height="6" fill="#ceff04"/><rect x="1379" y="421" width="6" height="6" fill="#d1ff03"/><rect x="1385" y="421" width="6" height="6" fill="#d4ff02"/><rect x="1391" y="421" width="6" height="6" fill="#d8ff01"/><rect x="1397" y="421" width="6" height="6" fill="#dbff01"/><rect x="1403" y="421" width="6" height="6" fill="#deff00"/><rect x="1409" y="421" width="6" height="6" fill="#e1ff00"/><rect x="1415" y="421" width="6" height="6" fill="#e5ff00"/><rect x="1421" y="421" width="6" height="6" fill="#e8ff00"/><rect x="1427" y="421" width="6" height="6" fill="#ebff00"/><rect x="1433" y="421" width="6" height="6" fill="#efff00"/><rect x="1439" y="421" width="6" height="6" fill="#f2ff00"/><rect x="1445" y="421" width="6" height="6" fill="#f5ff00"/><rect x="1451" y="421" width="6" height="6" fill="#f9ff00"/><rect x="1457" y="421" width="6" height="6" fill="#fcff00"/><rect x="1463" y="421" width="6" height="6" fill="#ffff00"/><rect x="1469" y="421" width="6" height="6" fill="#fffb00"/><rect x="1475" y="421" width="6" height="6" fill="#fff800"/><rect x="1481" y="421" width="6" height="6" fill="#fff500"/><rect x="1487" y="421" width="6" height="6" fill="#fff200"/><rect x="1493" y="421" width="6" height="6" fill="#ffef00"/><rect x="1499" y="421" width="6" height="6" fill="#ffec00"/><rect x="1505" y="421" width="6" height="6" fill="#ffe900"/><rect x="1511" y="421" width="6" height="6" fill="#ffe700"/><rect x="1517" y="421" width="6" height="6" fill="#ffe400"/><rect x="1523" y="421" width="6" height="6" fill="#ffe100"/><rect x="1529" y="421" width="6" height="6" fill="#ffdf00"/><rect x="1535" y="421" width="6" height="6" fill="#ffdc00"/><rect x="1541" y="421" width="6" height="6" fill="#ffda00"/><rect x="1547" y="421" width="6" height="6" fill="#ffd700"/><rect x="1553" y="421" width="6" height="6" fill="#ffd500"/><rect x="1337" y="427" width="6" height="6" fill="#beff09"/><rect x="1343" y="427" width="6" height="6" fill="#c1ff08"/><rect x="1349" y="427" width="6" height="6" fill="#c4ff08"/><rect x="1355" y="427" width="6" height="6" fill="#c7ff07"/><rect x="1361" y="427" width="6" height="6" fill="#caff06"/><rect x="1367" y="427" width="6" height="6" fill="#cdff06"/><rect x="1373" y="427" width="6" height="6" fill="#d1ff05"/><rect x="1379" y="427" width="6" height="6" fill="#d4ff04"/><rect x="1385" y="427" width="6" height="6" fill="#d7ff04"/><rect x="1391" y="427" width="6" height="6" fill="#daff03"/><rect x="1397" y="427" width="6" height="6" fill="#deff02"/><rect x="1403" y="427" width="6" height="6" fill="#e1ff01"/><rect x="1409" y="427" width="6" height="6" fill="#e4ff01"/><rect x="1415" y="427" width="6" height="6" fill="#e7ff00"/><rect x="1421" y="427" width="6" height="6" fill="#ebff00"/><rect x="1427" y="427" width="6" height="6" fill="#eeff00"/><rect x="1433" y="427" width="6" height="6" fill="#f1ff00"/><rect x="1439" y="427" width="6" height="6" fill="#f5ff00"/><rect x="1445" y="427" width="6" height="6" fill="#f8ff00"/><rect x="1451" y="427" width="6" height="6" fill="#fcff00"/><rect x="1457" y="427" width="6" height="6" fill="#ffff00"/><rect x="1463" y="427" width="6" height="6" fill="#fffc00"/><rect x="1469" y="427" width="6" height="6" fill="#fff800"/><rect x="1475" y="427" width="6" height="6" fill="#fff500"/><rect x="1481" y="427" width="6" height="6" fill="#fff200"/><rect x="1487" y="427" width="6" height="6" fill="#ffef00"/><rect x="1493" y="427" width="6" height="6" fill="#ffec00"/><rect x="1499" y="427" width="6" height="6" fill="#ffe900"/><rect x="1505" y="427" width="6" height="6" fill="#ffe700"/><rect x="1511" y="427" width="6" height="6" fill="#ffe400"/><rect x="1517" y="427" width="6" height="6" fill="#ffe100"/><rect x="1523" y="427" width="6" height="6" fill="#ffdf00"/><rect x="1529" y="427" width="6" height="6" fill="#ffdc00"/><rect x="1535" y="427" width="6" height="6" fill="#ffda00"/><rect x="1541" y="427" width="6" height="6" fill="#ffd700"/><rect x="1547" y="427" width="6" height="6" fill="#ffd500"/><rect x="1553" y="427" width="6" height="6" fill="#ffd200"/><rect x="1337" y="433" width="6" height="6" fill="#c0ff0a"/><rect x="1343" y="433" width="6" height="6" fill="#c4ff0a"/><rect x="1349" y="433" width="6" height="6" fill="#c7ff09"/><rect x="1355" y="433" width="6" height="6" fill="#caff08"/><rect x="1361" y="433" width="6" height="6" fill="#cdff08"/><rect x="1367" y="433" width="6" height="6" fill="#d0ff07"/><rect x="1373" y="433" width="6" height="6" fill="#d3ff06"/><rect x="1379" y="433" width="6" height="6" fill="#d7ff06"/><rect x="1385" y="433" width="6" height="6" fill="#daff05"/><rect x="1391" y="433" width="6" height="6" fill="#ddff04"/><rect x="1397" y="433" width="6" height="6" fill="#e0ff03"/><rect x="1403" y="433" width="6" height="6" fill="#e4ff03"/><rect x="1409" y="433" width="6" height="6" fill="#e7ff02"/><rect x="1415" y="433" width="6" height="6" fill="#eaff01"/><rect x="1421" y="433" width="6" height="6" fill="#eeff01"/><rect x="1427" y="433" width="6" height="6" fill="#f1ff00"/><rect x="1433" y="433" width="6" height="6" fill="#f4ff00"/><rect x="1439" y="433" width="6" height="6" fill="#f8ff00"/><rect x="1445" y="433" width="6" height="6" fill="#fbff00"/><rect x="1451" y="433" width="6" height="6" fill="#ffff00"/><rect x="1457" y="433" width="6" height="6" fill="#fffc00"/><rect x="1463" y="433" width="6" height="6" fill="#fff900"/><rect x="1469" y="433" width="6" height="6" fill="#fff500"/><rect x="1475" y="433" width="6" height="6" fill="#fff200"/><rect x="1481" y="433" width="6" height="6" fill="#ffef00"/><rect x="1487" y="433" width="6" height="6" fill="#ffec00"/><rect x="1493" y="433" width="6" height="6" fill="#ffe900"/><rect x="1499" y="433" width="6" height="6" fill="#ffe700"/><rect x="1505" y="433" width="6" height="6" fill="#ffe400"/><rect x="1511" y="433" width="6" height="6" fill="#ffe100"/><rect x="1517" y="433" width="6" height="6" fill="#ffde00"/><rect x="1523" y="433" width="6" height="6" fill="#ffdc00"/><rect x="1529" y="433" width="6" height="6" fill="#ffd900"/><rect x="1535" y="433" width="6" height="6" fill="#ffd700"/><rect x="1541" y="433" width="6" height="6" fill="#ffd500"/><rect x="1547" y="433" width="6" height="6" fill="#ffd200"/><rect x="1553" y="433" width="6" height="6" fill="#ffd000"/><rect x="1337" y="439" width="6" height="6" fill="#c3ff0c"/><rect x="1343" y="439" width="6" height="6" fill="#c6ff0b"/><rect x="1349" y="439" width="6" height="6" fill="#c9ff0a"/><rect x="1355" y="439" width="6" height="6" fill="#ccff0a"/><rect x="1361" y="439" width="6" height="6" fill="#d0ff09"/><rect x="1367" y="439" width="6" height="6" fill="#d3ff08"/><rect x="1373" y="439" width="6" height="6" fill="#d6ff08"/><rect x="1379" y="439" width="6" height="6" fill="#d9ff07"/><rect x="1385" y="439" width="6" height="6" fill="#ddff06"/><rect x="1391" y="439" width="6" height="6" fill="#e0ff06"/><rect x="1397" y="439" width="6" height="6" fill="#e3ff05"/><rect x="1403" y="439" width="6" height="6" fill="#e7ff04"/><rect x="1409" y="439" width="6" height="6" fill="#eaff03"/><rect x="1415" y="439" width="6" height="6" fill="#edff03"/><rect x="1421" y="439" width="6" height="6" fill="#f1ff02"/><rect x="1427" y="439" width="6" height="6" fill="#f4ff01"/><rect x="1433" y="439" width="6" height="6" fill="#f7ff01"/><rect x="1439" y="439" width="6" height="6" fill="#fbff00"/><rect x="1445" y="439" width="6" height="6" fill="#feff00"/><rect x="1451" y="439" width="6" height="6" fill="#fffc00"/><rect x="1457" y="439" width="6" height="6" fill="#fff900"/><rect x="1463" y="439" width="6" height="6" fill="#fff600"/><rect x="1469" y="439" width="6" height="6" fill="#fff200"/><rect x="1475" y="439" width="6" height="6" fill="#ffef00"/><rect x="1481" y="439" width="6" height="6" fill="#ffec00"/><rect x="1487" y="439" width="6" height="6" fill="#ffe900"/><rect x="1493" y="439" width="6" height="6" fill="#ffe700"/><rect x="1499" y="439" width="6" height="6" fill="#ffe400"/><rect x="1505" y="439" width="6" height="6" fill="#ffe100"/><rect x="1511" y="439" width="6" height="6" fill="#ffde00"/><rect x="1517" y="439" width="6" height="6" fill="#ffdc00"/><rect x="1523" y="439" width="6" height="6" fill="#ffd900"/><rect x="1529" y="439" width="6" height="6" fill="#ffd700"/><rect x="1535" y="439" width="6" height="6" fill="#ffd400"/><rect x="1541" y="439" width="6" height="6" fill="#ffd200"/><rect x="1547" y="439" width="6" height="6" fill="#ffd000"/><rect x="1553" y="439" width="6" height="6" fill="#ffcd00"/><rect x="1337" y="445" width="6" height="6" fill="#c6ff0d"/><rect x="1343" y="445" width="6" height="6" fill="#c9ff0c"/><rect x="1349" y="445" width="6" height="6" fill="#ccff0c"/><rect x="1355" y="445" width="6" height="6" fill="#cfff0b"/><rect x="1361" y="445" width="6" height="6" fill="#d2ff0a"/><rect x="1367" y="445" width="6" height="6" fill="#d6ff0a"/><rect x="1373" y="445" width="6" height="6" fill="#d9ff09"/><rect x="1379" y="445" width="6" height="6" fill="#dcff08"/><rect x="1385" y="445" width="6" height="6" fill="#dfff08"/><rect x="1391" y="445" width="6" height="6" fill="#e3ff07"/><rect x="1397" y="445" width="6" height="6" fill="#e6ff06"/><rect x="1403" y="445" width="6" height="6" fill="#e9ff06"/><rect x="1409" y="445" width="6" height="6" fill="#edff05"/><rect x="1415" y="445" width="6" height="6" fill="#f0ff04"/><rect x="1421" y="445" width="6" height="6" fill="#f4ff03"/><rect x="1427" y="445" width="6" height="6" fill="#f7ff03"/><rect x="1433" y="445" width="6" height="6" fill="#fbff02"/><rect x="1439" y="445" width="6" height="6" fill="#feff01"/><rect x="1445" y="445" width="6" height="6" fill="#fffc01"/><rect x="1451" y="445" width="6" height="6" fill="#fff900"/><rect x="1457" y="445" width="6" height="6" fill="#fff600"/><rect x="1463" y="445" width="6" height="6" fill="#fff300"/><rect x="1469" y="445" width="6" height="6" fill="#ffef00"/><rect x="1475" y="445" width="6" height="6" fill="#ffec00"/><rect x="1481" y="445" width="6" height="6" fill="#ffe900"/><rect x="1487" y="445" width="6" height="6" fill="#ffe600"/><rect x="1493" y="445" width="6" height="6" fill="#ffe400"/><rect x="1499" y="445" width="6" height="6" fill="#ffe100"/><rect x="1505" y="445" width="6" height="6" fill="#ffde00"/><rect x="1511" y="445" width="6" height="6" fill="#ffdc00"/><rect x="1517" y="445" width="6" height="6" fill="#ffd900"/><rect x="1523" y="445" width="6" height="6" fill="#ffd600"/><rect x="1529" y="445" width="6" height="6" fill="#ffd400"/><rect x="1535" y="445" width="6" height="6" fill="#ffd200"/><rect x="1541" y="445" width="6" height="6" fill="#ffcf00"/><rect x="1547" y="445" width="6" height="6" fill="#ffcd00"/><rect x="1553" y="445" width="6" height="6" fill="#ffcb00"/><rect x="1337" y="451" width="6" height="6" fill="#c8ff0f"/><rect x="1343" y="451" width="6" height="6" fill="#cbff0e"/><rect x="1349" y="451" width="6" height="6" fill="#cfff0d"/><rect x="1355" y="451" width="6" height="6" fill="#d2ff0d"/><rect x="1361" y="451" width="6" height="6" fill="#d5ff0c"/><rect x="1367" y="451" width="6" height="6" fill="#d8ff0b"/><rect x="1373" y="451" width="6" height="6" fill="#dcff0b"/><rect x="1379" y="451" width="6" height="6" fill="#dfff0a"/><rect x="1385" y="451" width="6" height="6" fill="#e2ff09"/><rect x="1391" y="451" width="6" height="6" fill="#e6ff08"/><rect x="1397" y="451" width="6" height="6" fill="#e9ff08"/><rect x="1403" y="451" width="6" height="6" fill="#ecff07"/><rect x="1409" y="451" width="6" height="6" fill="#f0ff06"/><rect x="1415" y="451" width="6" height="6" fill="#f3ff06"/><rect x="1421" y="451" width="6" height="6" fill="#f7ff05"/><rect x="1427" y="451" width="6" height="6" fill="#faff04"/><rect x="1433" y="451" width="6" height="6" fill="#feff03"/><rect x="1439" y="451" width="6" height="6" fill="#fffd03"/><rect x="1445" y="451" width="6" height="6" fill="#fff902"/><rect x="1451" y="451" width="6" height="6" fill="#fff601"/><rect x="1457" y="451" width="6" height="6" fill="#fff300"/><rect x="1463" y="451" width="6" height="6" fill="#ffef00"/><rect x="1469" y="451" width="6" height="6" fill="#ffec00"/><rect x="1475" y="451" width="6" height="6" fill="#ffe900"/><rect x="1481" y="451" width="6" height="6" fill="#ffe600"/><rect x="1487" y="451" width="6" height="6" fill="#ffe400"/><rect x="1493" y="451" width="6" height="6" fill="#ffe100"/><rect x="1499" y="451" width="6" height="6" fill="#ffde00"/><rect x="1505" y="451" width="6" height="6" fill="#ffdb00"/><rect x="1511" y="451" width="6" height="6" fill="#ffd900"/><rect x="1517" y="451" width="6" height="6" fill="#ffd600"/><rect x="1523" y="451" width="6" height="6" fill="#ffd400"/><rect x="1529" y="451" width="6" height="6" fill="#ffd100"/><rect x="1535" y="451" width="6" height="6" fill="#ffcf00"/><rect x="1541" y="451" width="6" height="6" fill="#ffcd00"/><rect x="1547" y="451" width="6" height="6" fill="#ffca00"/><rect x="1553" y="451" width="6" height="6" fill="#ffc800"/><rect x="1337" y="457" width="6" height="6" fill="#cbff10"/><rect x="1343" y="457" width="6" height="6" fill="#ceff0f"/><rect x="1349" y="457" width="6" height="6" fill="#d1ff0f"/><rect x="1355" y="457" width="6" height="6" fill="#d5ff0e"/><rect x="1361" y="457" width="6" height="6" fill="#d8ff0d"/><rect x="1367" y="457" width="6" height="6" fill="#dbff0d"/><rect x="1373" y="457" width="6" height="6" fill="#dfff0c"/><rect x="1379" y="457" width="6" height="6" fill="#e2ff0b"/><rect x="1385" y="457" width="6" height="6" fill="#e5ff0b"/><rect x="1391" y="457" width="6" height="6" fill="#e9ff0a"/><rect x="1397" y="457" width="6" height="6" fill="#ecff09"/><rect x="1403" y="457" width="6" height="6" fill="#f0ff08"/><rect x="1409" y="457" width="6" height="6" fill="#f3ff08"/><rect x="1415" y="457" width="6" height="6" fill="#f6ff07"/><rect x="1421" y="457" width="6" height="6" fill="#faff06"/><rect x="1427" y="457" width="6" height="6" fill="#fdff06"/><rect x="1433" y="457" width="6" height="6" fill="#fffd05"/><rect x="1439" y="457" width="6" height="6" fill="#fffa04"/><rect x="1445" y="457" width="6" height="6" fill="#fff603"/><rect x="1451" y="457" width="6" height="6" fill="#fff303"/><rect x="1457" y="457" width="6" height="6" fill="#fff002"/><rect x="1463" y="457" width="6" height="6" fill="#ffec01"/><rect x="1469" y="457" width="6" height="6" fill="#ffe900"/><rect x="1475" y="457" width="6" height="6" fill="#ffe600"/><rect x="1481" y="457" width="6" height="6" fill="#ffe300"/><rect x="1487" y="457" width="6" height="6" fill="#ffe100"/><rect x="1493" y="457" width="6" height="6" fill="#ffde00"/><rect x="1499" y="457" width="6" height="6" fill="#ffdb00"/><rect x="1505" y="457" width="6" height="6" fill="#ffd800"/><rect x="1511" y="457" width="6" height="6" fill="#ffd600"/><rect x="1517" y="457" width="6" height="6" fill="#ffd300"/><rect x="1523" y="457" width="6" height="6" fill="#ffd100"/><rect x="1529" y="457" width="6" height="6" fill="#ffcf00"/><rect x="1535" y="457" width="6" height="6" fill="#ffcc00"/><rect x="1541" y="457" width="6" height="6" fill="#ffca00"/><rect x="1547" y="457" width="6" height="6" fill="#ffc800"/><rect x="1553" y="457" width="6" height="6" fill="#ffc500"/><rect x="1337" y="463" width="6" height="6" fill="#ceff12"/><rect x="1343" y="463" width="6" height="6" fill="#d1ff11"/><rect x="1349" y="463" width="6" height="6" fill="#d4ff10"/><rect x="1355" y="463" width="6" height="6" fill="#d7ff10"/><rect x="1361" y="463" width="6" height="6" fill="#dbff0f"/><rect x="1367" y="463" width="6" height="6" fill="#deff0e"/><rect x="1373" y="463" width="6" height="6" fill="#e1ff0d"/><rect x="1379" y="463" width="6" height="6" fill="#e5ff0d"/><rect x="1385" y="463" width="6" height="6" fill="#e8ff0c"/><rect x="1391" y="463" width="6" height="6" fill="#ecff0b"/><rect x="1397" y="463" width="6" height="6" fill="#efff0b"/><rect x="1403" y="463" width="6" height="6" fill="#f3ff0a"/><rect x="1409" y="463" width="6" height="6" fill="#f6ff09"/><rect x="1415" y="463" width="6" height="6" fill="#faff09"/><rect x="1421" y="463" width="6" height="6" fill="#fdff08"/><rect x="1427" y="463" width="6" height="6" fill="#fffd07"/><rect x="1433" y="463" width="6" height="6" fill="#fffa06"/><rect x="1439" y="463" width="6" height="6" fill="#fff605"/><rect x="1445" y="463" width="6" height="6" fill="#fff305"/><rect x="1451" y="463" width="6" height="6" fill="#fff004"/><rect x="1457" y="463" width="6" height="6" fill="#ffed03"/><rect x="1463" y="463" width="6" height="6" fill="#ffe902"/><rect x="1469" y="463" width="6" height="6" fill="#ffe602"/><rect x="1475" y="463" width="6" height="6" fill="#ffe301"/><rect x="1481" y="463" width="6" height="6" fill="#ffe000"/><rect x="1487" y="463" width="6" height="6" fill="#ffde00"/><rect x="1493" y="463" width="6" height="6" fill="#ffdb00"/><rect x="1499" y="463" width="6" height="6" fill="#ffd800"/><rect x="1505" y="463" width="6" height="6" fill="#ffd600"/><rect x="1511" y="463" width="6" height="6" fill="#ffd300"/><rect x="1517" y="463" width="6" height="6" fill="#ffd100"/><rect x="1523" y="463" width="6" height="6" fill="#ffce00"/><rect x="1529" y="463" width="6" height="6" fill="#ffcc00"/><rect x="1535" y="463" width="6" height="6" fill="#ffca00"/><rect x="1541" y="463" width="6" height="6" fill="#ffc700"/><rect x="1547" y="463" width="6" height="6" fill="#ffc500"/><rect x="1553" y="463" width="6" height="6" fill="#ffc300"/><rect x="1337" y="469" width="6" height="6" fill="#d0ff13"/><rect x="1343" y="469" width="6" height="6" fill="#d4ff12"/><rect x="1349" y="469" width="6" height="6" fill="#d7ff12"/><rect x="1355" y="469" width="6" height="6" fill="#daff11"/><rect x="1361" y="469" width="6" height="6" fill="#deff10"/><rect x="1367" y="469" width="6" height="6" fill="#e1ff10"/><rect x="1373" y="469" width="6" height="6" fill="#e4ff0f"/><rect x="1379" y="469" width="6" height="6" fill="#e8ff0e"/><rect x="1385" y="469" width="6" height="6" fill="#ebff0e"/><rect x="1391" y="469" width="6" height="6" fill="#efff0d"/><rect x="1397" y="469" width="6" height="6" fill="#f2ff0c"/><rect x="1403" y="469" width="6" height="6" fill="#f6ff0b"/><rect x="1409" y="469" width="6" height="6" fill="#f9ff0b"/><rect x="1415" y="469" width="6" height="6" fill="#fdff0a"/><rect x="1421" y="469" width="6" height="6" fill="#fffe09"/><rect x="1427" y="469" width="6" height="6" fill="#fffa08"/><rect x="1433" y="469" width="6" height="6" fill="#fff708"/><rect x="1439" y="469" width="6" height="6" fill="#fff307"/><rect x="1445" y="469" width="6" height="6" fill="#fff006"/><rect x="1451" y="469" width="6" height="6" fill="#ffed05"/><rect x="1457" y="469" width="6" height="6" fill="#ffea04"/><rect x="1463" y="469" width="6" height="6" fill="#ffe704"/><rect x="1469" y="469" width="6" height="6" fill="#ffe403"/><rect x="1475" y="469" width="6" height="6" fill="#ffe102"/><rect x="1481" y="469" width="6" height="6" fill="#ffde02"/><rect x="1487" y="469" width="6" height="6" fill="#ffdb01"/><rect x="1493" y="469" width="6" height="6" fill="#ffd800"/><rect x="1499" y="469" width="6" height="6" fill="#ffd500"/><rect x="1505" y="469" width="6" height="6" fill="#ffd300"/><rect x="1511" y="469" width="6" height="6" fill="#ffd000"/><rect x="1517" y="469" width="6" height="6" fill="#ffce00"/><rect x="1523" y="469" width="6" height="6" fill="#ffcb00"/><rect x="1529" y="469" width="6" height="6" fill="#ffc900"/><rect x="1535" y="469" width="6" height="6" fill="#ffc700"/><rect x="1541" y="469" width="6" height="6" fill="#ffc500"/><rect x="1547" y="469" width="6" height="6" fill="#ffc200"/><rect x="1553" y="469" width="6" height="6" fill="#ffc000"/><rect x="1337" y="475" width="6" height="6" fill="#d3ff15"/><rect x="1343" y="475" width="6" height="6" fill="#d6ff14"/><rect x="1349" y="475" width="6" height="6" fill="#daff13"/><rect x="1355" y="475" width="6" height="6" fill="#ddff13"/><rect x="1361" y="475" width="6" height="6" fill="#e1ff12"/><rect x="1367" y="475" width="6" height="6" fill="#e4ff11"/><rect x="1373" y="475" width="6" height="6" fill="#e7ff11"/><rect x="1379" y="475" width="6" height="6" fill="#ebff10"/><rect x="1385" y="475" width="6" height="6" fill="#eeff0f"/><rect x="1391" y="475" width="6" height="6" fill="#f2ff0e"/><rect x="1397" y="475" width="6" height="6" fill="#f5ff0e"/><rect x="1403" y="475" width="6" height="6" fill="#f9ff0d"/><rect x="1409" y="475" width="6" height="6" fill="#fdff0c"/><rect x="1415" y="475" width="6" height="6" fill="#fffe0c"/><rect x="1421" y="475" width="6" height="6" fill="#fffa0b"/><rect x="1427" y="475" width="6" height="6" fill="#fff70a"/><rect x="1433" y="475" width="6" height="6" fill="#fff409"/><rect x="1439" y="475" width="6" height="6" fill="#fff008"/><rect x="1445" y="475" width="6" height="6" fill="#ffed07"/><rect x="1451" y="475" width="6" height="6" fill="#ffea07"/><rect x="1457" y="475" width="6" height="6" fill="#ffe706"/><rect x="1463" y="475" width="6" height="6" fill="#ffe405"/><rect x="1469" y="475" width="6" height="6" fill="#ffe104"/><rect x="1475" y="475" width="6" height="6" fill="#ffde04"/><rect x="1481" y="475" width="6" height="6" fill="#ffdb03"/><rect x="1487" y="475" width="6" height="6" fill="#ffd802"/><rect x="1493" y="475" width="6" height="6" fill="#ffd501"/><rect x="1499" y="475" width="6" height="6" fill="#ffd301"/><rect x="1505" y="475" width="6" height="6" fill="#ffd000"/><rect x="1511" y="475" width="6" height="6" fill="#ffcd00"/><rect x="1517" y="475" width="6" height="6" fill="#ffcb00"/><rect x="1523" y="475" width="6" height="6" fill="#ffc900"/><rect x="1529" y="475" width="6" height="6" fill="#ffc600"/><rect x="1535" y="475" width="6" height="6" fill="#ffc400"/><rect x="1541" y="475" width="6" height="6" fill="#ffc200"/><rect x="1547" y="475" width="6" height="6" fill="#ffc000"/><rect x="1553" y="475" width="6" height="6" fill="#ffbe00"/><rect x="1337" y="481" width="6" height="6" fill="#d6ff16"/><rect x="1343" y="481" width="6" height="6" fill="#d9ff16"/><rect x="1349" y="481" width="6" height="6" fill="#ddff15"/><rect x="1355" y="481" width="6" height="6" fill="#e0ff14"/><rect x="1361" y="481" width="6" height="6" fill="#e4ff13"/><rect x="1367" y="481" width="6" height="6" fill="#e7ff13"/><rect x="1373" y="481" width="6" height="6" fill="#ebff12"/><rect x="1379" y="481" width="6" height="6" fill="#eeff11"/><rect x="1385" y="481" width="6" height="6" fill="#f2ff11"/><rect x="1391" y="481" width="6" height="6" fill="#f5ff10"/><rect x="1397" y="481" width="6" height="6" fill="#f9ff0f"/><rect x="1403" y="481" width="6" height="6" fill="#fcff0f"/><rect x="1409" y="481" width="6" height="6" fill="#fffe0e"/><rect x="1415" y="481" width="6" height="6" fill="#fffb0d"/><rect x="1421" y="481" width="6" height="6" fill="#fff70c"/><rect x="1427" y="481" width="6" height="6" fill="#fff40b"/><rect x="1433" y="481" width="6" height="6" fill="#fff00a"/><rect x="1439" y="481" width="6" height="6" fill="#ffed09"/><rect x="1445" y="481" width="6" height="6" fill="#ffea09"/><rect x="1451" y="481" width="6" height="6" fill="#ffe708"/><rect x="1457" y="481" width="6" height="6" fill="#ffe407"/><rect x="1463" y="481" width="6" height="6" fill="#ffe106"/><rect x="1469" y="481" width="6" height="6" fill="#ffde06"/><rect x="1475" y="481" width="6" height="6" fill="#ffdb05"/><rect x="1481" y="481" width="6" height="6" fill="#ffd804"/><rect x="1487" y="481" width="6" height="6" fill="#ffd503"/><rect x="1493" y="481" width="6" height="6" fill="#ffd303"/><rect x="1499" y="481" width="6" height="6" fill="#ffd002"/><rect x="1505" y="481" width="6" height="6" fill="#ffcd01"/><rect x="1511" y="481" width="6" height="6" fill="#ffcb01"/><rect x="1517" y="481" width="6" height="6" fill="#ffc800"/><rect x="1523" y="481" width="6" height="6" fill="#ffc600"/><rect x="1529" y="481" width="6" height="6" fill="#ffc400"/><rect x="1535" y="481" width="6" height="6" fill="#ffc100"/><rect x="1541" y="481" width="6" height="6" fill="#ffbf00"/><rect x="1547" y="481" width="6" height="6" fill="#ffbd00"/><rect x="1553" y="481" width="6" height="6" fill="#ffbb00"/><rect x="1337" y="487" width="6" height="6" fill="#d9ff18"/><rect x="1343" y="487" width="6" height="6" fill="#dcff17"/><rect x="1349" y="487" width="6" height="6" fill="#e0ff16"/><rect x="1355" y="487" width="6" height="6" fill="#e3ff16"/><rect x="1361" y="487" width="6" height="6" fill="#e7ff15"/><rect x="1367" y="487" width="6" height="6" fill="#eaff14"/><rect x="1373" y="487" width="6" height="6" fill="#eeff14"/><rect x="1379" y="487" width="6" height="6" fill="#f1ff13"/><rect x="1385" y="487" width="6" height="6" fill="#f5ff12"/><rect x="1391" y="487" width="6" height="6" fill="#f8ff12"/><rect x="1397" y="487" width="6" height="6" fill="#fcff11"/><rect x="1403" y="487" width="6" height="6" fill="#fffe10"/><rect x="1409" y="487" width="6" height="6" fill="#fffb0f"/><rect x="1415" y="487" width="6" height="6" fill="#fff70e"/><rect x="1421" y="487" width="6" height="6" fill="#fff40d"/><rect x="1427" y="487" width="6" height="6" fill="#fff10c"/><rect x="1433" y="487" width="6" height="6" fill="#ffed0c"/><rect x="1439" y="487" width="6" height="6" fill="#ffea0b"/><rect x="1445" y="487" width="6" height="6" fill="#ffe70a"/><rect x="1451" y="487" width="6" height="6" fill="#ffe409"/><rect x="1457" y="487" width="6" height="6" fill="#ffe108"/><rect x="1463" y="487" width="6" height="6" fill="#ffde08"/><rect x="1469" y="487" width="6" height="6" fill="#ffdb07"/><rect x="1475" y="487" width="6" height="6" fill="#ffd806"/><rect x="1481" y="487" width="6" height="6" fill="#ffd505"/><rect x="1487" y="487" width="6" height="6" fill="#ffd305"/><rect x="1493" y="487" width="6" height="6" fill="#ffd004"/><rect x="1499" y="487" width="6" height="6" fill="#ffcd03"/><rect x="1505" y="487" width="6" height="6" fill="#ffcb03"/><rect x="1511" y="487" width="6" height="6" fill="#ffc802"/><rect x="1517" y="487" width="6" height="6" fill="#ffc601"/><rect x="1523" y="487" width="6" height="6" fill="#ffc301"/><rect x="1529" y="487" width="6" height="6" fill="#ffc100"/><rect x="1535" y="487" width="6" height="6" fill="#ffbf00"/><rect x="1541" y="487" width="6" height="6" fill="#ffbd00"/><rect x="1547" y="487" width="6" height="6" fill="#ffba00"/><rect x="1553" y="487" width="6" height="6" fill="#ffb800"/><rect x="1337" y="493" width="6" height="6" fill="#dcff19"/><rect x="1343" y="493" width="6" height="6" fill="#dfff19"/><rect x="1349" y="493" width="6" height="6" fill="#e3ff18"/><rect x="1355" y="493" width="6" height="6" fill="#e6ff17"/><rect x="1361" y="493" width="6" height="6" fill="#eaff17"/><rect x="1367" y="493" width="6" height="6" fill="#edff16"/><rect x="1373" y="493" width="6" height="6" fill="#f1ff15"/><rect x="1379" y="493" width="6" height="6" fill="#f4ff15"/><rect x="1385" y="493" width="6" height="6" fill="#f8ff14"/><rect x="1391" y="493" width="6" height="6" fill="#fcff13"/><rect x="1397" y="493" width="6" height="6" fill="#ffff12"/><rect x="1403" y="493" width="6" height="6" fill="#fffb11"/><rect x="1409" y="493" width="6" height="6" fill="#fff811"/><rect x="1415" y="493" width="6" height="6" fill="#fff410"/><rect x="1421" y="493" width="6" height="6" fill="#fff10f"/><rect x="1427" y="493" width="6" height="6" fill="#ffee0e"/><rect x="1433" y="493" width="6" height="6" fill="#ffea0d"/><rect x="1439" y="493" width="6" height="6" fill="#ffe70c"/><rect x="1445" y="493" width="6" height="6" fill="#ffe40b"/><rect x="1451" y="493" width="6" height="6" fill="#ffe10a"/><rect x="1457" y="493" width="6" height="6" fill="#ffde0a"/><rect x="1463" y="493" width="6" height="6" fill="#ffdb09"/><rect x="1469" y="493" width="6" height="6" fill="#ffd808"/><rect x="1475" y="493" width="6" height="6" fill="#ffd507"/><rect x="1481" y="493" width="6" height="6" fill="#ffd307"/><rect x="1487" y="493" width="6" height="6" fill="#ffd006"/><rect x="1493" y="493" width="6" height="6" fill="#ffcd05"/><rect x="1499" y="493" width="6" height="6" fill="#ffcb04"/><rect x="1505" y="493" width="6" height="6" fill="#ffc804"/><rect x="1511" y="493" width="6" height="6" fill="#ffc603"/><rect x="1517" y="493" width="6" height="6" fill="#ffc302"/><rect x="1523" y="493" width="6" height="6" fill="#ffc102"/><rect x="1529" y="493" width="6" height="6" fill="#ffbe01"/><rect x="1535" y="493" width="6" height="6" fill="#ffbc01"/><rect x="1541" y="493" width="6" height="6" fill="#ffba00"/><rect x="1547" y="493" width="6" height="6" fill="#ffb800"/><rect x="1553" y="493" width="6" height="6" fill="#ffb600"/><rect x="1337" y="499" width="6" height="6" fill="#dfff1b"/><rect x="1343" y="499" width="6" height="6" fill="#e2ff1a"/><rect x="1349" y="499" width="6" height="6" fill="#e6ff1a"/><rect x="1355" y="499" width="6" height="6" fill="#e9ff19"/><rect x="1361" y="499" width="6" height="6" fill="#edff18"/><rect x="1367" y="499" width="6" height="6" fill="#f0ff18"/><rect x="1373" y="499" width="6" height="6" fill="#f4ff17"/><rect x="1379" y="499" width="6" height="6" fill="#f8ff16"/><rect x="1385" y="499" width="6" height="6" fill="#fbff16"/><rect x="1391" y="499" width="6" height="6" fill="#ffff15"/><rect x="1397" y="499" width="6" height="6" fill="#fffb14"/><rect x="1403" y="499" width="6" height="6" fill="#fff813"/><rect x="1409" y="499" width="6" height="6" fill="#fff412"/><rect x="1415" y="499" width="6" height="6" fill="#fff111"/><rect x="1421" y="499" width="6" height="6" fill="#ffee10"/><rect x="1427" y="499" width="6" height="6" fill="#ffea0f"/><rect x="1433" y="499" width="6" height="6" fill="#ffe70e"/><rect x="1439" y="499" width="6" height="6" fill="#ffe40d"/><rect x="1445" y="499" width="6" height="6" fill="#ffe10d"/><rect x="1451" y="499" width="6" height="6" fill="#ffde0c"/><rect x="1457" y="499" width="6" height="6" fill="#ffdb0b"/><rect x="1463" y="499" width="6" height="6" fill="#ffd80a"/><rect x="1469" y="499" width="6" height="6" fill="#ffd509"/><rect x="1475" y="499" width="6" height="6" fill="#ffd309"/><rect x="1481" y="499" width="6" height="6" fill="#ffd008"/><rect x="1487" y="499" width="6" height="6" fill="#ffcd07"/><rect x="1493" y="499" width="6" height="6" fill="#ffcb06"/><rect x="1499" y="499" width="6" height="6" fill="#ffc806"/><rect x="1505" y="499" width="6" height="6" fill="#ffc605"/><rect x="1511" y="499" width="6" height="6" fill="#ffc304"/><rect x="1517" y="499" width="6" height="6" fill="#ffc104"/><rect x="1523" y="499" width="6" height="6" fill="#ffbe03"/><rect x="1529" y="499" width="6" height="6" fill="#ffbc02"/><rect x="1535" y="499" width="6" height="6" fill="#ffba02"/><rect x="1541" y="499" width="6" height="6" fill="#ffb801"/><rect x="1547" y="499" width="6" height="6" fill="#ffb501"/><rect x="1553" y="499" width="6" height="6" fill="#ffb300"/><rect x="1337" y="505" width="6" height="6" fill="#e2ff1d"/><rect x="1343" y="505" width="6" height="6" fill="#e5ff1c"/><rect x="1349" y="505" width="6" height="6" fill="#e9ff1b"/><rect x="1355" y="505" width="6" height="6" fill="#ecff1b"/><rect x="1361" y="505" width="6" height="6" fill="#f0ff1a"/><rect x="1367" y="505" width="6" height="6" fill="#f4ff19"/><rect x="1373" y="505" width="6" height="6" fill="#f7ff19"/><rect x="1379" y="505" width="6" height="6" fill="#fbff18"/><rect x="1385" y="505" width="6" height="6" fill="#ffff17"/><rect x="1391" y="505" width="6" height="6" fill="#fffc16"/><rect x="1397" y="505" width="6" height="6" fill="#fff815"/><rect x="1403" y="505" width="6" height="6" fill="#fff514"/><rect x="1409" y="505" width="6" height="6" fill="#fff113"/><rect x="1415" y="505" width="6" height="6" fill="#ffee12"/><rect x="1421" y="505" width="6" height="6" fill="#ffeb11"/><rect x="1427" y="505" width="6" height="6" fill="#ffe710"/><rect x="1433" y="505" width="6" height="6" fill="#ffe410"/><rect x="1439" y="505" width="6" height="6" fill="#ffe10f"/><rect x="1445" y="505" width="6" height="6" fill="#ffde0e"/><rect x="1451" y="505" width="6" height="6" fill="#ffdb0d"/><rect x="1457" y="505" width="6" height="6" fill="#ffd80c"/><rect x="1463" y="505" width="6" height="6" fill="#ffd50b"/><rect x="1469" y="505" width="6" height="6" fill="#ffd30b"/><rect x="1475" y="505" width="6" height="6" fill="#ffd00a"/><rect x="1481" y="505" width="6" height="6" fill="#ffcd09"/><rect x="1487" y="505" width="6" height="6" fill="#ffcb08"/><rect x="1493" y="505" width="6" height="6" fill="#ffc808"/><rect x="1499" y="505" width="6" height="6" fill="#ffc607"/><rect x="1505" y="505" width="6" height="6" fill="#ffc306"/><rect x="1511" y="505" width="6" height="6" fill="#ffc106"/><rect x="1517" y="505" width="6" height="6" fill="#ffbe05"/><rect x="1523" y="505" width="6" height="6" fill="#ffbc04"/><rect x="1529" y="505" width="6" height="6" fill="#ffba04"/><rect x="1535" y="505" width="6" height="6" fill="#ffb703"/><rect x="1541" y="505" width="6" height="6" fill="#ffb502"/><rect x="1547" y="505" width="6" height="6" fill="#ffb302"/><rect x="1553" y="505" width="6" height="6" fill="#ffb101"/><rect x="1337" y="511" width="6" height="6" fill="#e5ff1e"/><rect x="1343" y="511" width="6" height="6" fill="#e8ff1e"/><rect x="1349" y="511" width="6" height="6" fill="#ecff1d"/><rect x="1355" y="511" width="6" height="6" fill="#f0ff1c"/><rect x="1361" y="511" width="6" height="6" fill="#f3ff1c"/><rect x="1367" y="511" width="6" height="6" fill="#f7ff1b"/><rect x="1373" y="511" width="6" height="6" fill="#fbff1a"/><rect x="1379" y="511" width="6" height="6" fill="#feff1a"/><rect x="1385" y="511" width="6" height="6" fill="#fffc19"/><rect x="1391" y="511" width="6" height="6" fill="#fff818"/><rect x="1397" y="511" width="6" height="6" fill="#fff517"/><rect x="1403" y="511" width="6" height="6" fill="#fff116"/><rect x="1409" y="511" width="6" height="6" fill="#ffee15"/><rect x="1415" y="511" width="6" height="6" fill="#ffeb14"/><rect x="1421" y="511" width="6" height="6" fill="#ffe813"/><rect x="1427" y="511" width="6" height="6" fill="#ffe412"/><rect x="1433" y="511" width="6" height="6" fill="#ffe111"/><rect x="1439" y="511" width="6" height="6" fill="#ffde10"/><rect x="1445" y="511" width="6" height="6" fill="#ffdb0f"/><rect x="1451" y="511" width="6" height="6" fill="#ffd80e"/><rect x="1457" y="511" width="6" height="6" fill="#ffd60d"/><rect x="1463" y="511" width="6" height="6" fill="#ffd30d"/><rect x="1469" y="511" width="6" height="6" fill="#ffd00c"/><rect x="1475" y="511" width="6" height="6" fill="#ffcd0b"/><rect x="1481" y="511" width="6" height="6" fill="#ffcb0a"/><rect x="1487" y="511" width="6" height="6" fill="#ffc80a"/><rect x="1493" y="511" width="6" height="6" fill="#ffc609"/><rect x="1499" y="511" width="6" height="6" fill="#ffc308"/><rect x="1505" y="511" width="6" height="6" fill="#ffc107"/><rect x="1511" y="511" width="6" height="6" fill="#ffbe07"/><rect x="1517" y="511" width="6" height="6" fill="#ffbc06"/><rect x="1523" y="511" width="6" height="6" fill="#ffba05"/><rect x="1529" y="511" width="6" height="6" fill="#ffb705"/><rect x="1535" y="511" width="6" height="6" fill="#ffb504"/><rect x="1541" y="511" width="6" height="6" fill="#ffb303"/><rect x="1547" y="511" width="6" height="6" fill="#ffb103"/><rect x="1553" y="511" width="6" height="6" fill="#ffaf02"/><rect x="1337" y="517" width="6" height="6" fill="#e8ff20"/><rect x="1343" y="517" width="6" height="6" fill="#ecff1f"/><rect x="1349" y="517" width="6" height="6" fill="#efff1f"/><rect x="1355" y="517" width="6" height="6" fill="#f3ff1e"/><rect x="1361" y="517" width="6" height="6" fill="#f7ff1d"/><rect x="1367" y="517" width="6" height="6" fill="#faff1d"/><rect x="1373" y="517" width="6" height="6" fill="#feff1c"/><rect x="1379" y="517" width="6" height="6" fill="#fffc1b"/><rect x="1385" y="517" width="6" height="6" fill="#fff91a"/><rect x="1391" y="517" width="6" height="6" fill="#fff519"/><rect x="1397" y="517" width="6" height="6" fill="#fff218"/><rect x="1403" y="517" width="6" height="6" fill="#ffee17"/><rect x="1409" y="517" width="6" height="6" fill="#ffeb16"/><rect x="1415" y="517" width="6" height="6" fill="#ffe815"/><rect x="1421" y="517" width="6" height="6" fill="#ffe514"/><rect x="1427" y="517" width="6" height="6" fill="#ffe113"/><rect x="1433" y="517" width="6" height="6" fill="#ffde12"/><rect x="1439" y="517" width="6" height="6" fill="#ffdb11"/><rect x="1445" y="517" width="6" height="6" fill="#ffd810"/><rect x="1451" y="517" width="6" height="6" fill="#ffd610"/><rect x="1457" y="517" width="6" height="6" fill="#ffd30f"/><rect x="1463" y="517" width="6" height="6" fill="#ffd00e"/><rect x="1469" y="517" width="6" height="6" fill="#ffcd0d"/><rect x="1475" y="517" width="6" height="6" fill="#ffcb0c"/><rect x="1481" y="517" width="6" height="6" fill="#ffc80c"/><rect x="1487" y="517" width="6" height="6" fill="#ffc50b"/><rect x="1493" y="517" width="6" height="6" fill="#ffc30a"/><rect x="1499" y="517" width="6" height="6" fill="#ffc109"/><rect x="1505" y="517" width="6" height="6" fill="#ffbe09"/><rect x="1511" y="517" width="6" height="6" fill="#ffbc08"/><rect x="1517" y="517" width="6" height="6" fill="#ffb907"/><rect x="1523" y="517" width="6" height="6" fill="#ffb706"/><rect x="1529" y="517" width="6" height="6" fill="#ffb506"/><rect x="1535" y="517" width="6" height="6" fill="#ffb305"/><rect x="1541" y="517" width="6" height="6" fill="#ffb105"/><rect x="1547" y="517" width="6" height="6" fill="#ffae04"/><rect x="1553" y="517" width="6" height="6" fill="#ffac03"/></g></g></g></svg><svg style="position:absolute;left:0;top:0" width="1558" height="860"><rect x="1440.2" y="438.5" width="12.4" height="12.4" fill="rgba(255,255,255,0.1)" stroke="#f2f2f2" stroke-width="1.7"/><circle cx="1466.5" cy="443.5" r="4.5" fill="rgba(160,160,110,0.7)" stroke="#151515" stroke-width="1.5"/></svg><span class="t" style="left:44.8px;top:562.7px;font-size:25.00px;color:#f0f0f0;transform:scaleX(1.1017);transform-origin:0 0;-webkit-text-stroke:0.45px currentColor;">Avg dE2000: 0,93</span><span class="t" style="left:39.6px;top:600.5px;font-size:25.00px;color:#f0f0f0;transform:scaleX(1.1285);transform-origin:0 0;-webkit-text-stroke:0.45px currentColor;">Max dE2000: 2,54</span><span class="t" style="left:10.5px;top:645.6px;font-size:25.00px;color:#f0f0f0;transform:scaleX(1.1203);transform-origin:0 0;-webkit-text-stroke:0.45px currentColor;">Current Reading</span><span class="t" style="left:11.0px;top:681.5px;font-size:22.50px;color:#f0f0f0;transform:scaleX(1.0456);transform-origin:0 0;-webkit-text-stroke:0.45px currentColor;">x: 0,4246</span><span class="t" style="left:157.4px;top:681.5px;font-size:22.50px;color:#f0f0f0;transform:scaleX(1.0510);transform-origin:0 0;-webkit-text-stroke:0.45px currentColor;">y: 0,5056</span><span class="t" style="left:10.6px;top:719.5px;font-size:22.50px;color:#f0f0f0;transform:scaleX(1.0391);transform-origin:0 0;-webkit-text-stroke:0.45px currentColor;">fL: 48,53</span><span class="t" style="left:10.6px;top:751.5px;font-size:22.50px;color:#f0f0f0;transform:scaleX(1.0939);transform-origin:0 0;-webkit-text-stroke:0.45px currentColor;">cd/m²: 166,26</span><svg style="position:absolute;left:0;top:0" width="1558" height="860"><defs><linearGradient id="gr" x1="0" y1="0" x2="0" y2="1"><stop offset="0" stop-color="#ff5c5c"/><stop offset="1" stop-color="#ff2020"/></linearGradient><linearGradient id="gg" x1="0" y1="0" x2="0" y2="1"><stop offset="0" stop-color="#56ac56"/><stop offset="1" stop-color="#1f961f"/></linearGradient><linearGradient id="gb" x1="0" y1="0" x2="0" y2="1"><stop offset="0" stop-color="#5a5aff"/><stop offset="1" stop-color="#3c3cff"/></linearGradient></defs><rect x="332.2" y="590.6" width="234.0" height="168.8" fill="#232323"/><line x1="326.2" y1="590.5" x2="566.2" y2="590.5" stroke="#b0b0b0" stroke-width="1"/><line x1="326.2" y1="632.5" x2="566.2" y2="632.5" stroke="#b0b0b0" stroke-width="1"/><line x1="326.2" y1="675.5" x2="566.2" y2="675.5" stroke="#b0b0b0" stroke-width="1"/><line x1="326.2" y1="717.5" x2="566.2" y2="717.5" stroke="#b0b0b0" stroke-width="1"/><line x1="326.2" y1="759.5" x2="566.2" y2="759.5" stroke="#b0b0b0" stroke-width="1"/><line x1="332.5" y1="590.6" x2="332.5" y2="765.4" stroke="#b0b0b0" stroke-width="1"/><line x1="566.5" y1="590.6" x2="566.5" y2="765.4" stroke="#b0b0b0" stroke-width="1"/><rect x="356.0" y="663.0" width="60.1" height="96.4" fill="url(#gr)" stroke="#000" stroke-width="1"/><rect x="417.9" y="674.5" width="60.8" height="84.9" fill="url(#gg)" stroke="#000" stroke-width="1"/><rect x="480.5" y="718.5" width="60.9" height="40.9" fill="url(#gb)" stroke="#000" stroke-width="1"/></svg><span class="t" style="left:435.0px;top:574.8px;font-size:13.00px;color:#d4d4d4;transform:translateX(-50%) scaleX(1.0093);transform-origin:50% 0;">RGB Balance</span><span class="t" style="left:325.8px;top:584.0px;font-size:13.20px;color:#d8d8d8;transform:translateX(-100%);transform-origin:100% 0;">110</span><span class="t" style="left:325.8px;top:626.2px;font-size:13.20px;color:#d8d8d8;transform:translateX(-100%);transform-origin:100% 0;">105</span><span class="t" style="left:325.8px;top:668.4px;font-size:13.20px;color:#d8d8d8;transform:translateX(-100%);transform-origin:100% 0;">100</span><span class="t" style="left:325.8px;top:710.6px;font-size:13.20px;color:#d8d8d8;transform:translateX(-100%);transform-origin:100% 0;">95</span><span class="t" style="left:325.8px;top:752.8px;font-size:13.20px;color:#d8d8d8;transform:translateX(-100%);transform-origin:100% 0;">90</span><span class="t" style="left:449.0px;top:762.8px;font-size:13.20px;color:#d8d8d8;transform:translateX(-50%);transform-origin:50% 0;">100%</span><div style="position:absolute;left:586.4px;top:560.4px;width:683.2px;height:221.1px;background:#000;"></div><div style="position:absolute;left:587.5px;top:561.5px;width:681.0px;height:13.4px;background:linear-gradient(#353535,#2e2e2e);"></div><div style="position:absolute;left:587.5px;top:574.9px;width:681.0px;height:12.9px;background:#151515;"></div><div style="position:absolute;left:587.5px;top:587.5px;width:681.0px;height:24.7px;background:#414141;"></div><div style="position:absolute;left:587.5px;top:611.6px;width:681.0px;height:24.7px;background:#7f7f7f;"></div><div style="position:absolute;left:587.5px;top:635.7px;width:681.0px;height:24.7px;background:#414141;"></div><div style="position:absolute;left:587.5px;top:659.8px;width:681.0px;height:24.7px;background:#7f7f7f;"></div><div style="position:absolute;left:587.5px;top:683.9px;width:681.0px;height:24.7px;background:#414141;"></div><div style="position:absolute;left:587.5px;top:708.0px;width:681.0px;height:24.7px;background:#7f7f7f;"></div><div style="position:absolute;left:587.5px;top:732.0px;width:681.0px;height:24.7px;background:#414141;"></div><div style="position:absolute;left:587.5px;top:756.1px;width:681.0px;height:24.7px;background:#7f7f7f;"></div><span class="t" style="left:819.8px;top:566.7px;font-size:15.40px;color:#f4f4f4;font-weight:bold;transform:translateX(-50%) scaleX(1.2268);transform-origin:50% 0;">20%</span><span class="t" style="left:919.6px;top:566.7px;font-size:15.40px;color:#f4f4f4;font-weight:bold;transform:translateX(-50%) scaleX(1.2268);transform-origin:50% 0;">40%</span><span class="t" style="left:1019.4px;top:566.7px;font-size:15.40px;color:#f4f4f4;font-weight:bold;transform:translateX(-50%) scaleX(1.2268);transform-origin:50% 0;">60%</span><span class="t" style="left:1119.1px;top:566.7px;font-size:15.40px;color:#f4f4f4;font-weight:bold;transform:translateX(-50%) scaleX(1.2268);transform-origin:50% 0;">80%</span><span class="t" style="left:1218.8px;top:566.7px;font-size:15.40px;color:#f4f4f4;font-weight:bold;transform:translateX(-50%) scaleX(1.2089);transform-origin:50% 0;">100%</span><span class="t" style="left:603.7px;top:592.8px;font-size:15.40px;color:#f4f4f4;font-weight:bold;transform:scaleX(1.3267);transform-origin:0 0;">x: CIE31</span><span class="t" style="left:775.3px;top:592.6px;font-size:15.60px;color:#ececec;transform:scaleX(1.3542);transform-origin:0 0;">0,3352</span><span class="t" style="left:875.1px;top:592.6px;font-size:15.60px;color:#ececec;transform:scaleX(1.3542);transform-origin:0 0;">0,3586</span><span class="t" style="left:974.9px;top:592.6px;font-size:15.60px;color:#ececec;transform:scaleX(1.3542);transform-origin:0 0;">0,3813</span><span class="t" style="left:1074.6px;top:592.6px;font-size:15.60px;color:#ececec;transform:scaleX(1.3542);transform-origin:0 0;">0,4026</span><span class="t" style="left:1174.3px;top:592.6px;font-size:15.60px;color:#ececec;transform:scaleX(1.3542);transform-origin:0 0;">0,4246</span><span class="t" style="left:603.7px;top:616.8px;font-size:15.40px;color:#f4f4f4;font-weight:bold;transform:scaleX(1.3267);transform-origin:0 0;">y: CIE31</span><span class="t" style="left:775.3px;top:616.6px;font-size:15.60px;color:#ececec;transform:scaleX(1.3542);transform-origin:0 0;">0,3643</span><span class="t" style="left:875.1px;top:616.6px;font-size:15.60px;color:#ececec;transform:scaleX(1.3878);transform-origin:0 0;">0,4011</span><span class="t" style="left:974.9px;top:616.6px;font-size:15.60px;color:#ececec;transform:scaleX(1.3542);transform-origin:0 0;">0,4367</span><span class="t" style="left:1074.6px;top:616.6px;font-size:15.60px;color:#ececec;transform:scaleX(1.3542);transform-origin:0 0;">0,4703</span><span class="t" style="left:1174.3px;top:616.6px;font-size:15.60px;color:#ececec;transform:scaleX(1.3542);transform-origin:0 0;">0,5056</span><span class="t" style="left:603.7px;top:640.8px;font-size:15.40px;color:#f4f4f4;font-weight:bold;transform:scaleX(1.2664);transform-origin:0 0;">Y</span><span class="t" style="left:775.3px;top:640.6px;font-size:15.60px;color:#ececec;transform:scaleX(1.3836);transform-origin:0 0;">176,0478</span><span class="t" style="left:875.1px;top:640.6px;font-size:15.60px;color:#ececec;transform:scaleX(1.3836);transform-origin:0 0;">172,7860</span><span class="t" style="left:974.9px;top:640.6px;font-size:15.60px;color:#ececec;transform:scaleX(1.3836);transform-origin:0 0;">170,2658</span><span class="t" style="left:1074.6px;top:640.6px;font-size:15.60px;color:#ececec;transform:scaleX(1.3836);transform-origin:0 0;">168,2171</span><span class="t" style="left:1174.3px;top:640.6px;font-size:15.60px;color:#ececec;transform:scaleX(1.3836);transform-origin:0 0;">166,2648</span><span class="t" style="left:603.7px;top:664.8px;font-size:15.40px;color:#f4f4f4;font-weight:bold;transform:scaleX(1.3822);transform-origin:0 0;">Target x:CIE31</span><span class="t" style="left:775.3px;top:664.6px;font-size:15.60px;color:#ececec;transform:scaleX(1.3542);transform-origin:0 0;">0,3344</span><span class="t" style="left:875.1px;top:664.6px;font-size:15.60px;color:#ececec;transform:scaleX(1.3542);transform-origin:0 0;">0,3564</span><span class="t" style="left:974.9px;top:664.6px;font-size:15.60px;color:#ececec;transform:scaleX(1.3542);transform-origin:0 0;">0,3773</span><span class="t" style="left:1074.6px;top:664.6px;font-size:15.60px;color:#ececec;transform:scaleX(1.3542);transform-origin:0 0;">0,3969</span><span class="t" style="left:1174.3px;top:664.6px;font-size:15.60px;color:#ececec;transform:scaleX(1.3542);transform-origin:0 0;">0,4193</span><span class="t" style="left:603.7px;top:688.8px;font-size:15.40px;color:#f4f4f4;font-weight:bold;transform:scaleX(1.3822);transform-origin:0 0;">Target y:CIE31</span><span class="t" style="left:775.3px;top:688.6px;font-size:15.60px;color:#ececec;transform:scaleX(1.3542);transform-origin:0 0;">0,3648</span><span class="t" style="left:875.1px;top:688.6px;font-size:15.60px;color:#ececec;transform:scaleX(1.3542);transform-origin:0 0;">0,4013</span><span class="t" style="left:974.9px;top:688.6px;font-size:15.60px;color:#ececec;transform:scaleX(1.3542);transform-origin:0 0;">0,4358</span><span class="t" style="left:1074.6px;top:688.6px;font-size:15.60px;color:#ececec;transform:scaleX(1.3542);transform-origin:0 0;">0,4682</span><span class="t" style="left:1174.3px;top:688.6px;font-size:15.60px;color:#ececec;transform:scaleX(1.3542);transform-origin:0 0;">0,5053</span><span class="t" style="left:603.7px;top:712.8px;font-size:15.40px;color:#f4f4f4;font-weight:bold;transform:scaleX(1.4292);transform-origin:0 0;">Target Y</span><span class="t" style="left:775.3px;top:712.6px;font-size:15.60px;color:#ececec;transform:scaleX(1.3836);transform-origin:0 0;">173,0547</span><span class="t" style="left:875.1px;top:712.6px;font-size:15.60px;color:#ececec;transform:scaleX(1.3836);transform-origin:0 0;">170,0171</span><span class="t" style="left:974.9px;top:712.6px;font-size:15.60px;color:#ececec;transform:scaleX(1.3836);transform-origin:0 0;">167,6831</span><span class="t" style="left:1074.6px;top:712.6px;font-size:15.60px;color:#ececec;transform:scaleX(1.3836);transform-origin:0 0;">165,8514</span><span class="t" style="left:1174.3px;top:712.6px;font-size:15.60px;color:#ececec;transform:scaleX(1.3836);transform-origin:0 0;">164,0806</span><span class="t" style="left:603.7px;top:736.8px;font-size:15.40px;color:#f4f4f4;font-weight:bold;transform:scaleX(1.4371);transform-origin:0 0;">ΔE 2000</span><span class="t" style="left:775.3px;top:736.6px;font-size:15.60px;color:#ececec;transform:scaleX(1.3542);transform-origin:0 0;">0,6729</span><span class="t" style="left:875.1px;top:736.6px;font-size:15.60px;color:#ececec;transform:scaleX(1.3542);transform-origin:0 0;">0,7866</span><span class="t" style="left:974.9px;top:736.6px;font-size:15.60px;color:#ececec;transform:scaleX(1.3542);transform-origin:0 0;">0,9936</span><span class="t" style="left:1074.6px;top:736.6px;font-size:15.60px;color:#ececec;transform:scaleX(1.3542);transform-origin:0 0;">1,2069</span><span class="t" style="left:1174.3px;top:736.6px;font-size:15.60px;color:#ececec;transform:scaleX(1.3542);transform-origin:0 0;">1,1381</span><span class="t" style="left:603.7px;top:760.8px;font-size:15.40px;color:#f4f4f4;font-weight:bold;transform:scaleX(1.3523);transform-origin:0 0;">ΔE ITP</span><span class="t" style="left:775.3px;top:760.6px;font-size:15.60px;color:#ececec;transform:scaleX(1.3542);transform-origin:0 0;">1,4592</span><span class="t" style="left:875.1px;top:760.6px;font-size:15.60px;color:#ececec;transform:scaleX(1.3542);transform-origin:0 0;">1,7865</span><span class="t" style="left:974.9px;top:760.6px;font-size:15.60px;color:#ececec;transform:scaleX(1.4232);transform-origin:0 0;">2,5111</span><span class="t" style="left:1074.6px;top:760.6px;font-size:15.60px;color:#ececec;transform:scaleX(1.3542);transform-origin:0 0;">3,6443</span><span class="t" style="left:1174.3px;top:760.6px;font-size:15.60px;color:#ececec;transform:scaleX(1.3542);transform-origin:0 0;">3,5556</span><div style="position:absolute;left:0.0px;top:802.7px;width:1558.0px;height:57.3px;background:linear-gradient(#474747,#252525);"></div><div style="position:absolute;left:0.0px;top:802.7px;width:43.0px;height:57.3px;background:linear-gradient(#b4b4b4,#8a8a8a 40%,#6e6e6e);border-top-right-radius:5px;"></div><div style="position:absolute;left:13.8px;top:805.2px;width:13.6px;height:13.6px;border-radius:50%;background:linear-gradient(#8a8a8a,#9c9c9c 60%,#bcbcbc);"></div><div style="position:absolute;left:17px;top:808.6px;width:0;height:0;border-left:3.6px solid transparent;border-right:3.6px solid transparent;border-bottom:4.4px solid #222"></div><div style="position:absolute;left:3.5px;top:829.4px;width:34.5px;height:30.0px;background:#ffff00;border-radius:4px;box-shadow:inset 0 0 0 1px #c8c800;"></div><div style="position:absolute;left:49.4px;top:802.7px;width:149.0px;height:57.3px;background:linear-gradient(#acacac,#8c8c8c 45%,#6a6a6a 70%,#5e5e5e);border-top-left-radius:5px;border-top-right-radius:5px;"></div><div style="position:absolute;left:55.2px;top:808.8px;width:137.4px;height:35.2px;background:#c1c2a6;border-radius:4px;box-shadow:inset 0 1px 1px rgba(0,0,0,0.25);"></div><span class="t" style="left:123.9px;top:849.7px;font-size:10.50px;color:#2c2c2c;font-weight:bold;transform:translateX(-50%);transform-origin:50% 0;">20%</span><div style="position:absolute;left:201.3px;top:802.7px;width:149.0px;height:57.3px;background:linear-gradient(#acacac,#8c8c8c 45%,#6a6a6a 70%,#5e5e5e);border-top-left-radius:5px;border-top-right-radius:5px;"></div><div style="position:absolute;left:207.1px;top:808.8px;width:137.4px;height:35.2px;background:#c2c288;border-radius:4px;box-shadow:inset 0 1px 1px rgba(0,0,0,0.25);"></div><span class="t" style="left:275.8px;top:849.7px;font-size:10.50px;color:#2c2c2c;font-weight:bold;transform:translateX(-50%);transform-origin:50% 0;">40%</span><div style="position:absolute;left:353.2px;top:802.7px;width:149.0px;height:57.3px;background:linear-gradient(#acacac,#8c8c8c 45%,#6a6a6a 70%,#5e5e5e);border-top-left-radius:5px;border-top-right-radius:5px;"></div><div style="position:absolute;left:359.0px;top:808.8px;width:137.4px;height:35.2px;background:#c2c26a;border-radius:4px;box-shadow:inset 0 1px 1px rgba(0,0,0,0.25);"></div><span class="t" style="left:427.7px;top:849.7px;font-size:10.50px;color:#2c2c2c;font-weight:bold;transform:translateX(-50%);transform-origin:50% 0;">60%</span><div style="position:absolute;left:504.8px;top:802.7px;width:149.0px;height:57.3px;background:linear-gradient(#acacac,#8c8c8c 45%,#6a6a6a 70%,#5e5e5e);border-top-left-radius:5px;border-top-right-radius:5px;"></div><div style="position:absolute;left:510.6px;top:808.8px;width:137.4px;height:35.2px;background:#c2c24e;border-radius:4px;box-shadow:inset 0 1px 1px rgba(0,0,0,0.25);"></div><span class="t" style="left:579.3px;top:849.7px;font-size:10.50px;color:#2c2c2c;font-weight:bold;transform:translateX(-50%);transform-origin:50% 0;">80%</span><div style="position:absolute;left:657.7px;top:802.7px;width:149.0px;height:57.3px;background:#1d1d1d;border-top-left-radius:5px;border-top-right-radius:5px;"></div><div style="position:absolute;left:663.5px;top:808.8px;width:137.4px;height:35.2px;background:#c4c400;border-radius:4px;"></div><span class="t" style="left:732.2px;top:849.7px;font-size:10.50px;color:#f6f6f6;font-weight:bold;transform:translateX(-50%);transform-origin:50% 0;">100%</span><div style="position:absolute;left:1232.0px;top:802.7px;width:8.0px;height:57.3px;background:linear-gradient(#3a3a3a,#202020);"></div><div style="position:absolute;left:1240.0px;top:802.7px;width:48.0px;height:18.5px;background:linear-gradient(#b0b0b0,#8c8c8c);border-top-left-radius:5px;border-top-right-radius:5px;"></div><div style="position:absolute;left:1240.0px;top:821.2px;width:48.0px;height:1.2px;background:#2a2a2a;"></div><div style="position:absolute;left:1240.0px;top:822.4px;width:48.0px;height:37.6px;background:linear-gradient(#a8a8a8,#7e7e7e);"></div><div style="position:absolute;left:1257.6px;top:805.2px;width:13.6px;height:13.6px;border-radius:50%;background:linear-gradient(#8a8a8a,#9c9c9c 60%,#bcbcbc);"></div><div style="position:absolute;left:1260.8px;top:808.6px;width:0;height:0;border-left:3.6px solid transparent;border-right:3.6px solid transparent;border-bottom:4.4px solid #222"></div><div style="position:absolute;left:1248.5px;top:827.0px;width:30.5px;height:30.5px;box-sizing:border-box;border:2.4px solid #202020;border-radius:5px;background:linear-gradient(#c4c4c4,#a6a6a6);"></div><div style="position:absolute;left:1257.0px;top:836.0px;width:13.4px;height:13.6px;background:#080808;"></div><div style="position:absolute;left:1288.0px;top:802.7px;width:270.0px;height:30.5px;background:linear-gradient(#aaaaaa,#8a8a8a 50%,#6e6e6e);"></div><div style="position:absolute;left:1334.7px;top:802.7px;width:1.3px;height:30.5px;background:#1e1e1e;"></div><div style="position:absolute;left:1380.0px;top:802.7px;width:1.3px;height:30.5px;background:#1e1e1e;"></div><div style="position:absolute;left:1424.8px;top:802.7px;width:1.3px;height:30.5px;background:#1e1e1e;"></div><div style="position:absolute;left:1469.7px;top:802.7px;width:1.3px;height:30.5px;background:#1e1e1e;"></div><div style="position:absolute;left:1514.8px;top:802.7px;width:1.3px;height:30.5px;background:#1e1e1e;"></div><div style="position:absolute;left:1288.0px;top:833.2px;width:270.0px;height:1.3px;background:#1e1e1e;"></div><div style="position:absolute;left:1288.0px;top:834.5px;width:270.0px;height:25.5px;background:linear-gradient(#b0b0b0,#8e8e8e 60%,#7a7a7a);"></div><div style="position:absolute;left:1424.8px;top:834.5px;width:1.3px;height:25.5px;background:#1e1e1e;"></div><div style="position:absolute;left:1286.8px;top:802.7px;width:1.3px;height:57.3px;background:#1e1e1e;"></div><div style="position:absolute;left:1302.0px;top:808.2px;width:19.6px;height:19.6px;border-radius:50%;background:linear-gradient(#7c7c7c,#8e8e8e 55%,#b4b4b4);box-shadow:0 1px 1px rgba(255,255,255,0.2)"></div><div style="position:absolute;left:1348.0px;top:808.2px;width:19.6px;height:19.6px;border-radius:50%;background:linear-gradient(#7c7c7c,#8e8e8e 55%,#b4b4b4);box-shadow:0 1px 1px rgba(255,255,255,0.2)"></div><div style="position:absolute;left:1393.2px;top:808.2px;width:19.6px;height:19.6px;border-radius:50%;background:linear-gradient(#7c7c7c,#8e8e8e 55%,#b4b4b4);box-shadow:0 1px 1px rgba(255,255,255,0.2)"></div><div style="position:absolute;left:1438.0px;top:808.2px;width:19.6px;height:19.6px;border-radius:50%;background:linear-gradient(#7c7c7c,#8e8e8e 55%,#b4b4b4);box-shadow:0 1px 1px rgba(255,255,255,0.2)"></div><div style="position:absolute;left:1483.1px;top:808.2px;width:19.6px;height:19.6px;border-radius:50%;background:linear-gradient(#7c7c7c,#8e8e8e 55%,#b4b4b4);box-shadow:0 1px 1px rgba(255,255,255,0.2)"></div><div style="position:absolute;left:1529.1px;top:808.2px;width:19.6px;height:19.6px;border-radius:50%;background:linear-gradient(#7c7c7c,#8e8e8e 55%,#b4b4b4);box-shadow:0 1px 1px rgba(255,255,255,0.2)"></div><div style="position:absolute;left:1310.1px;top:839.3px;width:19.0px;height:19.0px;border-radius:50%;background:linear-gradient(#7c7c7c,#8e8e8e 55%,#b4b4b4);box-shadow:0 1px 1px rgba(255,255,255,0.2)"></div><div style="position:absolute;left:1523.6px;top:839.1px;width:19.0px;height:19.0px;border-radius:50%;background:linear-gradient(#7c7c7c,#8e8e8e 55%,#b4b4b4);box-shadow:0 1px 1px rgba(255,255,255,0.2)"></div><svg style="position:absolute;left:0;top:0" width="1558" height="860" fill="none" stroke="#262626" stroke-linecap="butt"><rect x="1307.6" y="813.8" width="8.2" height="8.2" fill="#2a2a2a" stroke="none"/><path d="M1355.2 813.6 L1363.8 818.9 L1355.2 824.2Z" fill="#1e1e1e" stroke="none"/><path d="M1399.4 813.6 H1397.6 V823.8 H1399.4" stroke-width="1.9"/><path d="M1406.6 813.6 H1408.4 V823.8 H1406.6" stroke-width="1.9"/><rect x="1400.6" y="816.6" width="1.8" height="1.8" fill="#262626" stroke="none"/><rect x="1403.6" y="816.6" width="1.8" height="1.8" fill="#262626" stroke="none"/><path d="M1447.7 817.8 C1445.5 815.2 1441.4 814.8 1441.4 817.8 C1441.4 820.8 1445.5 820.4 1447.7 817.8 C1449.9 815.2 1454 814.8 1454 817.8 C1454 820.8 1449.9 820.4 1447.7 817.8Z" stroke-width="1.8"/><path d="M1488.6 817.2 A4.6 4.6 0 0 1 1496.4 814.6" stroke-width="2"/><path d="M1497.6 812 L1497.8 816.6 L1493.6 815.6Z" fill="#262626" stroke="none"/><path d="M1497.2 819.8 A4.6 4.6 0 0 1 1489.4 822.4" stroke-width="2"/><path d="M1488.2 825 L1488 820.4 L1492.2 821.4Z" fill="#262626" stroke="none"/><path d="M1319.2 844.6 L1315.6 849 L1319.2 853.4 M1323.4 844.6 L1319.8 849 L1323.4 853.4" stroke-width="1.6"/><path d="M1529.4 844.4 L1533 848.8 L1529.4 853.2 M1533.6 844.4 L1537.2 848.8 L1533.6 853.2" stroke-width="1.6"/></svg><span class="t" style="left:1347.0px;top:838.2px;font-size:22.00px;color:#262626;transform:scaleX(1.0179);transform-origin:0 0;-webkit-text-stroke:0.3px #262626;">Back</span><span class="t" style="left:1453.8px;top:838.2px;font-size:22.00px;color:#262626;transform:scaleX(1.1271);transform-origin:0 0;-webkit-text-stroke:0.3px #262626;">Next</span></body></html>
